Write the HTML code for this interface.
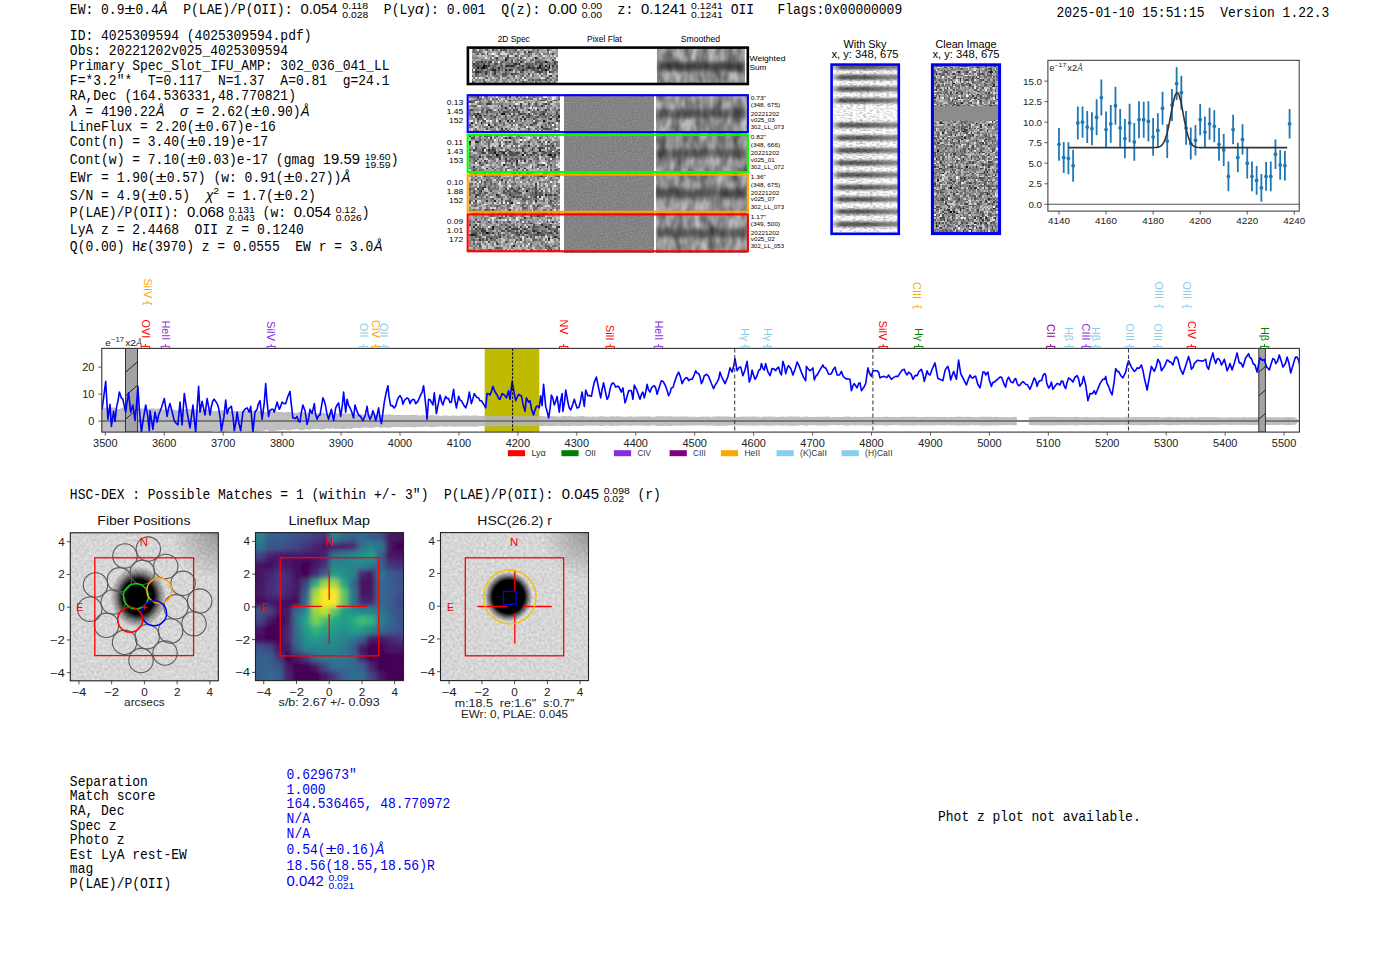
<!DOCTYPE html>
<html><head><meta charset="utf-8"><title>ELiXer report</title>
<style>html,body{margin:0;padding:0;background:#fff;overflow:hidden}svg{display:block} text{white-space:pre}</style></head>
<body><svg xml:space="preserve" width="1400" height="953" viewBox="0 0 1400 953">
<rect x="0" y="0" width="1400" height="953" fill="#fff"/>
<text transform="translate(69.85,13.90) scale(1,1.1)" font-family="Liberation Mono, monospace" font-size="13.01" fill="#000">EW: 0.9</text>
<text x="124.52" y="13.90" font-family="Liberation Sans, sans-serif" font-size="13.75" fill="#000" text-anchor="start" textLength="10.87" lengthAdjust="spacingAndGlyphs" >±</text>
<text transform="translate(135.39,13.90) scale(1,1.1)" font-family="Liberation Mono, monospace" font-size="13.01" fill="#000">0.4</text>
<text x="158.82" y="13.90" font-family="Liberation Sans, sans-serif" font-size="13.75" fill="#000" text-anchor="start" textLength="8.87" lengthAdjust="spacingAndGlyphs" font-style="italic" >Å</text>
<text transform="translate(167.69,13.90) scale(1,1.1)" font-family="Liberation Mono, monospace" font-size="13.01" fill="#000">  P(LAE)/P(OII): </text>
<text x="300.46" y="13.90" font-family="Liberation Sans, sans-serif" font-size="13.75" fill="#000" text-anchor="start" textLength="37.13" lengthAdjust="spacingAndGlyphs" >0.054</text>
<text x="342.29" y="9.20" font-family="Liberation Sans, sans-serif" font-size="9.62" fill="#000" text-anchor="start" textLength="25.99" lengthAdjust="spacingAndGlyphs" >0.118</text>
<text x="342.29" y="17.70" font-family="Liberation Sans, sans-serif" font-size="9.62" fill="#000" text-anchor="start" textLength="25.99" lengthAdjust="spacingAndGlyphs" >0.028</text>
<text transform="translate(368.28,13.90) scale(1,1.1)" font-family="Liberation Mono, monospace" font-size="13.01" fill="#000">  P(Ly</text>
<text x="415.14" y="13.90" font-family="Liberation Sans, sans-serif" font-size="13.75" fill="#000" text-anchor="start" textLength="8.55" lengthAdjust="spacingAndGlyphs" font-style="italic" >α</text>
<text transform="translate(423.24,13.90) scale(1,1.1)" font-family="Liberation Mono, monospace" font-size="13.01" fill="#000">): 0.001  Q(z): </text>
<text x="548.20" y="13.90" font-family="Liberation Sans, sans-serif" font-size="13.75" fill="#000" text-anchor="start" textLength="28.88" lengthAdjust="spacingAndGlyphs" >0.00</text>
<text x="581.78" y="9.20" font-family="Liberation Sans, sans-serif" font-size="9.62" fill="#000" text-anchor="start" textLength="20.22" lengthAdjust="spacingAndGlyphs" >0.00</text>
<text x="581.78" y="17.70" font-family="Liberation Sans, sans-serif" font-size="9.62" fill="#000" text-anchor="start" textLength="20.22" lengthAdjust="spacingAndGlyphs" >0.00</text>
<text transform="translate(602.00,13.90) scale(1,1.1)" font-family="Liberation Mono, monospace" font-size="13.01" fill="#000">  z: </text>
<text x="641.05" y="13.90" font-family="Liberation Sans, sans-serif" font-size="13.75" fill="#000" text-anchor="start" textLength="45.38" lengthAdjust="spacingAndGlyphs" >0.1241</text>
<text x="691.13" y="9.20" font-family="Liberation Sans, sans-serif" font-size="9.62" fill="#000" text-anchor="start" textLength="31.77" lengthAdjust="spacingAndGlyphs" >0.1241</text>
<text x="691.13" y="17.70" font-family="Liberation Sans, sans-serif" font-size="9.62" fill="#000" text-anchor="start" textLength="31.77" lengthAdjust="spacingAndGlyphs" >0.1241</text>
<text transform="translate(722.90,13.90) scale(1,1.1)" font-family="Liberation Mono, monospace" font-size="13.01" fill="#000"> OII   Flags:0x00000009</text>
<text transform="translate(1056.50,16.70) scale(1,1.1)" font-family="Liberation Mono, monospace" font-size="13.01" fill="#000">2025-01-10 15:51:15  Version 1.22.3</text>
<text transform="translate(69.85,40.40) scale(1,1.1)" font-family="Liberation Mono, monospace" font-size="13.01" fill="#000">ID: 4025309594 (4025309594.pdf)</text>
<text transform="translate(69.85,55.00) scale(1,1.1)" font-family="Liberation Mono, monospace" font-size="13.01" fill="#000">Obs: 20221202v025_4025309594</text>
<text transform="translate(69.85,70.00) scale(1,1.1)" font-family="Liberation Mono, monospace" font-size="13.01" fill="#000">Primary Spec_Slot_IFU_AMP: 302_036_041_LL</text>
<text transform="translate(69.85,85.00) scale(1,1.1)" font-family="Liberation Mono, monospace" font-size="13.01" fill="#000">F=*3.2"*  T=0.117  N=1.37  A=0.81  g=24.1</text>
<text transform="translate(69.85,99.50) scale(1,1.1)" font-family="Liberation Mono, monospace" font-size="13.01" fill="#000">RA,Dec (164.536331,48.770821)</text>
<text x="69.85" y="116.20" font-family="Liberation Sans, sans-serif" font-size="13.75" fill="#000" text-anchor="start" textLength="7.68" lengthAdjust="spacingAndGlyphs" font-style="italic" >λ</text>
<text transform="translate(77.53,116.20) scale(1,1.1)" font-family="Liberation Mono, monospace" font-size="13.01" fill="#000"> = 4190.22</text>
<text x="155.63" y="116.20" font-family="Liberation Sans, sans-serif" font-size="13.75" fill="#000" text-anchor="start" textLength="8.87" lengthAdjust="spacingAndGlyphs" font-style="italic" >Å</text>
<text transform="translate(164.50,116.20) scale(1,1.1)" font-family="Liberation Mono, monospace" font-size="13.01" fill="#000">  </text>
<text x="180.12" y="116.20" font-family="Liberation Sans, sans-serif" font-size="13.75" fill="#000" text-anchor="start" textLength="8.22" lengthAdjust="spacingAndGlyphs" font-style="italic" >σ</text>
<text transform="translate(188.34,116.20) scale(1,1.1)" font-family="Liberation Mono, monospace" font-size="13.01" fill="#000"> = 2.62(</text>
<text x="250.82" y="116.20" font-family="Liberation Sans, sans-serif" font-size="13.75" fill="#000" text-anchor="start" textLength="10.87" lengthAdjust="spacingAndGlyphs" >±</text>
<text transform="translate(261.69,116.20) scale(1,1.1)" font-family="Liberation Mono, monospace" font-size="13.01" fill="#000">0.90)</text>
<text x="300.74" y="116.20" font-family="Liberation Sans, sans-serif" font-size="13.75" fill="#000" text-anchor="start" textLength="8.87" lengthAdjust="spacingAndGlyphs" font-style="italic" >Å</text>
<text transform="translate(69.85,131.40) scale(1,1.1)" font-family="Liberation Mono, monospace" font-size="13.01" fill="#000">LineFlux = 2.20(</text>
<text x="194.81" y="131.40" font-family="Liberation Sans, sans-serif" font-size="13.75" fill="#000" text-anchor="start" textLength="10.87" lengthAdjust="spacingAndGlyphs" >±</text>
<text transform="translate(205.68,131.40) scale(1,1.1)" font-family="Liberation Mono, monospace" font-size="13.01" fill="#000">0.67)e-16</text>
<text transform="translate(69.85,146.40) scale(1,1.1)" font-family="Liberation Mono, monospace" font-size="13.01" fill="#000">Cont(n) = 3.40(</text>
<text x="187.00" y="146.40" font-family="Liberation Sans, sans-serif" font-size="13.75" fill="#000" text-anchor="start" textLength="10.87" lengthAdjust="spacingAndGlyphs" >±</text>
<text transform="translate(197.87,146.40) scale(1,1.1)" font-family="Liberation Mono, monospace" font-size="13.01" fill="#000">0.19)e-17</text>
<text transform="translate(69.85,164.30) scale(1,1.1)" font-family="Liberation Mono, monospace" font-size="13.01" fill="#000">Cont(w) = 7.10(</text>
<text x="187.00" y="164.30" font-family="Liberation Sans, sans-serif" font-size="13.75" fill="#000" text-anchor="start" textLength="10.87" lengthAdjust="spacingAndGlyphs" >±</text>
<text transform="translate(197.87,164.30) scale(1,1.1)" font-family="Liberation Mono, monospace" font-size="13.01" fill="#000">0.03)e-17 (gmag </text>
<text x="322.83" y="164.30" font-family="Liberation Sans, sans-serif" font-size="13.75" fill="#000" text-anchor="start" textLength="37.13" lengthAdjust="spacingAndGlyphs" >19.59</text>
<text x="364.66" y="159.60" font-family="Liberation Sans, sans-serif" font-size="9.62" fill="#000" text-anchor="start" textLength="25.99" lengthAdjust="spacingAndGlyphs" >19.60</text>
<text x="364.66" y="168.10" font-family="Liberation Sans, sans-serif" font-size="9.62" fill="#000" text-anchor="start" textLength="25.99" lengthAdjust="spacingAndGlyphs" >19.59</text>
<text transform="translate(390.65,164.30) scale(1,1.1)" font-family="Liberation Mono, monospace" font-size="13.01" fill="#000">)</text>
<text transform="translate(69.85,182.10) scale(1,1.1)" font-family="Liberation Mono, monospace" font-size="13.01" fill="#000">EWr = 1.90(</text>
<text x="155.76" y="182.10" font-family="Liberation Sans, sans-serif" font-size="13.75" fill="#000" text-anchor="start" textLength="10.87" lengthAdjust="spacingAndGlyphs" >±</text>
<text transform="translate(166.63,182.10) scale(1,1.1)" font-family="Liberation Mono, monospace" font-size="13.01" fill="#000">0.57) (w: 0.91(</text>
<text x="283.78" y="182.10" font-family="Liberation Sans, sans-serif" font-size="13.75" fill="#000" text-anchor="start" textLength="10.87" lengthAdjust="spacingAndGlyphs" >±</text>
<text transform="translate(294.64,182.10) scale(1,1.1)" font-family="Liberation Mono, monospace" font-size="13.01" fill="#000">0.27))</text>
<text x="341.50" y="182.10" font-family="Liberation Sans, sans-serif" font-size="13.75" fill="#000" text-anchor="start" textLength="8.87" lengthAdjust="spacingAndGlyphs" font-style="italic" >Å</text>
<text transform="translate(69.85,199.80) scale(1,1.1)" font-family="Liberation Mono, monospace" font-size="13.01" fill="#000">S/N = 4.9(</text>
<text x="147.95" y="199.80" font-family="Liberation Sans, sans-serif" font-size="13.75" fill="#000" text-anchor="start" textLength="10.87" lengthAdjust="spacingAndGlyphs" >±</text>
<text transform="translate(158.82,199.80) scale(1,1.1)" font-family="Liberation Mono, monospace" font-size="13.01" fill="#000">0.5)  </text>
<text x="205.68" y="199.80" font-family="Liberation Sans, sans-serif" font-size="13.75" fill="#000" text-anchor="start" textLength="7.68" lengthAdjust="spacingAndGlyphs" font-style="italic" >χ</text>
<text x="213.35" y="194.00" font-family="Liberation Sans, sans-serif" font-size="9.62" fill="#000" text-anchor="start" textLength="5.78" lengthAdjust="spacingAndGlyphs" >2</text>
<text transform="translate(219.13,199.80) scale(1,1.1)" font-family="Liberation Mono, monospace" font-size="13.01" fill="#000"> = 1.7(</text>
<text x="273.80" y="199.80" font-family="Liberation Sans, sans-serif" font-size="13.75" fill="#000" text-anchor="start" textLength="10.87" lengthAdjust="spacingAndGlyphs" >±</text>
<text transform="translate(284.67,199.80) scale(1,1.1)" font-family="Liberation Mono, monospace" font-size="13.01" fill="#000">0.2)</text>
<text transform="translate(69.85,217.40) scale(1,1.1)" font-family="Liberation Mono, monospace" font-size="13.01" fill="#000">P(LAE)/P(OII): </text>
<text x="187.00" y="217.40" font-family="Liberation Sans, sans-serif" font-size="13.75" fill="#000" text-anchor="start" textLength="37.13" lengthAdjust="spacingAndGlyphs" >0.068</text>
<text x="228.83" y="212.70" font-family="Liberation Sans, sans-serif" font-size="9.62" fill="#000" text-anchor="start" textLength="25.99" lengthAdjust="spacingAndGlyphs" >0.131</text>
<text x="228.83" y="221.20" font-family="Liberation Sans, sans-serif" font-size="9.62" fill="#000" text-anchor="start" textLength="25.99" lengthAdjust="spacingAndGlyphs" >0.043</text>
<text transform="translate(254.82,217.40) scale(1,1.1)" font-family="Liberation Mono, monospace" font-size="13.01" fill="#000"> (w: </text>
<text x="293.87" y="217.40" font-family="Liberation Sans, sans-serif" font-size="13.75" fill="#000" text-anchor="start" textLength="37.13" lengthAdjust="spacingAndGlyphs" >0.054</text>
<text x="335.71" y="212.70" font-family="Liberation Sans, sans-serif" font-size="9.62" fill="#000" text-anchor="start" textLength="20.22" lengthAdjust="spacingAndGlyphs" >0.12</text>
<text x="335.71" y="221.20" font-family="Liberation Sans, sans-serif" font-size="9.62" fill="#000" text-anchor="start" textLength="25.99" lengthAdjust="spacingAndGlyphs" >0.026</text>
<text transform="translate(361.70,217.40) scale(1,1.1)" font-family="Liberation Mono, monospace" font-size="13.01" fill="#000">)</text>
<text transform="translate(69.85,234.30) scale(1,1.1)" font-family="Liberation Mono, monospace" font-size="13.01" fill="#000">LyA z = 2.4468  OII z = 0.1240</text>
<text transform="translate(69.85,251.30) scale(1,1.1)" font-family="Liberation Mono, monospace" font-size="13.01" fill="#000">Q(0.00) H</text>
<text x="140.14" y="251.30" font-family="Liberation Sans, sans-serif" font-size="13.75" fill="#000" text-anchor="start" textLength="7.01" lengthAdjust="spacingAndGlyphs" font-style="italic" >ε</text>
<text transform="translate(147.15,251.30) scale(1,1.1)" font-family="Liberation Mono, monospace" font-size="13.01" fill="#000">(3970) z = 0.0555  EW r = 3.0</text>
<text x="373.64" y="251.30" font-family="Liberation Sans, sans-serif" font-size="13.75" fill="#000" text-anchor="start" textLength="8.87" lengthAdjust="spacingAndGlyphs" font-style="italic" >Å</text>
<text transform="translate(69.85,498.60) scale(1,1.1)" font-family="Liberation Mono, monospace" font-size="13.01" fill="#000">HSC-DEX : Possible Matches = 1 (within +/- 3")  P(LAE)/P(OII): </text>
<text x="561.88" y="498.60" font-family="Liberation Sans, sans-serif" font-size="13.75" fill="#000" text-anchor="start" textLength="37.13" lengthAdjust="spacingAndGlyphs" >0.045</text>
<text x="603.71" y="493.90" font-family="Liberation Sans, sans-serif" font-size="9.62" fill="#000" text-anchor="start" textLength="25.99" lengthAdjust="spacingAndGlyphs" >0.098</text>
<text x="603.71" y="502.40" font-family="Liberation Sans, sans-serif" font-size="9.62" fill="#000" text-anchor="start" textLength="20.22" lengthAdjust="spacingAndGlyphs" >0.02</text>
<text transform="translate(629.70,498.60) scale(1,1.1)" font-family="Liberation Mono, monospace" font-size="13.01" fill="#000"> (r)</text>
<text transform="translate(69.85,785.70) scale(1,1.1)" font-family="Liberation Mono, monospace" font-size="13.01" fill="#000">Separation</text>
<text transform="translate(69.85,800.00) scale(1,1.1)" font-family="Liberation Mono, monospace" font-size="13.01" fill="#000">Match score</text>
<text transform="translate(69.85,815.00) scale(1,1.1)" font-family="Liberation Mono, monospace" font-size="13.01" fill="#000">RA, Dec</text>
<text transform="translate(69.85,829.90) scale(1,1.1)" font-family="Liberation Mono, monospace" font-size="13.01" fill="#000">Spec z</text>
<text transform="translate(69.85,844.30) scale(1,1.1)" font-family="Liberation Mono, monospace" font-size="13.01" fill="#000">Photo z</text>
<text transform="translate(69.85,858.60) scale(1,1.1)" font-family="Liberation Mono, monospace" font-size="13.01" fill="#000">Est LyA rest-EW</text>
<text transform="translate(69.85,873.00) scale(1,1.1)" font-family="Liberation Mono, monospace" font-size="13.01" fill="#000">mag</text>
<text transform="translate(69.85,888.40) scale(1,1.1)" font-family="Liberation Mono, monospace" font-size="13.01" fill="#000">P(LAE)/P(OII)</text>
<text transform="translate(286.60,778.60) scale(1,1.1)" font-family="Liberation Mono, monospace" font-size="13.01" fill="#0000ee">0.629673"</text>
<text transform="translate(286.60,793.60) scale(1,1.1)" font-family="Liberation Mono, monospace" font-size="13.01" fill="#0000ee">1.000</text>
<text transform="translate(286.60,808.00) scale(1,1.1)" font-family="Liberation Mono, monospace" font-size="13.01" fill="#0000ee">164.536465, 48.770972</text>
<text transform="translate(286.60,822.90) scale(1,1.1)" font-family="Liberation Mono, monospace" font-size="13.01" fill="#0000ee">N/A</text>
<text transform="translate(286.60,837.70) scale(1,1.1)" font-family="Liberation Mono, monospace" font-size="13.01" fill="#0000ee">N/A</text>
<text transform="translate(286.60,854.20) scale(1,1.1)" font-family="Liberation Mono, monospace" font-size="13.01" fill="#0000ee">0.54(</text>
<text x="325.65" y="854.20" font-family="Liberation Sans, sans-serif" font-size="13.75" fill="#0000ee" text-anchor="start" textLength="10.87" lengthAdjust="spacingAndGlyphs" >±</text>
<text transform="translate(336.52,854.20) scale(1,1.1)" font-family="Liberation Mono, monospace" font-size="13.01" fill="#0000ee">0.16)</text>
<text x="375.57" y="854.20" font-family="Liberation Sans, sans-serif" font-size="13.75" fill="#0000ee" text-anchor="start" textLength="8.87" lengthAdjust="spacingAndGlyphs" font-style="italic" >Å</text>
<text transform="translate(286.60,869.90) scale(1,1.1)" font-family="Liberation Mono, monospace" font-size="13.01" fill="#0000ee">18.56(18.55,18.56)R</text>
<text x="286.60" y="885.60" font-family="Liberation Sans, sans-serif" font-size="13.75" fill="#0000ee" text-anchor="start" textLength="37.13" lengthAdjust="spacingAndGlyphs" >0.042</text>
<text x="328.43" y="880.90" font-family="Liberation Sans, sans-serif" font-size="9.62" fill="#0000ee" text-anchor="start" textLength="20.22" lengthAdjust="spacingAndGlyphs" >0.09</text>
<text x="328.43" y="889.40" font-family="Liberation Sans, sans-serif" font-size="9.62" fill="#0000ee" text-anchor="start" textLength="25.99" lengthAdjust="spacingAndGlyphs" >0.021</text>
<text transform="translate(938.00,821.40) scale(1,1.1)" font-family="Liberation Mono, monospace" font-size="13.01" fill="#000">Phot z plot not available.</text>
<defs>
<filter id="nz0" x="0" y="0" width="1" height="1" filterUnits="objectBoundingBox" color-interpolation-filters="sRGB"><feTurbulence type="fractalNoise" baseFrequency="0.42" numOctaves="1" seed="11" result="t"/><feColorMatrix in="t" type="matrix" values="1.8 0 0 0 -0.32  1.8 0 0 0 -0.32  1.8 0 0 0 -0.32  0 0 0 0 1"/></filter>
<filter id="nz1" x="0" y="0" width="1" height="1" filterUnits="objectBoundingBox" color-interpolation-filters="sRGB"><feTurbulence type="fractalNoise" baseFrequency="0.42" numOctaves="1" seed="12" result="t"/><feColorMatrix in="t" type="matrix" values="1.8 0 0 0 -0.32  1.8 0 0 0 -0.32  1.8 0 0 0 -0.32  0 0 0 0 1"/></filter>
<filter id="nz2" x="0" y="0" width="1" height="1" filterUnits="objectBoundingBox" color-interpolation-filters="sRGB"><feTurbulence type="fractalNoise" baseFrequency="0.42" numOctaves="1" seed="13" result="t"/><feColorMatrix in="t" type="matrix" values="1.8 0 0 0 -0.32  1.8 0 0 0 -0.32  1.8 0 0 0 -0.32  0 0 0 0 1"/></filter>
<filter id="nz3" x="0" y="0" width="1" height="1" filterUnits="objectBoundingBox" color-interpolation-filters="sRGB"><feTurbulence type="fractalNoise" baseFrequency="0.42" numOctaves="1" seed="14" result="t"/><feColorMatrix in="t" type="matrix" values="1.8 0 0 0 -0.32  1.8 0 0 0 -0.32  1.8 0 0 0 -0.32  0 0 0 0 1"/></filter>
<filter id="nz4" x="0" y="0" width="1" height="1" filterUnits="objectBoundingBox" color-interpolation-filters="sRGB"><feTurbulence type="fractalNoise" baseFrequency="0.42" numOctaves="1" seed="15" result="t"/><feColorMatrix in="t" type="matrix" values="1.8 0 0 0 -0.32  1.8 0 0 0 -0.32  1.8 0 0 0 -0.32  0 0 0 0 1"/></filter>
<filter id="nz5" x="0" y="0" width="1" height="1" filterUnits="objectBoundingBox" color-interpolation-filters="sRGB"><feTurbulence type="fractalNoise" baseFrequency="0.42" numOctaves="1" seed="16" result="t"/><feColorMatrix in="t" type="matrix" values="1.8 0 0 0 -0.32  1.8 0 0 0 -0.32  1.8 0 0 0 -0.32  0 0 0 0 1"/></filter>
<filter id="nz6" x="0" y="0" width="1" height="1" filterUnits="objectBoundingBox" color-interpolation-filters="sRGB"><feTurbulence type="fractalNoise" baseFrequency="0.42" numOctaves="1" seed="17" result="t"/><feColorMatrix in="t" type="matrix" values="1.8 0 0 0 -0.32  1.8 0 0 0 -0.32  1.8 0 0 0 -0.32  0 0 0 0 1"/></filter>
<filter id="nz7" x="0" y="0" width="1" height="1" filterUnits="objectBoundingBox" color-interpolation-filters="sRGB"><feTurbulence type="fractalNoise" baseFrequency="0.42" numOctaves="1" seed="18" result="t"/><feColorMatrix in="t" type="matrix" values="1.8 0 0 0 -0.32  1.8 0 0 0 -0.32  1.8 0 0 0 -0.32  0 0 0 0 1"/></filter>
<filter id="nz8" x="0" y="0" width="1" height="1" filterUnits="objectBoundingBox" color-interpolation-filters="sRGB"><feTurbulence type="fractalNoise" baseFrequency="0.42" numOctaves="1" seed="19" result="t"/><feColorMatrix in="t" type="matrix" values="1.8 0 0 0 -0.32  1.8 0 0 0 -0.32  1.8 0 0 0 -0.32  0 0 0 0 1"/></filter>
<filter id="nz9" x="0" y="0" width="1" height="1" filterUnits="objectBoundingBox" color-interpolation-filters="sRGB"><feTurbulence type="fractalNoise" baseFrequency="0.42" numOctaves="1" seed="20" result="t"/><feColorMatrix in="t" type="matrix" values="1.8 0 0 0 -0.32  1.8 0 0 0 -0.32  1.8 0 0 0 -0.32  0 0 0 0 1"/></filter>
<filter id="nz10" x="0" y="0" width="1" height="1" filterUnits="objectBoundingBox" color-interpolation-filters="sRGB"><feTurbulence type="fractalNoise" baseFrequency="0.42" numOctaves="1" seed="21" result="t"/><feColorMatrix in="t" type="matrix" values="1.8 0 0 0 -0.32  1.8 0 0 0 -0.32  1.8 0 0 0 -0.32  0 0 0 0 1"/></filter>
<filter id="nz11" x="0" y="0" width="1" height="1" filterUnits="objectBoundingBox" color-interpolation-filters="sRGB"><feTurbulence type="fractalNoise" baseFrequency="0.42" numOctaves="1" seed="22" result="t"/><feColorMatrix in="t" type="matrix" values="1.8 0 0 0 -0.32  1.8 0 0 0 -0.32  1.8 0 0 0 -0.32  0 0 0 0 1"/></filter>
<filter id="sm0" x="0" y="0" width="1" height="1" filterUnits="objectBoundingBox" color-interpolation-filters="sRGB"><feTurbulence type="fractalNoise" baseFrequency="0.12 0.06" numOctaves="2" seed="31" result="t"/><feColorMatrix in="t" type="matrix" values="0.62 0 0 0 0.25  0.62 0 0 0 0.25  0.62 0 0 0 0.25  0 0 0 0 1"/></filter>
<filter id="sm1" x="0" y="0" width="1" height="1" filterUnits="objectBoundingBox" color-interpolation-filters="sRGB"><feTurbulence type="fractalNoise" baseFrequency="0.12 0.06" numOctaves="2" seed="32" result="t"/><feColorMatrix in="t" type="matrix" values="0.62 0 0 0 0.25  0.62 0 0 0 0.25  0.62 0 0 0 0.25  0 0 0 0 1"/></filter>
<filter id="sm2" x="0" y="0" width="1" height="1" filterUnits="objectBoundingBox" color-interpolation-filters="sRGB"><feTurbulence type="fractalNoise" baseFrequency="0.12 0.06" numOctaves="2" seed="33" result="t"/><feColorMatrix in="t" type="matrix" values="0.62 0 0 0 0.25  0.62 0 0 0 0.25  0.62 0 0 0 0.25  0 0 0 0 1"/></filter>
<filter id="sm3" x="0" y="0" width="1" height="1" filterUnits="objectBoundingBox" color-interpolation-filters="sRGB"><feTurbulence type="fractalNoise" baseFrequency="0.12 0.06" numOctaves="2" seed="34" result="t"/><feColorMatrix in="t" type="matrix" values="0.62 0 0 0 0.25  0.62 0 0 0 0.25  0.62 0 0 0 0.25  0 0 0 0 1"/></filter>
<filter id="sm4" x="0" y="0" width="1" height="1" filterUnits="objectBoundingBox" color-interpolation-filters="sRGB"><feTurbulence type="fractalNoise" baseFrequency="0.12 0.06" numOctaves="2" seed="35" result="t"/><feColorMatrix in="t" type="matrix" values="0.62 0 0 0 0.25  0.62 0 0 0 0.25  0.62 0 0 0 0.25  0 0 0 0 1"/></filter>
<filter id="sm5" x="0" y="0" width="1" height="1" filterUnits="objectBoundingBox" color-interpolation-filters="sRGB"><feTurbulence type="fractalNoise" baseFrequency="0.12 0.06" numOctaves="2" seed="36" result="t"/><feColorMatrix in="t" type="matrix" values="0.62 0 0 0 0.25  0.62 0 0 0 0.25  0.62 0 0 0 0.25  0 0 0 0 1"/></filter>
<filter id="flat" x="0" y="0" width="1" height="1" filterUnits="objectBoundingBox" color-interpolation-filters="sRGB"><feTurbulence type="fractalNoise" baseFrequency="0.8" numOctaves="1" seed="5" result="t"/><feColorMatrix in="t" type="matrix" values="0.25 0 0 0 0.39  0.25 0 0 0 0.39  0.25 0 0 0 0.39  0 0 0 0 1"/></filter>
<filter id="skyn" x="0" y="0" width="1" height="1" filterUnits="objectBoundingBox" color-interpolation-filters="sRGB"><feTurbulence type="fractalNoise" baseFrequency="0.3 0.6" numOctaves="1" seed="77" result="t"/><feColorMatrix in="t" type="matrix" values="0.9 0 0 0 0.5  0.9 0 0 0 0.5  0.9 0 0 0 0.5  0 0 0 0 1"/></filter>
<filter id="cln" x="0" y="0" width="1" height="1" filterUnits="objectBoundingBox" color-interpolation-filters="sRGB"><feTurbulence type="fractalNoise" baseFrequency="0.6" numOctaves="1" seed="91" result="t"/><feColorMatrix in="t" type="matrix" values="2.0 0 0 0 -0.45  2.0 0 0 0 -0.45  2.0 0 0 0 -0.45  0 0 0 0 1"/></filter>
<filter id="vb" x="-0.2" y="-1" width="1.4" height="3"><feGaussianBlur stdDeviation="1.5 2"/></filter>
<filter id="b1" x="-0.5" y="-0.5" width="2" height="2"><feGaussianBlur stdDeviation="1"/></filter>
</defs>
<text x="513.70" y="42.00" font-family="Liberation Sans, sans-serif" font-size="8.16" fill="#000" text-anchor="middle" textLength="32.02" lengthAdjust="spacingAndGlyphs" >2D Spec</text>
<text x="604.50" y="42.00" font-family="Liberation Sans, sans-serif" font-size="8.16" fill="#000" text-anchor="middle" textLength="34.97" lengthAdjust="spacingAndGlyphs" >Pixel Flat</text>
<text x="700.50" y="42.00" font-family="Liberation Sans, sans-serif" font-size="8.16" fill="#000" text-anchor="middle" textLength="39.33" lengthAdjust="spacingAndGlyphs" >Smoothed</text>
<g>
<rect x="468" y="47.5" width="280" height="37" fill="#fff"/>
<g transform="translate(471.50,47.50) scale(1.8804,1.9474)" shape-rendering="crispEdges">
<path d="M6 10h1v1h-1z" fill="#000000"/>
<path d="M18 6h1v1h-1zM39 7h1v1h-1zM25 8h1v1h-1zM6 9h1v1h-1zM36 9h1v1h-1zM41 9h1v1h-1zM3 10h1v1h-1zM41 10h1v1h-1zM39 11h1v1h-1z" fill="#141414"/>
<path d="M42 0h1v1h-1zM34 5h1v1h-1zM23 8h1v1h-1zM7 9h1v1h-1zM19 9h1v1h-1zM21 9h1v1h-1zM39 9h1v1h-1zM5 10h1v1h-1zM14 10h1v1h-1zM30 10h1v1h-1zM35 10h1v1h-1zM36 10h1v1h-1zM11 11h1v1h-1zM12 11h1v1h-1zM18 11h1v1h-1zM20 11h1v1h-1zM27 11h1v1h-1zM3 12h1v1h-1zM41 12h1v1h-1z" fill="#272727"/>
<path d="M24 0h1v1h-1zM30 2h1v1h-1zM23 4h1v1h-1zM13 5h1v1h-1zM5 7h1v1h-1zM10 7h1v1h-1zM16 7h1v1h-1zM26 7h1v1h-1zM44 7h1v1h-1zM1 8h1v1h-1zM22 8h1v1h-1zM37 8h1v1h-1zM9 9h1v1h-1zM18 9h1v1h-1zM22 9h1v1h-1zM27 9h1v1h-1zM30 9h1v1h-1zM43 9h1v1h-1zM32 10h1v1h-1zM2 11h1v1h-1zM37 11h1v1h-1zM2 12h1v1h-1zM4 12h1v1h-1zM7 12h1v1h-1zM12 12h1v1h-1zM35 12h1v1h-1zM36 12h1v1h-1zM7 13h1v1h-1zM12 13h1v1h-1zM21 13h1v1h-1zM42 14h1v1h-1z" fill="#3b3b3b"/>
<path d="M3 0h1v1h-1zM20 0h1v1h-1zM21 0h1v1h-1zM8 1h1v1h-1zM11 1h1v1h-1zM15 1h1v1h-1zM17 1h1v1h-1zM23 1h1v1h-1zM40 1h1v1h-1zM28 2h1v1h-1zM31 2h1v1h-1zM8 3h1v1h-1zM43 3h1v1h-1zM19 4h1v1h-1zM18 5h1v1h-1zM19 5h1v1h-1zM26 5h1v1h-1zM43 6h1v1h-1zM7 7h1v1h-1zM9 7h1v1h-1zM21 7h1v1h-1zM35 7h1v1h-1zM3 8h1v1h-1zM6 8h1v1h-1zM9 8h1v1h-1zM12 8h1v1h-1zM13 8h1v1h-1zM15 8h1v1h-1zM29 8h1v1h-1zM34 8h1v1h-1zM44 8h1v1h-1zM2 9h1v1h-1zM3 9h1v1h-1zM4 9h1v1h-1zM16 9h1v1h-1zM20 9h1v1h-1zM37 9h1v1h-1zM45 9h1v1h-1zM7 10h1v1h-1zM8 10h1v1h-1zM11 10h1v1h-1zM24 10h1v1h-1zM25 10h1v1h-1zM29 10h1v1h-1zM31 10h1v1h-1zM33 10h1v1h-1zM37 10h1v1h-1zM38 10h1v1h-1zM40 10h1v1h-1zM0 11h1v1h-1zM5 11h1v1h-1zM10 11h1v1h-1zM14 11h1v1h-1zM16 11h1v1h-1zM21 11h1v1h-1zM32 11h1v1h-1zM35 11h1v1h-1zM38 11h1v1h-1zM40 11h1v1h-1zM26 12h1v1h-1zM37 12h1v1h-1zM42 12h1v1h-1zM2 13h1v1h-1zM17 13h1v1h-1zM18 13h1v1h-1zM23 13h1v1h-1zM30 13h1v1h-1zM16 14h1v1h-1zM41 14h1v1h-1zM45 14h1v1h-1zM40 15h1v1h-1zM32 16h1v1h-1zM36 16h1v1h-1zM39 16h1v1h-1zM0 17h1v1h-1zM36 18h1v1h-1zM41 18h1v1h-1z" fill="#4e4e4e"/>
<path d="M5 0h1v1h-1zM7 0h1v1h-1zM33 0h1v1h-1zM38 0h1v1h-1zM44 0h1v1h-1zM1 1h1v1h-1zM18 1h1v1h-1zM35 1h1v1h-1zM1 2h1v1h-1zM4 2h1v1h-1zM3 3h1v1h-1zM5 3h1v1h-1zM14 3h1v1h-1zM21 3h1v1h-1zM11 4h1v1h-1zM30 4h1v1h-1zM41 4h1v1h-1zM13 6h1v1h-1zM21 6h1v1h-1zM24 6h1v1h-1zM32 6h1v1h-1zM0 7h1v1h-1zM2 7h1v1h-1zM3 7h1v1h-1zM4 7h1v1h-1zM27 7h1v1h-1zM34 7h1v1h-1zM36 7h1v1h-1zM38 7h1v1h-1zM40 7h1v1h-1zM45 7h1v1h-1zM2 8h1v1h-1zM20 8h1v1h-1zM24 8h1v1h-1zM30 8h1v1h-1zM32 8h1v1h-1zM36 8h1v1h-1zM41 8h1v1h-1zM1 9h1v1h-1zM5 9h1v1h-1zM8 9h1v1h-1zM11 9h1v1h-1zM12 9h1v1h-1zM15 9h1v1h-1zM25 9h1v1h-1zM26 9h1v1h-1zM29 9h1v1h-1zM31 9h1v1h-1zM32 9h1v1h-1zM1 10h1v1h-1zM4 10h1v1h-1zM16 10h1v1h-1zM27 10h1v1h-1zM34 10h1v1h-1zM43 10h1v1h-1zM45 10h1v1h-1zM8 11h1v1h-1zM25 11h1v1h-1zM26 11h1v1h-1zM28 11h1v1h-1zM29 11h1v1h-1zM33 11h1v1h-1zM34 11h1v1h-1zM44 11h1v1h-1zM1 12h1v1h-1zM5 12h1v1h-1zM8 12h1v1h-1zM18 12h1v1h-1zM27 12h1v1h-1zM34 12h1v1h-1zM39 12h1v1h-1zM43 12h1v1h-1zM3 13h1v1h-1zM11 13h1v1h-1zM16 13h1v1h-1zM22 13h1v1h-1zM36 13h1v1h-1zM39 13h1v1h-1zM0 14h1v1h-1zM2 14h1v1h-1zM13 14h1v1h-1zM17 14h1v1h-1zM18 14h1v1h-1zM22 14h1v1h-1zM27 14h1v1h-1zM32 14h1v1h-1zM37 14h1v1h-1zM7 15h1v1h-1zM8 15h1v1h-1zM14 15h1v1h-1zM19 15h1v1h-1zM28 15h1v1h-1zM6 16h1v1h-1zM16 16h1v1h-1zM23 16h1v1h-1zM25 16h1v1h-1zM30 16h1v1h-1zM35 16h1v1h-1zM42 16h1v1h-1zM45 16h1v1h-1zM1 17h1v1h-1zM6 17h1v1h-1zM27 17h1v1h-1zM34 17h1v1h-1zM41 17h1v1h-1zM2 18h1v1h-1zM17 18h1v1h-1zM21 18h1v1h-1zM28 18h1v1h-1zM29 18h1v1h-1z" fill="#626262"/>
<path d="M14 0h1v1h-1zM25 0h1v1h-1zM43 0h1v1h-1zM45 0h1v1h-1zM4 1h1v1h-1zM7 1h1v1h-1zM13 1h1v1h-1zM22 1h1v1h-1zM32 1h1v1h-1zM33 1h1v1h-1zM2 2h1v1h-1zM3 2h1v1h-1zM18 2h1v1h-1zM20 2h1v1h-1zM22 2h1v1h-1zM24 2h1v1h-1zM32 2h1v1h-1zM35 2h1v1h-1zM40 2h1v1h-1zM2 3h1v1h-1zM6 3h1v1h-1zM24 3h1v1h-1zM28 3h1v1h-1zM30 3h1v1h-1zM31 3h1v1h-1zM36 3h1v1h-1zM38 3h1v1h-1zM40 3h1v1h-1zM15 4h1v1h-1zM27 4h1v1h-1zM36 4h1v1h-1zM2 5h1v1h-1zM10 5h1v1h-1zM12 5h1v1h-1zM16 5h1v1h-1zM35 5h1v1h-1zM38 5h1v1h-1zM44 5h1v1h-1zM5 6h1v1h-1zM10 6h1v1h-1zM11 6h1v1h-1zM25 6h1v1h-1zM27 6h1v1h-1zM28 6h1v1h-1zM31 6h1v1h-1zM34 6h1v1h-1zM35 6h1v1h-1zM36 6h1v1h-1zM6 7h1v1h-1zM12 7h1v1h-1zM15 7h1v1h-1zM17 7h1v1h-1zM19 7h1v1h-1zM23 7h1v1h-1zM24 7h1v1h-1zM31 7h1v1h-1zM37 7h1v1h-1zM4 8h1v1h-1zM5 8h1v1h-1zM8 8h1v1h-1zM18 8h1v1h-1zM19 8h1v1h-1zM28 8h1v1h-1zM31 8h1v1h-1zM40 8h1v1h-1zM42 8h1v1h-1zM43 8h1v1h-1zM0 9h1v1h-1zM23 9h1v1h-1zM33 9h1v1h-1zM35 9h1v1h-1zM40 9h1v1h-1zM2 10h1v1h-1zM10 10h1v1h-1zM12 10h1v1h-1zM13 10h1v1h-1zM15 10h1v1h-1zM17 10h1v1h-1zM18 10h1v1h-1zM20 10h1v1h-1zM21 10h1v1h-1zM22 10h1v1h-1zM26 10h1v1h-1zM28 10h1v1h-1zM3 11h1v1h-1zM4 11h1v1h-1zM9 11h1v1h-1zM13 11h1v1h-1zM19 11h1v1h-1zM23 11h1v1h-1zM24 11h1v1h-1zM31 11h1v1h-1zM43 11h1v1h-1zM45 11h1v1h-1zM0 12h1v1h-1zM6 12h1v1h-1zM9 12h1v1h-1zM11 12h1v1h-1zM13 12h1v1h-1zM14 12h1v1h-1zM19 12h1v1h-1zM23 12h1v1h-1zM33 12h1v1h-1zM5 13h1v1h-1zM8 13h1v1h-1zM19 13h1v1h-1zM24 13h1v1h-1zM27 13h1v1h-1zM32 13h1v1h-1zM3 14h1v1h-1zM6 14h1v1h-1zM12 14h1v1h-1zM26 14h1v1h-1zM29 14h1v1h-1zM1 15h1v1h-1zM22 15h1v1h-1zM26 15h1v1h-1zM39 15h1v1h-1zM0 16h1v1h-1zM13 16h1v1h-1zM18 16h1v1h-1zM34 16h1v1h-1zM38 16h1v1h-1zM7 17h1v1h-1zM17 17h1v1h-1zM28 17h1v1h-1zM40 17h1v1h-1zM44 17h1v1h-1zM1 18h1v1h-1zM5 18h1v1h-1zM9 18h1v1h-1zM15 18h1v1h-1zM32 18h1v1h-1zM45 18h1v1h-1z" fill="#767676"/>
<path d="M4 0h1v1h-1zM13 0h1v1h-1zM27 0h1v1h-1zM28 0h1v1h-1zM29 0h1v1h-1zM37 0h1v1h-1zM41 0h1v1h-1zM2 1h1v1h-1zM5 1h1v1h-1zM12 1h1v1h-1zM16 1h1v1h-1zM20 1h1v1h-1zM21 1h1v1h-1zM26 1h1v1h-1zM27 1h1v1h-1zM41 1h1v1h-1zM45 1h1v1h-1zM0 2h1v1h-1zM5 2h1v1h-1zM9 2h1v1h-1zM14 2h1v1h-1zM15 2h1v1h-1zM25 2h1v1h-1zM34 2h1v1h-1zM20 3h1v1h-1zM29 3h1v1h-1zM34 3h1v1h-1zM35 3h1v1h-1zM39 3h1v1h-1zM42 3h1v1h-1zM0 4h1v1h-1zM9 4h1v1h-1zM17 4h1v1h-1zM24 4h1v1h-1zM45 4h1v1h-1zM0 5h1v1h-1zM1 5h1v1h-1zM3 5h1v1h-1zM20 5h1v1h-1zM21 5h1v1h-1zM22 5h1v1h-1zM24 5h1v1h-1zM33 5h1v1h-1zM42 5h1v1h-1zM1 6h1v1h-1zM6 6h1v1h-1zM7 6h1v1h-1zM8 6h1v1h-1zM14 6h1v1h-1zM17 6h1v1h-1zM19 6h1v1h-1zM23 6h1v1h-1zM26 6h1v1h-1zM37 6h1v1h-1zM13 7h1v1h-1zM18 7h1v1h-1zM41 7h1v1h-1zM43 7h1v1h-1zM0 8h1v1h-1zM7 8h1v1h-1zM10 8h1v1h-1zM16 8h1v1h-1zM21 8h1v1h-1zM35 8h1v1h-1zM45 8h1v1h-1zM10 9h1v1h-1zM13 9h1v1h-1zM14 9h1v1h-1zM28 9h1v1h-1zM38 9h1v1h-1zM44 9h1v1h-1zM19 10h1v1h-1zM23 10h1v1h-1zM39 10h1v1h-1zM44 10h1v1h-1zM6 11h1v1h-1zM7 11h1v1h-1zM15 11h1v1h-1zM17 12h1v1h-1zM20 12h1v1h-1zM29 12h1v1h-1zM31 12h1v1h-1zM38 12h1v1h-1zM45 12h1v1h-1zM6 13h1v1h-1zM9 13h1v1h-1zM14 13h1v1h-1zM15 13h1v1h-1zM20 13h1v1h-1zM25 13h1v1h-1zM26 13h1v1h-1zM38 13h1v1h-1zM4 14h1v1h-1zM5 14h1v1h-1zM9 14h1v1h-1zM11 14h1v1h-1zM14 14h1v1h-1zM21 14h1v1h-1zM30 14h1v1h-1zM10 15h1v1h-1zM20 15h1v1h-1zM31 15h1v1h-1zM41 15h1v1h-1zM43 15h1v1h-1zM45 15h1v1h-1zM2 16h1v1h-1zM3 16h1v1h-1zM4 16h1v1h-1zM10 16h1v1h-1zM11 16h1v1h-1zM14 16h1v1h-1zM27 16h1v1h-1zM31 16h1v1h-1zM33 16h1v1h-1zM37 16h1v1h-1zM41 16h1v1h-1zM44 16h1v1h-1zM4 17h1v1h-1zM12 17h1v1h-1zM13 17h1v1h-1zM21 17h1v1h-1zM22 17h1v1h-1zM25 17h1v1h-1zM26 17h1v1h-1zM29 17h1v1h-1zM31 17h1v1h-1zM32 17h1v1h-1zM36 17h1v1h-1zM37 17h1v1h-1zM8 18h1v1h-1zM25 18h1v1h-1zM27 18h1v1h-1zM30 18h1v1h-1zM33 18h1v1h-1zM34 18h1v1h-1zM37 18h1v1h-1zM40 18h1v1h-1z" fill="#898989"/>
<path d="M2 0h1v1h-1zM16 0h1v1h-1zM18 0h1v1h-1zM26 0h1v1h-1zM31 0h1v1h-1zM32 0h1v1h-1zM0 1h1v1h-1zM9 1h1v1h-1zM19 1h1v1h-1zM30 1h1v1h-1zM34 1h1v1h-1zM36 1h1v1h-1zM37 1h1v1h-1zM42 1h1v1h-1zM8 2h1v1h-1zM10 2h1v1h-1zM13 2h1v1h-1zM21 2h1v1h-1zM23 2h1v1h-1zM37 2h1v1h-1zM38 2h1v1h-1zM43 2h1v1h-1zM44 2h1v1h-1zM45 2h1v1h-1zM13 3h1v1h-1zM19 3h1v1h-1zM25 3h1v1h-1zM44 3h1v1h-1zM45 3h1v1h-1zM1 4h1v1h-1zM2 4h1v1h-1zM10 4h1v1h-1zM14 4h1v1h-1zM16 4h1v1h-1zM26 4h1v1h-1zM28 4h1v1h-1zM29 4h1v1h-1zM31 4h1v1h-1zM37 4h1v1h-1zM43 4h1v1h-1zM4 5h1v1h-1zM5 5h1v1h-1zM6 5h1v1h-1zM14 5h1v1h-1zM29 5h1v1h-1zM32 5h1v1h-1zM37 5h1v1h-1zM40 5h1v1h-1zM3 6h1v1h-1zM4 6h1v1h-1zM9 6h1v1h-1zM12 6h1v1h-1zM15 6h1v1h-1zM16 6h1v1h-1zM20 6h1v1h-1zM38 6h1v1h-1zM39 6h1v1h-1zM44 6h1v1h-1zM20 7h1v1h-1zM29 7h1v1h-1zM30 7h1v1h-1zM33 7h1v1h-1zM42 7h1v1h-1zM11 8h1v1h-1zM14 8h1v1h-1zM26 8h1v1h-1zM33 8h1v1h-1zM38 8h1v1h-1zM39 8h1v1h-1zM17 9h1v1h-1zM24 9h1v1h-1zM34 9h1v1h-1zM42 9h1v1h-1zM9 10h1v1h-1zM42 10h1v1h-1zM17 11h1v1h-1zM30 11h1v1h-1zM36 11h1v1h-1zM41 11h1v1h-1zM15 12h1v1h-1zM16 12h1v1h-1zM21 12h1v1h-1zM30 12h1v1h-1zM44 12h1v1h-1zM1 13h1v1h-1zM4 13h1v1h-1zM13 13h1v1h-1zM28 13h1v1h-1zM34 13h1v1h-1zM43 13h1v1h-1zM44 13h1v1h-1zM1 14h1v1h-1zM7 14h1v1h-1zM19 14h1v1h-1zM24 14h1v1h-1zM25 14h1v1h-1zM33 14h1v1h-1zM34 14h1v1h-1zM35 14h1v1h-1zM38 14h1v1h-1zM39 14h1v1h-1zM3 15h1v1h-1zM12 15h1v1h-1zM13 15h1v1h-1zM25 15h1v1h-1zM29 15h1v1h-1zM30 15h1v1h-1zM32 15h1v1h-1zM34 15h1v1h-1zM35 15h1v1h-1zM36 15h1v1h-1zM44 15h1v1h-1zM5 16h1v1h-1zM8 16h1v1h-1zM17 16h1v1h-1zM20 16h1v1h-1zM21 16h1v1h-1zM24 16h1v1h-1zM40 16h1v1h-1zM2 17h1v1h-1zM9 17h1v1h-1zM10 17h1v1h-1zM16 17h1v1h-1zM18 17h1v1h-1zM19 17h1v1h-1zM23 17h1v1h-1zM30 17h1v1h-1zM35 17h1v1h-1zM38 17h1v1h-1zM39 17h1v1h-1zM43 17h1v1h-1zM0 18h1v1h-1zM4 18h1v1h-1zM10 18h1v1h-1zM13 18h1v1h-1zM14 18h1v1h-1zM20 18h1v1h-1zM22 18h1v1h-1zM31 18h1v1h-1zM39 18h1v1h-1zM42 18h1v1h-1z" fill="#9d9d9d"/>
<path d="M0 0h1v1h-1zM6 0h1v1h-1zM9 0h1v1h-1zM11 0h1v1h-1zM17 0h1v1h-1zM22 0h1v1h-1zM34 0h1v1h-1zM36 0h1v1h-1zM39 0h1v1h-1zM40 0h1v1h-1zM6 1h1v1h-1zM29 1h1v1h-1zM38 1h1v1h-1zM39 1h1v1h-1zM11 2h1v1h-1zM12 2h1v1h-1zM19 2h1v1h-1zM26 2h1v1h-1zM27 2h1v1h-1zM33 2h1v1h-1zM39 2h1v1h-1zM0 3h1v1h-1zM1 3h1v1h-1zM9 3h1v1h-1zM22 3h1v1h-1zM41 3h1v1h-1zM3 4h1v1h-1zM5 4h1v1h-1zM7 4h1v1h-1zM8 4h1v1h-1zM22 4h1v1h-1zM35 4h1v1h-1zM39 4h1v1h-1zM40 4h1v1h-1zM8 5h1v1h-1zM9 5h1v1h-1zM15 5h1v1h-1zM23 5h1v1h-1zM27 5h1v1h-1zM30 5h1v1h-1zM39 5h1v1h-1zM41 5h1v1h-1zM43 5h1v1h-1zM0 6h1v1h-1zM2 6h1v1h-1zM22 6h1v1h-1zM29 6h1v1h-1zM41 6h1v1h-1zM42 6h1v1h-1zM8 7h1v1h-1zM22 7h1v1h-1zM32 7h1v1h-1zM17 8h1v1h-1zM27 8h1v1h-1zM0 10h1v1h-1zM22 11h1v1h-1zM42 11h1v1h-1zM10 12h1v1h-1zM24 12h1v1h-1zM28 12h1v1h-1zM10 13h1v1h-1zM29 13h1v1h-1zM33 13h1v1h-1zM45 13h1v1h-1zM10 14h1v1h-1zM15 14h1v1h-1zM20 14h1v1h-1zM40 14h1v1h-1zM43 14h1v1h-1zM44 14h1v1h-1zM6 15h1v1h-1zM9 15h1v1h-1zM16 15h1v1h-1zM17 15h1v1h-1zM18 15h1v1h-1zM24 15h1v1h-1zM33 15h1v1h-1zM42 15h1v1h-1zM12 16h1v1h-1zM19 16h1v1h-1zM26 16h1v1h-1zM29 16h1v1h-1zM43 16h1v1h-1zM3 17h1v1h-1zM5 17h1v1h-1zM11 17h1v1h-1zM14 17h1v1h-1zM42 17h1v1h-1zM3 18h1v1h-1zM6 18h1v1h-1zM19 18h1v1h-1zM35 18h1v1h-1z" fill="#b1b1b1"/>
<path d="M1 0h1v1h-1zM8 0h1v1h-1zM12 0h1v1h-1zM19 0h1v1h-1zM30 0h1v1h-1zM10 1h1v1h-1zM14 1h1v1h-1zM24 1h1v1h-1zM28 1h1v1h-1zM31 1h1v1h-1zM43 1h1v1h-1zM44 1h1v1h-1zM6 2h1v1h-1zM17 2h1v1h-1zM29 2h1v1h-1zM36 2h1v1h-1zM42 2h1v1h-1zM4 3h1v1h-1zM7 3h1v1h-1zM10 3h1v1h-1zM23 3h1v1h-1zM26 3h1v1h-1zM32 3h1v1h-1zM33 3h1v1h-1zM4 4h1v1h-1zM6 4h1v1h-1zM12 4h1v1h-1zM18 4h1v1h-1zM32 4h1v1h-1zM33 4h1v1h-1zM34 4h1v1h-1zM42 4h1v1h-1zM36 5h1v1h-1zM30 6h1v1h-1zM40 6h1v1h-1zM1 7h1v1h-1zM25 7h1v1h-1zM28 7h1v1h-1zM22 12h1v1h-1zM25 12h1v1h-1zM32 12h1v1h-1zM0 13h1v1h-1zM31 13h1v1h-1zM37 13h1v1h-1zM8 14h1v1h-1zM28 14h1v1h-1zM5 15h1v1h-1zM15 15h1v1h-1zM21 15h1v1h-1zM23 15h1v1h-1zM38 15h1v1h-1zM1 16h1v1h-1zM9 16h1v1h-1zM15 16h1v1h-1zM22 16h1v1h-1zM8 17h1v1h-1zM15 17h1v1h-1zM33 17h1v1h-1zM11 18h1v1h-1zM23 18h1v1h-1zM44 18h1v1h-1z" fill="#c4c4c4"/>
<path d="M15 0h1v1h-1zM3 1h1v1h-1zM25 1h1v1h-1zM7 2h1v1h-1zM12 3h1v1h-1zM15 3h1v1h-1zM16 3h1v1h-1zM17 3h1v1h-1zM18 3h1v1h-1zM27 3h1v1h-1zM20 4h1v1h-1zM21 4h1v1h-1zM25 4h1v1h-1zM44 4h1v1h-1zM17 5h1v1h-1zM25 5h1v1h-1zM31 5h1v1h-1zM33 6h1v1h-1zM11 7h1v1h-1zM40 12h1v1h-1zM35 13h1v1h-1zM40 13h1v1h-1zM41 13h1v1h-1zM42 13h1v1h-1zM23 14h1v1h-1zM31 14h1v1h-1zM36 14h1v1h-1zM0 15h1v1h-1zM2 15h1v1h-1zM4 15h1v1h-1zM11 15h1v1h-1zM7 16h1v1h-1zM20 17h1v1h-1zM24 17h1v1h-1zM45 17h1v1h-1zM7 18h1v1h-1zM12 18h1v1h-1zM16 18h1v1h-1zM18 18h1v1h-1zM24 18h1v1h-1zM38 18h1v1h-1zM43 18h1v1h-1z" fill="#d8d8d8"/>
<path d="M35 0h1v1h-1zM16 2h1v1h-1zM41 2h1v1h-1zM37 3h1v1h-1zM13 4h1v1h-1zM38 4h1v1h-1zM7 5h1v1h-1zM11 5h1v1h-1zM28 5h1v1h-1zM45 5h1v1h-1zM14 7h1v1h-1zM1 11h1v1h-1zM27 15h1v1h-1zM37 15h1v1h-1zM28 16h1v1h-1zM26 18h1v1h-1z" fill="#ebebeb"/>
<path d="M10 0h1v1h-1zM23 0h1v1h-1zM11 3h1v1h-1zM45 6h1v1h-1z" fill="#ffffff"/>
</g>
<rect x="657.8" y="47.5" width="86.5" height="37" fill="#888" filter="url(#sm0)"/>
<rect x="658" y="62.00" width="86.00" height="9" fill="#000" opacity="0.55" filter="url(#vb)"/>
<rect x="467.9" y="47.6" width="279.9" height="36.4" fill="none" stroke="#000" stroke-width="2.6"/>
<text x="749.50" y="61.20" font-family="Liberation Sans, sans-serif" font-size="7.95" fill="#000" text-anchor="start" textLength="35.94" lengthAdjust="spacingAndGlyphs" >Weighted</text>
<text x="749.50" y="70.30" font-family="Liberation Sans, sans-serif" font-size="7.95" fill="#000" text-anchor="start" textLength="16.82" lengthAdjust="spacingAndGlyphs" >Sum</text>
<rect x="468" y="94.00" width="280" height="39.30" fill="#fff"/>
<g transform="translate(469.30,94.00) scale(1.8854,1.8714)" shape-rendering="crispEdges">
<path d="M4 20h1v1h-1z" fill="#000000"/>
<path d="M17 10h1v1h-1zM18 10h1v1h-1zM39 14h1v1h-1zM6 15h1v1h-1zM10 16h1v1h-1z" fill="#141414"/>
<path d="M21 3h1v1h-1zM24 6h1v1h-1zM19 7h1v1h-1zM4 10h1v1h-1zM3 11h1v1h-1zM43 11h1v1h-1zM47 11h1v1h-1zM47 12h1v1h-1zM29 13h1v1h-1zM43 13h1v1h-1zM20 14h1v1h-1zM1 15h1v1h-1zM38 17h1v1h-1z" fill="#272727"/>
<path d="M4 1h1v1h-1zM3 3h1v1h-1zM15 3h1v1h-1zM45 3h1v1h-1zM0 4h1v1h-1zM9 5h1v1h-1zM10 5h1v1h-1zM27 5h1v1h-1zM40 5h1v1h-1zM21 6h1v1h-1zM38 6h1v1h-1zM1 8h1v1h-1zM15 8h1v1h-1zM23 8h1v1h-1zM31 8h1v1h-1zM36 8h1v1h-1zM40 8h1v1h-1zM9 9h1v1h-1zM18 9h1v1h-1zM26 9h1v1h-1zM27 10h1v1h-1zM31 10h1v1h-1zM39 10h1v1h-1zM1 11h1v1h-1zM5 11h1v1h-1zM8 11h1v1h-1zM11 11h1v1h-1zM23 11h1v1h-1zM32 11h1v1h-1zM37 11h1v1h-1zM3 12h1v1h-1zM6 12h1v1h-1zM13 12h1v1h-1zM28 12h1v1h-1zM16 14h1v1h-1zM22 14h1v1h-1zM35 15h1v1h-1zM32 16h1v1h-1zM11 17h1v1h-1zM17 18h1v1h-1zM41 18h1v1h-1zM18 19h1v1h-1zM20 19h1v1h-1zM39 20h1v1h-1z" fill="#3b3b3b"/>
<path d="M19 1h1v1h-1zM21 1h1v1h-1zM25 1h1v1h-1zM39 3h1v1h-1zM43 4h1v1h-1zM11 5h1v1h-1zM31 5h1v1h-1zM35 5h1v1h-1zM42 5h1v1h-1zM17 6h1v1h-1zM27 6h1v1h-1zM41 7h1v1h-1zM10 8h1v1h-1zM11 8h1v1h-1zM25 8h1v1h-1zM47 8h1v1h-1zM6 9h1v1h-1zM20 9h1v1h-1zM39 9h1v1h-1zM46 9h1v1h-1zM2 10h1v1h-1zM21 10h1v1h-1zM29 10h1v1h-1zM38 10h1v1h-1zM41 10h1v1h-1zM46 10h1v1h-1zM6 11h1v1h-1zM30 11h1v1h-1zM31 11h1v1h-1zM39 11h1v1h-1zM5 12h1v1h-1zM22 12h1v1h-1zM31 12h1v1h-1zM36 12h1v1h-1zM4 13h1v1h-1zM27 13h1v1h-1zM34 13h1v1h-1zM46 13h1v1h-1zM8 14h1v1h-1zM24 14h1v1h-1zM46 14h1v1h-1zM47 14h1v1h-1zM34 15h1v1h-1zM42 15h1v1h-1zM44 15h1v1h-1zM0 16h1v1h-1zM13 16h1v1h-1zM27 16h1v1h-1zM33 16h1v1h-1zM15 17h1v1h-1zM9 18h1v1h-1zM19 18h1v1h-1zM31 18h1v1h-1zM39 18h1v1h-1zM40 18h1v1h-1zM17 19h1v1h-1zM35 20h1v1h-1z" fill="#4e4e4e"/>
<path d="M4 0h1v1h-1zM27 0h1v1h-1zM32 0h1v1h-1zM9 1h1v1h-1zM34 1h1v1h-1zM4 2h1v1h-1zM5 2h1v1h-1zM6 2h1v1h-1zM12 2h1v1h-1zM14 2h1v1h-1zM29 2h1v1h-1zM33 2h1v1h-1zM40 2h1v1h-1zM47 2h1v1h-1zM5 3h1v1h-1zM27 3h1v1h-1zM37 3h1v1h-1zM38 3h1v1h-1zM1 4h1v1h-1zM2 4h1v1h-1zM10 4h1v1h-1zM11 4h1v1h-1zM5 5h1v1h-1zM39 5h1v1h-1zM2 6h1v1h-1zM3 6h1v1h-1zM23 6h1v1h-1zM31 6h1v1h-1zM35 6h1v1h-1zM22 7h1v1h-1zM24 7h1v1h-1zM27 7h1v1h-1zM33 7h1v1h-1zM0 8h1v1h-1zM6 8h1v1h-1zM7 8h1v1h-1zM9 8h1v1h-1zM17 8h1v1h-1zM21 8h1v1h-1zM42 8h1v1h-1zM11 9h1v1h-1zM16 9h1v1h-1zM19 9h1v1h-1zM23 9h1v1h-1zM33 9h1v1h-1zM34 9h1v1h-1zM38 9h1v1h-1zM40 9h1v1h-1zM0 10h1v1h-1zM3 10h1v1h-1zM5 10h1v1h-1zM14 10h1v1h-1zM23 10h1v1h-1zM26 10h1v1h-1zM28 10h1v1h-1zM35 10h1v1h-1zM14 11h1v1h-1zM19 11h1v1h-1zM26 11h1v1h-1zM45 11h1v1h-1zM19 12h1v1h-1zM30 12h1v1h-1zM33 12h1v1h-1zM35 12h1v1h-1zM40 12h1v1h-1zM44 12h1v1h-1zM46 12h1v1h-1zM5 13h1v1h-1zM6 13h1v1h-1zM11 13h1v1h-1zM19 13h1v1h-1zM25 13h1v1h-1zM42 13h1v1h-1zM4 14h1v1h-1zM7 14h1v1h-1zM33 14h1v1h-1zM35 14h1v1h-1zM36 14h1v1h-1zM16 15h1v1h-1zM21 15h1v1h-1zM23 15h1v1h-1zM3 16h1v1h-1zM18 16h1v1h-1zM22 16h1v1h-1zM26 16h1v1h-1zM40 16h1v1h-1zM12 17h1v1h-1zM29 17h1v1h-1zM45 17h1v1h-1zM26 18h1v1h-1zM35 18h1v1h-1zM42 18h1v1h-1zM43 18h1v1h-1zM3 19h1v1h-1zM12 19h1v1h-1zM16 19h1v1h-1zM22 19h1v1h-1zM36 19h1v1h-1zM38 19h1v1h-1zM45 19h1v1h-1zM46 19h1v1h-1zM3 20h1v1h-1zM10 20h1v1h-1zM25 20h1v1h-1z" fill="#626262"/>
<path d="M0 0h1v1h-1zM16 0h1v1h-1zM18 0h1v1h-1zM20 0h1v1h-1zM22 0h1v1h-1zM26 0h1v1h-1zM29 0h1v1h-1zM30 0h1v1h-1zM36 0h1v1h-1zM1 1h1v1h-1zM2 1h1v1h-1zM3 1h1v1h-1zM6 1h1v1h-1zM8 1h1v1h-1zM15 1h1v1h-1zM27 1h1v1h-1zM31 1h1v1h-1zM9 2h1v1h-1zM19 2h1v1h-1zM26 2h1v1h-1zM28 2h1v1h-1zM31 2h1v1h-1zM32 2h1v1h-1zM36 2h1v1h-1zM39 2h1v1h-1zM1 3h1v1h-1zM2 3h1v1h-1zM10 3h1v1h-1zM20 3h1v1h-1zM23 3h1v1h-1zM25 3h1v1h-1zM46 3h1v1h-1zM5 4h1v1h-1zM24 4h1v1h-1zM29 4h1v1h-1zM35 4h1v1h-1zM41 4h1v1h-1zM4 5h1v1h-1zM7 5h1v1h-1zM16 5h1v1h-1zM17 5h1v1h-1zM1 6h1v1h-1zM15 6h1v1h-1zM36 6h1v1h-1zM39 6h1v1h-1zM43 6h1v1h-1zM47 6h1v1h-1zM7 7h1v1h-1zM9 7h1v1h-1zM17 7h1v1h-1zM18 7h1v1h-1zM25 7h1v1h-1zM28 7h1v1h-1zM45 7h1v1h-1zM3 8h1v1h-1zM20 8h1v1h-1zM24 8h1v1h-1zM34 8h1v1h-1zM45 8h1v1h-1zM0 9h1v1h-1zM7 9h1v1h-1zM12 9h1v1h-1zM13 9h1v1h-1zM22 9h1v1h-1zM25 9h1v1h-1zM28 9h1v1h-1zM35 9h1v1h-1zM37 9h1v1h-1zM9 10h1v1h-1zM34 10h1v1h-1zM37 10h1v1h-1zM42 10h1v1h-1zM4 11h1v1h-1zM12 11h1v1h-1zM15 11h1v1h-1zM22 11h1v1h-1zM25 11h1v1h-1zM33 11h1v1h-1zM38 11h1v1h-1zM40 11h1v1h-1zM4 12h1v1h-1zM8 12h1v1h-1zM11 12h1v1h-1zM12 12h1v1h-1zM16 12h1v1h-1zM25 12h1v1h-1zM38 12h1v1h-1zM39 12h1v1h-1zM42 12h1v1h-1zM7 13h1v1h-1zM13 13h1v1h-1zM15 13h1v1h-1zM17 13h1v1h-1zM21 13h1v1h-1zM24 13h1v1h-1zM35 13h1v1h-1zM13 14h1v1h-1zM25 14h1v1h-1zM27 14h1v1h-1zM29 14h1v1h-1zM40 14h1v1h-1zM7 15h1v1h-1zM10 15h1v1h-1zM13 15h1v1h-1zM18 15h1v1h-1zM28 15h1v1h-1zM39 15h1v1h-1zM43 15h1v1h-1zM14 16h1v1h-1zM24 16h1v1h-1zM30 16h1v1h-1zM34 16h1v1h-1zM42 16h1v1h-1zM43 16h1v1h-1zM45 16h1v1h-1zM0 17h1v1h-1zM1 17h1v1h-1zM5 17h1v1h-1zM8 17h1v1h-1zM9 17h1v1h-1zM36 17h1v1h-1zM40 17h1v1h-1zM41 17h1v1h-1zM43 17h1v1h-1zM3 18h1v1h-1zM2 19h1v1h-1zM4 19h1v1h-1zM13 19h1v1h-1zM31 19h1v1h-1zM42 19h1v1h-1zM7 20h1v1h-1zM29 20h1v1h-1zM31 20h1v1h-1zM45 20h1v1h-1z" fill="#767676"/>
<path d="M1 0h1v1h-1zM3 0h1v1h-1zM8 0h1v1h-1zM37 0h1v1h-1zM0 1h1v1h-1zM17 1h1v1h-1zM18 1h1v1h-1zM29 1h1v1h-1zM32 1h1v1h-1zM35 1h1v1h-1zM36 1h1v1h-1zM38 1h1v1h-1zM47 1h1v1h-1zM3 2h1v1h-1zM10 2h1v1h-1zM13 2h1v1h-1zM16 2h1v1h-1zM30 2h1v1h-1zM38 2h1v1h-1zM42 2h1v1h-1zM0 3h1v1h-1zM7 3h1v1h-1zM12 3h1v1h-1zM13 3h1v1h-1zM18 3h1v1h-1zM24 3h1v1h-1zM26 3h1v1h-1zM28 3h1v1h-1zM36 3h1v1h-1zM40 3h1v1h-1zM44 3h1v1h-1zM6 4h1v1h-1zM13 4h1v1h-1zM18 4h1v1h-1zM21 4h1v1h-1zM31 4h1v1h-1zM6 5h1v1h-1zM13 5h1v1h-1zM14 5h1v1h-1zM15 5h1v1h-1zM19 5h1v1h-1zM21 5h1v1h-1zM32 5h1v1h-1zM34 5h1v1h-1zM36 5h1v1h-1zM46 5h1v1h-1zM47 5h1v1h-1zM0 6h1v1h-1zM6 6h1v1h-1zM8 6h1v1h-1zM25 6h1v1h-1zM26 6h1v1h-1zM29 6h1v1h-1zM30 6h1v1h-1zM33 6h1v1h-1zM34 6h1v1h-1zM37 6h1v1h-1zM41 6h1v1h-1zM42 6h1v1h-1zM2 7h1v1h-1zM6 7h1v1h-1zM8 7h1v1h-1zM10 7h1v1h-1zM13 7h1v1h-1zM20 7h1v1h-1zM30 7h1v1h-1zM36 7h1v1h-1zM37 7h1v1h-1zM42 7h1v1h-1zM2 8h1v1h-1zM4 8h1v1h-1zM16 8h1v1h-1zM19 8h1v1h-1zM30 8h1v1h-1zM32 8h1v1h-1zM39 8h1v1h-1zM41 8h1v1h-1zM44 8h1v1h-1zM46 8h1v1h-1zM2 9h1v1h-1zM8 9h1v1h-1zM10 9h1v1h-1zM14 9h1v1h-1zM21 9h1v1h-1zM24 9h1v1h-1zM32 9h1v1h-1zM43 9h1v1h-1zM6 10h1v1h-1zM7 10h1v1h-1zM12 10h1v1h-1zM19 10h1v1h-1zM20 10h1v1h-1zM36 10h1v1h-1zM43 10h1v1h-1zM45 10h1v1h-1zM47 10h1v1h-1zM0 11h1v1h-1zM2 11h1v1h-1zM7 11h1v1h-1zM9 11h1v1h-1zM17 11h1v1h-1zM41 11h1v1h-1zM42 11h1v1h-1zM46 11h1v1h-1zM0 12h1v1h-1zM1 12h1v1h-1zM9 12h1v1h-1zM10 12h1v1h-1zM18 12h1v1h-1zM32 12h1v1h-1zM34 12h1v1h-1zM37 12h1v1h-1zM41 12h1v1h-1zM45 12h1v1h-1zM1 13h1v1h-1zM2 13h1v1h-1zM9 13h1v1h-1zM12 13h1v1h-1zM18 13h1v1h-1zM23 13h1v1h-1zM31 13h1v1h-1zM32 13h1v1h-1zM38 13h1v1h-1zM39 13h1v1h-1zM40 13h1v1h-1zM2 14h1v1h-1zM12 14h1v1h-1zM15 14h1v1h-1zM17 14h1v1h-1zM37 14h1v1h-1zM2 15h1v1h-1zM4 15h1v1h-1zM8 15h1v1h-1zM12 15h1v1h-1zM14 15h1v1h-1zM17 15h1v1h-1zM22 15h1v1h-1zM25 15h1v1h-1zM33 15h1v1h-1zM41 15h1v1h-1zM47 15h1v1h-1zM6 16h1v1h-1zM7 16h1v1h-1zM28 16h1v1h-1zM35 16h1v1h-1zM38 16h1v1h-1zM7 17h1v1h-1zM16 17h1v1h-1zM17 17h1v1h-1zM22 17h1v1h-1zM27 17h1v1h-1zM28 17h1v1h-1zM39 17h1v1h-1zM44 17h1v1h-1zM47 17h1v1h-1zM11 18h1v1h-1zM13 18h1v1h-1zM15 18h1v1h-1zM21 18h1v1h-1zM30 18h1v1h-1zM36 18h1v1h-1zM38 18h1v1h-1zM47 18h1v1h-1zM7 19h1v1h-1zM24 19h1v1h-1zM27 19h1v1h-1zM29 19h1v1h-1zM34 19h1v1h-1zM40 19h1v1h-1zM43 19h1v1h-1zM47 19h1v1h-1zM12 20h1v1h-1zM15 20h1v1h-1zM26 20h1v1h-1zM30 20h1v1h-1zM36 20h1v1h-1zM40 20h1v1h-1zM41 20h1v1h-1z" fill="#898989"/>
<path d="M5 0h1v1h-1zM6 0h1v1h-1zM13 0h1v1h-1zM21 0h1v1h-1zM23 0h1v1h-1zM35 0h1v1h-1zM39 0h1v1h-1zM41 0h1v1h-1zM42 0h1v1h-1zM43 0h1v1h-1zM44 0h1v1h-1zM45 0h1v1h-1zM5 1h1v1h-1zM11 1h1v1h-1zM13 1h1v1h-1zM16 1h1v1h-1zM33 1h1v1h-1zM37 1h1v1h-1zM42 1h1v1h-1zM2 2h1v1h-1zM7 2h1v1h-1zM8 2h1v1h-1zM21 2h1v1h-1zM23 2h1v1h-1zM43 2h1v1h-1zM46 2h1v1h-1zM4 3h1v1h-1zM9 3h1v1h-1zM11 3h1v1h-1zM14 3h1v1h-1zM22 3h1v1h-1zM30 3h1v1h-1zM34 3h1v1h-1zM41 3h1v1h-1zM47 3h1v1h-1zM7 4h1v1h-1zM8 4h1v1h-1zM9 4h1v1h-1zM15 4h1v1h-1zM16 4h1v1h-1zM17 4h1v1h-1zM22 4h1v1h-1zM33 4h1v1h-1zM36 4h1v1h-1zM42 4h1v1h-1zM46 4h1v1h-1zM1 5h1v1h-1zM12 5h1v1h-1zM18 5h1v1h-1zM20 5h1v1h-1zM22 5h1v1h-1zM23 5h1v1h-1zM38 5h1v1h-1zM41 5h1v1h-1zM45 5h1v1h-1zM9 6h1v1h-1zM18 6h1v1h-1zM19 6h1v1h-1zM20 6h1v1h-1zM28 6h1v1h-1zM46 6h1v1h-1zM3 7h1v1h-1zM4 7h1v1h-1zM14 7h1v1h-1zM15 7h1v1h-1zM16 7h1v1h-1zM39 7h1v1h-1zM44 7h1v1h-1zM47 7h1v1h-1zM5 8h1v1h-1zM12 8h1v1h-1zM18 8h1v1h-1zM28 8h1v1h-1zM37 8h1v1h-1zM1 9h1v1h-1zM4 9h1v1h-1zM15 9h1v1h-1zM17 9h1v1h-1zM29 9h1v1h-1zM36 9h1v1h-1zM42 9h1v1h-1zM45 9h1v1h-1zM47 9h1v1h-1zM1 10h1v1h-1zM8 10h1v1h-1zM10 10h1v1h-1zM11 10h1v1h-1zM13 10h1v1h-1zM16 10h1v1h-1zM24 10h1v1h-1zM30 10h1v1h-1zM32 10h1v1h-1zM44 10h1v1h-1zM10 11h1v1h-1zM16 11h1v1h-1zM21 11h1v1h-1zM24 11h1v1h-1zM27 11h1v1h-1zM28 11h1v1h-1zM29 11h1v1h-1zM14 12h1v1h-1zM15 12h1v1h-1zM20 12h1v1h-1zM21 12h1v1h-1zM23 12h1v1h-1zM24 12h1v1h-1zM26 12h1v1h-1zM29 12h1v1h-1zM0 13h1v1h-1zM10 13h1v1h-1zM20 13h1v1h-1zM26 13h1v1h-1zM28 13h1v1h-1zM30 13h1v1h-1zM33 13h1v1h-1zM36 13h1v1h-1zM45 13h1v1h-1zM47 13h1v1h-1zM19 14h1v1h-1zM21 14h1v1h-1zM26 14h1v1h-1zM30 14h1v1h-1zM31 14h1v1h-1zM32 14h1v1h-1zM38 14h1v1h-1zM42 14h1v1h-1zM43 14h1v1h-1zM45 14h1v1h-1zM0 15h1v1h-1zM9 15h1v1h-1zM20 15h1v1h-1zM24 15h1v1h-1zM26 15h1v1h-1zM27 15h1v1h-1zM29 15h1v1h-1zM30 15h1v1h-1zM31 15h1v1h-1zM32 15h1v1h-1zM36 15h1v1h-1zM40 15h1v1h-1zM45 15h1v1h-1zM1 16h1v1h-1zM5 16h1v1h-1zM11 16h1v1h-1zM15 16h1v1h-1zM17 16h1v1h-1zM19 16h1v1h-1zM31 16h1v1h-1zM39 16h1v1h-1zM47 16h1v1h-1zM13 17h1v1h-1zM21 17h1v1h-1zM23 17h1v1h-1zM31 17h1v1h-1zM35 17h1v1h-1zM46 17h1v1h-1zM2 18h1v1h-1zM5 18h1v1h-1zM10 18h1v1h-1zM12 18h1v1h-1zM16 18h1v1h-1zM20 18h1v1h-1zM32 18h1v1h-1zM37 18h1v1h-1zM44 18h1v1h-1zM11 19h1v1h-1zM14 19h1v1h-1zM26 19h1v1h-1zM28 19h1v1h-1zM30 19h1v1h-1zM32 19h1v1h-1zM44 19h1v1h-1zM0 20h1v1h-1zM14 20h1v1h-1zM19 20h1v1h-1zM20 20h1v1h-1zM32 20h1v1h-1zM43 20h1v1h-1zM44 20h1v1h-1zM47 20h1v1h-1z" fill="#9d9d9d"/>
<path d="M7 0h1v1h-1zM10 0h1v1h-1zM12 0h1v1h-1zM17 0h1v1h-1zM28 0h1v1h-1zM31 0h1v1h-1zM33 0h1v1h-1zM10 1h1v1h-1zM20 1h1v1h-1zM22 1h1v1h-1zM23 1h1v1h-1zM24 1h1v1h-1zM26 1h1v1h-1zM28 1h1v1h-1zM43 1h1v1h-1zM46 1h1v1h-1zM1 2h1v1h-1zM18 2h1v1h-1zM20 2h1v1h-1zM22 2h1v1h-1zM24 2h1v1h-1zM25 2h1v1h-1zM27 2h1v1h-1zM41 2h1v1h-1zM17 3h1v1h-1zM29 3h1v1h-1zM32 3h1v1h-1zM33 3h1v1h-1zM35 3h1v1h-1zM42 3h1v1h-1zM20 4h1v1h-1zM25 4h1v1h-1zM30 4h1v1h-1zM32 4h1v1h-1zM37 4h1v1h-1zM38 4h1v1h-1zM44 4h1v1h-1zM8 5h1v1h-1zM28 5h1v1h-1zM30 5h1v1h-1zM7 6h1v1h-1zM13 6h1v1h-1zM14 6h1v1h-1zM16 6h1v1h-1zM22 6h1v1h-1zM32 6h1v1h-1zM44 6h1v1h-1zM45 6h1v1h-1zM0 7h1v1h-1zM1 7h1v1h-1zM5 7h1v1h-1zM12 7h1v1h-1zM26 7h1v1h-1zM31 7h1v1h-1zM38 7h1v1h-1zM43 7h1v1h-1zM46 7h1v1h-1zM8 8h1v1h-1zM14 8h1v1h-1zM22 8h1v1h-1zM26 8h1v1h-1zM29 8h1v1h-1zM35 8h1v1h-1zM38 8h1v1h-1zM43 8h1v1h-1zM27 9h1v1h-1zM30 9h1v1h-1zM41 9h1v1h-1zM44 9h1v1h-1zM15 10h1v1h-1zM25 10h1v1h-1zM13 11h1v1h-1zM18 11h1v1h-1zM34 11h1v1h-1zM35 11h1v1h-1zM36 11h1v1h-1zM44 11h1v1h-1zM7 12h1v1h-1zM27 12h1v1h-1zM43 12h1v1h-1zM3 13h1v1h-1zM16 13h1v1h-1zM22 13h1v1h-1zM37 13h1v1h-1zM41 13h1v1h-1zM44 13h1v1h-1zM5 14h1v1h-1zM18 14h1v1h-1zM44 14h1v1h-1zM5 15h1v1h-1zM15 15h1v1h-1zM38 15h1v1h-1zM4 16h1v1h-1zM16 16h1v1h-1zM20 16h1v1h-1zM29 16h1v1h-1zM37 16h1v1h-1zM46 16h1v1h-1zM2 17h1v1h-1zM10 17h1v1h-1zM14 17h1v1h-1zM18 17h1v1h-1zM19 17h1v1h-1zM26 17h1v1h-1zM33 17h1v1h-1zM34 17h1v1h-1zM37 17h1v1h-1zM42 17h1v1h-1zM0 18h1v1h-1zM6 18h1v1h-1zM7 18h1v1h-1zM8 18h1v1h-1zM18 18h1v1h-1zM23 18h1v1h-1zM27 18h1v1h-1zM29 18h1v1h-1zM33 18h1v1h-1zM45 18h1v1h-1zM5 19h1v1h-1zM6 19h1v1h-1zM19 19h1v1h-1zM21 19h1v1h-1zM5 20h1v1h-1zM8 20h1v1h-1zM9 20h1v1h-1zM11 20h1v1h-1zM17 20h1v1h-1zM22 20h1v1h-1zM27 20h1v1h-1zM38 20h1v1h-1zM42 20h1v1h-1z" fill="#b1b1b1"/>
<path d="M15 0h1v1h-1zM19 0h1v1h-1zM25 0h1v1h-1zM34 0h1v1h-1zM40 0h1v1h-1zM46 0h1v1h-1zM47 0h1v1h-1zM12 1h1v1h-1zM41 1h1v1h-1zM0 2h1v1h-1zM34 2h1v1h-1zM35 2h1v1h-1zM45 2h1v1h-1zM8 3h1v1h-1zM43 3h1v1h-1zM4 4h1v1h-1zM14 4h1v1h-1zM19 4h1v1h-1zM26 4h1v1h-1zM34 4h1v1h-1zM39 4h1v1h-1zM47 4h1v1h-1zM2 5h1v1h-1zM3 5h1v1h-1zM26 5h1v1h-1zM37 5h1v1h-1zM43 5h1v1h-1zM44 5h1v1h-1zM10 6h1v1h-1zM11 6h1v1h-1zM12 6h1v1h-1zM40 6h1v1h-1zM11 7h1v1h-1zM23 7h1v1h-1zM29 7h1v1h-1zM34 7h1v1h-1zM40 7h1v1h-1zM27 8h1v1h-1zM3 9h1v1h-1zM40 10h1v1h-1zM17 12h1v1h-1zM14 13h1v1h-1zM3 14h1v1h-1zM6 14h1v1h-1zM10 14h1v1h-1zM28 14h1v1h-1zM41 14h1v1h-1zM11 15h1v1h-1zM19 15h1v1h-1zM37 15h1v1h-1zM2 16h1v1h-1zM12 16h1v1h-1zM21 16h1v1h-1zM36 16h1v1h-1zM41 16h1v1h-1zM4 17h1v1h-1zM6 17h1v1h-1zM20 17h1v1h-1zM24 17h1v1h-1zM25 17h1v1h-1zM32 17h1v1h-1zM4 18h1v1h-1zM24 18h1v1h-1zM25 18h1v1h-1zM28 18h1v1h-1zM34 18h1v1h-1zM0 19h1v1h-1zM1 19h1v1h-1zM9 19h1v1h-1zM10 19h1v1h-1zM23 19h1v1h-1zM33 19h1v1h-1zM39 19h1v1h-1zM41 19h1v1h-1zM1 20h1v1h-1zM2 20h1v1h-1zM13 20h1v1h-1zM16 20h1v1h-1zM18 20h1v1h-1zM23 20h1v1h-1zM24 20h1v1h-1zM34 20h1v1h-1zM46 20h1v1h-1z" fill="#c4c4c4"/>
<path d="M9 0h1v1h-1zM14 0h1v1h-1zM24 0h1v1h-1zM38 0h1v1h-1zM11 2h1v1h-1zM17 2h1v1h-1zM37 2h1v1h-1zM16 3h1v1h-1zM19 3h1v1h-1zM31 3h1v1h-1zM12 4h1v1h-1zM23 4h1v1h-1zM27 4h1v1h-1zM28 4h1v1h-1zM45 4h1v1h-1zM29 5h1v1h-1zM4 6h1v1h-1zM5 6h1v1h-1zM21 7h1v1h-1zM35 7h1v1h-1zM13 8h1v1h-1zM33 8h1v1h-1zM5 9h1v1h-1zM31 9h1v1h-1zM22 10h1v1h-1zM33 10h1v1h-1zM20 11h1v1h-1zM2 12h1v1h-1zM0 14h1v1h-1zM34 14h1v1h-1zM8 16h1v1h-1zM23 16h1v1h-1zM3 17h1v1h-1zM1 18h1v1h-1zM14 18h1v1h-1zM22 18h1v1h-1zM8 19h1v1h-1zM15 19h1v1h-1zM25 19h1v1h-1zM35 19h1v1h-1zM37 19h1v1h-1zM6 20h1v1h-1zM21 20h1v1h-1zM28 20h1v1h-1zM37 20h1v1h-1z" fill="#d8d8d8"/>
<path d="M2 0h1v1h-1zM7 1h1v1h-1zM14 1h1v1h-1zM30 1h1v1h-1zM39 1h1v1h-1zM40 1h1v1h-1zM44 1h1v1h-1zM45 1h1v1h-1zM15 2h1v1h-1zM6 3h1v1h-1zM3 4h1v1h-1zM40 4h1v1h-1zM0 5h1v1h-1zM24 5h1v1h-1zM25 5h1v1h-1zM32 7h1v1h-1zM8 13h1v1h-1zM1 14h1v1h-1zM9 14h1v1h-1zM11 14h1v1h-1zM14 14h1v1h-1zM23 14h1v1h-1zM3 15h1v1h-1zM46 15h1v1h-1zM9 16h1v1h-1zM25 16h1v1h-1zM33 20h1v1h-1z" fill="#ebebeb"/>
<path d="M11 0h1v1h-1zM44 2h1v1h-1zM33 5h1v1h-1zM44 16h1v1h-1zM30 17h1v1h-1zM46 18h1v1h-1z" fill="#ffffff"/>
</g>
<rect x="564" y="94.00" width="89.6" height="39.30" fill="#828282" filter="url(#flat)"/>
<rect x="656.4" y="94.00" width="89.8" height="39.30" fill="#888" filter="url(#sm1)"/>
<rect x="657" y="109.15" width="89.00" height="9" fill="#000" opacity="0.4" filter="url(#vb)"/>
<rect x="468" y="133.60" width="280" height="39.60" fill="#fff"/>
<g transform="translate(469.30,133.60) scale(1.8854,1.8857)" shape-rendering="crispEdges">
<path d="M14 11h1v1h-1zM28 11h1v1h-1z" fill="#000000"/>
<path d="M0 4h1v1h-1zM13 10h1v1h-1zM18 10h1v1h-1zM42 11h1v1h-1zM43 11h1v1h-1zM18 16h1v1h-1z" fill="#141414"/>
<path d="M21 2h1v1h-1zM3 4h1v1h-1zM4 4h1v1h-1zM31 6h1v1h-1zM7 8h1v1h-1zM10 8h1v1h-1zM37 8h1v1h-1zM16 9h1v1h-1zM21 9h1v1h-1zM45 11h1v1h-1zM5 12h1v1h-1zM25 14h1v1h-1zM29 14h1v1h-1zM41 17h1v1h-1zM9 18h1v1h-1zM26 18h1v1h-1zM29 18h1v1h-1z" fill="#272727"/>
<path d="M0 1h1v1h-1zM11 2h1v1h-1zM19 2h1v1h-1zM21 4h1v1h-1zM31 4h1v1h-1zM42 4h1v1h-1zM16 6h1v1h-1zM44 6h1v1h-1zM12 7h1v1h-1zM37 7h1v1h-1zM38 7h1v1h-1zM2 8h1v1h-1zM12 8h1v1h-1zM28 8h1v1h-1zM33 8h1v1h-1zM13 9h1v1h-1zM28 9h1v1h-1zM37 9h1v1h-1zM38 9h1v1h-1zM39 9h1v1h-1zM43 9h1v1h-1zM46 9h1v1h-1zM7 10h1v1h-1zM25 10h1v1h-1zM29 10h1v1h-1zM34 10h1v1h-1zM47 10h1v1h-1zM15 11h1v1h-1zM19 11h1v1h-1zM32 11h1v1h-1zM38 11h1v1h-1zM44 12h1v1h-1zM16 13h1v1h-1zM19 13h1v1h-1zM8 14h1v1h-1zM5 15h1v1h-1zM25 15h1v1h-1zM39 16h1v1h-1zM2 17h1v1h-1zM33 17h1v1h-1zM12 18h1v1h-1z" fill="#3b3b3b"/>
<path d="M32 0h1v1h-1zM45 0h1v1h-1zM8 1h1v1h-1zM14 1h1v1h-1zM1 2h1v1h-1zM2 2h1v1h-1zM27 2h1v1h-1zM37 2h1v1h-1zM5 3h1v1h-1zM19 4h1v1h-1zM27 4h1v1h-1zM37 4h1v1h-1zM0 5h1v1h-1zM29 6h1v1h-1zM42 6h1v1h-1zM3 7h1v1h-1zM8 7h1v1h-1zM28 7h1v1h-1zM41 7h1v1h-1zM13 8h1v1h-1zM20 8h1v1h-1zM47 8h1v1h-1zM10 9h1v1h-1zM11 9h1v1h-1zM17 9h1v1h-1zM19 9h1v1h-1zM8 10h1v1h-1zM11 10h1v1h-1zM15 10h1v1h-1zM17 10h1v1h-1zM21 10h1v1h-1zM22 10h1v1h-1zM26 10h1v1h-1zM33 10h1v1h-1zM35 10h1v1h-1zM39 10h1v1h-1zM40 10h1v1h-1zM21 11h1v1h-1zM22 11h1v1h-1zM23 11h1v1h-1zM24 11h1v1h-1zM30 11h1v1h-1zM10 12h1v1h-1zM11 12h1v1h-1zM14 12h1v1h-1zM15 12h1v1h-1zM16 12h1v1h-1zM45 12h1v1h-1zM22 13h1v1h-1zM24 13h1v1h-1zM27 13h1v1h-1zM36 13h1v1h-1zM3 14h1v1h-1zM19 14h1v1h-1zM21 14h1v1h-1zM32 14h1v1h-1zM9 15h1v1h-1zM22 15h1v1h-1zM6 16h1v1h-1zM25 16h1v1h-1zM36 16h1v1h-1zM38 16h1v1h-1zM43 16h1v1h-1zM20 18h1v1h-1zM2 19h1v1h-1zM9 20h1v1h-1zM16 20h1v1h-1zM19 20h1v1h-1zM22 20h1v1h-1zM25 20h1v1h-1z" fill="#4e4e4e"/>
<path d="M13 0h1v1h-1zM19 0h1v1h-1zM20 0h1v1h-1zM26 0h1v1h-1zM27 0h1v1h-1zM42 0h1v1h-1zM44 0h1v1h-1zM47 0h1v1h-1zM2 1h1v1h-1zM5 1h1v1h-1zM6 1h1v1h-1zM9 1h1v1h-1zM26 1h1v1h-1zM41 1h1v1h-1zM8 3h1v1h-1zM15 3h1v1h-1zM10 4h1v1h-1zM12 4h1v1h-1zM23 4h1v1h-1zM39 4h1v1h-1zM10 5h1v1h-1zM16 5h1v1h-1zM19 5h1v1h-1zM23 5h1v1h-1zM24 5h1v1h-1zM25 5h1v1h-1zM38 5h1v1h-1zM41 5h1v1h-1zM43 5h1v1h-1zM10 6h1v1h-1zM22 6h1v1h-1zM35 6h1v1h-1zM40 6h1v1h-1zM41 6h1v1h-1zM7 7h1v1h-1zM17 7h1v1h-1zM25 7h1v1h-1zM27 7h1v1h-1zM33 7h1v1h-1zM34 7h1v1h-1zM36 7h1v1h-1zM39 7h1v1h-1zM43 7h1v1h-1zM45 7h1v1h-1zM0 8h1v1h-1zM3 8h1v1h-1zM11 8h1v1h-1zM19 8h1v1h-1zM41 8h1v1h-1zM43 8h1v1h-1zM5 9h1v1h-1zM6 9h1v1h-1zM7 9h1v1h-1zM12 9h1v1h-1zM18 9h1v1h-1zM31 9h1v1h-1zM42 9h1v1h-1zM6 10h1v1h-1zM10 10h1v1h-1zM12 10h1v1h-1zM23 10h1v1h-1zM24 10h1v1h-1zM42 10h1v1h-1zM43 10h1v1h-1zM45 10h1v1h-1zM12 11h1v1h-1zM16 11h1v1h-1zM18 11h1v1h-1zM25 11h1v1h-1zM34 11h1v1h-1zM36 11h1v1h-1zM41 11h1v1h-1zM47 11h1v1h-1zM0 12h1v1h-1zM1 12h1v1h-1zM7 12h1v1h-1zM9 12h1v1h-1zM27 12h1v1h-1zM31 12h1v1h-1zM33 12h1v1h-1zM35 12h1v1h-1zM43 12h1v1h-1zM2 13h1v1h-1zM4 13h1v1h-1zM12 13h1v1h-1zM25 13h1v1h-1zM28 13h1v1h-1zM29 13h1v1h-1zM40 13h1v1h-1zM44 13h1v1h-1zM20 14h1v1h-1zM23 14h1v1h-1zM42 14h1v1h-1zM2 15h1v1h-1zM7 16h1v1h-1zM37 16h1v1h-1zM23 17h1v1h-1zM36 17h1v1h-1zM3 18h1v1h-1zM33 18h1v1h-1zM37 18h1v1h-1zM19 19h1v1h-1zM25 19h1v1h-1zM30 19h1v1h-1zM43 19h1v1h-1zM45 19h1v1h-1zM46 19h1v1h-1zM17 20h1v1h-1zM21 20h1v1h-1zM46 20h1v1h-1zM47 20h1v1h-1z" fill="#626262"/>
<path d="M4 0h1v1h-1zM5 0h1v1h-1zM6 0h1v1h-1zM7 0h1v1h-1zM10 0h1v1h-1zM11 0h1v1h-1zM30 0h1v1h-1zM34 0h1v1h-1zM40 0h1v1h-1zM41 0h1v1h-1zM10 1h1v1h-1zM11 1h1v1h-1zM21 1h1v1h-1zM38 1h1v1h-1zM5 2h1v1h-1zM9 2h1v1h-1zM13 2h1v1h-1zM18 2h1v1h-1zM20 2h1v1h-1zM22 2h1v1h-1zM23 2h1v1h-1zM25 2h1v1h-1zM34 2h1v1h-1zM35 2h1v1h-1zM41 2h1v1h-1zM10 3h1v1h-1zM11 3h1v1h-1zM23 3h1v1h-1zM32 3h1v1h-1zM36 3h1v1h-1zM40 3h1v1h-1zM9 4h1v1h-1zM16 4h1v1h-1zM20 4h1v1h-1zM36 4h1v1h-1zM45 4h1v1h-1zM46 4h1v1h-1zM4 5h1v1h-1zM44 5h1v1h-1zM46 5h1v1h-1zM3 6h1v1h-1zM6 6h1v1h-1zM18 6h1v1h-1zM24 6h1v1h-1zM38 6h1v1h-1zM43 6h1v1h-1zM46 6h1v1h-1zM1 7h1v1h-1zM6 7h1v1h-1zM10 7h1v1h-1zM13 7h1v1h-1zM22 7h1v1h-1zM44 7h1v1h-1zM5 8h1v1h-1zM9 8h1v1h-1zM15 8h1v1h-1zM24 8h1v1h-1zM32 8h1v1h-1zM44 8h1v1h-1zM2 9h1v1h-1zM4 9h1v1h-1zM22 9h1v1h-1zM25 9h1v1h-1zM29 9h1v1h-1zM36 9h1v1h-1zM41 9h1v1h-1zM0 10h1v1h-1zM5 10h1v1h-1zM16 10h1v1h-1zM20 10h1v1h-1zM30 10h1v1h-1zM38 10h1v1h-1zM44 10h1v1h-1zM46 10h1v1h-1zM0 11h1v1h-1zM2 11h1v1h-1zM5 11h1v1h-1zM9 11h1v1h-1zM10 11h1v1h-1zM31 11h1v1h-1zM39 11h1v1h-1zM44 11h1v1h-1zM2 12h1v1h-1zM13 12h1v1h-1zM18 12h1v1h-1zM19 12h1v1h-1zM20 12h1v1h-1zM22 12h1v1h-1zM26 12h1v1h-1zM29 12h1v1h-1zM36 12h1v1h-1zM10 13h1v1h-1zM21 13h1v1h-1zM23 13h1v1h-1zM34 13h1v1h-1zM35 13h1v1h-1zM42 13h1v1h-1zM45 13h1v1h-1zM0 14h1v1h-1zM2 14h1v1h-1zM6 14h1v1h-1zM9 14h1v1h-1zM13 14h1v1h-1zM27 14h1v1h-1zM31 14h1v1h-1zM36 14h1v1h-1zM43 14h1v1h-1zM14 15h1v1h-1zM19 15h1v1h-1zM31 15h1v1h-1zM35 15h1v1h-1zM41 15h1v1h-1zM42 15h1v1h-1zM5 16h1v1h-1zM19 16h1v1h-1zM20 16h1v1h-1zM22 16h1v1h-1zM26 16h1v1h-1zM30 16h1v1h-1zM11 17h1v1h-1zM17 17h1v1h-1zM22 17h1v1h-1zM35 17h1v1h-1zM43 17h1v1h-1zM45 17h1v1h-1zM0 18h1v1h-1zM2 18h1v1h-1zM15 18h1v1h-1zM16 18h1v1h-1zM19 18h1v1h-1zM21 18h1v1h-1zM41 18h1v1h-1zM47 18h1v1h-1zM3 19h1v1h-1zM5 19h1v1h-1zM6 19h1v1h-1zM7 19h1v1h-1zM13 19h1v1h-1zM17 19h1v1h-1zM23 19h1v1h-1zM28 19h1v1h-1zM3 20h1v1h-1zM20 20h1v1h-1zM27 20h1v1h-1zM37 20h1v1h-1zM41 20h1v1h-1z" fill="#767676"/>
<path d="M14 0h1v1h-1zM18 0h1v1h-1zM33 0h1v1h-1zM37 0h1v1h-1zM43 0h1v1h-1zM13 1h1v1h-1zM17 1h1v1h-1zM25 1h1v1h-1zM34 1h1v1h-1zM40 1h1v1h-1zM44 1h1v1h-1zM4 2h1v1h-1zM29 2h1v1h-1zM38 2h1v1h-1zM46 2h1v1h-1zM1 3h1v1h-1zM3 3h1v1h-1zM12 3h1v1h-1zM17 3h1v1h-1zM22 3h1v1h-1zM35 3h1v1h-1zM42 3h1v1h-1zM43 3h1v1h-1zM5 4h1v1h-1zM15 4h1v1h-1zM18 4h1v1h-1zM24 4h1v1h-1zM29 4h1v1h-1zM30 4h1v1h-1zM41 4h1v1h-1zM44 4h1v1h-1zM47 4h1v1h-1zM8 5h1v1h-1zM20 5h1v1h-1zM29 5h1v1h-1zM31 5h1v1h-1zM34 5h1v1h-1zM37 5h1v1h-1zM47 5h1v1h-1zM0 6h1v1h-1zM4 6h1v1h-1zM15 6h1v1h-1zM25 6h1v1h-1zM27 6h1v1h-1zM28 6h1v1h-1zM30 6h1v1h-1zM37 6h1v1h-1zM39 6h1v1h-1zM47 6h1v1h-1zM4 7h1v1h-1zM15 7h1v1h-1zM16 7h1v1h-1zM19 7h1v1h-1zM23 7h1v1h-1zM24 7h1v1h-1zM26 7h1v1h-1zM29 7h1v1h-1zM30 7h1v1h-1zM4 8h1v1h-1zM21 8h1v1h-1zM34 8h1v1h-1zM42 8h1v1h-1zM45 8h1v1h-1zM46 8h1v1h-1zM3 9h1v1h-1zM9 9h1v1h-1zM14 9h1v1h-1zM23 9h1v1h-1zM26 9h1v1h-1zM32 9h1v1h-1zM34 9h1v1h-1zM45 9h1v1h-1zM4 10h1v1h-1zM14 10h1v1h-1zM27 10h1v1h-1zM36 10h1v1h-1zM41 10h1v1h-1zM3 11h1v1h-1zM17 11h1v1h-1zM26 11h1v1h-1zM27 11h1v1h-1zM33 11h1v1h-1zM46 11h1v1h-1zM3 12h1v1h-1zM4 12h1v1h-1zM12 12h1v1h-1zM21 12h1v1h-1zM23 12h1v1h-1zM25 12h1v1h-1zM30 12h1v1h-1zM39 12h1v1h-1zM42 12h1v1h-1zM47 12h1v1h-1zM0 13h1v1h-1zM1 13h1v1h-1zM3 13h1v1h-1zM7 13h1v1h-1zM11 13h1v1h-1zM13 13h1v1h-1zM18 13h1v1h-1zM26 13h1v1h-1zM41 13h1v1h-1zM47 13h1v1h-1zM12 14h1v1h-1zM16 14h1v1h-1zM22 14h1v1h-1zM35 14h1v1h-1zM44 14h1v1h-1zM45 14h1v1h-1zM7 15h1v1h-1zM8 15h1v1h-1zM11 15h1v1h-1zM16 15h1v1h-1zM32 15h1v1h-1zM36 15h1v1h-1zM45 15h1v1h-1zM0 16h1v1h-1zM11 16h1v1h-1zM15 16h1v1h-1zM16 16h1v1h-1zM21 16h1v1h-1zM28 16h1v1h-1zM29 16h1v1h-1zM42 16h1v1h-1zM45 16h1v1h-1zM1 17h1v1h-1zM4 17h1v1h-1zM5 17h1v1h-1zM12 17h1v1h-1zM13 17h1v1h-1zM21 17h1v1h-1zM25 17h1v1h-1zM26 17h1v1h-1zM27 17h1v1h-1zM28 17h1v1h-1zM38 17h1v1h-1zM1 18h1v1h-1zM5 18h1v1h-1zM6 18h1v1h-1zM14 18h1v1h-1zM17 18h1v1h-1zM22 18h1v1h-1zM24 18h1v1h-1zM35 18h1v1h-1zM43 18h1v1h-1zM46 18h1v1h-1zM1 19h1v1h-1zM16 19h1v1h-1zM40 19h1v1h-1zM47 19h1v1h-1zM4 20h1v1h-1zM15 20h1v1h-1zM23 20h1v1h-1zM28 20h1v1h-1zM30 20h1v1h-1zM44 20h1v1h-1zM45 20h1v1h-1z" fill="#898989"/>
<path d="M9 0h1v1h-1zM22 0h1v1h-1zM28 0h1v1h-1zM38 0h1v1h-1zM22 1h1v1h-1zM28 1h1v1h-1zM32 1h1v1h-1zM35 1h1v1h-1zM37 1h1v1h-1zM42 1h1v1h-1zM46 1h1v1h-1zM7 2h1v1h-1zM8 2h1v1h-1zM15 2h1v1h-1zM16 2h1v1h-1zM26 2h1v1h-1zM28 2h1v1h-1zM42 2h1v1h-1zM45 2h1v1h-1zM2 3h1v1h-1zM4 3h1v1h-1zM6 3h1v1h-1zM7 3h1v1h-1zM9 3h1v1h-1zM24 3h1v1h-1zM25 3h1v1h-1zM28 3h1v1h-1zM33 3h1v1h-1zM37 3h1v1h-1zM46 3h1v1h-1zM47 3h1v1h-1zM7 4h1v1h-1zM11 4h1v1h-1zM32 4h1v1h-1zM33 4h1v1h-1zM34 4h1v1h-1zM3 5h1v1h-1zM5 5h1v1h-1zM9 5h1v1h-1zM26 5h1v1h-1zM30 5h1v1h-1zM33 5h1v1h-1zM36 5h1v1h-1zM39 5h1v1h-1zM5 6h1v1h-1zM12 6h1v1h-1zM19 6h1v1h-1zM32 6h1v1h-1zM34 6h1v1h-1zM45 6h1v1h-1zM0 7h1v1h-1zM5 7h1v1h-1zM11 7h1v1h-1zM14 7h1v1h-1zM21 7h1v1h-1zM32 7h1v1h-1zM1 8h1v1h-1zM6 8h1v1h-1zM25 8h1v1h-1zM29 8h1v1h-1zM31 8h1v1h-1zM36 8h1v1h-1zM39 8h1v1h-1zM0 9h1v1h-1zM15 9h1v1h-1zM20 9h1v1h-1zM33 9h1v1h-1zM35 9h1v1h-1zM40 9h1v1h-1zM47 9h1v1h-1zM1 10h1v1h-1zM31 10h1v1h-1zM1 11h1v1h-1zM4 11h1v1h-1zM7 11h1v1h-1zM8 11h1v1h-1zM13 11h1v1h-1zM20 11h1v1h-1zM35 11h1v1h-1zM37 11h1v1h-1zM40 11h1v1h-1zM6 12h1v1h-1zM24 12h1v1h-1zM28 12h1v1h-1zM32 12h1v1h-1zM34 12h1v1h-1zM38 12h1v1h-1zM40 12h1v1h-1zM30 13h1v1h-1zM31 13h1v1h-1zM38 13h1v1h-1zM46 13h1v1h-1zM1 14h1v1h-1zM5 14h1v1h-1zM11 14h1v1h-1zM15 14h1v1h-1zM17 14h1v1h-1zM24 14h1v1h-1zM34 14h1v1h-1zM37 14h1v1h-1zM40 14h1v1h-1zM41 14h1v1h-1zM0 15h1v1h-1zM1 15h1v1h-1zM4 15h1v1h-1zM6 15h1v1h-1zM10 15h1v1h-1zM12 15h1v1h-1zM15 15h1v1h-1zM21 15h1v1h-1zM24 15h1v1h-1zM30 15h1v1h-1zM33 15h1v1h-1zM44 15h1v1h-1zM46 15h1v1h-1zM13 16h1v1h-1zM24 16h1v1h-1zM27 16h1v1h-1zM31 16h1v1h-1zM33 16h1v1h-1zM41 16h1v1h-1zM44 16h1v1h-1zM0 17h1v1h-1zM6 17h1v1h-1zM10 17h1v1h-1zM16 17h1v1h-1zM18 17h1v1h-1zM20 17h1v1h-1zM29 17h1v1h-1zM39 17h1v1h-1zM40 17h1v1h-1zM44 17h1v1h-1zM46 17h1v1h-1zM4 18h1v1h-1zM23 18h1v1h-1zM25 18h1v1h-1zM28 18h1v1h-1zM32 18h1v1h-1zM34 18h1v1h-1zM38 18h1v1h-1zM39 18h1v1h-1zM44 18h1v1h-1zM4 19h1v1h-1zM9 19h1v1h-1zM10 19h1v1h-1zM11 19h1v1h-1zM14 19h1v1h-1zM31 19h1v1h-1zM33 19h1v1h-1zM37 19h1v1h-1zM39 19h1v1h-1zM41 19h1v1h-1zM0 20h1v1h-1zM1 20h1v1h-1zM24 20h1v1h-1zM33 20h1v1h-1zM36 20h1v1h-1zM42 20h1v1h-1z" fill="#9d9d9d"/>
<path d="M0 0h1v1h-1zM2 0h1v1h-1zM15 0h1v1h-1zM21 0h1v1h-1zM24 0h1v1h-1zM29 0h1v1h-1zM35 0h1v1h-1zM36 0h1v1h-1zM46 0h1v1h-1zM1 1h1v1h-1zM3 1h1v1h-1zM16 1h1v1h-1zM20 1h1v1h-1zM24 1h1v1h-1zM27 1h1v1h-1zM30 1h1v1h-1zM33 1h1v1h-1zM36 1h1v1h-1zM39 1h1v1h-1zM43 1h1v1h-1zM0 2h1v1h-1zM3 2h1v1h-1zM6 2h1v1h-1zM14 2h1v1h-1zM24 2h1v1h-1zM32 2h1v1h-1zM33 2h1v1h-1zM39 2h1v1h-1zM43 2h1v1h-1zM19 3h1v1h-1zM30 3h1v1h-1zM31 3h1v1h-1zM34 3h1v1h-1zM45 3h1v1h-1zM8 4h1v1h-1zM14 4h1v1h-1zM22 4h1v1h-1zM25 4h1v1h-1zM28 4h1v1h-1zM35 4h1v1h-1zM38 4h1v1h-1zM43 4h1v1h-1zM7 5h1v1h-1zM11 5h1v1h-1zM13 5h1v1h-1zM15 5h1v1h-1zM21 5h1v1h-1zM22 5h1v1h-1zM28 5h1v1h-1zM2 6h1v1h-1zM7 6h1v1h-1zM9 6h1v1h-1zM14 6h1v1h-1zM33 6h1v1h-1zM18 7h1v1h-1zM20 7h1v1h-1zM31 7h1v1h-1zM35 7h1v1h-1zM14 8h1v1h-1zM16 8h1v1h-1zM17 8h1v1h-1zM22 8h1v1h-1zM23 8h1v1h-1zM27 8h1v1h-1zM30 8h1v1h-1zM35 8h1v1h-1zM38 8h1v1h-1zM40 8h1v1h-1zM27 9h1v1h-1zM30 9h1v1h-1zM28 10h1v1h-1zM32 10h1v1h-1zM37 10h1v1h-1zM6 11h1v1h-1zM11 11h1v1h-1zM41 12h1v1h-1zM5 13h1v1h-1zM15 13h1v1h-1zM17 13h1v1h-1zM20 13h1v1h-1zM32 13h1v1h-1zM33 13h1v1h-1zM39 13h1v1h-1zM4 14h1v1h-1zM18 14h1v1h-1zM28 14h1v1h-1zM33 14h1v1h-1zM39 14h1v1h-1zM46 14h1v1h-1zM47 14h1v1h-1zM13 15h1v1h-1zM20 15h1v1h-1zM23 15h1v1h-1zM26 15h1v1h-1zM27 15h1v1h-1zM29 15h1v1h-1zM34 15h1v1h-1zM43 15h1v1h-1zM2 16h1v1h-1zM3 16h1v1h-1zM8 16h1v1h-1zM14 16h1v1h-1zM34 16h1v1h-1zM35 16h1v1h-1zM3 17h1v1h-1zM8 17h1v1h-1zM9 17h1v1h-1zM14 17h1v1h-1zM30 17h1v1h-1zM34 17h1v1h-1zM37 17h1v1h-1zM10 18h1v1h-1zM11 18h1v1h-1zM18 18h1v1h-1zM45 18h1v1h-1zM8 19h1v1h-1zM12 19h1v1h-1zM15 19h1v1h-1zM22 19h1v1h-1zM24 19h1v1h-1zM26 19h1v1h-1zM27 19h1v1h-1zM34 19h1v1h-1zM35 19h1v1h-1zM36 19h1v1h-1zM44 19h1v1h-1zM14 20h1v1h-1zM18 20h1v1h-1zM26 20h1v1h-1zM34 20h1v1h-1zM39 20h1v1h-1z" fill="#b1b1b1"/>
<path d="M1 0h1v1h-1zM8 0h1v1h-1zM12 0h1v1h-1zM16 0h1v1h-1zM17 0h1v1h-1zM23 0h1v1h-1zM25 0h1v1h-1zM31 0h1v1h-1zM39 0h1v1h-1zM4 1h1v1h-1zM7 1h1v1h-1zM12 1h1v1h-1zM19 1h1v1h-1zM29 1h1v1h-1zM31 1h1v1h-1zM47 1h1v1h-1zM12 2h1v1h-1zM30 2h1v1h-1zM40 2h1v1h-1zM44 2h1v1h-1zM47 2h1v1h-1zM0 3h1v1h-1zM14 3h1v1h-1zM16 3h1v1h-1zM20 3h1v1h-1zM21 3h1v1h-1zM26 3h1v1h-1zM38 3h1v1h-1zM39 3h1v1h-1zM41 3h1v1h-1zM1 4h1v1h-1zM6 4h1v1h-1zM13 4h1v1h-1zM26 4h1v1h-1zM1 5h1v1h-1zM2 5h1v1h-1zM6 5h1v1h-1zM14 5h1v1h-1zM18 5h1v1h-1zM27 5h1v1h-1zM32 5h1v1h-1zM35 5h1v1h-1zM42 5h1v1h-1zM45 5h1v1h-1zM1 6h1v1h-1zM8 6h1v1h-1zM20 6h1v1h-1zM9 7h1v1h-1zM42 7h1v1h-1zM47 7h1v1h-1zM26 8h1v1h-1zM8 9h1v1h-1zM24 9h1v1h-1zM2 10h1v1h-1zM3 10h1v1h-1zM9 10h1v1h-1zM19 10h1v1h-1zM8 12h1v1h-1zM17 12h1v1h-1zM46 12h1v1h-1zM6 13h1v1h-1zM8 13h1v1h-1zM14 13h1v1h-1zM37 13h1v1h-1zM7 14h1v1h-1zM10 14h1v1h-1zM14 14h1v1h-1zM30 14h1v1h-1zM38 14h1v1h-1zM37 15h1v1h-1zM40 15h1v1h-1zM1 16h1v1h-1zM10 16h1v1h-1zM23 16h1v1h-1zM47 16h1v1h-1zM15 17h1v1h-1zM31 17h1v1h-1zM42 17h1v1h-1zM7 18h1v1h-1zM13 18h1v1h-1zM27 18h1v1h-1zM30 18h1v1h-1zM31 18h1v1h-1zM40 18h1v1h-1zM42 18h1v1h-1zM18 19h1v1h-1zM29 19h1v1h-1zM32 19h1v1h-1zM38 19h1v1h-1zM42 19h1v1h-1zM5 20h1v1h-1zM7 20h1v1h-1zM13 20h1v1h-1zM29 20h1v1h-1zM35 20h1v1h-1zM40 20h1v1h-1zM43 20h1v1h-1z" fill="#c4c4c4"/>
<path d="M3 0h1v1h-1zM15 1h1v1h-1zM18 1h1v1h-1zM23 1h1v1h-1zM45 1h1v1h-1zM10 2h1v1h-1zM17 2h1v1h-1zM18 3h1v1h-1zM44 3h1v1h-1zM2 4h1v1h-1zM17 4h1v1h-1zM12 5h1v1h-1zM17 5h1v1h-1zM40 5h1v1h-1zM11 6h1v1h-1zM13 6h1v1h-1zM21 6h1v1h-1zM23 6h1v1h-1zM36 6h1v1h-1zM2 7h1v1h-1zM40 7h1v1h-1zM46 7h1v1h-1zM18 8h1v1h-1zM1 9h1v1h-1zM29 11h1v1h-1zM37 12h1v1h-1zM9 13h1v1h-1zM26 14h1v1h-1zM17 15h1v1h-1zM28 15h1v1h-1zM38 15h1v1h-1zM47 15h1v1h-1zM4 16h1v1h-1zM9 16h1v1h-1zM12 16h1v1h-1zM17 16h1v1h-1zM32 16h1v1h-1zM40 16h1v1h-1zM19 17h1v1h-1zM24 17h1v1h-1zM32 17h1v1h-1zM8 18h1v1h-1zM0 19h1v1h-1zM21 19h1v1h-1zM6 20h1v1h-1zM11 20h1v1h-1zM12 20h1v1h-1zM31 20h1v1h-1z" fill="#d8d8d8"/>
<path d="M31 2h1v1h-1zM36 2h1v1h-1zM13 3h1v1h-1zM29 3h1v1h-1zM17 6h1v1h-1zM26 6h1v1h-1zM8 8h1v1h-1zM43 13h1v1h-1zM3 15h1v1h-1zM18 15h1v1h-1zM46 16h1v1h-1zM7 17h1v1h-1zM47 17h1v1h-1zM36 18h1v1h-1zM20 19h1v1h-1zM2 20h1v1h-1zM10 20h1v1h-1z" fill="#ebebeb"/>
<path d="M27 3h1v1h-1zM40 4h1v1h-1zM44 9h1v1h-1zM39 15h1v1h-1zM8 20h1v1h-1zM32 20h1v1h-1zM38 20h1v1h-1z" fill="#ffffff"/>
</g>
<rect x="564" y="133.60" width="89.6" height="39.60" fill="#828282" filter="url(#flat)"/>
<rect x="656.4" y="133.60" width="89.8" height="39.60" fill="#888" filter="url(#sm2)"/>
<rect x="657" y="148.90" width="89.00" height="9" fill="#000" opacity="0.4" filter="url(#vb)"/>
<rect x="468" y="173.40" width="280" height="39.60" fill="#fff"/>
<g transform="translate(469.30,173.40) scale(1.8854,1.8857)" shape-rendering="crispEdges">
<path d="M30 9h1v1h-1zM40 11h1v1h-1zM22 15h1v1h-1z" fill="#141414"/>
<path d="M38 1h1v1h-1zM17 3h1v1h-1zM8 7h1v1h-1zM14 11h1v1h-1zM37 12h1v1h-1zM13 14h1v1h-1zM35 14h1v1h-1zM21 19h1v1h-1z" fill="#272727"/>
<path d="M30 0h1v1h-1zM28 2h1v1h-1zM35 5h1v1h-1zM7 7h1v1h-1zM4 8h1v1h-1zM7 8h1v1h-1zM19 8h1v1h-1zM6 9h1v1h-1zM24 9h1v1h-1zM35 10h1v1h-1zM4 11h1v1h-1zM21 11h1v1h-1zM38 11h1v1h-1zM43 11h1v1h-1zM45 11h1v1h-1zM3 12h1v1h-1zM15 12h1v1h-1zM23 12h1v1h-1zM35 12h1v1h-1zM3 14h1v1h-1zM9 14h1v1h-1zM12 19h1v1h-1z" fill="#3b3b3b"/>
<path d="M3 0h1v1h-1zM8 0h1v1h-1zM23 0h1v1h-1zM24 0h1v1h-1zM26 0h1v1h-1zM40 0h1v1h-1zM8 1h1v1h-1zM16 1h1v1h-1zM37 1h1v1h-1zM46 1h1v1h-1zM15 2h1v1h-1zM3 3h1v1h-1zM6 3h1v1h-1zM9 3h1v1h-1zM6 4h1v1h-1zM8 4h1v1h-1zM19 4h1v1h-1zM35 6h1v1h-1zM3 7h1v1h-1zM5 7h1v1h-1zM10 7h1v1h-1zM15 7h1v1h-1zM18 7h1v1h-1zM22 7h1v1h-1zM26 7h1v1h-1zM29 7h1v1h-1zM35 7h1v1h-1zM0 8h1v1h-1zM22 8h1v1h-1zM26 8h1v1h-1zM33 8h1v1h-1zM35 8h1v1h-1zM5 9h1v1h-1zM11 9h1v1h-1zM18 9h1v1h-1zM20 9h1v1h-1zM23 9h1v1h-1zM25 9h1v1h-1zM35 9h1v1h-1zM38 9h1v1h-1zM2 10h1v1h-1zM5 10h1v1h-1zM8 10h1v1h-1zM18 10h1v1h-1zM26 10h1v1h-1zM27 10h1v1h-1zM33 10h1v1h-1zM37 10h1v1h-1zM3 11h1v1h-1zM15 11h1v1h-1zM35 11h1v1h-1zM42 11h1v1h-1zM25 12h1v1h-1zM27 12h1v1h-1zM12 13h1v1h-1zM17 13h1v1h-1zM28 13h1v1h-1zM45 13h1v1h-1zM21 14h1v1h-1zM43 14h1v1h-1zM0 15h1v1h-1zM21 15h1v1h-1zM5 16h1v1h-1zM18 16h1v1h-1zM28 16h1v1h-1zM36 17h1v1h-1zM29 18h1v1h-1zM35 18h1v1h-1zM9 19h1v1h-1zM43 19h1v1h-1zM13 20h1v1h-1zM28 20h1v1h-1zM41 20h1v1h-1z" fill="#4e4e4e"/>
<path d="M31 0h1v1h-1zM39 0h1v1h-1zM3 1h1v1h-1zM12 1h1v1h-1zM14 1h1v1h-1zM24 1h1v1h-1zM28 1h1v1h-1zM47 1h1v1h-1zM23 2h1v1h-1zM36 2h1v1h-1zM43 2h1v1h-1zM1 3h1v1h-1zM31 3h1v1h-1zM11 4h1v1h-1zM15 4h1v1h-1zM37 4h1v1h-1zM1 5h1v1h-1zM8 5h1v1h-1zM11 5h1v1h-1zM13 5h1v1h-1zM22 5h1v1h-1zM24 5h1v1h-1zM8 6h1v1h-1zM28 6h1v1h-1zM39 6h1v1h-1zM13 7h1v1h-1zM34 7h1v1h-1zM38 7h1v1h-1zM6 8h1v1h-1zM10 8h1v1h-1zM21 8h1v1h-1zM23 8h1v1h-1zM31 8h1v1h-1zM37 8h1v1h-1zM43 8h1v1h-1zM2 9h1v1h-1zM21 9h1v1h-1zM46 9h1v1h-1zM6 10h1v1h-1zM9 10h1v1h-1zM19 10h1v1h-1zM21 10h1v1h-1zM24 10h1v1h-1zM25 10h1v1h-1zM38 10h1v1h-1zM47 10h1v1h-1zM0 11h1v1h-1zM5 11h1v1h-1zM7 11h1v1h-1zM22 11h1v1h-1zM24 11h1v1h-1zM32 11h1v1h-1zM34 11h1v1h-1zM36 11h1v1h-1zM37 11h1v1h-1zM46 11h1v1h-1zM6 12h1v1h-1zM9 12h1v1h-1zM16 12h1v1h-1zM22 12h1v1h-1zM26 12h1v1h-1zM29 12h1v1h-1zM34 12h1v1h-1zM21 13h1v1h-1zM29 13h1v1h-1zM30 13h1v1h-1zM31 13h1v1h-1zM35 13h1v1h-1zM39 13h1v1h-1zM0 14h1v1h-1zM19 14h1v1h-1zM20 14h1v1h-1zM29 14h1v1h-1zM39 14h1v1h-1zM2 15h1v1h-1zM17 15h1v1h-1zM19 15h1v1h-1zM42 15h1v1h-1zM43 15h1v1h-1zM45 15h1v1h-1zM3 16h1v1h-1zM29 16h1v1h-1zM37 16h1v1h-1zM43 16h1v1h-1zM44 16h1v1h-1zM3 17h1v1h-1zM14 17h1v1h-1zM20 17h1v1h-1zM28 17h1v1h-1zM34 17h1v1h-1zM44 17h1v1h-1zM28 18h1v1h-1zM2 19h1v1h-1zM8 19h1v1h-1zM10 19h1v1h-1zM34 19h1v1h-1zM39 19h1v1h-1zM2 20h1v1h-1zM17 20h1v1h-1zM21 20h1v1h-1zM34 20h1v1h-1zM42 20h1v1h-1z" fill="#626262"/>
<path d="M27 0h1v1h-1zM32 0h1v1h-1zM33 0h1v1h-1zM9 1h1v1h-1zM11 1h1v1h-1zM23 1h1v1h-1zM25 1h1v1h-1zM29 1h1v1h-1zM30 1h1v1h-1zM32 1h1v1h-1zM35 1h1v1h-1zM36 1h1v1h-1zM39 1h1v1h-1zM40 1h1v1h-1zM10 2h1v1h-1zM13 2h1v1h-1zM18 2h1v1h-1zM20 2h1v1h-1zM27 2h1v1h-1zM29 2h1v1h-1zM39 2h1v1h-1zM10 3h1v1h-1zM11 3h1v1h-1zM14 3h1v1h-1zM15 3h1v1h-1zM23 3h1v1h-1zM43 3h1v1h-1zM44 3h1v1h-1zM46 3h1v1h-1zM4 4h1v1h-1zM32 4h1v1h-1zM39 4h1v1h-1zM41 4h1v1h-1zM42 4h1v1h-1zM0 5h1v1h-1zM3 5h1v1h-1zM5 5h1v1h-1zM19 5h1v1h-1zM23 5h1v1h-1zM43 5h1v1h-1zM46 5h1v1h-1zM0 6h1v1h-1zM5 6h1v1h-1zM10 6h1v1h-1zM11 6h1v1h-1zM13 6h1v1h-1zM19 6h1v1h-1zM30 6h1v1h-1zM33 6h1v1h-1zM42 6h1v1h-1zM47 6h1v1h-1zM2 7h1v1h-1zM31 7h1v1h-1zM42 7h1v1h-1zM43 7h1v1h-1zM46 7h1v1h-1zM1 8h1v1h-1zM2 8h1v1h-1zM5 8h1v1h-1zM11 8h1v1h-1zM12 8h1v1h-1zM13 8h1v1h-1zM14 8h1v1h-1zM25 8h1v1h-1zM27 8h1v1h-1zM30 8h1v1h-1zM34 8h1v1h-1zM47 8h1v1h-1zM0 9h1v1h-1zM3 9h1v1h-1zM31 9h1v1h-1zM33 9h1v1h-1zM36 9h1v1h-1zM40 9h1v1h-1zM41 9h1v1h-1zM43 9h1v1h-1zM47 9h1v1h-1zM0 10h1v1h-1zM1 10h1v1h-1zM12 10h1v1h-1zM20 10h1v1h-1zM22 10h1v1h-1zM23 10h1v1h-1zM32 10h1v1h-1zM34 10h1v1h-1zM36 10h1v1h-1zM40 10h1v1h-1zM41 10h1v1h-1zM11 11h1v1h-1zM16 11h1v1h-1zM19 11h1v1h-1zM23 11h1v1h-1zM26 11h1v1h-1zM29 11h1v1h-1zM33 11h1v1h-1zM44 11h1v1h-1zM14 12h1v1h-1zM20 12h1v1h-1zM32 12h1v1h-1zM40 12h1v1h-1zM42 12h1v1h-1zM46 12h1v1h-1zM47 12h1v1h-1zM6 13h1v1h-1zM11 13h1v1h-1zM25 13h1v1h-1zM32 13h1v1h-1zM34 13h1v1h-1zM36 13h1v1h-1zM42 13h1v1h-1zM46 13h1v1h-1zM11 14h1v1h-1zM17 14h1v1h-1zM28 14h1v1h-1zM32 14h1v1h-1zM44 14h1v1h-1zM46 14h1v1h-1zM3 15h1v1h-1zM7 15h1v1h-1zM12 15h1v1h-1zM15 15h1v1h-1zM32 15h1v1h-1zM35 15h1v1h-1zM11 16h1v1h-1zM17 16h1v1h-1zM21 16h1v1h-1zM26 16h1v1h-1zM31 16h1v1h-1zM36 16h1v1h-1zM2 17h1v1h-1zM9 17h1v1h-1zM11 17h1v1h-1zM13 17h1v1h-1zM15 17h1v1h-1zM16 17h1v1h-1zM21 17h1v1h-1zM27 17h1v1h-1zM30 17h1v1h-1zM37 17h1v1h-1zM38 17h1v1h-1zM45 17h1v1h-1zM5 18h1v1h-1zM6 18h1v1h-1zM9 18h1v1h-1zM14 18h1v1h-1zM17 18h1v1h-1zM20 18h1v1h-1zM30 18h1v1h-1zM34 18h1v1h-1zM41 18h1v1h-1zM44 18h1v1h-1zM46 18h1v1h-1zM47 18h1v1h-1zM5 19h1v1h-1zM20 19h1v1h-1zM28 19h1v1h-1zM40 19h1v1h-1zM46 19h1v1h-1zM11 20h1v1h-1zM16 20h1v1h-1zM20 20h1v1h-1zM26 20h1v1h-1zM31 20h1v1h-1zM35 20h1v1h-1zM36 20h1v1h-1zM37 20h1v1h-1z" fill="#767676"/>
<path d="M1 0h1v1h-1zM2 0h1v1h-1zM6 0h1v1h-1zM7 0h1v1h-1zM11 0h1v1h-1zM15 0h1v1h-1zM22 0h1v1h-1zM41 0h1v1h-1zM42 0h1v1h-1zM1 1h1v1h-1zM7 1h1v1h-1zM10 1h1v1h-1zM13 1h1v1h-1zM34 1h1v1h-1zM45 1h1v1h-1zM1 2h1v1h-1zM2 2h1v1h-1zM4 2h1v1h-1zM5 2h1v1h-1zM8 2h1v1h-1zM9 2h1v1h-1zM14 2h1v1h-1zM16 2h1v1h-1zM19 2h1v1h-1zM21 2h1v1h-1zM32 2h1v1h-1zM34 2h1v1h-1zM47 2h1v1h-1zM16 3h1v1h-1zM19 3h1v1h-1zM20 3h1v1h-1zM22 3h1v1h-1zM25 3h1v1h-1zM27 3h1v1h-1zM33 3h1v1h-1zM34 3h1v1h-1zM36 3h1v1h-1zM40 3h1v1h-1zM42 3h1v1h-1zM9 4h1v1h-1zM10 4h1v1h-1zM17 4h1v1h-1zM21 4h1v1h-1zM23 4h1v1h-1zM28 4h1v1h-1zM29 4h1v1h-1zM33 4h1v1h-1zM40 4h1v1h-1zM6 5h1v1h-1zM9 5h1v1h-1zM12 5h1v1h-1zM14 5h1v1h-1zM17 5h1v1h-1zM18 5h1v1h-1zM32 5h1v1h-1zM37 5h1v1h-1zM47 5h1v1h-1zM6 6h1v1h-1zM7 6h1v1h-1zM14 6h1v1h-1zM15 6h1v1h-1zM22 6h1v1h-1zM23 6h1v1h-1zM25 6h1v1h-1zM26 6h1v1h-1zM32 6h1v1h-1zM37 6h1v1h-1zM43 6h1v1h-1zM0 7h1v1h-1zM1 7h1v1h-1zM6 7h1v1h-1zM12 7h1v1h-1zM19 7h1v1h-1zM24 7h1v1h-1zM25 7h1v1h-1zM28 7h1v1h-1zM45 7h1v1h-1zM15 8h1v1h-1zM17 8h1v1h-1zM29 8h1v1h-1zM32 8h1v1h-1zM40 8h1v1h-1zM19 9h1v1h-1zM26 9h1v1h-1zM28 9h1v1h-1zM34 9h1v1h-1zM4 10h1v1h-1zM13 10h1v1h-1zM14 10h1v1h-1zM17 10h1v1h-1zM30 10h1v1h-1zM31 10h1v1h-1zM42 10h1v1h-1zM43 10h1v1h-1zM45 10h1v1h-1zM8 11h1v1h-1zM10 11h1v1h-1zM12 11h1v1h-1zM20 11h1v1h-1zM25 11h1v1h-1zM27 11h1v1h-1zM30 11h1v1h-1zM31 11h1v1h-1zM41 11h1v1h-1zM1 12h1v1h-1zM5 12h1v1h-1zM7 12h1v1h-1zM10 12h1v1h-1zM17 12h1v1h-1zM18 12h1v1h-1zM21 12h1v1h-1zM24 12h1v1h-1zM28 12h1v1h-1zM30 12h1v1h-1zM33 12h1v1h-1zM43 12h1v1h-1zM45 12h1v1h-1zM0 13h1v1h-1zM1 13h1v1h-1zM2 13h1v1h-1zM4 13h1v1h-1zM5 13h1v1h-1zM7 13h1v1h-1zM8 13h1v1h-1zM9 13h1v1h-1zM22 13h1v1h-1zM43 13h1v1h-1zM47 13h1v1h-1zM1 14h1v1h-1zM6 14h1v1h-1zM8 14h1v1h-1zM12 14h1v1h-1zM15 14h1v1h-1zM22 14h1v1h-1zM27 14h1v1h-1zM31 14h1v1h-1zM33 14h1v1h-1zM37 14h1v1h-1zM38 14h1v1h-1zM42 14h1v1h-1zM24 15h1v1h-1zM28 15h1v1h-1zM29 15h1v1h-1zM31 15h1v1h-1zM47 15h1v1h-1zM1 16h1v1h-1zM12 16h1v1h-1zM16 16h1v1h-1zM20 16h1v1h-1zM24 16h1v1h-1zM25 16h1v1h-1zM34 16h1v1h-1zM39 16h1v1h-1zM42 16h1v1h-1zM46 16h1v1h-1zM1 17h1v1h-1zM12 17h1v1h-1zM33 17h1v1h-1zM43 17h1v1h-1zM46 17h1v1h-1zM47 17h1v1h-1zM0 18h1v1h-1zM10 18h1v1h-1zM18 18h1v1h-1zM23 18h1v1h-1zM0 19h1v1h-1zM1 19h1v1h-1zM3 19h1v1h-1zM4 19h1v1h-1zM11 19h1v1h-1zM13 19h1v1h-1zM14 19h1v1h-1zM16 19h1v1h-1zM26 19h1v1h-1zM29 19h1v1h-1zM30 19h1v1h-1zM32 19h1v1h-1zM35 19h1v1h-1zM36 19h1v1h-1zM3 20h1v1h-1zM5 20h1v1h-1zM6 20h1v1h-1zM8 20h1v1h-1zM15 20h1v1h-1zM19 20h1v1h-1zM22 20h1v1h-1zM23 20h1v1h-1zM25 20h1v1h-1zM33 20h1v1h-1zM39 20h1v1h-1zM47 20h1v1h-1z" fill="#898989"/>
<path d="M4 0h1v1h-1zM5 0h1v1h-1zM10 0h1v1h-1zM13 0h1v1h-1zM14 0h1v1h-1zM16 0h1v1h-1zM28 0h1v1h-1zM34 0h1v1h-1zM46 0h1v1h-1zM0 1h1v1h-1zM21 1h1v1h-1zM26 1h1v1h-1zM42 1h1v1h-1zM44 1h1v1h-1zM7 2h1v1h-1zM11 2h1v1h-1zM22 2h1v1h-1zM30 2h1v1h-1zM31 2h1v1h-1zM33 2h1v1h-1zM37 2h1v1h-1zM41 2h1v1h-1zM42 2h1v1h-1zM44 2h1v1h-1zM45 2h1v1h-1zM2 3h1v1h-1zM4 3h1v1h-1zM26 3h1v1h-1zM28 3h1v1h-1zM29 3h1v1h-1zM30 3h1v1h-1zM45 3h1v1h-1zM7 4h1v1h-1zM13 4h1v1h-1zM14 4h1v1h-1zM24 4h1v1h-1zM26 4h1v1h-1zM31 4h1v1h-1zM35 4h1v1h-1zM38 4h1v1h-1zM44 4h1v1h-1zM46 4h1v1h-1zM10 5h1v1h-1zM25 5h1v1h-1zM26 5h1v1h-1zM27 5h1v1h-1zM30 5h1v1h-1zM39 5h1v1h-1zM41 5h1v1h-1zM42 5h1v1h-1zM44 5h1v1h-1zM1 6h1v1h-1zM3 6h1v1h-1zM9 6h1v1h-1zM12 6h1v1h-1zM18 6h1v1h-1zM31 6h1v1h-1zM46 6h1v1h-1zM9 7h1v1h-1zM11 7h1v1h-1zM14 7h1v1h-1zM21 7h1v1h-1zM27 7h1v1h-1zM30 7h1v1h-1zM37 7h1v1h-1zM40 7h1v1h-1zM41 7h1v1h-1zM47 7h1v1h-1zM18 8h1v1h-1zM24 8h1v1h-1zM36 8h1v1h-1zM39 8h1v1h-1zM45 8h1v1h-1zM1 9h1v1h-1zM4 9h1v1h-1zM7 9h1v1h-1zM8 9h1v1h-1zM10 9h1v1h-1zM12 9h1v1h-1zM13 9h1v1h-1zM14 9h1v1h-1zM15 9h1v1h-1zM16 9h1v1h-1zM17 9h1v1h-1zM22 9h1v1h-1zM27 9h1v1h-1zM29 9h1v1h-1zM32 9h1v1h-1zM44 9h1v1h-1zM45 9h1v1h-1zM3 10h1v1h-1zM7 10h1v1h-1zM11 10h1v1h-1zM39 10h1v1h-1zM46 10h1v1h-1zM1 11h1v1h-1zM2 11h1v1h-1zM13 11h1v1h-1zM28 11h1v1h-1zM0 12h1v1h-1zM2 12h1v1h-1zM13 12h1v1h-1zM41 12h1v1h-1zM44 12h1v1h-1zM3 13h1v1h-1zM10 13h1v1h-1zM14 13h1v1h-1zM20 13h1v1h-1zM23 13h1v1h-1zM26 13h1v1h-1zM33 13h1v1h-1zM44 13h1v1h-1zM7 14h1v1h-1zM10 14h1v1h-1zM16 14h1v1h-1zM26 14h1v1h-1zM36 14h1v1h-1zM45 14h1v1h-1zM5 15h1v1h-1zM6 15h1v1h-1zM9 15h1v1h-1zM14 15h1v1h-1zM27 15h1v1h-1zM38 15h1v1h-1zM39 15h1v1h-1zM46 15h1v1h-1zM2 16h1v1h-1zM4 16h1v1h-1zM10 16h1v1h-1zM22 16h1v1h-1zM27 16h1v1h-1zM30 16h1v1h-1zM32 16h1v1h-1zM38 16h1v1h-1zM40 16h1v1h-1zM4 17h1v1h-1zM8 17h1v1h-1zM10 17h1v1h-1zM17 17h1v1h-1zM19 17h1v1h-1zM25 17h1v1h-1zM31 17h1v1h-1zM35 17h1v1h-1zM16 18h1v1h-1zM19 18h1v1h-1zM24 18h1v1h-1zM31 18h1v1h-1zM36 18h1v1h-1zM37 18h1v1h-1zM40 18h1v1h-1zM42 18h1v1h-1zM45 18h1v1h-1zM6 19h1v1h-1zM15 19h1v1h-1zM18 19h1v1h-1zM23 19h1v1h-1zM24 19h1v1h-1zM31 19h1v1h-1zM42 19h1v1h-1zM44 19h1v1h-1zM4 20h1v1h-1zM7 20h1v1h-1zM9 20h1v1h-1zM24 20h1v1h-1zM27 20h1v1h-1zM32 20h1v1h-1zM38 20h1v1h-1zM43 20h1v1h-1zM46 20h1v1h-1z" fill="#9d9d9d"/>
<path d="M12 0h1v1h-1zM17 0h1v1h-1zM18 0h1v1h-1zM20 0h1v1h-1zM35 0h1v1h-1zM36 0h1v1h-1zM44 0h1v1h-1zM45 0h1v1h-1zM47 0h1v1h-1zM2 1h1v1h-1zM5 1h1v1h-1zM17 1h1v1h-1zM19 1h1v1h-1zM31 1h1v1h-1zM43 1h1v1h-1zM3 2h1v1h-1zM12 2h1v1h-1zM17 2h1v1h-1zM35 2h1v1h-1zM38 2h1v1h-1zM5 3h1v1h-1zM7 3h1v1h-1zM8 3h1v1h-1zM12 3h1v1h-1zM18 3h1v1h-1zM35 3h1v1h-1zM37 3h1v1h-1zM0 4h1v1h-1zM1 4h1v1h-1zM12 4h1v1h-1zM18 4h1v1h-1zM25 4h1v1h-1zM34 4h1v1h-1zM45 4h1v1h-1zM2 5h1v1h-1zM7 5h1v1h-1zM20 5h1v1h-1zM21 5h1v1h-1zM28 5h1v1h-1zM29 5h1v1h-1zM31 5h1v1h-1zM33 5h1v1h-1zM38 5h1v1h-1zM45 5h1v1h-1zM2 6h1v1h-1zM20 6h1v1h-1zM29 6h1v1h-1zM34 6h1v1h-1zM36 6h1v1h-1zM40 6h1v1h-1zM44 6h1v1h-1zM16 7h1v1h-1zM17 7h1v1h-1zM23 7h1v1h-1zM32 7h1v1h-1zM33 7h1v1h-1zM39 7h1v1h-1zM16 8h1v1h-1zM41 8h1v1h-1zM46 8h1v1h-1zM37 9h1v1h-1zM10 10h1v1h-1zM16 10h1v1h-1zM29 10h1v1h-1zM44 10h1v1h-1zM6 11h1v1h-1zM39 11h1v1h-1zM47 11h1v1h-1zM8 12h1v1h-1zM39 12h1v1h-1zM13 13h1v1h-1zM15 13h1v1h-1zM16 13h1v1h-1zM18 13h1v1h-1zM19 13h1v1h-1zM24 13h1v1h-1zM27 13h1v1h-1zM14 14h1v1h-1zM23 14h1v1h-1zM25 14h1v1h-1zM30 14h1v1h-1zM34 14h1v1h-1zM40 14h1v1h-1zM41 14h1v1h-1zM47 14h1v1h-1zM8 15h1v1h-1zM10 15h1v1h-1zM23 15h1v1h-1zM33 15h1v1h-1zM36 15h1v1h-1zM37 15h1v1h-1zM40 15h1v1h-1zM44 15h1v1h-1zM6 16h1v1h-1zM9 16h1v1h-1zM13 16h1v1h-1zM15 16h1v1h-1zM19 16h1v1h-1zM33 16h1v1h-1zM41 16h1v1h-1zM0 17h1v1h-1zM5 17h1v1h-1zM6 17h1v1h-1zM7 17h1v1h-1zM18 17h1v1h-1zM23 17h1v1h-1zM24 17h1v1h-1zM26 17h1v1h-1zM29 17h1v1h-1zM39 17h1v1h-1zM2 18h1v1h-1zM15 18h1v1h-1zM21 18h1v1h-1zM25 18h1v1h-1zM26 18h1v1h-1zM33 18h1v1h-1zM39 18h1v1h-1zM43 18h1v1h-1zM7 19h1v1h-1zM17 19h1v1h-1zM22 19h1v1h-1zM27 19h1v1h-1zM37 19h1v1h-1zM38 19h1v1h-1zM47 19h1v1h-1zM12 20h1v1h-1zM14 20h1v1h-1zM18 20h1v1h-1zM29 20h1v1h-1zM40 20h1v1h-1zM45 20h1v1h-1z" fill="#b1b1b1"/>
<path d="M0 0h1v1h-1zM19 0h1v1h-1zM21 0h1v1h-1zM25 0h1v1h-1zM29 0h1v1h-1zM43 0h1v1h-1zM4 1h1v1h-1zM15 1h1v1h-1zM18 1h1v1h-1zM22 1h1v1h-1zM27 1h1v1h-1zM33 1h1v1h-1zM24 2h1v1h-1zM25 2h1v1h-1zM26 2h1v1h-1zM46 2h1v1h-1zM0 3h1v1h-1zM24 3h1v1h-1zM32 3h1v1h-1zM38 3h1v1h-1zM39 3h1v1h-1zM41 3h1v1h-1zM47 3h1v1h-1zM2 4h1v1h-1zM3 4h1v1h-1zM22 4h1v1h-1zM30 4h1v1h-1zM36 4h1v1h-1zM34 5h1v1h-1zM4 6h1v1h-1zM16 6h1v1h-1zM17 6h1v1h-1zM24 6h1v1h-1zM27 6h1v1h-1zM38 6h1v1h-1zM4 7h1v1h-1zM20 7h1v1h-1zM36 7h1v1h-1zM44 7h1v1h-1zM9 8h1v1h-1zM20 8h1v1h-1zM38 8h1v1h-1zM42 8h1v1h-1zM44 8h1v1h-1zM9 9h1v1h-1zM28 10h1v1h-1zM9 11h1v1h-1zM17 11h1v1h-1zM18 11h1v1h-1zM4 12h1v1h-1zM12 12h1v1h-1zM19 12h1v1h-1zM37 13h1v1h-1zM40 13h1v1h-1zM41 13h1v1h-1zM2 14h1v1h-1zM18 14h1v1h-1zM24 14h1v1h-1zM4 15h1v1h-1zM11 15h1v1h-1zM41 15h1v1h-1zM0 16h1v1h-1zM7 16h1v1h-1zM14 16h1v1h-1zM41 17h1v1h-1zM1 18h1v1h-1zM3 18h1v1h-1zM7 18h1v1h-1zM8 18h1v1h-1zM12 18h1v1h-1zM27 18h1v1h-1zM32 18h1v1h-1zM38 18h1v1h-1zM19 19h1v1h-1zM41 19h1v1h-1zM10 20h1v1h-1z" fill="#c4c4c4"/>
<path d="M9 0h1v1h-1zM38 0h1v1h-1zM20 1h1v1h-1zM0 2h1v1h-1zM13 3h1v1h-1zM21 3h1v1h-1zM16 4h1v1h-1zM20 4h1v1h-1zM4 5h1v1h-1zM15 5h1v1h-1zM16 5h1v1h-1zM36 5h1v1h-1zM40 5h1v1h-1zM8 8h1v1h-1zM28 8h1v1h-1zM39 9h1v1h-1zM42 9h1v1h-1zM15 10h1v1h-1zM11 12h1v1h-1zM31 12h1v1h-1zM36 12h1v1h-1zM38 12h1v1h-1zM38 13h1v1h-1zM4 14h1v1h-1zM5 14h1v1h-1zM13 15h1v1h-1zM16 15h1v1h-1zM25 15h1v1h-1zM30 15h1v1h-1zM35 16h1v1h-1zM45 16h1v1h-1zM22 17h1v1h-1zM32 17h1v1h-1zM40 17h1v1h-1zM42 17h1v1h-1zM4 18h1v1h-1zM11 18h1v1h-1zM13 18h1v1h-1zM22 18h1v1h-1zM25 19h1v1h-1zM1 20h1v1h-1zM44 20h1v1h-1z" fill="#d8d8d8"/>
<path d="M41 1h1v1h-1zM6 2h1v1h-1zM27 4h1v1h-1zM47 4h1v1h-1zM41 6h1v1h-1zM3 8h1v1h-1zM1 15h1v1h-1zM20 15h1v1h-1zM34 15h1v1h-1zM8 16h1v1h-1zM23 16h1v1h-1zM47 16h1v1h-1zM33 19h1v1h-1zM45 19h1v1h-1zM0 20h1v1h-1zM30 20h1v1h-1z" fill="#ebebeb"/>
<path d="M37 0h1v1h-1zM6 1h1v1h-1zM40 2h1v1h-1zM5 4h1v1h-1zM43 4h1v1h-1zM21 6h1v1h-1zM45 6h1v1h-1zM18 15h1v1h-1zM26 15h1v1h-1z" fill="#ffffff"/>
</g>
<rect x="564" y="173.40" width="89.6" height="39.60" fill="#828282" filter="url(#flat)"/>
<rect x="656.4" y="173.40" width="89.8" height="39.60" fill="#888" filter="url(#sm3)"/>
<rect x="657" y="188.70" width="89.00" height="9" fill="#000" opacity="0.4" filter="url(#vb)"/>
<rect x="468" y="213.20" width="280" height="39.30" fill="#fff"/>
<g transform="translate(469.30,213.20) scale(1.8854,1.8714)" shape-rendering="crispEdges">
<path d="M9 10h1v1h-1zM42 13h1v1h-1z" fill="#000000"/>
<path d="M12 7h1v1h-1zM1 11h1v1h-1zM11 13h1v1h-1z" fill="#141414"/>
<path d="M38 6h1v1h-1zM2 7h1v1h-1zM40 7h1v1h-1zM47 7h1v1h-1zM12 8h1v1h-1zM34 9h1v1h-1zM36 10h1v1h-1zM2 11h1v1h-1zM45 12h1v1h-1zM5 14h1v1h-1zM24 15h1v1h-1zM23 17h1v1h-1z" fill="#272727"/>
<path d="M36 1h1v1h-1zM16 2h1v1h-1zM29 2h1v1h-1zM14 4h1v1h-1zM44 4h1v1h-1zM32 5h1v1h-1zM3 6h1v1h-1zM21 7h1v1h-1zM27 7h1v1h-1zM31 7h1v1h-1zM3 8h1v1h-1zM7 8h1v1h-1zM19 8h1v1h-1zM23 8h1v1h-1zM25 8h1v1h-1zM29 8h1v1h-1zM42 8h1v1h-1zM6 9h1v1h-1zM7 9h1v1h-1zM8 9h1v1h-1zM27 9h1v1h-1zM45 9h1v1h-1zM10 10h1v1h-1zM12 10h1v1h-1zM15 10h1v1h-1zM25 10h1v1h-1zM27 10h1v1h-1zM29 10h1v1h-1zM30 10h1v1h-1zM37 10h1v1h-1zM43 10h1v1h-1zM46 10h1v1h-1zM3 11h1v1h-1zM26 11h1v1h-1zM16 12h1v1h-1zM47 13h1v1h-1zM42 14h1v1h-1zM41 19h1v1h-1zM45 20h1v1h-1z" fill="#3b3b3b"/>
<path d="M29 0h1v1h-1zM39 0h1v1h-1zM43 0h1v1h-1zM19 1h1v1h-1zM22 1h1v1h-1zM32 1h1v1h-1zM3 3h1v1h-1zM5 4h1v1h-1zM10 4h1v1h-1zM21 4h1v1h-1zM41 4h1v1h-1zM33 5h1v1h-1zM0 6h1v1h-1zM19 6h1v1h-1zM34 6h1v1h-1zM43 6h1v1h-1zM34 7h1v1h-1zM46 7h1v1h-1zM5 8h1v1h-1zM22 8h1v1h-1zM24 8h1v1h-1zM33 8h1v1h-1zM46 8h1v1h-1zM17 9h1v1h-1zM18 9h1v1h-1zM20 9h1v1h-1zM21 9h1v1h-1zM33 9h1v1h-1zM35 9h1v1h-1zM2 10h1v1h-1zM3 10h1v1h-1zM7 10h1v1h-1zM42 10h1v1h-1zM0 11h1v1h-1zM18 11h1v1h-1zM28 11h1v1h-1zM35 11h1v1h-1zM36 11h1v1h-1zM38 11h1v1h-1zM39 11h1v1h-1zM41 11h1v1h-1zM3 12h1v1h-1zM5 12h1v1h-1zM30 12h1v1h-1zM32 12h1v1h-1zM46 12h1v1h-1zM6 13h1v1h-1zM9 13h1v1h-1zM14 13h1v1h-1zM27 13h1v1h-1zM2 14h1v1h-1zM7 14h1v1h-1zM9 14h1v1h-1zM25 14h1v1h-1zM27 14h1v1h-1zM10 15h1v1h-1zM19 15h1v1h-1zM14 16h1v1h-1zM5 17h1v1h-1zM14 18h1v1h-1zM42 18h1v1h-1zM11 19h1v1h-1zM43 19h1v1h-1zM5 20h1v1h-1zM16 20h1v1h-1z" fill="#4e4e4e"/>
<path d="M15 0h1v1h-1zM18 0h1v1h-1zM40 0h1v1h-1zM11 1h1v1h-1zM12 1h1v1h-1zM17 1h1v1h-1zM21 1h1v1h-1zM28 1h1v1h-1zM37 1h1v1h-1zM38 1h1v1h-1zM39 1h1v1h-1zM23 2h1v1h-1zM43 2h1v1h-1zM27 3h1v1h-1zM2 4h1v1h-1zM4 4h1v1h-1zM20 4h1v1h-1zM25 4h1v1h-1zM31 4h1v1h-1zM11 5h1v1h-1zM28 5h1v1h-1zM17 6h1v1h-1zM23 6h1v1h-1zM42 6h1v1h-1zM4 7h1v1h-1zM20 7h1v1h-1zM35 7h1v1h-1zM36 7h1v1h-1zM41 7h1v1h-1zM42 7h1v1h-1zM6 8h1v1h-1zM10 8h1v1h-1zM11 8h1v1h-1zM16 8h1v1h-1zM20 8h1v1h-1zM26 8h1v1h-1zM28 8h1v1h-1zM30 8h1v1h-1zM34 8h1v1h-1zM43 8h1v1h-1zM44 8h1v1h-1zM2 9h1v1h-1zM4 9h1v1h-1zM22 9h1v1h-1zM25 9h1v1h-1zM30 9h1v1h-1zM31 9h1v1h-1zM36 9h1v1h-1zM38 9h1v1h-1zM39 9h1v1h-1zM46 9h1v1h-1zM1 10h1v1h-1zM5 10h1v1h-1zM8 10h1v1h-1zM22 10h1v1h-1zM23 10h1v1h-1zM24 10h1v1h-1zM31 10h1v1h-1zM38 10h1v1h-1zM40 10h1v1h-1zM41 10h1v1h-1zM7 11h1v1h-1zM8 11h1v1h-1zM15 11h1v1h-1zM16 11h1v1h-1zM24 11h1v1h-1zM25 11h1v1h-1zM32 11h1v1h-1zM34 11h1v1h-1zM44 11h1v1h-1zM9 12h1v1h-1zM10 12h1v1h-1zM11 12h1v1h-1zM13 12h1v1h-1zM14 12h1v1h-1zM20 12h1v1h-1zM23 12h1v1h-1zM34 12h1v1h-1zM42 12h1v1h-1zM1 13h1v1h-1zM7 13h1v1h-1zM12 13h1v1h-1zM21 13h1v1h-1zM34 13h1v1h-1zM11 14h1v1h-1zM13 14h1v1h-1zM34 14h1v1h-1zM35 14h1v1h-1zM37 14h1v1h-1zM14 15h1v1h-1zM29 15h1v1h-1zM2 16h1v1h-1zM4 16h1v1h-1zM5 16h1v1h-1zM15 16h1v1h-1zM32 16h1v1h-1zM38 16h1v1h-1zM27 17h1v1h-1zM32 17h1v1h-1zM36 17h1v1h-1zM40 17h1v1h-1zM42 17h1v1h-1zM45 17h1v1h-1zM15 18h1v1h-1zM16 18h1v1h-1zM22 18h1v1h-1zM40 18h1v1h-1zM6 19h1v1h-1zM10 19h1v1h-1zM28 19h1v1h-1zM32 19h1v1h-1zM33 19h1v1h-1zM47 19h1v1h-1zM1 20h1v1h-1zM11 20h1v1h-1zM18 20h1v1h-1zM34 20h1v1h-1zM37 20h1v1h-1z" fill="#626262"/>
<path d="M3 0h1v1h-1zM4 0h1v1h-1zM12 0h1v1h-1zM16 0h1v1h-1zM19 0h1v1h-1zM20 0h1v1h-1zM22 0h1v1h-1zM38 0h1v1h-1zM7 1h1v1h-1zM15 1h1v1h-1zM33 1h1v1h-1zM34 1h1v1h-1zM35 1h1v1h-1zM6 2h1v1h-1zM8 2h1v1h-1zM14 2h1v1h-1zM17 2h1v1h-1zM18 2h1v1h-1zM32 2h1v1h-1zM41 2h1v1h-1zM42 2h1v1h-1zM0 3h1v1h-1zM8 3h1v1h-1zM20 3h1v1h-1zM0 4h1v1h-1zM18 4h1v1h-1zM27 4h1v1h-1zM29 4h1v1h-1zM46 4h1v1h-1zM0 5h1v1h-1zM18 5h1v1h-1zM21 5h1v1h-1zM29 5h1v1h-1zM31 5h1v1h-1zM38 5h1v1h-1zM39 5h1v1h-1zM5 6h1v1h-1zM22 6h1v1h-1zM28 6h1v1h-1zM39 6h1v1h-1zM40 6h1v1h-1zM5 7h1v1h-1zM13 7h1v1h-1zM14 7h1v1h-1zM16 7h1v1h-1zM23 7h1v1h-1zM24 7h1v1h-1zM25 7h1v1h-1zM33 7h1v1h-1zM37 7h1v1h-1zM39 7h1v1h-1zM43 7h1v1h-1zM1 8h1v1h-1zM4 8h1v1h-1zM8 8h1v1h-1zM35 8h1v1h-1zM36 8h1v1h-1zM45 8h1v1h-1zM1 9h1v1h-1zM3 9h1v1h-1zM11 9h1v1h-1zM14 9h1v1h-1zM23 9h1v1h-1zM28 9h1v1h-1zM40 9h1v1h-1zM43 9h1v1h-1zM11 10h1v1h-1zM16 10h1v1h-1zM19 10h1v1h-1zM26 10h1v1h-1zM32 10h1v1h-1zM34 10h1v1h-1zM39 10h1v1h-1zM44 10h1v1h-1zM4 11h1v1h-1zM10 11h1v1h-1zM13 11h1v1h-1zM20 11h1v1h-1zM31 11h1v1h-1zM33 11h1v1h-1zM37 11h1v1h-1zM1 12h1v1h-1zM4 12h1v1h-1zM12 12h1v1h-1zM21 12h1v1h-1zM26 12h1v1h-1zM38 12h1v1h-1zM44 12h1v1h-1zM5 13h1v1h-1zM23 13h1v1h-1zM26 13h1v1h-1zM29 13h1v1h-1zM38 13h1v1h-1zM40 13h1v1h-1zM44 13h1v1h-1zM1 14h1v1h-1zM12 14h1v1h-1zM20 14h1v1h-1zM33 14h1v1h-1zM40 14h1v1h-1zM45 14h1v1h-1zM47 14h1v1h-1zM0 15h1v1h-1zM2 15h1v1h-1zM20 15h1v1h-1zM31 15h1v1h-1zM38 15h1v1h-1zM8 16h1v1h-1zM12 16h1v1h-1zM40 16h1v1h-1zM47 16h1v1h-1zM3 17h1v1h-1zM22 17h1v1h-1zM41 17h1v1h-1zM44 17h1v1h-1zM2 18h1v1h-1zM5 18h1v1h-1zM13 18h1v1h-1zM17 18h1v1h-1zM31 18h1v1h-1zM35 18h1v1h-1zM37 18h1v1h-1zM43 18h1v1h-1zM47 18h1v1h-1zM0 19h1v1h-1zM2 19h1v1h-1zM15 19h1v1h-1zM16 19h1v1h-1zM17 19h1v1h-1zM42 19h1v1h-1zM45 19h1v1h-1zM12 20h1v1h-1zM28 20h1v1h-1zM31 20h1v1h-1z" fill="#767676"/>
<path d="M1 0h1v1h-1zM2 0h1v1h-1zM7 0h1v1h-1zM23 0h1v1h-1zM33 0h1v1h-1zM37 0h1v1h-1zM41 0h1v1h-1zM2 1h1v1h-1zM3 1h1v1h-1zM10 1h1v1h-1zM13 1h1v1h-1zM14 1h1v1h-1zM23 1h1v1h-1zM24 1h1v1h-1zM25 1h1v1h-1zM27 1h1v1h-1zM44 1h1v1h-1zM3 2h1v1h-1zM9 2h1v1h-1zM15 2h1v1h-1zM24 2h1v1h-1zM30 2h1v1h-1zM33 2h1v1h-1zM37 2h1v1h-1zM6 3h1v1h-1zM11 3h1v1h-1zM13 3h1v1h-1zM28 3h1v1h-1zM29 3h1v1h-1zM33 3h1v1h-1zM36 3h1v1h-1zM41 3h1v1h-1zM45 3h1v1h-1zM1 4h1v1h-1zM7 4h1v1h-1zM9 4h1v1h-1zM11 4h1v1h-1zM13 4h1v1h-1zM16 4h1v1h-1zM32 4h1v1h-1zM33 4h1v1h-1zM39 4h1v1h-1zM43 4h1v1h-1zM6 5h1v1h-1zM9 5h1v1h-1zM15 5h1v1h-1zM16 5h1v1h-1zM19 5h1v1h-1zM23 5h1v1h-1zM30 5h1v1h-1zM34 5h1v1h-1zM40 5h1v1h-1zM47 5h1v1h-1zM2 6h1v1h-1zM9 6h1v1h-1zM10 6h1v1h-1zM13 6h1v1h-1zM16 6h1v1h-1zM18 6h1v1h-1zM20 6h1v1h-1zM25 6h1v1h-1zM30 6h1v1h-1zM35 6h1v1h-1zM37 6h1v1h-1zM46 6h1v1h-1zM7 7h1v1h-1zM15 7h1v1h-1zM18 7h1v1h-1zM29 7h1v1h-1zM32 7h1v1h-1zM38 7h1v1h-1zM14 8h1v1h-1zM15 8h1v1h-1zM17 8h1v1h-1zM37 8h1v1h-1zM38 8h1v1h-1zM39 8h1v1h-1zM40 8h1v1h-1zM0 9h1v1h-1zM5 9h1v1h-1zM10 9h1v1h-1zM32 9h1v1h-1zM44 9h1v1h-1zM4 10h1v1h-1zM13 10h1v1h-1zM20 10h1v1h-1zM35 10h1v1h-1zM47 10h1v1h-1zM9 11h1v1h-1zM17 11h1v1h-1zM21 11h1v1h-1zM42 11h1v1h-1zM43 11h1v1h-1zM45 11h1v1h-1zM46 11h1v1h-1zM47 11h1v1h-1zM0 12h1v1h-1zM2 12h1v1h-1zM6 12h1v1h-1zM15 12h1v1h-1zM18 12h1v1h-1zM25 12h1v1h-1zM29 12h1v1h-1zM33 12h1v1h-1zM47 12h1v1h-1zM2 13h1v1h-1zM13 13h1v1h-1zM18 13h1v1h-1zM20 13h1v1h-1zM22 13h1v1h-1zM24 13h1v1h-1zM33 13h1v1h-1zM37 13h1v1h-1zM46 13h1v1h-1zM0 14h1v1h-1zM3 14h1v1h-1zM4 14h1v1h-1zM8 14h1v1h-1zM16 14h1v1h-1zM24 14h1v1h-1zM26 14h1v1h-1zM29 14h1v1h-1zM36 14h1v1h-1zM7 15h1v1h-1zM33 15h1v1h-1zM34 15h1v1h-1zM39 15h1v1h-1zM41 15h1v1h-1zM46 15h1v1h-1zM0 16h1v1h-1zM16 16h1v1h-1zM18 16h1v1h-1zM23 16h1v1h-1zM29 16h1v1h-1zM30 16h1v1h-1zM33 16h1v1h-1zM41 16h1v1h-1zM45 16h1v1h-1zM0 17h1v1h-1zM1 17h1v1h-1zM6 17h1v1h-1zM9 17h1v1h-1zM12 17h1v1h-1zM20 17h1v1h-1zM24 17h1v1h-1zM29 17h1v1h-1zM39 17h1v1h-1zM46 17h1v1h-1zM6 18h1v1h-1zM9 18h1v1h-1zM38 18h1v1h-1zM44 18h1v1h-1zM1 19h1v1h-1zM5 19h1v1h-1zM7 19h1v1h-1zM8 19h1v1h-1zM9 19h1v1h-1zM13 19h1v1h-1zM14 19h1v1h-1zM19 19h1v1h-1zM21 19h1v1h-1zM23 19h1v1h-1zM25 19h1v1h-1zM29 19h1v1h-1zM36 19h1v1h-1zM37 19h1v1h-1zM8 20h1v1h-1zM14 20h1v1h-1zM17 20h1v1h-1zM19 20h1v1h-1zM35 20h1v1h-1zM36 20h1v1h-1zM39 20h1v1h-1z" fill="#898989"/>
<path d="M6 0h1v1h-1zM30 0h1v1h-1zM35 0h1v1h-1zM36 0h1v1h-1zM47 0h1v1h-1zM0 1h1v1h-1zM4 1h1v1h-1zM5 1h1v1h-1zM6 1h1v1h-1zM29 1h1v1h-1zM41 1h1v1h-1zM42 1h1v1h-1zM47 1h1v1h-1zM0 2h1v1h-1zM2 2h1v1h-1zM4 2h1v1h-1zM5 2h1v1h-1zM7 2h1v1h-1zM10 2h1v1h-1zM19 2h1v1h-1zM20 2h1v1h-1zM22 2h1v1h-1zM28 2h1v1h-1zM31 2h1v1h-1zM35 2h1v1h-1zM36 2h1v1h-1zM38 2h1v1h-1zM40 2h1v1h-1zM45 2h1v1h-1zM1 3h1v1h-1zM5 3h1v1h-1zM9 3h1v1h-1zM14 3h1v1h-1zM22 3h1v1h-1zM24 3h1v1h-1zM30 3h1v1h-1zM31 3h1v1h-1zM34 3h1v1h-1zM35 3h1v1h-1zM38 3h1v1h-1zM39 3h1v1h-1zM43 3h1v1h-1zM47 3h1v1h-1zM17 4h1v1h-1zM19 4h1v1h-1zM23 4h1v1h-1zM26 4h1v1h-1zM34 4h1v1h-1zM35 4h1v1h-1zM37 4h1v1h-1zM40 4h1v1h-1zM45 4h1v1h-1zM1 5h1v1h-1zM2 5h1v1h-1zM5 5h1v1h-1zM8 5h1v1h-1zM10 5h1v1h-1zM14 5h1v1h-1zM24 5h1v1h-1zM25 5h1v1h-1zM27 5h1v1h-1zM41 5h1v1h-1zM42 5h1v1h-1zM44 5h1v1h-1zM1 6h1v1h-1zM6 6h1v1h-1zM12 6h1v1h-1zM21 6h1v1h-1zM27 6h1v1h-1zM32 6h1v1h-1zM36 6h1v1h-1zM41 6h1v1h-1zM44 6h1v1h-1zM45 6h1v1h-1zM0 7h1v1h-1zM1 7h1v1h-1zM8 7h1v1h-1zM9 7h1v1h-1zM11 7h1v1h-1zM17 7h1v1h-1zM19 7h1v1h-1zM22 7h1v1h-1zM28 7h1v1h-1zM13 8h1v1h-1zM21 8h1v1h-1zM31 8h1v1h-1zM32 8h1v1h-1zM9 9h1v1h-1zM12 9h1v1h-1zM16 9h1v1h-1zM19 9h1v1h-1zM29 9h1v1h-1zM37 9h1v1h-1zM41 9h1v1h-1zM47 9h1v1h-1zM6 10h1v1h-1zM14 10h1v1h-1zM21 10h1v1h-1zM28 10h1v1h-1zM45 10h1v1h-1zM5 11h1v1h-1zM11 11h1v1h-1zM14 11h1v1h-1zM19 11h1v1h-1zM23 11h1v1h-1zM27 11h1v1h-1zM29 11h1v1h-1zM30 11h1v1h-1zM17 12h1v1h-1zM19 12h1v1h-1zM22 12h1v1h-1zM24 12h1v1h-1zM31 12h1v1h-1zM36 12h1v1h-1zM39 12h1v1h-1zM0 13h1v1h-1zM8 13h1v1h-1zM10 13h1v1h-1zM16 13h1v1h-1zM19 13h1v1h-1zM35 13h1v1h-1zM6 14h1v1h-1zM10 14h1v1h-1zM15 14h1v1h-1zM19 14h1v1h-1zM22 14h1v1h-1zM30 14h1v1h-1zM31 14h1v1h-1zM38 14h1v1h-1zM4 15h1v1h-1zM5 15h1v1h-1zM11 15h1v1h-1zM12 15h1v1h-1zM13 15h1v1h-1zM16 15h1v1h-1zM21 15h1v1h-1zM22 15h1v1h-1zM26 15h1v1h-1zM28 15h1v1h-1zM30 15h1v1h-1zM32 15h1v1h-1zM35 15h1v1h-1zM36 15h1v1h-1zM37 15h1v1h-1zM45 15h1v1h-1zM1 16h1v1h-1zM3 16h1v1h-1zM11 16h1v1h-1zM19 16h1v1h-1zM24 16h1v1h-1zM25 16h1v1h-1zM26 16h1v1h-1zM27 16h1v1h-1zM34 16h1v1h-1zM35 16h1v1h-1zM36 16h1v1h-1zM39 16h1v1h-1zM43 16h1v1h-1zM46 16h1v1h-1zM2 17h1v1h-1zM15 17h1v1h-1zM16 17h1v1h-1zM18 17h1v1h-1zM25 17h1v1h-1zM31 17h1v1h-1zM34 17h1v1h-1zM35 17h1v1h-1zM37 17h1v1h-1zM47 17h1v1h-1zM3 18h1v1h-1zM4 18h1v1h-1zM20 18h1v1h-1zM28 18h1v1h-1zM32 18h1v1h-1zM36 18h1v1h-1zM41 18h1v1h-1zM3 19h1v1h-1zM4 19h1v1h-1zM12 19h1v1h-1zM26 19h1v1h-1zM38 19h1v1h-1zM44 19h1v1h-1zM46 19h1v1h-1zM9 20h1v1h-1zM10 20h1v1h-1zM15 20h1v1h-1zM21 20h1v1h-1zM22 20h1v1h-1zM24 20h1v1h-1zM29 20h1v1h-1zM32 20h1v1h-1zM33 20h1v1h-1zM41 20h1v1h-1zM44 20h1v1h-1zM46 20h1v1h-1zM47 20h1v1h-1z" fill="#9d9d9d"/>
<path d="M14 0h1v1h-1zM17 0h1v1h-1zM21 0h1v1h-1zM24 0h1v1h-1zM27 0h1v1h-1zM28 0h1v1h-1zM32 0h1v1h-1zM34 0h1v1h-1zM44 0h1v1h-1zM1 1h1v1h-1zM9 1h1v1h-1zM16 1h1v1h-1zM20 1h1v1h-1zM26 1h1v1h-1zM31 1h1v1h-1zM43 1h1v1h-1zM45 1h1v1h-1zM46 1h1v1h-1zM1 2h1v1h-1zM26 2h1v1h-1zM27 2h1v1h-1zM39 2h1v1h-1zM2 3h1v1h-1zM4 3h1v1h-1zM7 3h1v1h-1zM16 3h1v1h-1zM23 3h1v1h-1zM26 3h1v1h-1zM32 3h1v1h-1zM40 3h1v1h-1zM3 4h1v1h-1zM8 4h1v1h-1zM15 4h1v1h-1zM22 4h1v1h-1zM30 4h1v1h-1zM42 4h1v1h-1zM3 5h1v1h-1zM7 5h1v1h-1zM12 5h1v1h-1zM13 5h1v1h-1zM17 5h1v1h-1zM20 5h1v1h-1zM22 5h1v1h-1zM26 5h1v1h-1zM35 5h1v1h-1zM46 5h1v1h-1zM8 6h1v1h-1zM11 6h1v1h-1zM14 6h1v1h-1zM26 6h1v1h-1zM31 6h1v1h-1zM33 6h1v1h-1zM47 6h1v1h-1zM6 7h1v1h-1zM2 8h1v1h-1zM18 8h1v1h-1zM27 8h1v1h-1zM41 8h1v1h-1zM13 9h1v1h-1zM15 9h1v1h-1zM24 9h1v1h-1zM26 9h1v1h-1zM42 9h1v1h-1zM0 10h1v1h-1zM18 10h1v1h-1zM33 10h1v1h-1zM12 11h1v1h-1zM40 11h1v1h-1zM7 12h1v1h-1zM27 12h1v1h-1zM37 12h1v1h-1zM3 13h1v1h-1zM4 13h1v1h-1zM15 13h1v1h-1zM25 13h1v1h-1zM32 13h1v1h-1zM36 13h1v1h-1zM43 13h1v1h-1zM45 13h1v1h-1zM14 14h1v1h-1zM17 14h1v1h-1zM1 15h1v1h-1zM6 15h1v1h-1zM8 15h1v1h-1zM18 15h1v1h-1zM23 15h1v1h-1zM47 15h1v1h-1zM7 16h1v1h-1zM9 16h1v1h-1zM17 16h1v1h-1zM20 16h1v1h-1zM21 16h1v1h-1zM28 16h1v1h-1zM37 16h1v1h-1zM42 16h1v1h-1zM44 16h1v1h-1zM4 17h1v1h-1zM11 17h1v1h-1zM13 17h1v1h-1zM14 17h1v1h-1zM19 17h1v1h-1zM38 17h1v1h-1zM43 17h1v1h-1zM1 18h1v1h-1zM19 18h1v1h-1zM23 18h1v1h-1zM24 18h1v1h-1zM25 18h1v1h-1zM27 18h1v1h-1zM29 18h1v1h-1zM30 18h1v1h-1zM33 18h1v1h-1zM39 18h1v1h-1zM45 18h1v1h-1zM18 19h1v1h-1zM24 19h1v1h-1zM27 19h1v1h-1zM34 19h1v1h-1zM35 19h1v1h-1zM39 19h1v1h-1zM0 20h1v1h-1zM3 20h1v1h-1zM20 20h1v1h-1zM26 20h1v1h-1zM27 20h1v1h-1zM38 20h1v1h-1zM42 20h1v1h-1z" fill="#b1b1b1"/>
<path d="M8 0h1v1h-1zM10 0h1v1h-1zM11 0h1v1h-1zM13 0h1v1h-1zM25 0h1v1h-1zM26 0h1v1h-1zM31 0h1v1h-1zM45 0h1v1h-1zM46 0h1v1h-1zM8 1h1v1h-1zM18 1h1v1h-1zM30 1h1v1h-1zM11 2h1v1h-1zM13 2h1v1h-1zM21 2h1v1h-1zM34 2h1v1h-1zM44 2h1v1h-1zM46 2h1v1h-1zM47 2h1v1h-1zM15 3h1v1h-1zM17 3h1v1h-1zM37 3h1v1h-1zM44 3h1v1h-1zM46 3h1v1h-1zM6 4h1v1h-1zM12 4h1v1h-1zM36 4h1v1h-1zM38 4h1v1h-1zM36 5h1v1h-1zM45 5h1v1h-1zM4 6h1v1h-1zM7 6h1v1h-1zM15 6h1v1h-1zM3 7h1v1h-1zM26 7h1v1h-1zM44 7h1v1h-1zM45 7h1v1h-1zM0 8h1v1h-1zM9 8h1v1h-1zM47 8h1v1h-1zM17 10h1v1h-1zM6 11h1v1h-1zM22 11h1v1h-1zM8 12h1v1h-1zM41 12h1v1h-1zM43 12h1v1h-1zM30 13h1v1h-1zM31 13h1v1h-1zM21 14h1v1h-1zM23 14h1v1h-1zM28 14h1v1h-1zM32 14h1v1h-1zM39 14h1v1h-1zM41 14h1v1h-1zM44 14h1v1h-1zM46 14h1v1h-1zM3 15h1v1h-1zM15 15h1v1h-1zM17 15h1v1h-1zM40 15h1v1h-1zM43 15h1v1h-1zM44 15h1v1h-1zM10 16h1v1h-1zM8 17h1v1h-1zM10 17h1v1h-1zM17 17h1v1h-1zM21 17h1v1h-1zM26 17h1v1h-1zM33 17h1v1h-1zM0 18h1v1h-1zM7 18h1v1h-1zM8 18h1v1h-1zM10 18h1v1h-1zM11 18h1v1h-1zM12 18h1v1h-1zM18 18h1v1h-1zM21 18h1v1h-1zM26 18h1v1h-1zM46 18h1v1h-1zM20 19h1v1h-1zM30 19h1v1h-1zM31 19h1v1h-1zM4 20h1v1h-1zM6 20h1v1h-1zM7 20h1v1h-1zM13 20h1v1h-1zM23 20h1v1h-1zM40 20h1v1h-1z" fill="#c4c4c4"/>
<path d="M5 0h1v1h-1zM40 1h1v1h-1zM10 3h1v1h-1zM12 3h1v1h-1zM18 3h1v1h-1zM42 3h1v1h-1zM24 4h1v1h-1zM47 4h1v1h-1zM43 5h1v1h-1zM24 6h1v1h-1zM29 6h1v1h-1zM30 7h1v1h-1zM28 12h1v1h-1zM35 12h1v1h-1zM40 12h1v1h-1zM17 13h1v1h-1zM39 13h1v1h-1zM18 14h1v1h-1zM43 14h1v1h-1zM9 15h1v1h-1zM25 15h1v1h-1zM27 15h1v1h-1zM42 15h1v1h-1zM6 16h1v1h-1zM13 16h1v1h-1zM7 17h1v1h-1zM28 17h1v1h-1zM30 17h1v1h-1zM34 18h1v1h-1zM22 19h1v1h-1zM40 19h1v1h-1zM2 20h1v1h-1zM25 20h1v1h-1zM30 20h1v1h-1z" fill="#d8d8d8"/>
<path d="M0 0h1v1h-1zM9 0h1v1h-1zM12 2h1v1h-1zM25 2h1v1h-1zM19 3h1v1h-1zM21 3h1v1h-1zM25 3h1v1h-1zM28 4h1v1h-1zM4 5h1v1h-1zM10 7h1v1h-1zM28 13h1v1h-1zM41 13h1v1h-1zM22 16h1v1h-1zM31 16h1v1h-1z" fill="#ebebeb"/>
<path d="M42 0h1v1h-1zM37 5h1v1h-1zM43 20h1v1h-1z" fill="#ffffff"/>
</g>
<rect x="564" y="213.20" width="89.6" height="39.30" fill="#828282" filter="url(#flat)"/>
<rect x="656.4" y="213.20" width="89.8" height="39.30" fill="#888" filter="url(#sm4)"/>
<rect x="657" y="228.35" width="89.00" height="9" fill="#000" opacity="0.4" filter="url(#vb)"/>
<rect x="467.7" y="95.20" width="280.2" height="36.90" fill="none" stroke="#0000ff" stroke-width="2.1"/>
<text x="463.20" y="105.20" font-family="Liberation Sans, sans-serif" font-size="7.84" fill="#000" text-anchor="end" textLength="16.48" lengthAdjust="spacingAndGlyphs" >0.13</text>
<text x="463.20" y="114.20" font-family="Liberation Sans, sans-serif" font-size="7.84" fill="#000" text-anchor="end" textLength="16.48" lengthAdjust="spacingAndGlyphs" >1.45</text>
<text x="463.20" y="123.20" font-family="Liberation Sans, sans-serif" font-size="7.84" fill="#000" text-anchor="end" textLength="14.12" lengthAdjust="spacingAndGlyphs" >152</text>
<text x="750.80" y="99.60" font-family="Liberation Sans, sans-serif" font-size="5.94" fill="#000" text-anchor="start" textLength="15.04" lengthAdjust="spacingAndGlyphs" >0.73"</text>
<text x="750.80" y="107.20" font-family="Liberation Sans, sans-serif" font-size="5.94" fill="#000" text-anchor="start" textLength="29.31" lengthAdjust="spacingAndGlyphs" >(348, 675)</text>
<text x="750.80" y="115.70" font-family="Liberation Sans, sans-serif" font-size="5.94" fill="#000" text-anchor="start" textLength="28.50" lengthAdjust="spacingAndGlyphs" >20221202</text>
<text x="750.80" y="122.00" font-family="Liberation Sans, sans-serif" font-size="5.94" fill="#000" text-anchor="start" textLength="23.93" lengthAdjust="spacingAndGlyphs" >v025_03</text>
<text x="750.80" y="129.20" font-family="Liberation Sans, sans-serif" font-size="5.94" fill="#000" text-anchor="start" textLength="33.22" lengthAdjust="spacingAndGlyphs" >302_LL_073</text>
<rect x="467.7" y="134.80" width="280.2" height="37.20" fill="none" stroke="#00ff00" stroke-width="2.1"/>
<text x="463.20" y="144.80" font-family="Liberation Sans, sans-serif" font-size="7.84" fill="#000" text-anchor="end" textLength="16.48" lengthAdjust="spacingAndGlyphs" >0.11</text>
<text x="463.20" y="153.80" font-family="Liberation Sans, sans-serif" font-size="7.84" fill="#000" text-anchor="end" textLength="16.48" lengthAdjust="spacingAndGlyphs" >1.43</text>
<text x="463.20" y="162.80" font-family="Liberation Sans, sans-serif" font-size="7.84" fill="#000" text-anchor="end" textLength="14.12" lengthAdjust="spacingAndGlyphs" >153</text>
<text x="750.80" y="139.20" font-family="Liberation Sans, sans-serif" font-size="5.94" fill="#000" text-anchor="start" textLength="15.04" lengthAdjust="spacingAndGlyphs" >0.82"</text>
<text x="750.80" y="146.80" font-family="Liberation Sans, sans-serif" font-size="5.94" fill="#000" text-anchor="start" textLength="29.31" lengthAdjust="spacingAndGlyphs" >(348, 666)</text>
<text x="750.80" y="155.30" font-family="Liberation Sans, sans-serif" font-size="5.94" fill="#000" text-anchor="start" textLength="28.50" lengthAdjust="spacingAndGlyphs" >20221202</text>
<text x="750.80" y="161.60" font-family="Liberation Sans, sans-serif" font-size="5.94" fill="#000" text-anchor="start" textLength="23.93" lengthAdjust="spacingAndGlyphs" >v025_01</text>
<text x="750.80" y="168.80" font-family="Liberation Sans, sans-serif" font-size="5.94" fill="#000" text-anchor="start" textLength="33.22" lengthAdjust="spacingAndGlyphs" >302_LL_072</text>
<rect x="467.7" y="174.60" width="280.2" height="37.20" fill="none" stroke="#ffa500" stroke-width="2.1"/>
<text x="463.20" y="184.60" font-family="Liberation Sans, sans-serif" font-size="7.84" fill="#000" text-anchor="end" textLength="16.48" lengthAdjust="spacingAndGlyphs" >0.10</text>
<text x="463.20" y="193.60" font-family="Liberation Sans, sans-serif" font-size="7.84" fill="#000" text-anchor="end" textLength="16.48" lengthAdjust="spacingAndGlyphs" >1.88</text>
<text x="463.20" y="202.60" font-family="Liberation Sans, sans-serif" font-size="7.84" fill="#000" text-anchor="end" textLength="14.12" lengthAdjust="spacingAndGlyphs" >152</text>
<text x="750.80" y="179.00" font-family="Liberation Sans, sans-serif" font-size="5.94" fill="#000" text-anchor="start" textLength="15.04" lengthAdjust="spacingAndGlyphs" >1.36"</text>
<text x="750.80" y="186.60" font-family="Liberation Sans, sans-serif" font-size="5.94" fill="#000" text-anchor="start" textLength="29.31" lengthAdjust="spacingAndGlyphs" >(348, 675)</text>
<text x="750.80" y="195.10" font-family="Liberation Sans, sans-serif" font-size="5.94" fill="#000" text-anchor="start" textLength="28.50" lengthAdjust="spacingAndGlyphs" >20221202</text>
<text x="750.80" y="201.40" font-family="Liberation Sans, sans-serif" font-size="5.94" fill="#000" text-anchor="start" textLength="23.93" lengthAdjust="spacingAndGlyphs" >v025_07</text>
<text x="750.80" y="208.60" font-family="Liberation Sans, sans-serif" font-size="5.94" fill="#000" text-anchor="start" textLength="33.22" lengthAdjust="spacingAndGlyphs" >302_LL_073</text>
<rect x="467.7" y="214.40" width="280.2" height="36.90" fill="none" stroke="#ff0000" stroke-width="2.1"/>
<text x="463.20" y="224.40" font-family="Liberation Sans, sans-serif" font-size="7.84" fill="#000" text-anchor="end" textLength="16.48" lengthAdjust="spacingAndGlyphs" >0.09</text>
<text x="463.20" y="233.40" font-family="Liberation Sans, sans-serif" font-size="7.84" fill="#000" text-anchor="end" textLength="16.48" lengthAdjust="spacingAndGlyphs" >1.01</text>
<text x="463.20" y="242.40" font-family="Liberation Sans, sans-serif" font-size="7.84" fill="#000" text-anchor="end" textLength="14.12" lengthAdjust="spacingAndGlyphs" >172</text>
<text x="750.80" y="218.80" font-family="Liberation Sans, sans-serif" font-size="5.94" fill="#000" text-anchor="start" textLength="15.04" lengthAdjust="spacingAndGlyphs" >1.17"</text>
<text x="750.80" y="226.40" font-family="Liberation Sans, sans-serif" font-size="5.94" fill="#000" text-anchor="start" textLength="29.31" lengthAdjust="spacingAndGlyphs" >(349, 500)</text>
<text x="750.80" y="234.90" font-family="Liberation Sans, sans-serif" font-size="5.94" fill="#000" text-anchor="start" textLength="28.50" lengthAdjust="spacingAndGlyphs" >20221202</text>
<text x="750.80" y="241.20" font-family="Liberation Sans, sans-serif" font-size="5.94" fill="#000" text-anchor="start" textLength="23.93" lengthAdjust="spacingAndGlyphs" >v025_02</text>
<text x="750.80" y="248.40" font-family="Liberation Sans, sans-serif" font-size="5.94" fill="#000" text-anchor="start" textLength="33.22" lengthAdjust="spacingAndGlyphs" >302_LL_053</text>
</g>
<text x="865.00" y="48.00" font-family="Liberation Sans, sans-serif" font-size="10.28" fill="#000" text-anchor="middle" textLength="42.84" lengthAdjust="spacingAndGlyphs" >With Sky</text>
<text x="865.00" y="58.30" font-family="Liberation Sans, sans-serif" font-size="10.28" fill="#000" text-anchor="middle" textLength="67.19" lengthAdjust="spacingAndGlyphs" >x, y: 348, 675</text>
<text x="966.00" y="48.00" font-family="Liberation Sans, sans-serif" font-size="10.28" fill="#000" text-anchor="middle" textLength="60.99" lengthAdjust="spacingAndGlyphs" >Clean Image</text>
<text x="966.00" y="58.30" font-family="Liberation Sans, sans-serif" font-size="10.28" fill="#000" text-anchor="middle" textLength="67.19" lengthAdjust="spacingAndGlyphs" >x, y: 348, 675</text>
<rect x="832" y="65" width="67" height="169" fill="#fff"/>
<clipPath id="skyclip"><rect x="833" y="65.8" width="65" height="167"/></clipPath>
<linearGradient id="skyfade" x1="0" x2="1" y1="0" y2="0"><stop offset="0" stop-color="#fff" stop-opacity="0.7"/><stop offset="0.12" stop-color="#fff" stop-opacity="0.0"/><stop offset="0.5" stop-color="#fff" stop-opacity="0.0"/><stop offset="1" stop-color="#fff" stop-opacity="0.3"/></linearGradient>
<g clip-path="url(#skyclip)">
<g filter="url(#b1)">
<rect x="830" y="64.30" width="72" height="5.4" fill="#5c5c5c"/>
<rect x="830" y="74.60" width="72" height="5.4" fill="#5c5c5c"/>
<rect x="830" y="86.30" width="72" height="5.4" fill="#5c5c5c"/>
<rect x="830" y="97.90" width="72" height="5.4" fill="#5c5c5c"/>
<rect x="830" y="122.50" width="72" height="5.4" fill="#5c5c5c"/>
<rect x="830" y="135.20" width="72" height="5.4" fill="#5c5c5c"/>
<rect x="830" y="147.80" width="72" height="5.4" fill="#5c5c5c"/>
<rect x="830" y="160.20" width="72" height="5.4" fill="#5c5c5c"/>
<rect x="830" y="172.20" width="72" height="5.4" fill="#5c5c5c"/>
<rect x="830" y="184.60" width="72" height="5.4" fill="#5c5c5c"/>
<rect x="830" y="196.60" width="72" height="5.4" fill="#5c5c5c"/>
<rect x="830" y="209.00" width="72" height="5.4" fill="#5c5c5c"/>
<rect x="830" y="221.50" width="72" height="5.4" fill="#5c5c5c"/>
</g>
<rect x="833" y="65.5" width="65" height="167.5" fill="#fff" filter="url(#skyn)" style="mix-blend-mode:multiply"/>
<rect x="833" y="65.5" width="65" height="167.5" fill="url(#skyfade)"/>
</g>
<rect x="831.6" y="64.6" width="67.2" height="169.2" fill="none" stroke="#0000ee" stroke-width="2.6"/>
<g transform="translate(932.50,65.00) scale(1.5952,1.6048)" shape-rendering="crispEdges">
<path d="M0 1h1v1h-1zM13 11h1v1h-1zM40 31h1v1h-1zM24 32h1v1h-1zM27 36h1v1h-1zM11 76h1v1h-1zM11 91h1v1h-1z" fill="#000000"/>
<path d="M41 0h1v1h-1zM28 1h1v1h-1zM36 4h1v1h-1zM2 5h1v1h-1zM0 27h1v1h-1zM18 28h1v1h-1zM18 29h1v1h-1zM3 53h1v1h-1zM14 61h1v1h-1zM21 63h1v1h-1zM4 64h1v1h-1zM6 67h1v1h-1zM9 87h1v1h-1zM17 90h1v1h-1zM13 91h1v1h-1zM15 92h1v1h-1zM39 95h1v1h-1zM2 100h1v1h-1z" fill="#141414"/>
<path d="M16 4h1v1h-1zM17 8h1v1h-1zM38 12h1v1h-1zM37 13h1v1h-1zM9 14h1v1h-1zM4 19h1v1h-1zM41 21h1v1h-1zM18 23h1v1h-1zM36 25h1v1h-1zM26 26h1v1h-1zM7 28h1v1h-1zM19 28h1v1h-1zM0 29h1v1h-1zM18 30h1v1h-1zM5 36h1v1h-1zM35 37h1v1h-1zM19 41h1v1h-1zM6 42h1v1h-1zM14 43h1v1h-1zM20 45h1v1h-1zM12 46h1v1h-1zM18 46h1v1h-1zM33 46h1v1h-1zM29 54h1v1h-1zM5 56h1v1h-1zM20 56h1v1h-1zM2 58h1v1h-1zM19 58h1v1h-1zM5 64h1v1h-1zM34 66h1v1h-1zM9 67h1v1h-1zM39 68h1v1h-1zM3 71h1v1h-1zM26 76h1v1h-1zM15 79h1v1h-1zM34 80h1v1h-1zM35 83h1v1h-1zM19 89h1v1h-1zM38 89h1v1h-1zM10 90h1v1h-1zM26 95h1v1h-1zM30 95h1v1h-1zM33 95h1v1h-1zM4 98h1v1h-1zM26 98h1v1h-1zM22 100h1v1h-1zM13 102h1v1h-1zM23 102h1v1h-1zM19 103h1v1h-1zM24 103h1v1h-1zM32 104h1v1h-1z" fill="#272727"/>
<path d="M33 0h1v1h-1zM7 3h1v1h-1zM21 4h1v1h-1zM37 4h1v1h-1zM4 5h1v1h-1zM13 5h1v1h-1zM29 6h1v1h-1zM35 6h1v1h-1zM14 7h1v1h-1zM1 8h1v1h-1zM13 8h1v1h-1zM25 8h1v1h-1zM28 8h1v1h-1zM4 9h1v1h-1zM17 9h1v1h-1zM21 9h1v1h-1zM12 10h1v1h-1zM22 11h1v1h-1zM32 11h1v1h-1zM37 11h1v1h-1zM12 12h1v1h-1zM23 12h1v1h-1zM2 13h1v1h-1zM38 13h1v1h-1zM2 15h1v1h-1zM28 16h1v1h-1zM15 17h1v1h-1zM18 17h1v1h-1zM35 17h1v1h-1zM7 18h1v1h-1zM9 18h1v1h-1zM28 18h1v1h-1zM25 19h1v1h-1zM39 19h1v1h-1zM1 20h1v1h-1zM27 20h1v1h-1zM39 20h1v1h-1zM10 21h1v1h-1zM40 21h1v1h-1zM12 22h1v1h-1zM24 23h1v1h-1zM13 24h1v1h-1zM5 25h1v1h-1zM12 25h1v1h-1zM16 25h1v1h-1zM22 25h1v1h-1zM28 26h1v1h-1zM34 26h1v1h-1zM39 28h1v1h-1zM24 31h1v1h-1zM34 33h1v1h-1zM17 34h1v1h-1zM38 34h1v1h-1zM5 35h1v1h-1zM37 35h1v1h-1zM30 38h1v1h-1zM19 39h1v1h-1zM7 40h1v1h-1zM20 40h1v1h-1zM30 40h1v1h-1zM20 41h1v1h-1zM34 41h1v1h-1zM24 42h1v1h-1zM25 43h1v1h-1zM18 44h1v1h-1zM38 44h1v1h-1zM2 46h1v1h-1zM9 46h1v1h-1zM16 47h1v1h-1zM3 48h1v1h-1zM31 48h1v1h-1zM25 50h1v1h-1zM15 51h1v1h-1zM22 52h1v1h-1zM37 53h1v1h-1zM31 54h1v1h-1zM13 55h1v1h-1zM34 56h1v1h-1zM24 57h1v1h-1zM15 59h1v1h-1zM5 60h1v1h-1zM35 60h1v1h-1zM25 61h1v1h-1zM31 62h1v1h-1zM1 63h1v1h-1zM11 63h1v1h-1zM12 63h1v1h-1zM27 63h1v1h-1zM35 63h1v1h-1zM18 64h1v1h-1zM30 64h1v1h-1zM32 66h1v1h-1zM25 67h1v1h-1zM31 67h1v1h-1zM32 67h1v1h-1zM24 69h1v1h-1zM17 70h1v1h-1zM20 70h1v1h-1zM11 71h1v1h-1zM13 72h1v1h-1zM14 72h1v1h-1zM23 73h1v1h-1zM32 74h1v1h-1zM4 75h1v1h-1zM24 76h1v1h-1zM7 77h1v1h-1zM28 77h1v1h-1zM13 80h1v1h-1zM6 83h1v1h-1zM16 83h1v1h-1zM6 84h1v1h-1zM33 84h1v1h-1zM39 84h1v1h-1zM38 85h1v1h-1zM8 86h1v1h-1zM21 86h1v1h-1zM37 86h1v1h-1zM28 90h1v1h-1zM7 92h1v1h-1zM22 92h1v1h-1zM23 92h1v1h-1zM41 95h1v1h-1zM7 96h1v1h-1zM31 96h1v1h-1zM34 96h1v1h-1zM41 97h1v1h-1zM2 98h1v1h-1zM30 98h1v1h-1zM33 98h1v1h-1zM34 100h1v1h-1zM5 101h1v1h-1zM27 101h1v1h-1zM30 101h1v1h-1zM37 102h1v1h-1zM23 104h1v1h-1z" fill="#3b3b3b"/>
<path d="M18 0h1v1h-1zM20 0h1v1h-1zM38 0h1v1h-1zM8 1h1v1h-1zM11 1h1v1h-1zM18 2h1v1h-1zM36 2h1v1h-1zM33 3h1v1h-1zM36 3h1v1h-1zM8 4h1v1h-1zM29 4h1v1h-1zM35 4h1v1h-1zM39 4h1v1h-1zM29 5h1v1h-1zM31 5h1v1h-1zM34 5h1v1h-1zM14 6h1v1h-1zM25 7h1v1h-1zM27 7h1v1h-1zM19 8h1v1h-1zM22 9h1v1h-1zM24 9h1v1h-1zM31 9h1v1h-1zM1 11h1v1h-1zM18 11h1v1h-1zM21 11h1v1h-1zM33 12h1v1h-1zM3 13h1v1h-1zM4 13h1v1h-1zM19 13h1v1h-1zM25 13h1v1h-1zM41 13h1v1h-1zM2 14h1v1h-1zM31 14h1v1h-1zM5 15h1v1h-1zM13 15h1v1h-1zM27 15h1v1h-1zM16 16h1v1h-1zM17 16h1v1h-1zM29 16h1v1h-1zM11 17h1v1h-1zM22 17h1v1h-1zM33 17h1v1h-1zM24 18h1v1h-1zM36 18h1v1h-1zM0 19h1v1h-1zM30 19h1v1h-1zM7 20h1v1h-1zM16 20h1v1h-1zM22 20h1v1h-1zM26 20h1v1h-1zM34 20h1v1h-1zM15 21h1v1h-1zM23 21h1v1h-1zM28 21h1v1h-1zM27 22h1v1h-1zM30 22h1v1h-1zM38 23h1v1h-1zM8 25h1v1h-1zM15 25h1v1h-1zM1 26h1v1h-1zM20 26h1v1h-1zM21 26h1v1h-1zM37 26h1v1h-1zM36 27h1v1h-1zM37 27h1v1h-1zM40 27h1v1h-1zM12 28h1v1h-1zM21 28h1v1h-1zM22 28h1v1h-1zM1 29h1v1h-1zM5 29h1v1h-1zM22 29h1v1h-1zM25 29h1v1h-1zM10 30h1v1h-1zM13 30h1v1h-1zM19 30h1v1h-1zM38 31h1v1h-1zM7 32h1v1h-1zM18 32h1v1h-1zM21 32h1v1h-1zM22 32h1v1h-1zM35 32h1v1h-1zM39 32h1v1h-1zM17 33h1v1h-1zM23 33h1v1h-1zM30 33h1v1h-1zM30 34h1v1h-1zM14 35h1v1h-1zM1 36h1v1h-1zM6 36h1v1h-1zM20 36h1v1h-1zM39 36h1v1h-1zM41 36h1v1h-1zM10 37h1v1h-1zM23 37h1v1h-1zM30 37h1v1h-1zM37 37h1v1h-1zM13 38h1v1h-1zM18 39h1v1h-1zM23 39h1v1h-1zM12 40h1v1h-1zM13 40h1v1h-1zM21 40h1v1h-1zM34 40h1v1h-1zM16 41h1v1h-1zM21 42h1v1h-1zM11 43h1v1h-1zM7 44h1v1h-1zM27 44h1v1h-1zM33 44h1v1h-1zM1 45h1v1h-1zM6 45h1v1h-1zM15 46h1v1h-1zM27 46h1v1h-1zM5 47h1v1h-1zM27 47h1v1h-1zM32 47h1v1h-1zM37 47h1v1h-1zM22 48h1v1h-1zM29 48h1v1h-1zM13 49h1v1h-1zM17 49h1v1h-1zM22 49h1v1h-1zM34 49h1v1h-1zM41 49h1v1h-1zM9 50h1v1h-1zM11 50h1v1h-1zM35 50h1v1h-1zM24 51h1v1h-1zM25 51h1v1h-1zM0 52h1v1h-1zM19 52h1v1h-1zM17 53h1v1h-1zM24 53h1v1h-1zM30 53h1v1h-1zM0 54h1v1h-1zM1 54h1v1h-1zM5 54h1v1h-1zM14 54h1v1h-1zM20 54h1v1h-1zM9 55h1v1h-1zM1 56h1v1h-1zM18 56h1v1h-1zM27 56h1v1h-1zM35 56h1v1h-1zM40 56h1v1h-1zM4 57h1v1h-1zM17 57h1v1h-1zM28 57h1v1h-1zM6 58h1v1h-1zM29 58h1v1h-1zM32 58h1v1h-1zM28 59h1v1h-1zM15 60h1v1h-1zM23 60h1v1h-1zM25 60h1v1h-1zM36 60h1v1h-1zM2 61h1v1h-1zM5 61h1v1h-1zM21 61h1v1h-1zM37 61h1v1h-1zM6 62h1v1h-1zM35 62h1v1h-1zM7 63h1v1h-1zM14 63h1v1h-1zM9 64h1v1h-1zM16 64h1v1h-1zM23 64h1v1h-1zM6 65h1v1h-1zM7 65h1v1h-1zM12 65h1v1h-1zM33 65h1v1h-1zM7 66h1v1h-1zM13 66h1v1h-1zM38 66h1v1h-1zM40 66h1v1h-1zM0 67h1v1h-1zM1 67h1v1h-1zM17 67h1v1h-1zM21 67h1v1h-1zM22 67h1v1h-1zM33 68h1v1h-1zM22 70h1v1h-1zM27 70h1v1h-1zM29 70h1v1h-1zM30 70h1v1h-1zM35 70h1v1h-1zM12 72h1v1h-1zM17 72h1v1h-1zM19 72h1v1h-1zM26 72h1v1h-1zM33 72h1v1h-1zM1 73h1v1h-1zM9 73h1v1h-1zM17 73h1v1h-1zM24 73h1v1h-1zM29 73h1v1h-1zM32 73h1v1h-1zM37 73h1v1h-1zM1 74h1v1h-1zM12 74h1v1h-1zM17 75h1v1h-1zM23 75h1v1h-1zM35 75h1v1h-1zM37 75h1v1h-1zM40 75h1v1h-1zM27 76h1v1h-1zM32 76h1v1h-1zM6 77h1v1h-1zM16 77h1v1h-1zM38 77h1v1h-1zM39 77h1v1h-1zM37 78h1v1h-1zM5 79h1v1h-1zM6 79h1v1h-1zM11 79h1v1h-1zM33 79h1v1h-1zM30 80h1v1h-1zM35 80h1v1h-1zM2 81h1v1h-1zM10 81h1v1h-1zM29 81h1v1h-1zM36 81h1v1h-1zM7 82h1v1h-1zM29 82h1v1h-1zM0 83h1v1h-1zM5 83h1v1h-1zM9 83h1v1h-1zM24 83h1v1h-1zM26 83h1v1h-1zM4 84h1v1h-1zM16 84h1v1h-1zM15 85h1v1h-1zM30 85h1v1h-1zM33 85h1v1h-1zM20 86h1v1h-1zM28 86h1v1h-1zM35 86h1v1h-1zM23 87h1v1h-1zM25 87h1v1h-1zM40 87h1v1h-1zM2 88h1v1h-1zM3 88h1v1h-1zM10 88h1v1h-1zM16 88h1v1h-1zM40 88h1v1h-1zM1 89h1v1h-1zM5 89h1v1h-1zM17 89h1v1h-1zM18 89h1v1h-1zM7 90h1v1h-1zM9 90h1v1h-1zM36 90h1v1h-1zM6 91h1v1h-1zM30 91h1v1h-1zM8 92h1v1h-1zM12 92h1v1h-1zM31 92h1v1h-1zM0 93h1v1h-1zM4 93h1v1h-1zM6 93h1v1h-1zM12 93h1v1h-1zM31 93h1v1h-1zM6 94h1v1h-1zM10 94h1v1h-1zM17 94h1v1h-1zM28 94h1v1h-1zM31 94h1v1h-1zM5 95h1v1h-1zM6 95h1v1h-1zM7 95h1v1h-1zM12 95h1v1h-1zM9 96h1v1h-1zM19 96h1v1h-1zM22 96h1v1h-1zM11 97h1v1h-1zM38 97h1v1h-1zM6 98h1v1h-1zM18 98h1v1h-1zM21 98h1v1h-1zM27 98h1v1h-1zM36 98h1v1h-1zM2 99h1v1h-1zM9 99h1v1h-1zM17 99h1v1h-1zM7 100h1v1h-1zM16 100h1v1h-1zM25 100h1v1h-1zM14 101h1v1h-1zM29 101h1v1h-1zM37 101h1v1h-1zM8 102h1v1h-1zM20 102h1v1h-1zM9 103h1v1h-1zM15 103h1v1h-1zM32 103h1v1h-1zM34 103h1v1h-1zM38 103h1v1h-1zM2 104h1v1h-1zM14 104h1v1h-1z" fill="#4e4e4e"/>
<path d="M27 0h1v1h-1zM39 0h1v1h-1zM7 1h1v1h-1zM25 1h1v1h-1zM29 1h1v1h-1zM9 2h1v1h-1zM12 2h1v1h-1zM35 2h1v1h-1zM0 3h1v1h-1zM1 3h1v1h-1zM5 3h1v1h-1zM10 3h1v1h-1zM22 3h1v1h-1zM27 3h1v1h-1zM29 3h1v1h-1zM41 3h1v1h-1zM1 4h1v1h-1zM7 4h1v1h-1zM9 4h1v1h-1zM26 4h1v1h-1zM0 5h1v1h-1zM6 5h1v1h-1zM9 5h1v1h-1zM12 5h1v1h-1zM28 5h1v1h-1zM30 5h1v1h-1zM36 5h1v1h-1zM5 6h1v1h-1zM6 6h1v1h-1zM7 6h1v1h-1zM18 6h1v1h-1zM32 6h1v1h-1zM36 6h1v1h-1zM0 7h1v1h-1zM13 7h1v1h-1zM22 7h1v1h-1zM23 7h1v1h-1zM29 7h1v1h-1zM33 7h1v1h-1zM38 7h1v1h-1zM40 7h1v1h-1zM10 8h1v1h-1zM8 9h1v1h-1zM11 9h1v1h-1zM20 9h1v1h-1zM25 9h1v1h-1zM29 9h1v1h-1zM30 9h1v1h-1zM35 9h1v1h-1zM38 9h1v1h-1zM2 10h1v1h-1zM5 10h1v1h-1zM6 10h1v1h-1zM17 10h1v1h-1zM25 10h1v1h-1zM33 10h1v1h-1zM34 10h1v1h-1zM38 10h1v1h-1zM19 11h1v1h-1zM0 12h1v1h-1zM3 12h1v1h-1zM4 12h1v1h-1zM6 12h1v1h-1zM14 12h1v1h-1zM18 12h1v1h-1zM19 12h1v1h-1zM27 12h1v1h-1zM15 13h1v1h-1zM16 13h1v1h-1zM23 13h1v1h-1zM40 13h1v1h-1zM11 14h1v1h-1zM25 14h1v1h-1zM27 14h1v1h-1zM36 14h1v1h-1zM1 15h1v1h-1zM7 15h1v1h-1zM15 15h1v1h-1zM26 15h1v1h-1zM30 15h1v1h-1zM34 15h1v1h-1zM36 15h1v1h-1zM39 15h1v1h-1zM8 16h1v1h-1zM11 16h1v1h-1zM39 16h1v1h-1zM3 17h1v1h-1zM8 17h1v1h-1zM11 18h1v1h-1zM12 18h1v1h-1zM18 18h1v1h-1zM34 18h1v1h-1zM2 19h1v1h-1zM27 19h1v1h-1zM35 19h1v1h-1zM37 19h1v1h-1zM4 20h1v1h-1zM18 20h1v1h-1zM24 20h1v1h-1zM30 20h1v1h-1zM33 20h1v1h-1zM14 21h1v1h-1zM29 21h1v1h-1zM33 21h1v1h-1zM1 22h1v1h-1zM19 22h1v1h-1zM22 22h1v1h-1zM11 23h1v1h-1zM15 23h1v1h-1zM17 23h1v1h-1zM22 23h1v1h-1zM23 23h1v1h-1zM30 23h1v1h-1zM36 23h1v1h-1zM3 24h1v1h-1zM7 24h1v1h-1zM15 24h1v1h-1zM21 24h1v1h-1zM26 24h1v1h-1zM30 24h1v1h-1zM33 25h1v1h-1zM37 25h1v1h-1zM39 25h1v1h-1zM40 25h1v1h-1zM11 26h1v1h-1zM14 26h1v1h-1zM24 26h1v1h-1zM30 26h1v1h-1zM3 27h1v1h-1zM16 27h1v1h-1zM31 28h1v1h-1zM2 29h1v1h-1zM3 29h1v1h-1zM8 29h1v1h-1zM39 29h1v1h-1zM9 30h1v1h-1zM12 30h1v1h-1zM15 30h1v1h-1zM39 30h1v1h-1zM25 31h1v1h-1zM26 31h1v1h-1zM2 32h1v1h-1zM4 32h1v1h-1zM17 32h1v1h-1zM25 32h1v1h-1zM29 32h1v1h-1zM34 32h1v1h-1zM0 33h1v1h-1zM10 33h1v1h-1zM27 33h1v1h-1zM3 34h1v1h-1zM4 34h1v1h-1zM6 34h1v1h-1zM36 34h1v1h-1zM18 35h1v1h-1zM20 35h1v1h-1zM0 36h1v1h-1zM4 36h1v1h-1zM11 36h1v1h-1zM18 36h1v1h-1zM16 38h1v1h-1zM18 38h1v1h-1zM20 38h1v1h-1zM21 38h1v1h-1zM39 38h1v1h-1zM26 39h1v1h-1zM28 39h1v1h-1zM29 39h1v1h-1zM32 39h1v1h-1zM39 39h1v1h-1zM40 39h1v1h-1zM1 40h1v1h-1zM5 40h1v1h-1zM18 40h1v1h-1zM24 40h1v1h-1zM39 40h1v1h-1zM6 41h1v1h-1zM9 41h1v1h-1zM18 41h1v1h-1zM3 42h1v1h-1zM11 42h1v1h-1zM15 42h1v1h-1zM28 42h1v1h-1zM0 43h1v1h-1zM3 43h1v1h-1zM22 43h1v1h-1zM23 43h1v1h-1zM32 43h1v1h-1zM33 43h1v1h-1zM20 44h1v1h-1zM22 44h1v1h-1zM23 44h1v1h-1zM9 45h1v1h-1zM16 45h1v1h-1zM22 45h1v1h-1zM35 45h1v1h-1zM39 45h1v1h-1zM35 46h1v1h-1zM4 47h1v1h-1zM8 47h1v1h-1zM12 47h1v1h-1zM39 47h1v1h-1zM1 48h1v1h-1zM4 48h1v1h-1zM11 48h1v1h-1zM13 48h1v1h-1zM16 48h1v1h-1zM33 48h1v1h-1zM37 48h1v1h-1zM1 49h1v1h-1zM2 49h1v1h-1zM6 49h1v1h-1zM30 49h1v1h-1zM31 49h1v1h-1zM33 49h1v1h-1zM4 50h1v1h-1zM7 50h1v1h-1zM22 50h1v1h-1zM28 50h1v1h-1zM8 51h1v1h-1zM8 52h1v1h-1zM20 52h1v1h-1zM25 52h1v1h-1zM31 52h1v1h-1zM37 52h1v1h-1zM38 52h1v1h-1zM20 53h1v1h-1zM38 53h1v1h-1zM8 54h1v1h-1zM10 54h1v1h-1zM12 54h1v1h-1zM18 54h1v1h-1zM22 54h1v1h-1zM26 54h1v1h-1zM32 54h1v1h-1zM40 54h1v1h-1zM1 55h1v1h-1zM11 55h1v1h-1zM14 55h1v1h-1zM19 55h1v1h-1zM35 55h1v1h-1zM41 55h1v1h-1zM15 56h1v1h-1zM17 56h1v1h-1zM25 56h1v1h-1zM6 57h1v1h-1zM7 57h1v1h-1zM13 57h1v1h-1zM31 57h1v1h-1zM32 57h1v1h-1zM4 58h1v1h-1zM12 58h1v1h-1zM24 58h1v1h-1zM35 58h1v1h-1zM39 58h1v1h-1zM40 58h1v1h-1zM6 59h1v1h-1zM16 59h1v1h-1zM18 59h1v1h-1zM20 59h1v1h-1zM7 60h1v1h-1zM41 60h1v1h-1zM23 61h1v1h-1zM30 61h1v1h-1zM31 61h1v1h-1zM41 61h1v1h-1zM12 62h1v1h-1zM33 62h1v1h-1zM36 62h1v1h-1zM37 62h1v1h-1zM40 62h1v1h-1zM3 63h1v1h-1zM9 63h1v1h-1zM16 63h1v1h-1zM12 64h1v1h-1zM31 64h1v1h-1zM33 64h1v1h-1zM14 65h1v1h-1zM17 65h1v1h-1zM20 65h1v1h-1zM35 65h1v1h-1zM37 65h1v1h-1zM40 65h1v1h-1zM0 66h1v1h-1zM11 66h1v1h-1zM12 67h1v1h-1zM14 67h1v1h-1zM16 67h1v1h-1zM27 67h1v1h-1zM29 67h1v1h-1zM30 67h1v1h-1zM41 67h1v1h-1zM3 69h1v1h-1zM19 69h1v1h-1zM37 69h1v1h-1zM38 69h1v1h-1zM0 70h1v1h-1zM5 70h1v1h-1zM10 70h1v1h-1zM18 70h1v1h-1zM25 70h1v1h-1zM31 70h1v1h-1zM32 70h1v1h-1zM17 71h1v1h-1zM19 71h1v1h-1zM20 71h1v1h-1zM30 71h1v1h-1zM31 71h1v1h-1zM34 71h1v1h-1zM3 72h1v1h-1zM6 72h1v1h-1zM35 72h1v1h-1zM36 72h1v1h-1zM38 72h1v1h-1zM5 73h1v1h-1zM10 73h1v1h-1zM11 73h1v1h-1zM16 73h1v1h-1zM21 73h1v1h-1zM26 73h1v1h-1zM14 74h1v1h-1zM17 74h1v1h-1zM19 74h1v1h-1zM26 74h1v1h-1zM33 74h1v1h-1zM1 75h1v1h-1zM11 75h1v1h-1zM25 75h1v1h-1zM30 75h1v1h-1zM34 75h1v1h-1zM7 76h1v1h-1zM10 76h1v1h-1zM13 76h1v1h-1zM15 76h1v1h-1zM22 76h1v1h-1zM23 76h1v1h-1zM35 76h1v1h-1zM4 77h1v1h-1zM12 77h1v1h-1zM14 77h1v1h-1zM17 77h1v1h-1zM20 77h1v1h-1zM24 77h1v1h-1zM35 77h1v1h-1zM37 77h1v1h-1zM2 78h1v1h-1zM3 78h1v1h-1zM5 78h1v1h-1zM20 78h1v1h-1zM29 78h1v1h-1zM3 79h1v1h-1zM9 79h1v1h-1zM18 79h1v1h-1zM31 79h1v1h-1zM32 79h1v1h-1zM34 79h1v1h-1zM17 80h1v1h-1zM20 80h1v1h-1zM23 80h1v1h-1zM38 80h1v1h-1zM7 81h1v1h-1zM9 81h1v1h-1zM14 81h1v1h-1zM19 81h1v1h-1zM20 81h1v1h-1zM25 81h1v1h-1zM26 81h1v1h-1zM30 81h1v1h-1zM1 82h1v1h-1zM15 82h1v1h-1zM21 82h1v1h-1zM26 82h1v1h-1zM32 82h1v1h-1zM34 82h1v1h-1zM39 82h1v1h-1zM2 83h1v1h-1zM8 83h1v1h-1zM14 83h1v1h-1zM36 83h1v1h-1zM38 83h1v1h-1zM3 84h1v1h-1zM5 84h1v1h-1zM19 84h1v1h-1zM21 84h1v1h-1zM35 84h1v1h-1zM8 85h1v1h-1zM11 85h1v1h-1zM24 85h1v1h-1zM40 85h1v1h-1zM41 85h1v1h-1zM29 86h1v1h-1zM41 86h1v1h-1zM0 87h1v1h-1zM10 87h1v1h-1zM26 87h1v1h-1zM29 87h1v1h-1zM34 87h1v1h-1zM0 88h1v1h-1zM4 88h1v1h-1zM19 88h1v1h-1zM21 88h1v1h-1zM27 88h1v1h-1zM39 88h1v1h-1zM7 89h1v1h-1zM13 89h1v1h-1zM39 89h1v1h-1zM2 90h1v1h-1zM3 90h1v1h-1zM12 90h1v1h-1zM13 90h1v1h-1zM21 90h1v1h-1zM22 90h1v1h-1zM32 90h1v1h-1zM10 91h1v1h-1zM28 91h1v1h-1zM37 91h1v1h-1zM1 92h1v1h-1zM5 92h1v1h-1zM19 92h1v1h-1zM35 92h1v1h-1zM36 92h1v1h-1zM2 93h1v1h-1zM13 93h1v1h-1zM19 93h1v1h-1zM24 93h1v1h-1zM35 93h1v1h-1zM36 93h1v1h-1zM39 93h1v1h-1zM1 94h1v1h-1zM13 94h1v1h-1zM20 94h1v1h-1zM26 94h1v1h-1zM36 94h1v1h-1zM9 95h1v1h-1zM21 95h1v1h-1zM1 96h1v1h-1zM5 96h1v1h-1zM10 96h1v1h-1zM13 96h1v1h-1zM29 96h1v1h-1zM35 96h1v1h-1zM41 96h1v1h-1zM9 97h1v1h-1zM12 97h1v1h-1zM25 97h1v1h-1zM31 97h1v1h-1zM34 97h1v1h-1zM8 98h1v1h-1zM11 98h1v1h-1zM38 98h1v1h-1zM15 99h1v1h-1zM28 99h1v1h-1zM30 99h1v1h-1zM32 99h1v1h-1zM33 99h1v1h-1zM34 99h1v1h-1zM3 100h1v1h-1zM9 100h1v1h-1zM10 100h1v1h-1zM19 100h1v1h-1zM21 100h1v1h-1zM37 100h1v1h-1zM39 100h1v1h-1zM0 101h1v1h-1zM34 101h1v1h-1zM24 102h1v1h-1zM41 102h1v1h-1zM6 103h1v1h-1zM8 103h1v1h-1zM11 103h1v1h-1zM21 103h1v1h-1zM30 103h1v1h-1zM6 104h1v1h-1zM13 104h1v1h-1zM15 104h1v1h-1z" fill="#626262"/>
<path d="M3 0h1v1h-1zM5 0h1v1h-1zM14 0h1v1h-1zM29 0h1v1h-1zM2 1h1v1h-1zM12 1h1v1h-1zM16 1h1v1h-1zM24 1h1v1h-1zM31 1h1v1h-1zM36 1h1v1h-1zM39 1h1v1h-1zM3 2h1v1h-1zM14 2h1v1h-1zM17 2h1v1h-1zM33 2h1v1h-1zM40 2h1v1h-1zM13 3h1v1h-1zM19 3h1v1h-1zM32 3h1v1h-1zM38 3h1v1h-1zM39 3h1v1h-1zM2 4h1v1h-1zM6 4h1v1h-1zM15 4h1v1h-1zM17 4h1v1h-1zM19 4h1v1h-1zM20 4h1v1h-1zM22 4h1v1h-1zM25 4h1v1h-1zM40 4h1v1h-1zM41 4h1v1h-1zM5 5h1v1h-1zM7 5h1v1h-1zM10 5h1v1h-1zM16 5h1v1h-1zM17 5h1v1h-1zM20 5h1v1h-1zM21 5h1v1h-1zM23 5h1v1h-1zM32 5h1v1h-1zM40 5h1v1h-1zM15 6h1v1h-1zM16 6h1v1h-1zM28 6h1v1h-1zM34 6h1v1h-1zM39 6h1v1h-1zM40 6h1v1h-1zM1 7h1v1h-1zM5 7h1v1h-1zM8 7h1v1h-1zM21 7h1v1h-1zM32 7h1v1h-1zM36 7h1v1h-1zM12 8h1v1h-1zM15 8h1v1h-1zM16 8h1v1h-1zM22 8h1v1h-1zM24 8h1v1h-1zM32 8h1v1h-1zM35 8h1v1h-1zM37 8h1v1h-1zM1 9h1v1h-1zM5 9h1v1h-1zM10 9h1v1h-1zM34 9h1v1h-1zM40 9h1v1h-1zM0 10h1v1h-1zM20 10h1v1h-1zM28 10h1v1h-1zM29 10h1v1h-1zM30 10h1v1h-1zM2 11h1v1h-1zM12 11h1v1h-1zM25 11h1v1h-1zM26 11h1v1h-1zM29 11h1v1h-1zM38 11h1v1h-1zM8 12h1v1h-1zM9 12h1v1h-1zM10 12h1v1h-1zM16 12h1v1h-1zM20 12h1v1h-1zM21 12h1v1h-1zM32 12h1v1h-1zM36 12h1v1h-1zM6 13h1v1h-1zM7 13h1v1h-1zM8 13h1v1h-1zM11 13h1v1h-1zM12 13h1v1h-1zM28 13h1v1h-1zM30 13h1v1h-1zM32 13h1v1h-1zM39 13h1v1h-1zM3 14h1v1h-1zM4 14h1v1h-1zM7 14h1v1h-1zM12 14h1v1h-1zM16 14h1v1h-1zM28 14h1v1h-1zM4 15h1v1h-1zM8 15h1v1h-1zM9 15h1v1h-1zM7 16h1v1h-1zM9 16h1v1h-1zM18 16h1v1h-1zM19 16h1v1h-1zM22 16h1v1h-1zM31 16h1v1h-1zM0 17h1v1h-1zM4 17h1v1h-1zM5 17h1v1h-1zM9 17h1v1h-1zM37 17h1v1h-1zM2 18h1v1h-1zM3 18h1v1h-1zM22 18h1v1h-1zM29 18h1v1h-1zM31 18h1v1h-1zM35 18h1v1h-1zM37 18h1v1h-1zM40 18h1v1h-1zM10 19h1v1h-1zM11 19h1v1h-1zM15 19h1v1h-1zM20 19h1v1h-1zM23 19h1v1h-1zM28 19h1v1h-1zM34 19h1v1h-1zM36 19h1v1h-1zM0 20h1v1h-1zM9 20h1v1h-1zM10 20h1v1h-1zM15 20h1v1h-1zM19 20h1v1h-1zM20 20h1v1h-1zM31 20h1v1h-1zM32 20h1v1h-1zM35 20h1v1h-1zM41 20h1v1h-1zM8 21h1v1h-1zM12 21h1v1h-1zM13 21h1v1h-1zM26 21h1v1h-1zM0 22h1v1h-1zM10 22h1v1h-1zM14 22h1v1h-1zM17 22h1v1h-1zM20 22h1v1h-1zM29 22h1v1h-1zM34 22h1v1h-1zM36 22h1v1h-1zM0 23h1v1h-1zM2 23h1v1h-1zM5 23h1v1h-1zM10 23h1v1h-1zM12 23h1v1h-1zM13 23h1v1h-1zM0 24h1v1h-1zM8 24h1v1h-1zM11 24h1v1h-1zM16 24h1v1h-1zM17 24h1v1h-1zM25 24h1v1h-1zM35 24h1v1h-1zM39 24h1v1h-1zM1 25h1v1h-1zM19 25h1v1h-1zM20 25h1v1h-1zM26 25h1v1h-1zM35 25h1v1h-1zM38 25h1v1h-1zM7 26h1v1h-1zM15 26h1v1h-1zM17 26h1v1h-1zM22 26h1v1h-1zM33 26h1v1h-1zM38 26h1v1h-1zM2 27h1v1h-1zM27 27h1v1h-1zM28 27h1v1h-1zM30 27h1v1h-1zM31 27h1v1h-1zM33 27h1v1h-1zM38 27h1v1h-1zM0 28h1v1h-1zM6 28h1v1h-1zM13 28h1v1h-1zM23 28h1v1h-1zM24 28h1v1h-1zM25 28h1v1h-1zM34 28h1v1h-1zM38 28h1v1h-1zM41 28h1v1h-1zM10 29h1v1h-1zM14 29h1v1h-1zM31 29h1v1h-1zM1 30h1v1h-1zM14 30h1v1h-1zM20 30h1v1h-1zM28 30h1v1h-1zM30 30h1v1h-1zM37 30h1v1h-1zM38 30h1v1h-1zM0 31h1v1h-1zM16 31h1v1h-1zM23 31h1v1h-1zM28 31h1v1h-1zM20 32h1v1h-1zM38 32h1v1h-1zM41 32h1v1h-1zM1 33h1v1h-1zM7 33h1v1h-1zM8 33h1v1h-1zM18 33h1v1h-1zM20 33h1v1h-1zM21 33h1v1h-1zM22 33h1v1h-1zM26 33h1v1h-1zM29 33h1v1h-1zM31 33h1v1h-1zM35 33h1v1h-1zM38 33h1v1h-1zM10 34h1v1h-1zM12 34h1v1h-1zM15 34h1v1h-1zM20 34h1v1h-1zM21 34h1v1h-1zM26 34h1v1h-1zM34 34h1v1h-1zM4 35h1v1h-1zM13 35h1v1h-1zM17 35h1v1h-1zM19 35h1v1h-1zM21 35h1v1h-1zM23 35h1v1h-1zM25 35h1v1h-1zM29 35h1v1h-1zM32 35h1v1h-1zM40 35h1v1h-1zM16 36h1v1h-1zM17 36h1v1h-1zM22 36h1v1h-1zM25 36h1v1h-1zM28 36h1v1h-1zM36 36h1v1h-1zM7 37h1v1h-1zM9 37h1v1h-1zM12 37h1v1h-1zM15 37h1v1h-1zM18 37h1v1h-1zM19 37h1v1h-1zM22 37h1v1h-1zM27 37h1v1h-1zM33 37h1v1h-1zM36 37h1v1h-1zM40 37h1v1h-1zM1 38h1v1h-1zM4 38h1v1h-1zM6 38h1v1h-1zM12 38h1v1h-1zM19 38h1v1h-1zM23 38h1v1h-1zM29 38h1v1h-1zM34 38h1v1h-1zM36 38h1v1h-1zM0 39h1v1h-1zM4 39h1v1h-1zM8 39h1v1h-1zM14 39h1v1h-1zM15 39h1v1h-1zM16 39h1v1h-1zM20 39h1v1h-1zM0 40h1v1h-1zM9 40h1v1h-1zM16 40h1v1h-1zM2 41h1v1h-1zM7 41h1v1h-1zM10 41h1v1h-1zM11 41h1v1h-1zM13 41h1v1h-1zM15 41h1v1h-1zM21 41h1v1h-1zM22 41h1v1h-1zM28 41h1v1h-1zM29 41h1v1h-1zM32 41h1v1h-1zM37 41h1v1h-1zM0 42h1v1h-1zM10 42h1v1h-1zM13 42h1v1h-1zM17 42h1v1h-1zM20 42h1v1h-1zM29 42h1v1h-1zM40 42h1v1h-1zM4 43h1v1h-1zM8 43h1v1h-1zM10 43h1v1h-1zM24 43h1v1h-1zM29 43h1v1h-1zM35 43h1v1h-1zM41 43h1v1h-1zM3 44h1v1h-1zM5 44h1v1h-1zM16 44h1v1h-1zM17 44h1v1h-1zM24 44h1v1h-1zM25 44h1v1h-1zM28 44h1v1h-1zM32 44h1v1h-1zM35 44h1v1h-1zM41 44h1v1h-1zM3 45h1v1h-1zM4 45h1v1h-1zM10 45h1v1h-1zM13 45h1v1h-1zM14 45h1v1h-1zM15 45h1v1h-1zM17 45h1v1h-1zM18 45h1v1h-1zM23 45h1v1h-1zM30 45h1v1h-1zM31 45h1v1h-1zM36 45h1v1h-1zM37 45h1v1h-1zM38 45h1v1h-1zM0 46h1v1h-1zM7 46h1v1h-1zM36 46h1v1h-1zM39 46h1v1h-1zM41 46h1v1h-1zM2 47h1v1h-1zM25 47h1v1h-1zM28 47h1v1h-1zM33 47h1v1h-1zM35 47h1v1h-1zM38 47h1v1h-1zM9 48h1v1h-1zM12 48h1v1h-1zM15 48h1v1h-1zM21 48h1v1h-1zM30 48h1v1h-1zM40 48h1v1h-1zM41 48h1v1h-1zM0 49h1v1h-1zM5 49h1v1h-1zM21 49h1v1h-1zM24 49h1v1h-1zM27 49h1v1h-1zM28 49h1v1h-1zM32 49h1v1h-1zM36 49h1v1h-1zM38 49h1v1h-1zM39 49h1v1h-1zM40 49h1v1h-1zM2 50h1v1h-1zM3 50h1v1h-1zM5 50h1v1h-1zM12 50h1v1h-1zM13 50h1v1h-1zM15 50h1v1h-1zM19 50h1v1h-1zM21 50h1v1h-1zM27 50h1v1h-1zM30 50h1v1h-1zM36 50h1v1h-1zM2 51h1v1h-1zM5 51h1v1h-1zM11 51h1v1h-1zM12 51h1v1h-1zM20 51h1v1h-1zM21 51h1v1h-1zM30 51h1v1h-1zM38 51h1v1h-1zM41 51h1v1h-1zM3 52h1v1h-1zM23 52h1v1h-1zM24 52h1v1h-1zM26 52h1v1h-1zM30 52h1v1h-1zM32 52h1v1h-1zM6 53h1v1h-1zM7 53h1v1h-1zM13 53h1v1h-1zM15 53h1v1h-1zM18 53h1v1h-1zM19 53h1v1h-1zM2 54h1v1h-1zM3 54h1v1h-1zM13 54h1v1h-1zM23 54h1v1h-1zM28 54h1v1h-1zM30 54h1v1h-1zM36 54h1v1h-1zM37 54h1v1h-1zM3 55h1v1h-1zM4 55h1v1h-1zM6 55h1v1h-1zM18 55h1v1h-1zM29 55h1v1h-1zM33 55h1v1h-1zM39 55h1v1h-1zM3 56h1v1h-1zM6 56h1v1h-1zM8 56h1v1h-1zM11 56h1v1h-1zM13 56h1v1h-1zM14 56h1v1h-1zM29 56h1v1h-1zM31 56h1v1h-1zM37 56h1v1h-1zM39 56h1v1h-1zM41 56h1v1h-1zM0 57h1v1h-1zM3 57h1v1h-1zM12 57h1v1h-1zM16 57h1v1h-1zM21 57h1v1h-1zM26 57h1v1h-1zM33 57h1v1h-1zM3 58h1v1h-1zM14 58h1v1h-1zM18 58h1v1h-1zM22 58h1v1h-1zM26 58h1v1h-1zM31 58h1v1h-1zM41 58h1v1h-1zM3 59h1v1h-1zM4 59h1v1h-1zM8 59h1v1h-1zM13 59h1v1h-1zM19 59h1v1h-1zM27 59h1v1h-1zM32 59h1v1h-1zM39 59h1v1h-1zM0 60h1v1h-1zM17 60h1v1h-1zM18 60h1v1h-1zM19 60h1v1h-1zM22 60h1v1h-1zM26 60h1v1h-1zM27 60h1v1h-1zM37 60h1v1h-1zM11 61h1v1h-1zM12 61h1v1h-1zM19 61h1v1h-1zM24 61h1v1h-1zM28 61h1v1h-1zM36 61h1v1h-1zM1 62h1v1h-1zM7 62h1v1h-1zM16 62h1v1h-1zM21 62h1v1h-1zM32 62h1v1h-1zM0 63h1v1h-1zM2 63h1v1h-1zM10 63h1v1h-1zM20 63h1v1h-1zM23 63h1v1h-1zM25 63h1v1h-1zM34 63h1v1h-1zM40 63h1v1h-1zM7 64h1v1h-1zM8 64h1v1h-1zM15 64h1v1h-1zM20 64h1v1h-1zM25 64h1v1h-1zM27 64h1v1h-1zM28 64h1v1h-1zM39 64h1v1h-1zM41 64h1v1h-1zM2 65h1v1h-1zM3 65h1v1h-1zM4 65h1v1h-1zM13 65h1v1h-1zM21 65h1v1h-1zM25 65h1v1h-1zM26 65h1v1h-1zM27 65h1v1h-1zM2 66h1v1h-1zM4 66h1v1h-1zM16 66h1v1h-1zM23 66h1v1h-1zM26 66h1v1h-1zM33 66h1v1h-1zM2 67h1v1h-1zM4 67h1v1h-1zM5 67h1v1h-1zM13 67h1v1h-1zM20 67h1v1h-1zM39 67h1v1h-1zM0 68h1v1h-1zM15 68h1v1h-1zM16 68h1v1h-1zM20 68h1v1h-1zM25 68h1v1h-1zM29 68h1v1h-1zM35 68h1v1h-1zM37 68h1v1h-1zM1 69h1v1h-1zM13 69h1v1h-1zM17 69h1v1h-1zM22 69h1v1h-1zM27 69h1v1h-1zM29 69h1v1h-1zM32 69h1v1h-1zM34 69h1v1h-1zM1 70h1v1h-1zM3 70h1v1h-1zM14 70h1v1h-1zM19 70h1v1h-1zM23 70h1v1h-1zM26 70h1v1h-1zM39 70h1v1h-1zM40 70h1v1h-1zM41 70h1v1h-1zM0 71h1v1h-1zM7 71h1v1h-1zM14 71h1v1h-1zM18 71h1v1h-1zM26 71h1v1h-1zM36 71h1v1h-1zM39 71h1v1h-1zM18 72h1v1h-1zM22 72h1v1h-1zM27 72h1v1h-1zM31 72h1v1h-1zM4 73h1v1h-1zM7 73h1v1h-1zM13 73h1v1h-1zM22 73h1v1h-1zM33 73h1v1h-1zM0 74h1v1h-1zM3 74h1v1h-1zM4 74h1v1h-1zM16 74h1v1h-1zM37 74h1v1h-1zM41 74h1v1h-1zM2 75h1v1h-1zM3 75h1v1h-1zM6 75h1v1h-1zM7 75h1v1h-1zM8 75h1v1h-1zM15 75h1v1h-1zM18 75h1v1h-1zM19 75h1v1h-1zM21 75h1v1h-1zM29 75h1v1h-1zM31 75h1v1h-1zM32 75h1v1h-1zM33 75h1v1h-1zM36 75h1v1h-1zM38 75h1v1h-1zM6 76h1v1h-1zM14 76h1v1h-1zM17 76h1v1h-1zM20 76h1v1h-1zM29 76h1v1h-1zM36 76h1v1h-1zM40 76h1v1h-1zM41 76h1v1h-1zM1 77h1v1h-1zM23 77h1v1h-1zM25 77h1v1h-1zM26 77h1v1h-1zM32 77h1v1h-1zM33 77h1v1h-1zM36 77h1v1h-1zM41 77h1v1h-1zM15 78h1v1h-1zM23 78h1v1h-1zM25 78h1v1h-1zM35 78h1v1h-1zM0 79h1v1h-1zM7 79h1v1h-1zM13 79h1v1h-1zM17 79h1v1h-1zM21 79h1v1h-1zM22 79h1v1h-1zM24 79h1v1h-1zM26 79h1v1h-1zM29 79h1v1h-1zM30 79h1v1h-1zM35 79h1v1h-1zM37 79h1v1h-1zM3 80h1v1h-1zM5 80h1v1h-1zM8 80h1v1h-1zM31 80h1v1h-1zM33 80h1v1h-1zM6 81h1v1h-1zM13 81h1v1h-1zM15 81h1v1h-1zM16 81h1v1h-1zM23 81h1v1h-1zM24 81h1v1h-1zM34 81h1v1h-1zM41 81h1v1h-1zM4 82h1v1h-1zM8 82h1v1h-1zM9 82h1v1h-1zM12 82h1v1h-1zM14 82h1v1h-1zM37 82h1v1h-1zM3 83h1v1h-1zM13 83h1v1h-1zM15 83h1v1h-1zM18 83h1v1h-1zM27 83h1v1h-1zM28 83h1v1h-1zM40 83h1v1h-1zM41 83h1v1h-1zM0 84h1v1h-1zM9 84h1v1h-1zM15 84h1v1h-1zM17 84h1v1h-1zM20 84h1v1h-1zM37 84h1v1h-1zM6 85h1v1h-1zM18 85h1v1h-1zM22 85h1v1h-1zM27 85h1v1h-1zM29 85h1v1h-1zM34 85h1v1h-1zM5 86h1v1h-1zM17 86h1v1h-1zM30 86h1v1h-1zM36 86h1v1h-1zM15 87h1v1h-1zM28 87h1v1h-1zM32 87h1v1h-1zM37 87h1v1h-1zM14 88h1v1h-1zM15 88h1v1h-1zM17 88h1v1h-1zM22 88h1v1h-1zM25 88h1v1h-1zM29 88h1v1h-1zM2 89h1v1h-1zM9 89h1v1h-1zM14 89h1v1h-1zM16 89h1v1h-1zM20 89h1v1h-1zM27 89h1v1h-1zM32 89h1v1h-1zM8 90h1v1h-1zM19 90h1v1h-1zM25 90h1v1h-1zM37 90h1v1h-1zM38 90h1v1h-1zM39 90h1v1h-1zM15 91h1v1h-1zM23 91h1v1h-1zM27 91h1v1h-1zM31 91h1v1h-1zM10 92h1v1h-1zM16 92h1v1h-1zM18 92h1v1h-1zM26 92h1v1h-1zM28 92h1v1h-1zM30 92h1v1h-1zM33 92h1v1h-1zM21 93h1v1h-1zM37 93h1v1h-1zM40 93h1v1h-1zM2 94h1v1h-1zM12 94h1v1h-1zM21 94h1v1h-1zM25 94h1v1h-1zM29 94h1v1h-1zM33 94h1v1h-1zM2 95h1v1h-1zM13 95h1v1h-1zM22 95h1v1h-1zM29 95h1v1h-1zM34 95h1v1h-1zM38 95h1v1h-1zM6 96h1v1h-1zM12 96h1v1h-1zM15 96h1v1h-1zM18 96h1v1h-1zM23 96h1v1h-1zM24 96h1v1h-1zM25 96h1v1h-1zM27 96h1v1h-1zM33 96h1v1h-1zM39 96h1v1h-1zM0 97h1v1h-1zM10 97h1v1h-1zM18 97h1v1h-1zM19 97h1v1h-1zM20 97h1v1h-1zM22 97h1v1h-1zM29 97h1v1h-1zM3 98h1v1h-1zM13 98h1v1h-1zM15 98h1v1h-1zM19 98h1v1h-1zM20 98h1v1h-1zM28 98h1v1h-1zM32 98h1v1h-1zM37 98h1v1h-1zM4 99h1v1h-1zM10 99h1v1h-1zM18 99h1v1h-1zM38 99h1v1h-1zM41 99h1v1h-1zM0 100h1v1h-1zM11 100h1v1h-1zM12 100h1v1h-1zM27 100h1v1h-1zM33 100h1v1h-1zM36 100h1v1h-1zM2 101h1v1h-1zM4 101h1v1h-1zM9 101h1v1h-1zM13 101h1v1h-1zM22 101h1v1h-1zM25 101h1v1h-1zM39 101h1v1h-1zM0 102h1v1h-1zM1 102h1v1h-1zM2 102h1v1h-1zM3 102h1v1h-1zM6 102h1v1h-1zM7 102h1v1h-1zM10 102h1v1h-1zM28 102h1v1h-1zM30 102h1v1h-1zM36 102h1v1h-1zM1 103h1v1h-1zM4 103h1v1h-1zM5 103h1v1h-1zM12 103h1v1h-1zM28 103h1v1h-1zM36 103h1v1h-1zM40 103h1v1h-1zM11 104h1v1h-1zM18 104h1v1h-1zM21 104h1v1h-1zM22 104h1v1h-1zM26 104h1v1h-1zM35 104h1v1h-1zM36 104h1v1h-1zM40 104h1v1h-1zM41 104h1v1h-1z" fill="#767676"/>
<path d="M2 0h1v1h-1zM7 0h1v1h-1zM8 0h1v1h-1zM9 0h1v1h-1zM10 0h1v1h-1zM16 0h1v1h-1zM21 0h1v1h-1zM36 0h1v1h-1zM15 1h1v1h-1zM19 1h1v1h-1zM23 1h1v1h-1zM27 1h1v1h-1zM30 1h1v1h-1zM33 1h1v1h-1zM37 1h1v1h-1zM40 1h1v1h-1zM6 2h1v1h-1zM7 2h1v1h-1zM11 2h1v1h-1zM15 2h1v1h-1zM16 2h1v1h-1zM20 2h1v1h-1zM21 2h1v1h-1zM23 2h1v1h-1zM29 2h1v1h-1zM34 2h1v1h-1zM38 2h1v1h-1zM4 3h1v1h-1zM9 3h1v1h-1zM11 3h1v1h-1zM12 3h1v1h-1zM17 3h1v1h-1zM20 3h1v1h-1zM28 3h1v1h-1zM31 3h1v1h-1zM11 4h1v1h-1zM31 4h1v1h-1zM32 4h1v1h-1zM34 4h1v1h-1zM1 5h1v1h-1zM25 5h1v1h-1zM41 5h1v1h-1zM8 6h1v1h-1zM10 6h1v1h-1zM17 6h1v1h-1zM31 6h1v1h-1zM37 6h1v1h-1zM41 6h1v1h-1zM19 7h1v1h-1zM20 7h1v1h-1zM26 7h1v1h-1zM30 7h1v1h-1zM35 7h1v1h-1zM2 8h1v1h-1zM7 8h1v1h-1zM23 8h1v1h-1zM26 8h1v1h-1zM27 8h1v1h-1zM29 8h1v1h-1zM40 8h1v1h-1zM41 8h1v1h-1zM0 9h1v1h-1zM3 9h1v1h-1zM7 9h1v1h-1zM12 9h1v1h-1zM27 9h1v1h-1zM8 10h1v1h-1zM10 10h1v1h-1zM22 10h1v1h-1zM26 10h1v1h-1zM35 10h1v1h-1zM36 10h1v1h-1zM37 10h1v1h-1zM6 11h1v1h-1zM10 11h1v1h-1zM27 11h1v1h-1zM28 11h1v1h-1zM36 11h1v1h-1zM1 12h1v1h-1zM15 12h1v1h-1zM22 12h1v1h-1zM24 12h1v1h-1zM28 12h1v1h-1zM30 12h1v1h-1zM35 12h1v1h-1zM5 13h1v1h-1zM10 13h1v1h-1zM18 13h1v1h-1zM22 13h1v1h-1zM24 13h1v1h-1zM29 13h1v1h-1zM31 13h1v1h-1zM33 13h1v1h-1zM34 13h1v1h-1zM35 13h1v1h-1zM14 14h1v1h-1zM20 14h1v1h-1zM22 14h1v1h-1zM23 14h1v1h-1zM30 14h1v1h-1zM16 15h1v1h-1zM17 15h1v1h-1zM20 15h1v1h-1zM37 15h1v1h-1zM4 16h1v1h-1zM6 16h1v1h-1zM24 16h1v1h-1zM32 16h1v1h-1zM35 16h1v1h-1zM36 16h1v1h-1zM1 17h1v1h-1zM2 17h1v1h-1zM6 17h1v1h-1zM7 17h1v1h-1zM13 17h1v1h-1zM17 17h1v1h-1zM20 17h1v1h-1zM23 17h1v1h-1zM30 17h1v1h-1zM0 18h1v1h-1zM10 18h1v1h-1zM14 18h1v1h-1zM15 18h1v1h-1zM16 18h1v1h-1zM17 18h1v1h-1zM33 18h1v1h-1zM41 18h1v1h-1zM1 19h1v1h-1zM7 19h1v1h-1zM8 19h1v1h-1zM13 19h1v1h-1zM18 19h1v1h-1zM29 19h1v1h-1zM32 19h1v1h-1zM38 19h1v1h-1zM8 20h1v1h-1zM13 20h1v1h-1zM21 20h1v1h-1zM23 20h1v1h-1zM25 20h1v1h-1zM4 21h1v1h-1zM21 21h1v1h-1zM30 21h1v1h-1zM34 21h1v1h-1zM35 21h1v1h-1zM9 22h1v1h-1zM21 22h1v1h-1zM26 22h1v1h-1zM32 22h1v1h-1zM33 22h1v1h-1zM37 22h1v1h-1zM38 22h1v1h-1zM39 22h1v1h-1zM1 23h1v1h-1zM3 23h1v1h-1zM16 23h1v1h-1zM19 23h1v1h-1zM29 23h1v1h-1zM32 23h1v1h-1zM33 23h1v1h-1zM37 23h1v1h-1zM5 24h1v1h-1zM10 24h1v1h-1zM14 24h1v1h-1zM22 24h1v1h-1zM27 24h1v1h-1zM29 24h1v1h-1zM31 24h1v1h-1zM36 24h1v1h-1zM2 25h1v1h-1zM6 25h1v1h-1zM9 25h1v1h-1zM10 25h1v1h-1zM13 25h1v1h-1zM17 25h1v1h-1zM18 25h1v1h-1zM27 25h1v1h-1zM28 25h1v1h-1zM32 25h1v1h-1zM0 26h1v1h-1zM19 26h1v1h-1zM29 26h1v1h-1zM31 26h1v1h-1zM32 26h1v1h-1zM39 26h1v1h-1zM41 26h1v1h-1zM1 27h1v1h-1zM8 27h1v1h-1zM9 27h1v1h-1zM19 27h1v1h-1zM20 27h1v1h-1zM21 27h1v1h-1zM22 27h1v1h-1zM34 27h1v1h-1zM35 27h1v1h-1zM16 28h1v1h-1zM27 28h1v1h-1zM35 28h1v1h-1zM36 28h1v1h-1zM40 28h1v1h-1zM9 29h1v1h-1zM24 29h1v1h-1zM26 29h1v1h-1zM33 29h1v1h-1zM6 30h1v1h-1zM11 30h1v1h-1zM17 30h1v1h-1zM22 30h1v1h-1zM25 30h1v1h-1zM34 30h1v1h-1zM40 30h1v1h-1zM14 31h1v1h-1zM22 31h1v1h-1zM29 31h1v1h-1zM35 31h1v1h-1zM39 31h1v1h-1zM5 32h1v1h-1zM9 32h1v1h-1zM15 32h1v1h-1zM16 32h1v1h-1zM19 32h1v1h-1zM27 32h1v1h-1zM31 32h1v1h-1zM40 32h1v1h-1zM9 33h1v1h-1zM33 33h1v1h-1zM36 33h1v1h-1zM39 33h1v1h-1zM0 34h1v1h-1zM2 34h1v1h-1zM7 34h1v1h-1zM8 34h1v1h-1zM9 34h1v1h-1zM13 34h1v1h-1zM22 34h1v1h-1zM24 34h1v1h-1zM27 34h1v1h-1zM28 34h1v1h-1zM33 34h1v1h-1zM35 34h1v1h-1zM0 35h1v1h-1zM10 35h1v1h-1zM24 35h1v1h-1zM31 35h1v1h-1zM9 36h1v1h-1zM21 36h1v1h-1zM32 36h1v1h-1zM34 36h1v1h-1zM38 36h1v1h-1zM16 37h1v1h-1zM21 37h1v1h-1zM26 37h1v1h-1zM28 37h1v1h-1zM29 37h1v1h-1zM32 37h1v1h-1zM38 37h1v1h-1zM0 38h1v1h-1zM2 38h1v1h-1zM3 38h1v1h-1zM5 38h1v1h-1zM11 38h1v1h-1zM14 38h1v1h-1zM25 38h1v1h-1zM35 38h1v1h-1zM40 38h1v1h-1zM1 39h1v1h-1zM5 39h1v1h-1zM6 39h1v1h-1zM9 39h1v1h-1zM11 39h1v1h-1zM12 39h1v1h-1zM13 39h1v1h-1zM25 39h1v1h-1zM35 39h1v1h-1zM6 40h1v1h-1zM19 40h1v1h-1zM23 40h1v1h-1zM31 40h1v1h-1zM38 40h1v1h-1zM40 40h1v1h-1zM14 41h1v1h-1zM25 41h1v1h-1zM41 41h1v1h-1zM2 42h1v1h-1zM4 42h1v1h-1zM9 42h1v1h-1zM14 42h1v1h-1zM19 42h1v1h-1zM26 42h1v1h-1zM27 42h1v1h-1zM31 42h1v1h-1zM33 42h1v1h-1zM35 42h1v1h-1zM37 42h1v1h-1zM38 42h1v1h-1zM41 42h1v1h-1zM1 43h1v1h-1zM9 43h1v1h-1zM17 43h1v1h-1zM21 43h1v1h-1zM31 43h1v1h-1zM37 43h1v1h-1zM8 44h1v1h-1zM15 44h1v1h-1zM21 44h1v1h-1zM30 44h1v1h-1zM31 44h1v1h-1zM34 44h1v1h-1zM37 44h1v1h-1zM2 45h1v1h-1zM11 45h1v1h-1zM21 45h1v1h-1zM27 45h1v1h-1zM28 45h1v1h-1zM29 45h1v1h-1zM33 45h1v1h-1zM34 45h1v1h-1zM1 46h1v1h-1zM11 46h1v1h-1zM13 46h1v1h-1zM19 46h1v1h-1zM23 46h1v1h-1zM26 46h1v1h-1zM32 46h1v1h-1zM7 47h1v1h-1zM10 47h1v1h-1zM11 47h1v1h-1zM14 47h1v1h-1zM19 47h1v1h-1zM23 47h1v1h-1zM24 47h1v1h-1zM26 47h1v1h-1zM36 47h1v1h-1zM0 48h1v1h-1zM7 48h1v1h-1zM8 48h1v1h-1zM14 48h1v1h-1zM18 48h1v1h-1zM19 48h1v1h-1zM20 48h1v1h-1zM23 48h1v1h-1zM27 48h1v1h-1zM28 48h1v1h-1zM34 48h1v1h-1zM38 48h1v1h-1zM3 49h1v1h-1zM16 49h1v1h-1zM6 50h1v1h-1zM8 50h1v1h-1zM10 50h1v1h-1zM17 50h1v1h-1zM20 50h1v1h-1zM37 50h1v1h-1zM38 50h1v1h-1zM39 50h1v1h-1zM40 50h1v1h-1zM0 51h1v1h-1zM6 51h1v1h-1zM10 51h1v1h-1zM13 51h1v1h-1zM19 51h1v1h-1zM27 51h1v1h-1zM29 51h1v1h-1zM31 51h1v1h-1zM32 51h1v1h-1zM36 51h1v1h-1zM37 51h1v1h-1zM39 51h1v1h-1zM2 52h1v1h-1zM4 52h1v1h-1zM5 52h1v1h-1zM7 52h1v1h-1zM9 52h1v1h-1zM10 52h1v1h-1zM12 52h1v1h-1zM13 52h1v1h-1zM17 52h1v1h-1zM18 52h1v1h-1zM27 52h1v1h-1zM29 52h1v1h-1zM34 52h1v1h-1zM36 52h1v1h-1zM39 52h1v1h-1zM4 53h1v1h-1zM9 53h1v1h-1zM10 53h1v1h-1zM23 53h1v1h-1zM27 53h1v1h-1zM28 53h1v1h-1zM35 53h1v1h-1zM6 54h1v1h-1zM9 54h1v1h-1zM15 54h1v1h-1zM16 54h1v1h-1zM17 54h1v1h-1zM25 54h1v1h-1zM39 54h1v1h-1zM8 55h1v1h-1zM15 55h1v1h-1zM16 55h1v1h-1zM17 55h1v1h-1zM24 55h1v1h-1zM26 55h1v1h-1zM40 55h1v1h-1zM2 56h1v1h-1zM9 56h1v1h-1zM19 56h1v1h-1zM30 56h1v1h-1zM32 56h1v1h-1zM1 57h1v1h-1zM9 57h1v1h-1zM20 57h1v1h-1zM25 57h1v1h-1zM27 57h1v1h-1zM36 57h1v1h-1zM38 57h1v1h-1zM41 57h1v1h-1zM0 58h1v1h-1zM7 58h1v1h-1zM9 58h1v1h-1zM17 58h1v1h-1zM28 58h1v1h-1zM36 58h1v1h-1zM38 58h1v1h-1zM1 59h1v1h-1zM2 59h1v1h-1zM5 59h1v1h-1zM9 59h1v1h-1zM11 59h1v1h-1zM12 59h1v1h-1zM37 59h1v1h-1zM38 59h1v1h-1zM40 59h1v1h-1zM1 60h1v1h-1zM2 60h1v1h-1zM4 60h1v1h-1zM9 60h1v1h-1zM12 60h1v1h-1zM30 60h1v1h-1zM0 61h1v1h-1zM3 61h1v1h-1zM8 61h1v1h-1zM10 61h1v1h-1zM20 61h1v1h-1zM22 61h1v1h-1zM32 61h1v1h-1zM33 61h1v1h-1zM34 61h1v1h-1zM35 61h1v1h-1zM38 61h1v1h-1zM39 61h1v1h-1zM40 61h1v1h-1zM5 62h1v1h-1zM8 62h1v1h-1zM11 62h1v1h-1zM17 62h1v1h-1zM19 62h1v1h-1zM22 62h1v1h-1zM27 62h1v1h-1zM29 62h1v1h-1zM30 62h1v1h-1zM34 62h1v1h-1zM38 62h1v1h-1zM6 63h1v1h-1zM13 63h1v1h-1zM17 63h1v1h-1zM26 63h1v1h-1zM28 63h1v1h-1zM33 63h1v1h-1zM10 64h1v1h-1zM11 64h1v1h-1zM17 64h1v1h-1zM21 64h1v1h-1zM24 64h1v1h-1zM26 64h1v1h-1zM0 65h1v1h-1zM1 65h1v1h-1zM8 65h1v1h-1zM9 65h1v1h-1zM11 65h1v1h-1zM19 65h1v1h-1zM22 65h1v1h-1zM24 65h1v1h-1zM28 65h1v1h-1zM30 65h1v1h-1zM38 65h1v1h-1zM1 66h1v1h-1zM3 66h1v1h-1zM5 66h1v1h-1zM17 66h1v1h-1zM41 66h1v1h-1zM19 67h1v1h-1zM33 67h1v1h-1zM34 67h1v1h-1zM35 67h1v1h-1zM36 67h1v1h-1zM38 67h1v1h-1zM1 68h1v1h-1zM4 68h1v1h-1zM8 68h1v1h-1zM9 68h1v1h-1zM11 68h1v1h-1zM14 68h1v1h-1zM17 68h1v1h-1zM24 68h1v1h-1zM26 68h1v1h-1zM30 68h1v1h-1zM32 68h1v1h-1zM34 68h1v1h-1zM0 69h1v1h-1zM2 69h1v1h-1zM5 69h1v1h-1zM11 69h1v1h-1zM14 69h1v1h-1zM18 69h1v1h-1zM21 69h1v1h-1zM25 69h1v1h-1zM26 69h1v1h-1zM41 69h1v1h-1zM11 70h1v1h-1zM13 70h1v1h-1zM24 70h1v1h-1zM28 70h1v1h-1zM33 70h1v1h-1zM36 70h1v1h-1zM37 70h1v1h-1zM10 71h1v1h-1zM12 71h1v1h-1zM13 71h1v1h-1zM21 71h1v1h-1zM28 71h1v1h-1zM32 71h1v1h-1zM33 71h1v1h-1zM40 71h1v1h-1zM41 71h1v1h-1zM8 72h1v1h-1zM10 72h1v1h-1zM24 72h1v1h-1zM32 72h1v1h-1zM25 73h1v1h-1zM27 73h1v1h-1zM28 73h1v1h-1zM30 73h1v1h-1zM31 73h1v1h-1zM36 73h1v1h-1zM41 73h1v1h-1zM20 74h1v1h-1zM21 74h1v1h-1zM24 74h1v1h-1zM28 74h1v1h-1zM30 74h1v1h-1zM35 74h1v1h-1zM36 74h1v1h-1zM39 74h1v1h-1zM0 75h1v1h-1zM12 75h1v1h-1zM14 75h1v1h-1zM16 75h1v1h-1zM20 75h1v1h-1zM22 75h1v1h-1zM39 75h1v1h-1zM0 76h1v1h-1zM2 76h1v1h-1zM4 76h1v1h-1zM16 76h1v1h-1zM25 76h1v1h-1zM30 76h1v1h-1zM5 77h1v1h-1zM18 77h1v1h-1zM19 77h1v1h-1zM22 77h1v1h-1zM31 77h1v1h-1zM1 78h1v1h-1zM6 78h1v1h-1zM7 78h1v1h-1zM8 78h1v1h-1zM11 78h1v1h-1zM13 78h1v1h-1zM14 78h1v1h-1zM18 78h1v1h-1zM19 78h1v1h-1zM26 78h1v1h-1zM28 78h1v1h-1zM38 78h1v1h-1zM2 79h1v1h-1zM12 79h1v1h-1zM20 79h1v1h-1zM25 79h1v1h-1zM28 79h1v1h-1zM36 79h1v1h-1zM38 79h1v1h-1zM0 80h1v1h-1zM6 80h1v1h-1zM14 80h1v1h-1zM18 80h1v1h-1zM21 80h1v1h-1zM25 80h1v1h-1zM27 80h1v1h-1zM41 80h1v1h-1zM0 81h1v1h-1zM4 81h1v1h-1zM28 81h1v1h-1zM2 82h1v1h-1zM3 82h1v1h-1zM5 82h1v1h-1zM6 82h1v1h-1zM16 82h1v1h-1zM18 82h1v1h-1zM19 82h1v1h-1zM24 82h1v1h-1zM25 82h1v1h-1zM27 82h1v1h-1zM30 82h1v1h-1zM35 82h1v1h-1zM12 83h1v1h-1zM17 83h1v1h-1zM21 83h1v1h-1zM22 83h1v1h-1zM30 83h1v1h-1zM31 83h1v1h-1zM33 83h1v1h-1zM34 83h1v1h-1zM37 83h1v1h-1zM1 84h1v1h-1zM7 84h1v1h-1zM8 84h1v1h-1zM10 84h1v1h-1zM12 84h1v1h-1zM18 84h1v1h-1zM26 84h1v1h-1zM29 84h1v1h-1zM31 84h1v1h-1zM0 85h1v1h-1zM1 85h1v1h-1zM3 85h1v1h-1zM4 85h1v1h-1zM5 85h1v1h-1zM10 85h1v1h-1zM12 85h1v1h-1zM16 85h1v1h-1zM17 85h1v1h-1zM20 85h1v1h-1zM25 85h1v1h-1zM32 85h1v1h-1zM36 85h1v1h-1zM39 85h1v1h-1zM1 86h1v1h-1zM2 86h1v1h-1zM4 86h1v1h-1zM6 86h1v1h-1zM15 86h1v1h-1zM18 86h1v1h-1zM22 86h1v1h-1zM25 86h1v1h-1zM34 86h1v1h-1zM38 86h1v1h-1zM4 87h1v1h-1zM6 87h1v1h-1zM12 87h1v1h-1zM14 87h1v1h-1zM33 87h1v1h-1zM38 87h1v1h-1zM5 88h1v1h-1zM13 88h1v1h-1zM18 88h1v1h-1zM20 88h1v1h-1zM28 88h1v1h-1zM37 88h1v1h-1zM3 89h1v1h-1zM15 89h1v1h-1zM26 89h1v1h-1zM28 89h1v1h-1zM29 89h1v1h-1zM34 89h1v1h-1zM36 89h1v1h-1zM37 89h1v1h-1zM24 90h1v1h-1zM27 90h1v1h-1zM34 90h1v1h-1zM40 90h1v1h-1zM0 91h1v1h-1zM1 91h1v1h-1zM2 91h1v1h-1zM14 91h1v1h-1zM17 91h1v1h-1zM19 91h1v1h-1zM21 91h1v1h-1zM22 91h1v1h-1zM24 91h1v1h-1zM35 91h1v1h-1zM11 92h1v1h-1zM14 92h1v1h-1zM27 92h1v1h-1zM29 92h1v1h-1zM39 92h1v1h-1zM3 93h1v1h-1zM8 93h1v1h-1zM9 93h1v1h-1zM10 93h1v1h-1zM11 93h1v1h-1zM17 93h1v1h-1zM20 93h1v1h-1zM29 93h1v1h-1zM30 93h1v1h-1zM32 93h1v1h-1zM38 93h1v1h-1zM3 94h1v1h-1zM8 94h1v1h-1zM18 94h1v1h-1zM23 94h1v1h-1zM27 94h1v1h-1zM40 94h1v1h-1zM4 95h1v1h-1zM16 95h1v1h-1zM24 95h1v1h-1zM25 95h1v1h-1zM28 95h1v1h-1zM35 95h1v1h-1zM3 96h1v1h-1zM16 96h1v1h-1zM17 96h1v1h-1zM21 96h1v1h-1zM30 96h1v1h-1zM7 97h1v1h-1zM14 97h1v1h-1zM15 97h1v1h-1zM23 97h1v1h-1zM30 97h1v1h-1zM35 97h1v1h-1zM37 97h1v1h-1zM1 98h1v1h-1zM5 98h1v1h-1zM12 98h1v1h-1zM14 98h1v1h-1zM31 98h1v1h-1zM39 98h1v1h-1zM8 99h1v1h-1zM12 99h1v1h-1zM14 99h1v1h-1zM19 99h1v1h-1zM25 99h1v1h-1zM36 99h1v1h-1zM39 99h1v1h-1zM6 100h1v1h-1zM18 100h1v1h-1zM23 100h1v1h-1zM24 100h1v1h-1zM26 100h1v1h-1zM29 100h1v1h-1zM38 100h1v1h-1zM40 100h1v1h-1zM8 101h1v1h-1zM15 101h1v1h-1zM18 101h1v1h-1zM20 101h1v1h-1zM21 101h1v1h-1zM33 101h1v1h-1zM40 101h1v1h-1zM41 101h1v1h-1zM4 102h1v1h-1zM11 102h1v1h-1zM22 102h1v1h-1zM25 102h1v1h-1zM32 102h1v1h-1zM33 102h1v1h-1zM38 102h1v1h-1zM39 102h1v1h-1zM3 103h1v1h-1zM7 103h1v1h-1zM10 103h1v1h-1zM16 103h1v1h-1zM17 103h1v1h-1zM20 103h1v1h-1zM27 103h1v1h-1zM31 103h1v1h-1zM37 103h1v1h-1zM41 103h1v1h-1zM10 104h1v1h-1zM16 104h1v1h-1zM19 104h1v1h-1zM20 104h1v1h-1zM25 104h1v1h-1zM28 104h1v1h-1zM29 104h1v1h-1zM33 104h1v1h-1zM34 104h1v1h-1zM37 104h1v1h-1z" fill="#898989"/>
<path d="M1 0h1v1h-1zM4 0h1v1h-1zM17 0h1v1h-1zM22 0h1v1h-1zM23 0h1v1h-1zM28 0h1v1h-1zM30 0h1v1h-1zM32 0h1v1h-1zM26 1h1v1h-1zM35 1h1v1h-1zM41 1h1v1h-1zM1 2h1v1h-1zM4 2h1v1h-1zM5 2h1v1h-1zM8 2h1v1h-1zM13 2h1v1h-1zM19 2h1v1h-1zM24 2h1v1h-1zM28 2h1v1h-1zM30 2h1v1h-1zM32 2h1v1h-1zM37 2h1v1h-1zM41 2h1v1h-1zM3 3h1v1h-1zM6 3h1v1h-1zM8 3h1v1h-1zM16 3h1v1h-1zM21 3h1v1h-1zM23 3h1v1h-1zM25 3h1v1h-1zM30 3h1v1h-1zM34 3h1v1h-1zM40 3h1v1h-1zM0 4h1v1h-1zM10 4h1v1h-1zM18 4h1v1h-1zM28 4h1v1h-1zM33 4h1v1h-1zM3 5h1v1h-1zM14 5h1v1h-1zM15 5h1v1h-1zM24 5h1v1h-1zM35 5h1v1h-1zM38 5h1v1h-1zM2 6h1v1h-1zM12 6h1v1h-1zM19 6h1v1h-1zM22 6h1v1h-1zM24 6h1v1h-1zM26 6h1v1h-1zM33 6h1v1h-1zM38 6h1v1h-1zM3 7h1v1h-1zM7 7h1v1h-1zM11 7h1v1h-1zM12 7h1v1h-1zM17 7h1v1h-1zM31 7h1v1h-1zM34 7h1v1h-1zM41 7h1v1h-1zM5 8h1v1h-1zM8 8h1v1h-1zM9 8h1v1h-1zM14 8h1v1h-1zM20 8h1v1h-1zM33 8h1v1h-1zM36 8h1v1h-1zM38 8h1v1h-1zM2 9h1v1h-1zM6 9h1v1h-1zM13 9h1v1h-1zM16 9h1v1h-1zM19 9h1v1h-1zM23 9h1v1h-1zM32 9h1v1h-1zM33 9h1v1h-1zM37 9h1v1h-1zM39 9h1v1h-1zM1 10h1v1h-1zM3 10h1v1h-1zM4 10h1v1h-1zM19 10h1v1h-1zM24 10h1v1h-1zM27 10h1v1h-1zM32 10h1v1h-1zM40 10h1v1h-1zM0 11h1v1h-1zM15 11h1v1h-1zM23 11h1v1h-1zM30 11h1v1h-1zM31 11h1v1h-1zM33 11h1v1h-1zM40 11h1v1h-1zM41 11h1v1h-1zM5 12h1v1h-1zM13 12h1v1h-1zM25 12h1v1h-1zM31 12h1v1h-1zM34 12h1v1h-1zM37 12h1v1h-1zM41 12h1v1h-1zM0 13h1v1h-1zM1 13h1v1h-1zM14 13h1v1h-1zM20 13h1v1h-1zM0 14h1v1h-1zM13 14h1v1h-1zM18 14h1v1h-1zM21 14h1v1h-1zM37 14h1v1h-1zM39 14h1v1h-1zM40 14h1v1h-1zM10 15h1v1h-1zM12 15h1v1h-1zM18 15h1v1h-1zM19 15h1v1h-1zM21 15h1v1h-1zM22 15h1v1h-1zM25 15h1v1h-1zM32 15h1v1h-1zM35 15h1v1h-1zM40 15h1v1h-1zM3 16h1v1h-1zM13 16h1v1h-1zM20 16h1v1h-1zM27 16h1v1h-1zM30 16h1v1h-1zM33 16h1v1h-1zM37 16h1v1h-1zM40 16h1v1h-1zM41 16h1v1h-1zM10 17h1v1h-1zM14 17h1v1h-1zM16 17h1v1h-1zM21 17h1v1h-1zM24 17h1v1h-1zM25 17h1v1h-1zM26 17h1v1h-1zM28 17h1v1h-1zM31 17h1v1h-1zM32 17h1v1h-1zM39 17h1v1h-1zM5 18h1v1h-1zM25 18h1v1h-1zM26 18h1v1h-1zM27 18h1v1h-1zM30 18h1v1h-1zM39 18h1v1h-1zM6 19h1v1h-1zM12 19h1v1h-1zM14 19h1v1h-1zM24 19h1v1h-1zM41 19h1v1h-1zM2 20h1v1h-1zM29 20h1v1h-1zM36 20h1v1h-1zM37 20h1v1h-1zM3 21h1v1h-1zM5 21h1v1h-1zM7 21h1v1h-1zM37 21h1v1h-1zM2 22h1v1h-1zM3 22h1v1h-1zM7 22h1v1h-1zM8 22h1v1h-1zM11 22h1v1h-1zM13 22h1v1h-1zM15 22h1v1h-1zM25 22h1v1h-1zM31 22h1v1h-1zM40 22h1v1h-1zM41 22h1v1h-1zM4 23h1v1h-1zM26 23h1v1h-1zM34 23h1v1h-1zM9 24h1v1h-1zM12 24h1v1h-1zM19 24h1v1h-1zM23 24h1v1h-1zM34 24h1v1h-1zM38 24h1v1h-1zM41 24h1v1h-1zM3 25h1v1h-1zM14 25h1v1h-1zM21 25h1v1h-1zM23 25h1v1h-1zM24 25h1v1h-1zM31 25h1v1h-1zM34 25h1v1h-1zM2 26h1v1h-1zM3 26h1v1h-1zM5 26h1v1h-1zM8 26h1v1h-1zM9 26h1v1h-1zM12 26h1v1h-1zM18 26h1v1h-1zM27 26h1v1h-1zM35 26h1v1h-1zM40 26h1v1h-1zM4 27h1v1h-1zM11 27h1v1h-1zM13 27h1v1h-1zM14 27h1v1h-1zM18 27h1v1h-1zM23 27h1v1h-1zM24 27h1v1h-1zM25 27h1v1h-1zM29 27h1v1h-1zM32 27h1v1h-1zM41 27h1v1h-1zM4 28h1v1h-1zM5 28h1v1h-1zM11 28h1v1h-1zM14 28h1v1h-1zM26 28h1v1h-1zM28 28h1v1h-1zM29 28h1v1h-1zM4 29h1v1h-1zM7 29h1v1h-1zM12 29h1v1h-1zM13 29h1v1h-1zM19 29h1v1h-1zM35 29h1v1h-1zM37 29h1v1h-1zM41 29h1v1h-1zM0 30h1v1h-1zM21 30h1v1h-1zM23 30h1v1h-1zM24 30h1v1h-1zM31 30h1v1h-1zM33 30h1v1h-1zM1 31h1v1h-1zM5 31h1v1h-1zM7 31h1v1h-1zM8 31h1v1h-1zM10 31h1v1h-1zM13 31h1v1h-1zM18 31h1v1h-1zM27 31h1v1h-1zM32 31h1v1h-1zM36 31h1v1h-1zM0 32h1v1h-1zM1 32h1v1h-1zM11 32h1v1h-1zM12 32h1v1h-1zM23 32h1v1h-1zM30 32h1v1h-1zM32 32h1v1h-1zM36 32h1v1h-1zM2 33h1v1h-1zM11 33h1v1h-1zM13 33h1v1h-1zM14 33h1v1h-1zM16 33h1v1h-1zM32 33h1v1h-1zM1 34h1v1h-1zM18 34h1v1h-1zM23 34h1v1h-1zM25 34h1v1h-1zM32 34h1v1h-1zM39 34h1v1h-1zM1 35h1v1h-1zM6 35h1v1h-1zM7 35h1v1h-1zM8 35h1v1h-1zM9 35h1v1h-1zM11 35h1v1h-1zM12 35h1v1h-1zM16 35h1v1h-1zM22 35h1v1h-1zM26 35h1v1h-1zM27 35h1v1h-1zM28 35h1v1h-1zM33 35h1v1h-1zM39 35h1v1h-1zM2 36h1v1h-1zM7 36h1v1h-1zM12 36h1v1h-1zM23 36h1v1h-1zM30 36h1v1h-1zM35 36h1v1h-1zM37 36h1v1h-1zM40 36h1v1h-1zM0 37h1v1h-1zM1 37h1v1h-1zM2 37h1v1h-1zM7 38h1v1h-1zM8 38h1v1h-1zM9 38h1v1h-1zM10 38h1v1h-1zM15 38h1v1h-1zM17 38h1v1h-1zM26 38h1v1h-1zM38 38h1v1h-1zM41 38h1v1h-1zM17 39h1v1h-1zM22 39h1v1h-1zM24 39h1v1h-1zM31 39h1v1h-1zM36 39h1v1h-1zM3 40h1v1h-1zM4 40h1v1h-1zM8 40h1v1h-1zM10 40h1v1h-1zM11 40h1v1h-1zM17 40h1v1h-1zM22 40h1v1h-1zM25 40h1v1h-1zM26 40h1v1h-1zM27 40h1v1h-1zM29 40h1v1h-1zM32 40h1v1h-1zM35 40h1v1h-1zM36 40h1v1h-1zM37 40h1v1h-1zM1 41h1v1h-1zM3 41h1v1h-1zM4 41h1v1h-1zM24 41h1v1h-1zM38 41h1v1h-1zM39 41h1v1h-1zM7 42h1v1h-1zM12 42h1v1h-1zM30 42h1v1h-1zM32 42h1v1h-1zM34 42h1v1h-1zM36 42h1v1h-1zM2 43h1v1h-1zM6 43h1v1h-1zM7 43h1v1h-1zM18 43h1v1h-1zM19 43h1v1h-1zM28 43h1v1h-1zM38 43h1v1h-1zM6 44h1v1h-1zM9 44h1v1h-1zM12 44h1v1h-1zM29 44h1v1h-1zM40 44h1v1h-1zM12 45h1v1h-1zM19 45h1v1h-1zM26 45h1v1h-1zM32 45h1v1h-1zM4 46h1v1h-1zM5 46h1v1h-1zM8 46h1v1h-1zM16 46h1v1h-1zM21 46h1v1h-1zM25 46h1v1h-1zM29 46h1v1h-1zM30 46h1v1h-1zM34 46h1v1h-1zM40 46h1v1h-1zM1 47h1v1h-1zM3 47h1v1h-1zM6 47h1v1h-1zM9 47h1v1h-1zM20 47h1v1h-1zM30 47h1v1h-1zM34 47h1v1h-1zM40 47h1v1h-1zM41 47h1v1h-1zM25 48h1v1h-1zM35 48h1v1h-1zM7 49h1v1h-1zM14 49h1v1h-1zM23 49h1v1h-1zM26 49h1v1h-1zM29 50h1v1h-1zM33 50h1v1h-1zM4 51h1v1h-1zM14 51h1v1h-1zM18 51h1v1h-1zM22 51h1v1h-1zM26 51h1v1h-1zM28 51h1v1h-1zM1 52h1v1h-1zM6 52h1v1h-1zM14 52h1v1h-1zM15 52h1v1h-1zM16 52h1v1h-1zM21 52h1v1h-1zM33 52h1v1h-1zM41 52h1v1h-1zM0 53h1v1h-1zM1 53h1v1h-1zM5 53h1v1h-1zM11 53h1v1h-1zM12 53h1v1h-1zM16 53h1v1h-1zM25 53h1v1h-1zM29 53h1v1h-1zM31 53h1v1h-1zM33 53h1v1h-1zM34 53h1v1h-1zM40 53h1v1h-1zM41 53h1v1h-1zM7 54h1v1h-1zM11 54h1v1h-1zM21 54h1v1h-1zM33 54h1v1h-1zM34 54h1v1h-1zM0 55h1v1h-1zM5 55h1v1h-1zM20 55h1v1h-1zM22 55h1v1h-1zM27 55h1v1h-1zM28 55h1v1h-1zM30 55h1v1h-1zM38 55h1v1h-1zM16 56h1v1h-1zM21 56h1v1h-1zM36 56h1v1h-1zM2 57h1v1h-1zM11 57h1v1h-1zM30 57h1v1h-1zM8 58h1v1h-1zM11 58h1v1h-1zM15 58h1v1h-1zM20 58h1v1h-1zM21 58h1v1h-1zM23 58h1v1h-1zM30 58h1v1h-1zM33 58h1v1h-1zM0 59h1v1h-1zM10 59h1v1h-1zM17 59h1v1h-1zM22 59h1v1h-1zM26 59h1v1h-1zM33 59h1v1h-1zM41 59h1v1h-1zM6 60h1v1h-1zM10 60h1v1h-1zM13 60h1v1h-1zM16 60h1v1h-1zM21 60h1v1h-1zM24 60h1v1h-1zM29 60h1v1h-1zM31 60h1v1h-1zM33 60h1v1h-1zM38 60h1v1h-1zM4 61h1v1h-1zM6 61h1v1h-1zM13 61h1v1h-1zM15 61h1v1h-1zM16 61h1v1h-1zM18 61h1v1h-1zM26 61h1v1h-1zM3 62h1v1h-1zM9 62h1v1h-1zM13 62h1v1h-1zM14 62h1v1h-1zM41 62h1v1h-1zM15 63h1v1h-1zM31 63h1v1h-1zM39 63h1v1h-1zM6 64h1v1h-1zM13 64h1v1h-1zM22 64h1v1h-1zM29 64h1v1h-1zM35 64h1v1h-1zM5 65h1v1h-1zM10 65h1v1h-1zM16 65h1v1h-1zM23 65h1v1h-1zM29 65h1v1h-1zM6 66h1v1h-1zM9 66h1v1h-1zM15 66h1v1h-1zM19 66h1v1h-1zM20 66h1v1h-1zM21 66h1v1h-1zM24 66h1v1h-1zM25 66h1v1h-1zM29 66h1v1h-1zM31 66h1v1h-1zM35 66h1v1h-1zM10 67h1v1h-1zM11 67h1v1h-1zM24 67h1v1h-1zM37 67h1v1h-1zM40 67h1v1h-1zM2 68h1v1h-1zM3 68h1v1h-1zM10 68h1v1h-1zM12 68h1v1h-1zM19 68h1v1h-1zM23 68h1v1h-1zM36 68h1v1h-1zM40 68h1v1h-1zM4 69h1v1h-1zM6 69h1v1h-1zM10 69h1v1h-1zM20 69h1v1h-1zM23 69h1v1h-1zM33 69h1v1h-1zM2 70h1v1h-1zM4 70h1v1h-1zM12 70h1v1h-1zM21 70h1v1h-1zM34 70h1v1h-1zM38 70h1v1h-1zM1 71h1v1h-1zM8 71h1v1h-1zM16 71h1v1h-1zM23 71h1v1h-1zM25 71h1v1h-1zM29 71h1v1h-1zM9 72h1v1h-1zM16 72h1v1h-1zM21 72h1v1h-1zM25 72h1v1h-1zM34 72h1v1h-1zM37 72h1v1h-1zM39 72h1v1h-1zM41 72h1v1h-1zM6 73h1v1h-1zM12 73h1v1h-1zM15 73h1v1h-1zM35 73h1v1h-1zM38 73h1v1h-1zM40 73h1v1h-1zM8 74h1v1h-1zM10 74h1v1h-1zM11 74h1v1h-1zM13 74h1v1h-1zM15 74h1v1h-1zM22 74h1v1h-1zM27 74h1v1h-1zM40 74h1v1h-1zM9 75h1v1h-1zM27 75h1v1h-1zM28 75h1v1h-1zM38 76h1v1h-1zM0 77h1v1h-1zM8 77h1v1h-1zM10 77h1v1h-1zM13 77h1v1h-1zM21 77h1v1h-1zM34 77h1v1h-1zM40 77h1v1h-1zM4 78h1v1h-1zM9 78h1v1h-1zM17 78h1v1h-1zM21 78h1v1h-1zM22 78h1v1h-1zM30 78h1v1h-1zM31 78h1v1h-1zM33 78h1v1h-1zM39 78h1v1h-1zM41 78h1v1h-1zM4 79h1v1h-1zM8 79h1v1h-1zM16 79h1v1h-1zM40 79h1v1h-1zM11 80h1v1h-1zM12 80h1v1h-1zM16 80h1v1h-1zM22 80h1v1h-1zM28 80h1v1h-1zM36 80h1v1h-1zM37 80h1v1h-1zM1 81h1v1h-1zM5 81h1v1h-1zM8 81h1v1h-1zM12 81h1v1h-1zM32 81h1v1h-1zM33 81h1v1h-1zM11 82h1v1h-1zM13 82h1v1h-1zM20 82h1v1h-1zM23 82h1v1h-1zM28 82h1v1h-1zM40 82h1v1h-1zM1 83h1v1h-1zM7 83h1v1h-1zM25 83h1v1h-1zM29 83h1v1h-1zM39 83h1v1h-1zM2 84h1v1h-1zM11 84h1v1h-1zM13 84h1v1h-1zM24 84h1v1h-1zM30 84h1v1h-1zM36 84h1v1h-1zM38 84h1v1h-1zM40 84h1v1h-1zM2 85h1v1h-1zM14 85h1v1h-1zM19 85h1v1h-1zM26 85h1v1h-1zM28 85h1v1h-1zM3 86h1v1h-1zM7 86h1v1h-1zM14 86h1v1h-1zM27 86h1v1h-1zM31 86h1v1h-1zM32 86h1v1h-1zM40 86h1v1h-1zM2 87h1v1h-1zM5 87h1v1h-1zM7 87h1v1h-1zM11 87h1v1h-1zM16 87h1v1h-1zM20 87h1v1h-1zM22 87h1v1h-1zM24 87h1v1h-1zM27 87h1v1h-1zM30 87h1v1h-1zM31 87h1v1h-1zM39 87h1v1h-1zM7 88h1v1h-1zM12 88h1v1h-1zM26 88h1v1h-1zM31 88h1v1h-1zM35 88h1v1h-1zM41 88h1v1h-1zM4 89h1v1h-1zM6 89h1v1h-1zM11 89h1v1h-1zM12 89h1v1h-1zM22 89h1v1h-1zM24 89h1v1h-1zM25 89h1v1h-1zM30 89h1v1h-1zM41 89h1v1h-1zM6 90h1v1h-1zM16 90h1v1h-1zM20 90h1v1h-1zM3 91h1v1h-1zM5 91h1v1h-1zM7 91h1v1h-1zM8 91h1v1h-1zM9 91h1v1h-1zM18 91h1v1h-1zM20 91h1v1h-1zM25 91h1v1h-1zM26 91h1v1h-1zM38 91h1v1h-1zM39 91h1v1h-1zM4 92h1v1h-1zM9 92h1v1h-1zM13 92h1v1h-1zM25 92h1v1h-1zM7 93h1v1h-1zM14 93h1v1h-1zM16 93h1v1h-1zM26 93h1v1h-1zM27 93h1v1h-1zM28 93h1v1h-1zM0 94h1v1h-1zM7 94h1v1h-1zM14 94h1v1h-1zM15 94h1v1h-1zM19 94h1v1h-1zM22 94h1v1h-1zM24 94h1v1h-1zM32 94h1v1h-1zM35 94h1v1h-1zM10 95h1v1h-1zM14 95h1v1h-1zM17 95h1v1h-1zM31 95h1v1h-1zM4 96h1v1h-1zM11 96h1v1h-1zM20 96h1v1h-1zM28 96h1v1h-1zM40 96h1v1h-1zM1 97h1v1h-1zM2 97h1v1h-1zM3 97h1v1h-1zM4 97h1v1h-1zM17 97h1v1h-1zM21 97h1v1h-1zM24 97h1v1h-1zM39 97h1v1h-1zM10 98h1v1h-1zM22 98h1v1h-1zM23 98h1v1h-1zM40 98h1v1h-1zM41 98h1v1h-1zM0 99h1v1h-1zM3 99h1v1h-1zM5 99h1v1h-1zM6 99h1v1h-1zM7 99h1v1h-1zM20 99h1v1h-1zM21 99h1v1h-1zM35 99h1v1h-1zM40 99h1v1h-1zM1 100h1v1h-1zM13 100h1v1h-1zM14 100h1v1h-1zM17 100h1v1h-1zM20 100h1v1h-1zM30 100h1v1h-1zM32 100h1v1h-1zM35 100h1v1h-1zM6 101h1v1h-1zM7 101h1v1h-1zM10 101h1v1h-1zM11 101h1v1h-1zM17 101h1v1h-1zM28 101h1v1h-1zM36 101h1v1h-1zM15 102h1v1h-1zM17 102h1v1h-1zM34 102h1v1h-1zM0 103h1v1h-1zM2 103h1v1h-1zM13 103h1v1h-1zM25 103h1v1h-1zM29 103h1v1h-1zM33 103h1v1h-1zM0 104h1v1h-1zM1 104h1v1h-1zM4 104h1v1h-1zM5 104h1v1h-1zM7 104h1v1h-1zM9 104h1v1h-1zM12 104h1v1h-1zM17 104h1v1h-1zM27 104h1v1h-1zM38 104h1v1h-1z" fill="#9d9d9d"/>
<path d="M0 0h1v1h-1zM12 0h1v1h-1zM19 0h1v1h-1zM24 0h1v1h-1zM25 0h1v1h-1zM26 0h1v1h-1zM34 0h1v1h-1zM35 0h1v1h-1zM40 0h1v1h-1zM1 1h1v1h-1zM5 1h1v1h-1zM6 1h1v1h-1zM10 1h1v1h-1zM13 1h1v1h-1zM20 1h1v1h-1zM21 1h1v1h-1zM32 1h1v1h-1zM38 1h1v1h-1zM10 2h1v1h-1zM14 3h1v1h-1zM15 3h1v1h-1zM24 3h1v1h-1zM35 3h1v1h-1zM37 3h1v1h-1zM3 4h1v1h-1zM4 4h1v1h-1zM24 4h1v1h-1zM27 4h1v1h-1zM38 4h1v1h-1zM8 5h1v1h-1zM11 5h1v1h-1zM22 5h1v1h-1zM33 5h1v1h-1zM1 6h1v1h-1zM3 6h1v1h-1zM9 6h1v1h-1zM11 6h1v1h-1zM25 6h1v1h-1zM30 6h1v1h-1zM16 7h1v1h-1zM18 7h1v1h-1zM24 7h1v1h-1zM39 7h1v1h-1zM3 8h1v1h-1zM4 8h1v1h-1zM6 8h1v1h-1zM18 8h1v1h-1zM21 8h1v1h-1zM31 8h1v1h-1zM34 8h1v1h-1zM39 8h1v1h-1zM9 9h1v1h-1zM14 9h1v1h-1zM18 9h1v1h-1zM28 9h1v1h-1zM36 9h1v1h-1zM41 9h1v1h-1zM7 10h1v1h-1zM13 10h1v1h-1zM39 10h1v1h-1zM3 11h1v1h-1zM4 11h1v1h-1zM8 11h1v1h-1zM14 11h1v1h-1zM16 11h1v1h-1zM17 11h1v1h-1zM34 11h1v1h-1zM35 11h1v1h-1zM39 11h1v1h-1zM11 12h1v1h-1zM17 12h1v1h-1zM39 12h1v1h-1zM40 12h1v1h-1zM9 13h1v1h-1zM5 14h1v1h-1zM15 14h1v1h-1zM24 14h1v1h-1zM35 14h1v1h-1zM3 15h1v1h-1zM23 15h1v1h-1zM24 15h1v1h-1zM28 15h1v1h-1zM29 15h1v1h-1zM31 15h1v1h-1zM38 15h1v1h-1zM5 16h1v1h-1zM12 16h1v1h-1zM15 16h1v1h-1zM21 16h1v1h-1zM23 16h1v1h-1zM25 16h1v1h-1zM26 16h1v1h-1zM38 16h1v1h-1zM29 17h1v1h-1zM34 17h1v1h-1zM41 17h1v1h-1zM13 18h1v1h-1zM19 18h1v1h-1zM20 18h1v1h-1zM32 18h1v1h-1zM38 18h1v1h-1zM3 19h1v1h-1zM5 19h1v1h-1zM19 19h1v1h-1zM26 19h1v1h-1zM31 19h1v1h-1zM33 19h1v1h-1zM40 19h1v1h-1zM28 20h1v1h-1zM1 21h1v1h-1zM6 21h1v1h-1zM9 21h1v1h-1zM17 21h1v1h-1zM20 21h1v1h-1zM31 21h1v1h-1zM32 21h1v1h-1zM39 21h1v1h-1zM6 22h1v1h-1zM16 22h1v1h-1zM35 22h1v1h-1zM6 23h1v1h-1zM9 23h1v1h-1zM20 23h1v1h-1zM21 23h1v1h-1zM27 23h1v1h-1zM41 23h1v1h-1zM2 24h1v1h-1zM6 24h1v1h-1zM18 24h1v1h-1zM20 24h1v1h-1zM33 24h1v1h-1zM40 24h1v1h-1zM0 25h1v1h-1zM4 25h1v1h-1zM11 25h1v1h-1zM30 25h1v1h-1zM6 26h1v1h-1zM13 26h1v1h-1zM16 26h1v1h-1zM23 26h1v1h-1zM5 27h1v1h-1zM7 27h1v1h-1zM12 27h1v1h-1zM2 28h1v1h-1zM10 28h1v1h-1zM33 28h1v1h-1zM37 28h1v1h-1zM6 29h1v1h-1zM11 29h1v1h-1zM16 29h1v1h-1zM17 29h1v1h-1zM20 29h1v1h-1zM28 29h1v1h-1zM29 29h1v1h-1zM32 29h1v1h-1zM34 29h1v1h-1zM36 29h1v1h-1zM3 30h1v1h-1zM4 30h1v1h-1zM32 30h1v1h-1zM41 30h1v1h-1zM6 31h1v1h-1zM9 31h1v1h-1zM12 31h1v1h-1zM19 31h1v1h-1zM20 31h1v1h-1zM34 31h1v1h-1zM41 31h1v1h-1zM8 32h1v1h-1zM13 32h1v1h-1zM14 32h1v1h-1zM37 32h1v1h-1zM3 33h1v1h-1zM12 33h1v1h-1zM19 33h1v1h-1zM24 33h1v1h-1zM28 33h1v1h-1zM40 33h1v1h-1zM14 34h1v1h-1zM37 34h1v1h-1zM41 34h1v1h-1zM2 35h1v1h-1zM15 35h1v1h-1zM30 35h1v1h-1zM3 36h1v1h-1zM8 36h1v1h-1zM10 36h1v1h-1zM13 36h1v1h-1zM15 36h1v1h-1zM24 36h1v1h-1zM26 36h1v1h-1zM31 36h1v1h-1zM6 37h1v1h-1zM8 37h1v1h-1zM11 37h1v1h-1zM14 37h1v1h-1zM20 37h1v1h-1zM34 37h1v1h-1zM22 38h1v1h-1zM27 38h1v1h-1zM31 38h1v1h-1zM32 38h1v1h-1zM10 39h1v1h-1zM21 39h1v1h-1zM41 39h1v1h-1zM14 40h1v1h-1zM33 40h1v1h-1zM41 40h1v1h-1zM5 41h1v1h-1zM12 41h1v1h-1zM23 41h1v1h-1zM33 41h1v1h-1zM36 41h1v1h-1zM40 41h1v1h-1zM1 42h1v1h-1zM18 42h1v1h-1zM22 42h1v1h-1zM39 42h1v1h-1zM12 43h1v1h-1zM13 43h1v1h-1zM34 43h1v1h-1zM40 43h1v1h-1zM4 44h1v1h-1zM11 44h1v1h-1zM14 44h1v1h-1zM26 44h1v1h-1zM39 44h1v1h-1zM8 45h1v1h-1zM25 45h1v1h-1zM41 45h1v1h-1zM3 46h1v1h-1zM6 46h1v1h-1zM20 46h1v1h-1zM22 46h1v1h-1zM28 46h1v1h-1zM31 46h1v1h-1zM37 46h1v1h-1zM38 46h1v1h-1zM0 47h1v1h-1zM15 47h1v1h-1zM18 47h1v1h-1zM2 48h1v1h-1zM17 48h1v1h-1zM24 48h1v1h-1zM36 48h1v1h-1zM8 49h1v1h-1zM9 49h1v1h-1zM15 49h1v1h-1zM25 49h1v1h-1zM29 49h1v1h-1zM37 49h1v1h-1zM0 50h1v1h-1zM14 50h1v1h-1zM24 50h1v1h-1zM31 50h1v1h-1zM32 50h1v1h-1zM41 50h1v1h-1zM3 51h1v1h-1zM7 51h1v1h-1zM17 51h1v1h-1zM33 51h1v1h-1zM34 51h1v1h-1zM35 51h1v1h-1zM40 51h1v1h-1zM11 52h1v1h-1zM2 53h1v1h-1zM8 53h1v1h-1zM21 53h1v1h-1zM32 53h1v1h-1zM4 54h1v1h-1zM19 54h1v1h-1zM27 54h1v1h-1zM35 54h1v1h-1zM2 55h1v1h-1zM12 55h1v1h-1zM21 55h1v1h-1zM36 55h1v1h-1zM37 55h1v1h-1zM0 56h1v1h-1zM4 56h1v1h-1zM10 56h1v1h-1zM22 56h1v1h-1zM26 56h1v1h-1zM38 56h1v1h-1zM22 57h1v1h-1zM23 57h1v1h-1zM35 57h1v1h-1zM37 57h1v1h-1zM5 58h1v1h-1zM10 58h1v1h-1zM13 58h1v1h-1zM25 58h1v1h-1zM27 58h1v1h-1zM34 58h1v1h-1zM7 59h1v1h-1zM21 59h1v1h-1zM23 59h1v1h-1zM24 59h1v1h-1zM29 59h1v1h-1zM35 59h1v1h-1zM8 60h1v1h-1zM11 60h1v1h-1zM20 60h1v1h-1zM7 61h1v1h-1zM9 61h1v1h-1zM17 61h1v1h-1zM29 61h1v1h-1zM2 62h1v1h-1zM15 62h1v1h-1zM20 62h1v1h-1zM23 62h1v1h-1zM24 62h1v1h-1zM25 62h1v1h-1zM28 62h1v1h-1zM39 62h1v1h-1zM4 63h1v1h-1zM5 63h1v1h-1zM18 63h1v1h-1zM19 63h1v1h-1zM22 63h1v1h-1zM24 63h1v1h-1zM29 63h1v1h-1zM36 63h1v1h-1zM38 63h1v1h-1zM41 63h1v1h-1zM1 64h1v1h-1zM37 64h1v1h-1zM38 64h1v1h-1zM40 64h1v1h-1zM31 65h1v1h-1zM32 65h1v1h-1zM34 65h1v1h-1zM36 65h1v1h-1zM41 65h1v1h-1zM18 66h1v1h-1zM28 66h1v1h-1zM30 66h1v1h-1zM36 66h1v1h-1zM37 66h1v1h-1zM39 66h1v1h-1zM3 67h1v1h-1zM23 67h1v1h-1zM28 67h1v1h-1zM5 68h1v1h-1zM13 68h1v1h-1zM18 68h1v1h-1zM21 68h1v1h-1zM22 68h1v1h-1zM31 68h1v1h-1zM41 68h1v1h-1zM8 69h1v1h-1zM9 69h1v1h-1zM16 69h1v1h-1zM36 69h1v1h-1zM39 69h1v1h-1zM7 70h1v1h-1zM8 70h1v1h-1zM16 70h1v1h-1zM5 71h1v1h-1zM9 71h1v1h-1zM15 71h1v1h-1zM24 71h1v1h-1zM0 72h1v1h-1zM1 72h1v1h-1zM2 72h1v1h-1zM4 72h1v1h-1zM11 72h1v1h-1zM40 72h1v1h-1zM3 73h1v1h-1zM20 73h1v1h-1zM9 74h1v1h-1zM18 74h1v1h-1zM23 74h1v1h-1zM25 74h1v1h-1zM34 74h1v1h-1zM38 74h1v1h-1zM10 75h1v1h-1zM13 75h1v1h-1zM24 75h1v1h-1zM26 75h1v1h-1zM3 76h1v1h-1zM5 76h1v1h-1zM8 76h1v1h-1zM12 76h1v1h-1zM34 76h1v1h-1zM39 76h1v1h-1zM11 77h1v1h-1zM29 77h1v1h-1zM30 77h1v1h-1zM10 78h1v1h-1zM12 78h1v1h-1zM16 78h1v1h-1zM24 78h1v1h-1zM34 78h1v1h-1zM36 78h1v1h-1zM40 78h1v1h-1zM1 79h1v1h-1zM23 79h1v1h-1zM41 79h1v1h-1zM2 80h1v1h-1zM9 80h1v1h-1zM10 80h1v1h-1zM24 80h1v1h-1zM29 80h1v1h-1zM32 80h1v1h-1zM40 80h1v1h-1zM3 81h1v1h-1zM11 81h1v1h-1zM18 81h1v1h-1zM21 81h1v1h-1zM35 81h1v1h-1zM37 81h1v1h-1zM38 81h1v1h-1zM0 82h1v1h-1zM17 82h1v1h-1zM22 82h1v1h-1zM31 82h1v1h-1zM33 82h1v1h-1zM38 82h1v1h-1zM4 83h1v1h-1zM11 83h1v1h-1zM19 83h1v1h-1zM23 83h1v1h-1zM14 84h1v1h-1zM25 84h1v1h-1zM41 84h1v1h-1zM9 85h1v1h-1zM31 85h1v1h-1zM37 85h1v1h-1zM0 86h1v1h-1zM9 86h1v1h-1zM16 86h1v1h-1zM19 86h1v1h-1zM24 86h1v1h-1zM33 86h1v1h-1zM39 86h1v1h-1zM1 87h1v1h-1zM19 87h1v1h-1zM21 87h1v1h-1zM35 87h1v1h-1zM36 87h1v1h-1zM6 88h1v1h-1zM8 88h1v1h-1zM23 88h1v1h-1zM33 88h1v1h-1zM36 88h1v1h-1zM8 89h1v1h-1zM10 89h1v1h-1zM21 89h1v1h-1zM23 89h1v1h-1zM33 89h1v1h-1zM0 90h1v1h-1zM5 90h1v1h-1zM14 90h1v1h-1zM18 90h1v1h-1zM26 90h1v1h-1zM29 90h1v1h-1zM30 90h1v1h-1zM31 90h1v1h-1zM33 90h1v1h-1zM35 90h1v1h-1zM12 91h1v1h-1zM29 91h1v1h-1zM33 91h1v1h-1zM36 91h1v1h-1zM41 91h1v1h-1zM0 92h1v1h-1zM3 92h1v1h-1zM17 92h1v1h-1zM21 92h1v1h-1zM32 92h1v1h-1zM38 92h1v1h-1zM40 92h1v1h-1zM18 93h1v1h-1zM22 93h1v1h-1zM25 93h1v1h-1zM34 93h1v1h-1zM41 93h1v1h-1zM30 94h1v1h-1zM37 94h1v1h-1zM41 94h1v1h-1zM8 95h1v1h-1zM11 95h1v1h-1zM19 95h1v1h-1zM23 95h1v1h-1zM36 95h1v1h-1zM40 95h1v1h-1zM2 96h1v1h-1zM8 96h1v1h-1zM14 96h1v1h-1zM32 96h1v1h-1zM5 97h1v1h-1zM8 97h1v1h-1zM13 97h1v1h-1zM16 97h1v1h-1zM28 97h1v1h-1zM32 97h1v1h-1zM9 98h1v1h-1zM17 98h1v1h-1zM25 98h1v1h-1zM29 98h1v1h-1zM1 99h1v1h-1zM11 99h1v1h-1zM13 99h1v1h-1zM24 99h1v1h-1zM37 99h1v1h-1zM5 100h1v1h-1zM8 100h1v1h-1zM1 101h1v1h-1zM3 101h1v1h-1zM12 101h1v1h-1zM19 101h1v1h-1zM24 101h1v1h-1zM32 101h1v1h-1zM35 101h1v1h-1zM38 101h1v1h-1zM5 102h1v1h-1zM19 102h1v1h-1zM21 102h1v1h-1zM26 102h1v1h-1zM27 102h1v1h-1zM29 102h1v1h-1zM31 102h1v1h-1zM35 102h1v1h-1zM40 102h1v1h-1zM18 103h1v1h-1zM22 103h1v1h-1zM26 103h1v1h-1zM39 103h1v1h-1zM8 104h1v1h-1z" fill="#b1b1b1"/>
<path d="M6 0h1v1h-1zM11 0h1v1h-1zM15 0h1v1h-1zM31 0h1v1h-1zM4 1h1v1h-1zM9 1h1v1h-1zM14 1h1v1h-1zM17 1h1v1h-1zM18 1h1v1h-1zM34 1h1v1h-1zM2 2h1v1h-1zM25 2h1v1h-1zM27 2h1v1h-1zM31 2h1v1h-1zM18 3h1v1h-1zM5 4h1v1h-1zM13 4h1v1h-1zM30 4h1v1h-1zM18 5h1v1h-1zM26 5h1v1h-1zM37 5h1v1h-1zM39 5h1v1h-1zM0 6h1v1h-1zM4 6h1v1h-1zM13 6h1v1h-1zM4 7h1v1h-1zM9 7h1v1h-1zM10 7h1v1h-1zM28 7h1v1h-1zM37 7h1v1h-1zM30 8h1v1h-1zM9 10h1v1h-1zM11 10h1v1h-1zM15 10h1v1h-1zM16 10h1v1h-1zM23 10h1v1h-1zM31 10h1v1h-1zM9 11h1v1h-1zM11 11h1v1h-1zM20 11h1v1h-1zM2 12h1v1h-1zM7 12h1v1h-1zM26 12h1v1h-1zM17 13h1v1h-1zM27 13h1v1h-1zM36 13h1v1h-1zM1 14h1v1h-1zM6 14h1v1h-1zM8 14h1v1h-1zM17 14h1v1h-1zM19 14h1v1h-1zM29 14h1v1h-1zM33 14h1v1h-1zM34 14h1v1h-1zM0 15h1v1h-1zM6 15h1v1h-1zM11 15h1v1h-1zM14 15h1v1h-1zM41 15h1v1h-1zM10 16h1v1h-1zM14 16h1v1h-1zM34 16h1v1h-1zM12 17h1v1h-1zM19 17h1v1h-1zM36 17h1v1h-1zM40 17h1v1h-1zM6 18h1v1h-1zM8 18h1v1h-1zM21 18h1v1h-1zM9 19h1v1h-1zM17 19h1v1h-1zM22 19h1v1h-1zM3 20h1v1h-1zM5 20h1v1h-1zM12 20h1v1h-1zM17 20h1v1h-1zM40 20h1v1h-1zM0 21h1v1h-1zM18 21h1v1h-1zM19 21h1v1h-1zM4 22h1v1h-1zM5 22h1v1h-1zM23 22h1v1h-1zM24 22h1v1h-1zM7 23h1v1h-1zM8 23h1v1h-1zM25 23h1v1h-1zM31 23h1v1h-1zM35 23h1v1h-1zM4 24h1v1h-1zM24 24h1v1h-1zM37 24h1v1h-1zM26 27h1v1h-1zM1 28h1v1h-1zM8 28h1v1h-1zM20 28h1v1h-1zM30 28h1v1h-1zM32 28h1v1h-1zM2 30h1v1h-1zM5 30h1v1h-1zM27 30h1v1h-1zM29 30h1v1h-1zM35 30h1v1h-1zM3 31h1v1h-1zM11 31h1v1h-1zM17 31h1v1h-1zM21 31h1v1h-1zM33 31h1v1h-1zM37 31h1v1h-1zM10 32h1v1h-1zM28 32h1v1h-1zM33 32h1v1h-1zM37 33h1v1h-1zM11 34h1v1h-1zM16 34h1v1h-1zM19 34h1v1h-1zM29 34h1v1h-1zM31 34h1v1h-1zM3 35h1v1h-1zM34 35h1v1h-1zM35 35h1v1h-1zM38 35h1v1h-1zM41 35h1v1h-1zM14 36h1v1h-1zM29 36h1v1h-1zM33 36h1v1h-1zM3 37h1v1h-1zM4 37h1v1h-1zM5 37h1v1h-1zM13 37h1v1h-1zM17 37h1v1h-1zM39 37h1v1h-1zM41 37h1v1h-1zM24 38h1v1h-1zM33 38h1v1h-1zM3 39h1v1h-1zM7 39h1v1h-1zM30 39h1v1h-1zM33 39h1v1h-1zM38 39h1v1h-1zM15 40h1v1h-1zM28 40h1v1h-1zM0 41h1v1h-1zM8 41h1v1h-1zM26 41h1v1h-1zM27 41h1v1h-1zM31 41h1v1h-1zM35 41h1v1h-1zM16 42h1v1h-1zM23 42h1v1h-1zM25 42h1v1h-1zM5 43h1v1h-1zM15 43h1v1h-1zM16 43h1v1h-1zM26 43h1v1h-1zM27 43h1v1h-1zM30 43h1v1h-1zM36 43h1v1h-1zM39 43h1v1h-1zM1 44h1v1h-1zM13 44h1v1h-1zM19 44h1v1h-1zM36 44h1v1h-1zM0 45h1v1h-1zM7 45h1v1h-1zM24 45h1v1h-1zM40 45h1v1h-1zM17 46h1v1h-1zM24 46h1v1h-1zM13 47h1v1h-1zM17 47h1v1h-1zM22 47h1v1h-1zM29 47h1v1h-1zM5 48h1v1h-1zM6 48h1v1h-1zM10 48h1v1h-1zM39 48h1v1h-1zM11 49h1v1h-1zM12 49h1v1h-1zM35 49h1v1h-1zM1 50h1v1h-1zM16 50h1v1h-1zM23 50h1v1h-1zM34 50h1v1h-1zM9 51h1v1h-1zM16 51h1v1h-1zM28 52h1v1h-1zM35 52h1v1h-1zM14 53h1v1h-1zM22 53h1v1h-1zM36 53h1v1h-1zM39 53h1v1h-1zM24 54h1v1h-1zM41 54h1v1h-1zM10 55h1v1h-1zM23 55h1v1h-1zM25 55h1v1h-1zM32 55h1v1h-1zM34 55h1v1h-1zM7 56h1v1h-1zM23 56h1v1h-1zM24 56h1v1h-1zM28 56h1v1h-1zM33 56h1v1h-1zM5 57h1v1h-1zM8 57h1v1h-1zM10 57h1v1h-1zM14 57h1v1h-1zM15 57h1v1h-1zM18 57h1v1h-1zM19 57h1v1h-1zM34 57h1v1h-1zM40 57h1v1h-1zM30 59h1v1h-1zM28 60h1v1h-1zM34 60h1v1h-1zM40 60h1v1h-1zM27 61h1v1h-1zM4 62h1v1h-1zM18 62h1v1h-1zM8 63h1v1h-1zM30 63h1v1h-1zM2 64h1v1h-1zM3 64h1v1h-1zM14 64h1v1h-1zM19 64h1v1h-1zM34 64h1v1h-1zM36 64h1v1h-1zM15 65h1v1h-1zM18 65h1v1h-1zM8 66h1v1h-1zM10 66h1v1h-1zM12 66h1v1h-1zM22 66h1v1h-1zM27 66h1v1h-1zM18 67h1v1h-1zM27 68h1v1h-1zM28 68h1v1h-1zM38 68h1v1h-1zM12 69h1v1h-1zM28 69h1v1h-1zM31 69h1v1h-1zM40 69h1v1h-1zM9 70h1v1h-1zM2 71h1v1h-1zM4 71h1v1h-1zM22 71h1v1h-1zM35 71h1v1h-1zM37 71h1v1h-1zM38 71h1v1h-1zM28 72h1v1h-1zM30 72h1v1h-1zM2 73h1v1h-1zM8 73h1v1h-1zM14 73h1v1h-1zM19 73h1v1h-1zM39 73h1v1h-1zM2 74h1v1h-1zM6 74h1v1h-1zM5 75h1v1h-1zM41 75h1v1h-1zM1 76h1v1h-1zM18 76h1v1h-1zM19 76h1v1h-1zM21 76h1v1h-1zM28 76h1v1h-1zM33 76h1v1h-1zM2 77h1v1h-1zM9 77h1v1h-1zM15 77h1v1h-1zM0 78h1v1h-1zM27 78h1v1h-1zM32 78h1v1h-1zM10 79h1v1h-1zM14 79h1v1h-1zM19 79h1v1h-1zM27 79h1v1h-1zM39 79h1v1h-1zM4 80h1v1h-1zM7 80h1v1h-1zM19 80h1v1h-1zM26 80h1v1h-1zM17 81h1v1h-1zM22 81h1v1h-1zM31 81h1v1h-1zM39 81h1v1h-1zM36 82h1v1h-1zM20 83h1v1h-1zM32 83h1v1h-1zM28 84h1v1h-1zM32 84h1v1h-1zM34 84h1v1h-1zM13 85h1v1h-1zM21 85h1v1h-1zM10 86h1v1h-1zM11 86h1v1h-1zM13 86h1v1h-1zM8 87h1v1h-1zM18 87h1v1h-1zM41 87h1v1h-1zM1 88h1v1h-1zM9 88h1v1h-1zM11 88h1v1h-1zM24 88h1v1h-1zM30 88h1v1h-1zM32 88h1v1h-1zM0 89h1v1h-1zM31 89h1v1h-1zM40 89h1v1h-1zM1 90h1v1h-1zM4 90h1v1h-1zM11 90h1v1h-1zM15 90h1v1h-1zM23 90h1v1h-1zM6 92h1v1h-1zM20 92h1v1h-1zM24 92h1v1h-1zM15 93h1v1h-1zM4 94h1v1h-1zM11 94h1v1h-1zM16 94h1v1h-1zM38 94h1v1h-1zM39 94h1v1h-1zM0 95h1v1h-1zM1 95h1v1h-1zM3 95h1v1h-1zM0 96h1v1h-1zM26 96h1v1h-1zM36 96h1v1h-1zM26 97h1v1h-1zM33 97h1v1h-1zM40 97h1v1h-1zM0 98h1v1h-1zM7 98h1v1h-1zM16 98h1v1h-1zM34 98h1v1h-1zM16 99h1v1h-1zM23 99h1v1h-1zM27 99h1v1h-1zM29 99h1v1h-1zM31 99h1v1h-1zM28 100h1v1h-1zM31 100h1v1h-1zM41 100h1v1h-1zM23 101h1v1h-1zM31 101h1v1h-1zM9 102h1v1h-1zM18 102h1v1h-1zM31 104h1v1h-1zM39 104h1v1h-1z" fill="#c4c4c4"/>
<path d="M13 0h1v1h-1zM37 0h1v1h-1zM22 1h1v1h-1zM22 2h1v1h-1zM26 2h1v1h-1zM39 2h1v1h-1zM12 4h1v1h-1zM14 4h1v1h-1zM23 4h1v1h-1zM19 5h1v1h-1zM27 5h1v1h-1zM20 6h1v1h-1zM23 6h1v1h-1zM2 7h1v1h-1zM15 7h1v1h-1zM0 8h1v1h-1zM11 8h1v1h-1zM26 9h1v1h-1zM18 10h1v1h-1zM21 10h1v1h-1zM41 10h1v1h-1zM5 11h1v1h-1zM29 12h1v1h-1zM13 13h1v1h-1zM21 13h1v1h-1zM26 13h1v1h-1zM10 14h1v1h-1zM32 14h1v1h-1zM38 14h1v1h-1zM0 16h1v1h-1zM2 16h1v1h-1zM27 17h1v1h-1zM38 17h1v1h-1zM1 18h1v1h-1zM16 19h1v1h-1zM11 20h1v1h-1zM14 20h1v1h-1zM2 21h1v1h-1zM22 21h1v1h-1zM24 21h1v1h-1zM36 21h1v1h-1zM38 21h1v1h-1zM18 22h1v1h-1zM14 23h1v1h-1zM39 23h1v1h-1zM40 23h1v1h-1zM28 24h1v1h-1zM32 24h1v1h-1zM29 25h1v1h-1zM41 25h1v1h-1zM4 26h1v1h-1zM10 27h1v1h-1zM15 27h1v1h-1zM17 27h1v1h-1zM39 27h1v1h-1zM3 28h1v1h-1zM9 28h1v1h-1zM15 28h1v1h-1zM17 28h1v1h-1zM21 29h1v1h-1zM23 29h1v1h-1zM27 29h1v1h-1zM30 29h1v1h-1zM38 29h1v1h-1zM8 30h1v1h-1zM16 30h1v1h-1zM36 30h1v1h-1zM4 31h1v1h-1zM15 31h1v1h-1zM30 31h1v1h-1zM31 31h1v1h-1zM6 32h1v1h-1zM4 33h1v1h-1zM6 33h1v1h-1zM15 33h1v1h-1zM25 33h1v1h-1zM41 33h1v1h-1zM25 37h1v1h-1zM31 37h1v1h-1zM28 38h1v1h-1zM2 39h1v1h-1zM34 39h1v1h-1zM30 41h1v1h-1zM5 42h1v1h-1zM8 42h1v1h-1zM0 44h1v1h-1zM2 44h1v1h-1zM5 45h1v1h-1zM14 46h1v1h-1zM21 47h1v1h-1zM26 48h1v1h-1zM10 49h1v1h-1zM19 49h1v1h-1zM20 49h1v1h-1zM18 50h1v1h-1zM26 50h1v1h-1zM1 51h1v1h-1zM23 51h1v1h-1zM26 53h1v1h-1zM38 54h1v1h-1zM7 55h1v1h-1zM31 55h1v1h-1zM12 56h1v1h-1zM29 57h1v1h-1zM1 58h1v1h-1zM37 58h1v1h-1zM14 59h1v1h-1zM25 59h1v1h-1zM36 59h1v1h-1zM3 60h1v1h-1zM14 60h1v1h-1zM39 60h1v1h-1zM10 62h1v1h-1zM26 62h1v1h-1zM37 63h1v1h-1zM0 64h1v1h-1zM39 65h1v1h-1zM14 66h1v1h-1zM7 67h1v1h-1zM8 67h1v1h-1zM15 67h1v1h-1zM26 67h1v1h-1zM7 68h1v1h-1zM7 69h1v1h-1zM30 69h1v1h-1zM35 69h1v1h-1zM6 70h1v1h-1zM6 71h1v1h-1zM5 72h1v1h-1zM7 72h1v1h-1zM15 72h1v1h-1zM20 72h1v1h-1zM23 72h1v1h-1zM29 72h1v1h-1zM34 73h1v1h-1zM5 74h1v1h-1zM7 74h1v1h-1zM29 74h1v1h-1zM9 76h1v1h-1zM31 76h1v1h-1zM37 76h1v1h-1zM3 77h1v1h-1zM27 77h1v1h-1zM1 80h1v1h-1zM15 80h1v1h-1zM27 81h1v1h-1zM40 81h1v1h-1zM10 82h1v1h-1zM41 82h1v1h-1zM22 84h1v1h-1zM23 84h1v1h-1zM27 84h1v1h-1zM7 85h1v1h-1zM23 85h1v1h-1zM35 85h1v1h-1zM12 86h1v1h-1zM23 86h1v1h-1zM26 86h1v1h-1zM3 87h1v1h-1zM13 87h1v1h-1zM34 88h1v1h-1zM35 89h1v1h-1zM16 91h1v1h-1zM32 91h1v1h-1zM40 91h1v1h-1zM2 92h1v1h-1zM34 92h1v1h-1zM5 93h1v1h-1zM23 93h1v1h-1zM33 93h1v1h-1zM9 94h1v1h-1zM15 95h1v1h-1zM27 95h1v1h-1zM37 96h1v1h-1zM38 96h1v1h-1zM27 97h1v1h-1zM36 97h1v1h-1zM24 98h1v1h-1zM35 98h1v1h-1zM22 99h1v1h-1zM4 100h1v1h-1zM15 100h1v1h-1zM26 101h1v1h-1zM14 102h1v1h-1zM16 102h1v1h-1zM14 103h1v1h-1zM3 104h1v1h-1zM24 104h1v1h-1zM30 104h1v1h-1z" fill="#d8d8d8"/>
<path d="M3 1h1v1h-1zM2 3h1v1h-1zM26 3h1v1h-1zM21 6h1v1h-1zM27 6h1v1h-1zM15 9h1v1h-1zM14 10h1v1h-1zM26 14h1v1h-1zM33 15h1v1h-1zM4 18h1v1h-1zM23 18h1v1h-1zM6 20h1v1h-1zM38 20h1v1h-1zM11 21h1v1h-1zM25 21h1v1h-1zM27 21h1v1h-1zM28 22h1v1h-1zM28 23h1v1h-1zM1 24h1v1h-1zM7 25h1v1h-1zM25 25h1v1h-1zM25 26h1v1h-1zM36 26h1v1h-1zM6 27h1v1h-1zM40 29h1v1h-1zM2 31h1v1h-1zM26 32h1v1h-1zM24 37h1v1h-1zM37 38h1v1h-1zM27 39h1v1h-1zM37 39h1v1h-1zM2 40h1v1h-1zM17 41h1v1h-1zM20 43h1v1h-1zM10 44h1v1h-1zM10 46h1v1h-1zM31 47h1v1h-1zM32 48h1v1h-1zM4 49h1v1h-1zM18 49h1v1h-1zM40 52h1v1h-1zM39 57h1v1h-1zM16 58h1v1h-1zM31 59h1v1h-1zM34 59h1v1h-1zM32 60h1v1h-1zM1 61h1v1h-1zM0 62h1v1h-1zM32 63h1v1h-1zM32 64h1v1h-1zM6 68h1v1h-1zM15 69h1v1h-1zM0 73h1v1h-1zM18 73h1v1h-1zM31 74h1v1h-1zM10 83h1v1h-1zM17 87h1v1h-1zM41 90h1v1h-1zM4 91h1v1h-1zM34 91h1v1h-1zM37 92h1v1h-1zM41 92h1v1h-1zM5 94h1v1h-1zM34 94h1v1h-1zM20 95h1v1h-1zM32 95h1v1h-1zM37 95h1v1h-1zM6 97h1v1h-1zM12 102h1v1h-1zM23 103h1v1h-1zM35 103h1v1h-1z" fill="#ebebeb"/>
<path d="M0 2h1v1h-1zM6 7h1v1h-1zM7 11h1v1h-1zM24 11h1v1h-1zM41 14h1v1h-1zM1 16h1v1h-1zM21 19h1v1h-1zM16 21h1v1h-1zM10 26h1v1h-1zM15 29h1v1h-1zM7 30h1v1h-1zM26 30h1v1h-1zM3 32h1v1h-1zM5 33h1v1h-1zM5 34h1v1h-1zM40 34h1v1h-1zM36 35h1v1h-1zM19 36h1v1h-1zM15 70h1v1h-1zM27 71h1v1h-1zM39 80h1v1h-1zM38 88h1v1h-1zM1 93h1v1h-1zM18 95h1v1h-1zM26 99h1v1h-1zM16 101h1v1h-1z" fill="#ffffff"/>
</g>
<rect x="933" y="106" width="66" height="14.5" fill="#8c8c8c"/>
<rect x="932.4" y="64.8" width="67.2" height="168.8" fill="none" stroke="#0000ee" stroke-width="3"/>
<rect x="1047.9" y="60.3" width="251.30" height="150.80" fill="#fff"/>
<line x1="1047.9" y1="204.30" x2="1299.2" y2="204.30" stroke="#555" stroke-width="1.1"/>
<path d="M1059.00,160.77V127.92M1063.71,173.09V141.88M1068.41,174.32V142.29M1073.12,181.71V149.68M1077.82,139.42V106.57M1082.53,137.77V106.57M1087.24,143.11V111.08M1091.94,145.17V112.31M1096.65,135.31V99.17M1101.35,115.60V79.46M1106.06,147.63V111.49M1110.77,142.70V104.92M1115.47,124.63V86.85M1120.18,146.81V109.03M1124.88,158.31V118.88M1129.59,142.29V103.69M1134.30,160.77V122.99M1139.00,138.19V101.23M1143.71,137.77V101.64M1148.41,141.47V101.23M1153.12,155.84V118.06M1157.83,147.63V113.14M1162.53,124.63V91.78M1167.24,157.90V124.22M1171.94,120.94V88.91M1176.65,99.99V67.14M1181.36,109.44V75.77M1186.06,144.76V111.08M1190.77,159.54V127.51M1195.47,155.43V125.04M1200.18,135.31V104.10M1204.89,147.63V116.42M1209.59,139.83V107.80M1214.30,142.29V110.26M1219.00,160.77V127.92M1223.71,166.11V134.08M1228.42,191.16V161.59M1233.12,144.35V114.78M1237.83,172.27V142.70M1242.53,154.61V124.22M1247.24,178.43V148.04M1251.95,191.16V161.59M1256.65,194.86V166.11M1261.36,201.84V173.91M1266.06,190.75V162.00M1270.77,191.16V161.59M1275.48,168.98V139.42M1280.18,179.66V150.09M1284.89,180.48V150.92M1289.59,138.60V109.03" stroke="#1f77b4" stroke-width="1.8" fill="none"/>
<circle cx="1059.00" cy="144.35" r="1.9" fill="#1f77b4"/>
<circle cx="1063.71" cy="157.49" r="1.9" fill="#1f77b4"/>
<circle cx="1068.41" cy="158.31" r="1.9" fill="#1f77b4"/>
<circle cx="1073.12" cy="165.70" r="1.9" fill="#1f77b4"/>
<circle cx="1077.82" cy="122.99" r="1.9" fill="#1f77b4"/>
<circle cx="1082.53" cy="122.17" r="1.9" fill="#1f77b4"/>
<circle cx="1087.24" cy="127.10" r="1.9" fill="#1f77b4"/>
<circle cx="1091.94" cy="128.74" r="1.9" fill="#1f77b4"/>
<circle cx="1096.65" cy="117.24" r="1.9" fill="#1f77b4"/>
<circle cx="1101.35" cy="97.53" r="1.9" fill="#1f77b4"/>
<circle cx="1106.06" cy="129.56" r="1.9" fill="#1f77b4"/>
<circle cx="1110.77" cy="123.81" r="1.9" fill="#1f77b4"/>
<circle cx="1115.47" cy="105.74" r="1.9" fill="#1f77b4"/>
<circle cx="1120.18" cy="127.92" r="1.9" fill="#1f77b4"/>
<circle cx="1124.88" cy="138.60" r="1.9" fill="#1f77b4"/>
<circle cx="1129.59" cy="122.99" r="1.9" fill="#1f77b4"/>
<circle cx="1134.30" cy="141.88" r="1.9" fill="#1f77b4"/>
<circle cx="1139.00" cy="119.71" r="1.9" fill="#1f77b4"/>
<circle cx="1143.71" cy="119.71" r="1.9" fill="#1f77b4"/>
<circle cx="1148.41" cy="121.35" r="1.9" fill="#1f77b4"/>
<circle cx="1153.12" cy="136.95" r="1.9" fill="#1f77b4"/>
<circle cx="1157.83" cy="130.38" r="1.9" fill="#1f77b4"/>
<circle cx="1162.53" cy="108.21" r="1.9" fill="#1f77b4"/>
<circle cx="1167.24" cy="141.06" r="1.9" fill="#1f77b4"/>
<circle cx="1171.94" cy="104.92" r="1.9" fill="#1f77b4"/>
<circle cx="1176.65" cy="83.57" r="1.9" fill="#1f77b4"/>
<circle cx="1181.36" cy="92.60" r="1.9" fill="#1f77b4"/>
<circle cx="1186.06" cy="127.92" r="1.9" fill="#1f77b4"/>
<circle cx="1190.77" cy="143.52" r="1.9" fill="#1f77b4"/>
<circle cx="1195.47" cy="140.24" r="1.9" fill="#1f77b4"/>
<circle cx="1200.18" cy="119.71" r="1.9" fill="#1f77b4"/>
<circle cx="1204.89" cy="132.03" r="1.9" fill="#1f77b4"/>
<circle cx="1209.59" cy="123.81" r="1.9" fill="#1f77b4"/>
<circle cx="1214.30" cy="126.28" r="1.9" fill="#1f77b4"/>
<circle cx="1219.00" cy="144.35" r="1.9" fill="#1f77b4"/>
<circle cx="1223.71" cy="150.09" r="1.9" fill="#1f77b4"/>
<circle cx="1228.42" cy="176.38" r="1.9" fill="#1f77b4"/>
<circle cx="1233.12" cy="129.56" r="1.9" fill="#1f77b4"/>
<circle cx="1237.83" cy="157.49" r="1.9" fill="#1f77b4"/>
<circle cx="1242.53" cy="139.42" r="1.9" fill="#1f77b4"/>
<circle cx="1247.24" cy="163.24" r="1.9" fill="#1f77b4"/>
<circle cx="1251.95" cy="176.38" r="1.9" fill="#1f77b4"/>
<circle cx="1256.65" cy="180.48" r="1.9" fill="#1f77b4"/>
<circle cx="1261.36" cy="187.87" r="1.9" fill="#1f77b4"/>
<circle cx="1266.06" cy="176.38" r="1.9" fill="#1f77b4"/>
<circle cx="1270.77" cy="176.38" r="1.9" fill="#1f77b4"/>
<circle cx="1275.48" cy="154.20" r="1.9" fill="#1f77b4"/>
<circle cx="1280.18" cy="164.88" r="1.9" fill="#1f77b4"/>
<circle cx="1284.89" cy="165.70" r="1.9" fill="#1f77b4"/>
<circle cx="1289.59" cy="123.81" r="1.9" fill="#1f77b4"/>
<polyline points="1068.41,147.63 1069.59,147.63 1070.77,147.63 1071.94,147.63 1073.12,147.63 1074.29,147.63 1075.47,147.63 1076.65,147.63 1077.82,147.63 1079.00,147.63 1080.18,147.63 1081.35,147.63 1082.53,147.63 1083.71,147.63 1084.88,147.63 1086.06,147.63 1087.24,147.63 1088.41,147.63 1089.59,147.63 1090.77,147.63 1091.94,147.63 1093.12,147.63 1094.30,147.63 1095.47,147.63 1096.65,147.63 1097.82,147.63 1099.00,147.63 1100.18,147.63 1101.35,147.63 1102.53,147.63 1103.71,147.63 1104.88,147.63 1106.06,147.63 1107.24,147.63 1108.41,147.63 1109.59,147.63 1110.77,147.63 1111.94,147.63 1113.12,147.63 1114.30,147.63 1115.47,147.63 1116.65,147.63 1117.83,147.63 1119.00,147.63 1120.18,147.63 1121.35,147.63 1122.53,147.63 1123.71,147.63 1124.88,147.63 1126.06,147.63 1127.24,147.63 1128.41,147.63 1129.59,147.63 1130.77,147.63 1131.94,147.63 1133.12,147.63 1134.30,147.63 1135.47,147.63 1136.65,147.63 1137.83,147.63 1139.00,147.63 1140.18,147.63 1141.36,147.63 1142.53,147.63 1143.71,147.63 1144.88,147.63 1146.06,147.63 1147.24,147.63 1148.41,147.63 1149.59,147.63 1150.77,147.62 1151.94,147.62 1153.12,147.60 1154.30,147.57 1155.47,147.51 1156.65,147.41 1157.83,147.22 1159.00,146.90 1160.18,146.37 1161.36,145.54 1162.53,144.28 1163.71,142.47 1164.88,139.95 1166.06,136.62 1167.24,132.41 1168.41,127.33 1169.59,121.53 1170.77,115.27 1171.94,108.95 1173.12,103.05 1174.30,98.08 1175.47,94.53 1176.65,92.76 1177.83,92.96 1179.00,95.11 1180.18,98.98 1181.36,104.17 1182.53,110.20 1183.71,116.54 1184.89,122.74 1186.06,128.41 1187.24,133.32 1188.41,137.36 1189.59,140.52 1190.77,142.88 1191.94,144.58 1193.12,145.73 1194.30,146.50 1195.47,146.98 1196.65,147.27 1197.83,147.43 1199.00,147.53 1200.18,147.58 1201.36,147.61 1202.53,147.62 1203.71,147.63 1204.89,147.63 1206.06,147.63 1207.24,147.63 1208.42,147.63 1209.59,147.63 1210.77,147.63 1211.94,147.63 1213.12,147.63 1214.30,147.63 1215.47,147.63 1216.65,147.63 1217.83,147.63 1219.00,147.63 1220.18,147.63 1221.36,147.63 1222.53,147.63 1223.71,147.63 1224.89,147.63 1226.06,147.63 1227.24,147.63 1228.42,147.63 1229.59,147.63 1230.77,147.63 1231.95,147.63 1233.12,147.63 1234.30,147.63 1235.47,147.63 1236.65,147.63 1237.83,147.63 1239.00,147.63 1240.18,147.63 1241.36,147.63 1242.53,147.63 1243.71,147.63 1244.89,147.63 1246.06,147.63 1247.24,147.63 1248.42,147.63 1249.59,147.63 1250.77,147.63 1251.95,147.63 1253.12,147.63 1254.30,147.63 1255.48,147.63 1256.65,147.63 1257.83,147.63 1259.01,147.63 1260.18,147.63 1261.36,147.63 1262.53,147.63 1263.71,147.63 1264.89,147.63 1266.06,147.63 1267.24,147.63 1268.42,147.63 1269.59,147.63 1270.77,147.63 1271.95,147.63 1273.12,147.63 1274.30,147.63 1275.48,147.63 1276.65,147.63 1277.83,147.63 1279.01,147.63 1280.18,147.63 1281.36,147.63 1282.54,147.63 1283.71,147.63 1284.89,147.63 1286.06,147.63 1287.24,147.63" fill="none" stroke="#333" stroke-width="1.6"/>
<rect x="1047.9" y="60.3" width="251.30" height="150.80" fill="none" stroke="#333" stroke-width="1"/>
<line x1="1044.4" y1="204.30" x2="1047.9" y2="204.30" stroke="#333" stroke-width="0.8"/>
<text x="1042.10" y="207.90" font-family="Liberation Sans, sans-serif" font-size="9.12" fill="#222" text-anchor="end" textLength="13.68" lengthAdjust="spacingAndGlyphs" >0.0</text>
<line x1="1044.4" y1="183.77" x2="1047.9" y2="183.77" stroke="#333" stroke-width="0.8"/>
<text x="1042.10" y="187.37" font-family="Liberation Sans, sans-serif" font-size="9.12" fill="#222" text-anchor="end" textLength="13.68" lengthAdjust="spacingAndGlyphs" >2.5</text>
<line x1="1044.4" y1="163.24" x2="1047.9" y2="163.24" stroke="#333" stroke-width="0.8"/>
<text x="1042.10" y="166.84" font-family="Liberation Sans, sans-serif" font-size="9.12" fill="#222" text-anchor="end" textLength="13.68" lengthAdjust="spacingAndGlyphs" >5.0</text>
<line x1="1044.4" y1="142.70" x2="1047.9" y2="142.70" stroke="#333" stroke-width="0.8"/>
<text x="1042.10" y="146.30" font-family="Liberation Sans, sans-serif" font-size="9.12" fill="#222" text-anchor="end" textLength="13.68" lengthAdjust="spacingAndGlyphs" >7.5</text>
<line x1="1044.4" y1="122.17" x2="1047.9" y2="122.17" stroke="#333" stroke-width="0.8"/>
<text x="1042.10" y="125.77" font-family="Liberation Sans, sans-serif" font-size="9.12" fill="#222" text-anchor="end" textLength="19.15" lengthAdjust="spacingAndGlyphs" >10.0</text>
<line x1="1044.4" y1="101.64" x2="1047.9" y2="101.64" stroke="#333" stroke-width="0.8"/>
<text x="1042.10" y="105.24" font-family="Liberation Sans, sans-serif" font-size="9.12" fill="#222" text-anchor="end" textLength="19.15" lengthAdjust="spacingAndGlyphs" >12.5</text>
<line x1="1044.4" y1="81.11" x2="1047.9" y2="81.11" stroke="#333" stroke-width="0.8"/>
<text x="1042.10" y="84.71" font-family="Liberation Sans, sans-serif" font-size="9.12" fill="#222" text-anchor="end" textLength="19.15" lengthAdjust="spacingAndGlyphs" >15.0</text>
<line x1="1059.00" y1="211.1" x2="1059.00" y2="214.6" stroke="#333" stroke-width="0.8"/>
<text x="1059.00" y="223.80" font-family="Liberation Sans, sans-serif" font-size="9.12" fill="#222" text-anchor="middle" textLength="21.89" lengthAdjust="spacingAndGlyphs" >4140</text>
<line x1="1106.06" y1="211.1" x2="1106.06" y2="214.6" stroke="#333" stroke-width="0.8"/>
<text x="1106.06" y="223.80" font-family="Liberation Sans, sans-serif" font-size="9.12" fill="#222" text-anchor="middle" textLength="21.89" lengthAdjust="spacingAndGlyphs" >4160</text>
<line x1="1153.12" y1="211.1" x2="1153.12" y2="214.6" stroke="#333" stroke-width="0.8"/>
<text x="1153.12" y="223.80" font-family="Liberation Sans, sans-serif" font-size="9.12" fill="#222" text-anchor="middle" textLength="21.89" lengthAdjust="spacingAndGlyphs" >4180</text>
<line x1="1200.18" y1="211.1" x2="1200.18" y2="214.6" stroke="#333" stroke-width="0.8"/>
<text x="1200.18" y="223.80" font-family="Liberation Sans, sans-serif" font-size="9.12" fill="#222" text-anchor="middle" textLength="21.89" lengthAdjust="spacingAndGlyphs" >4200</text>
<line x1="1247.24" y1="211.1" x2="1247.24" y2="214.6" stroke="#333" stroke-width="0.8"/>
<text x="1247.24" y="223.80" font-family="Liberation Sans, sans-serif" font-size="9.12" fill="#222" text-anchor="middle" textLength="21.89" lengthAdjust="spacingAndGlyphs" >4220</text>
<line x1="1294.30" y1="211.1" x2="1294.30" y2="214.6" stroke="#333" stroke-width="0.8"/>
<text x="1294.30" y="223.80" font-family="Liberation Sans, sans-serif" font-size="9.12" fill="#222" text-anchor="middle" textLength="21.89" lengthAdjust="spacingAndGlyphs" >4240</text>
<text x="1049.40" y="70.70" font-family="Liberation Sans, sans-serif" font-size="8.48" fill="#222" text-anchor="start" textLength="4.92" lengthAdjust="spacingAndGlyphs" >e</text>
<text x="1054.52" y="66.70" font-family="Liberation Sans, sans-serif" font-size="5.94" fill="#222" text-anchor="start" textLength="11.82" lengthAdjust="spacingAndGlyphs" >−17</text>
<text x="1067.34" y="70.70" font-family="Liberation Sans, sans-serif" font-size="8.48" fill="#222" text-anchor="start" textLength="9.82" lengthAdjust="spacingAndGlyphs" >x2</text>
<text x="1077.16" y="70.70" font-family="Liberation Sans, sans-serif" font-size="8.48" fill="#222" text-anchor="start" textLength="5.47" lengthAdjust="spacingAndGlyphs" font-style="italic" >Å</text>
<rect x="101.8" y="348.4" width="1197.60" height="83.70" fill="#fff"/>
<clipPath id="spclip"><rect x="101.8" y="348.4" width="1197.60" height="83.70"/></clipPath>
<g clip-path="url(#spclip)">
<rect x="484.7" y="348.4" width="54.6" height="83.70" fill="#bfbb00"/>
<path d="M101.8,408.2 L104.8,407.6 L107.8,408.0 L110.8,407.6 L113.8,407.6 L116.8,408.9 L119.8,409.1 L122.8,407.4 L125.8,408.7 L128.8,408.8 L131.8,407.4 L134.8,408.5 L137.8,407.8 L140.8,408.6 L143.8,408.4 L146.8,409.4 L149.8,408.6 L152.8,408.2 L155.8,408.9 L158.8,408.6 L161.8,408.8 L164.8,410.0 L167.8,408.8 L170.8,409.2 L173.8,409.8 L176.8,410.4 L179.8,408.9 L182.8,409.7 L185.8,409.3 L188.8,409.1 L191.8,409.5 L194.8,409.2 L197.8,410.2 L200.8,409.6 L203.8,410.3 L206.8,409.5 L209.8,409.7 L212.8,411.1 L215.8,411.1 L218.8,411.0 L221.8,409.9 L224.8,410.8 L227.8,410.6 L230.8,411.2 L233.8,410.9 L236.8,411.2 L239.8,411.3 L242.8,411.0 L245.8,411.1 L248.8,410.7 L251.8,411.1 L254.8,410.8 L257.8,411.0 L260.8,410.9 L263.8,411.4 L266.8,412.3 L269.8,411.3 L272.8,411.3 L275.8,411.4 L278.8,412.0 L281.8,411.9 L284.8,412.6 L287.8,411.8 L290.8,412.3 L293.8,412.8 L296.8,413.1 L299.8,412.1 L302.8,412.0 L305.8,413.3 L308.8,412.5 L311.8,413.0 L314.8,413.5 L317.8,413.3 L320.8,412.8 L323.8,412.8 L326.8,413.9 L329.8,413.2 L332.8,414.0 L335.8,413.3 L338.8,413.8 L341.8,413.2 L344.8,413.2 L347.8,413.8 L350.8,413.3 L353.8,414.2 L356.8,414.5 L359.8,414.0 L362.8,414.7 L365.8,414.6 L368.8,414.5 L371.8,414.3 L374.8,414.9 L377.8,415.1 L380.8,414.3 L383.8,414.9 L386.8,414.4 L389.8,414.5 L392.8,415.1 L395.8,415.1 L398.8,415.1 L401.8,415.0 L404.8,415.1 L407.8,415.2 L410.8,415.1 L413.8,414.8 L416.8,415.3 L419.8,415.4 L422.8,415.1 L425.8,415.6 L428.8,415.5 L431.8,414.9 L434.8,415.4 L437.8,415.4 L440.8,415.9 L443.8,415.5 L446.8,415.4 L449.8,415.9 L452.8,415.4 L455.8,415.4 L458.8,415.9 L461.8,415.5 L464.8,415.6 L467.8,415.5 L470.8,415.8 L473.8,415.5 L476.8,415.5 L479.8,416.1 L482.8,416.1 L485.8,415.6 L488.8,415.4 L491.8,416.0 L494.8,415.8 L497.8,415.7 L500.8,416.0 L503.8,416.0 L506.8,416.0 L509.8,416.0 L512.8,415.8 L515.8,416.1 L518.8,416.1 L521.8,415.8 L524.8,416.4 L527.8,416.0 L530.8,415.9 L533.8,416.2 L536.8,416.3 L539.8,415.9 L542.8,416.3 L545.8,416.4 L548.8,416.2 L551.8,416.0 L554.8,416.5 L557.8,416.4 L560.8,416.4 L563.8,416.0 L566.8,416.3 L569.8,416.0 L572.8,416.6 L575.8,416.5 L578.8,416.3 L581.8,416.1 L584.8,416.4 L587.8,416.6 L590.8,416.7 L593.8,416.4 L596.8,416.7 L599.8,416.3 L602.8,416.3 L605.8,416.7 L608.8,416.7 L611.8,416.3 L614.8,416.4 L617.8,416.3 L620.8,416.6 L623.8,416.8 L626.8,416.7 L629.8,416.3 L632.8,416.7 L635.8,416.7 L638.8,416.6 L641.8,416.6 L644.8,416.6 L647.8,416.3 L650.8,416.8 L653.8,416.9 L656.8,416.3 L659.8,416.3 L662.8,416.2 L665.8,416.6 L668.8,416.3 L671.8,416.3 L674.8,416.8 L677.8,416.4 L680.8,416.4 L683.8,416.5 L686.8,416.6 L689.8,416.8 L692.8,416.7 L695.8,416.8 L698.8,416.9 L701.8,416.6 L704.8,416.8 L707.8,416.4 L710.8,417.0 L713.8,416.4 L716.8,416.5 L719.8,416.3 L722.8,416.4 L725.8,416.4 L728.8,416.6 L731.8,417.0 L734.8,416.5 L737.8,416.9 L740.8,416.8 L743.8,416.6 L746.8,416.7 L749.8,416.7 L752.8,416.4 L755.8,416.6 L758.8,416.8 L761.8,416.9 L764.8,416.4 L767.8,416.7 L770.8,416.5 L773.8,416.8 L776.8,416.9 L779.8,416.7 L782.8,416.5 L785.8,417.0 L788.8,416.5 L791.8,416.4 L794.8,416.5 L797.8,416.5 L800.8,417.1 L803.8,416.7 L806.8,416.5 L809.8,417.1 L812.8,416.9 L815.8,416.9 L818.8,416.7 L821.8,416.8 L824.8,416.8 L827.8,416.6 L830.8,417.1 L833.8,417.1 L836.8,417.0 L839.8,417.0 L842.8,417.1 L845.8,416.5 L848.8,416.6 L851.8,417.1 L854.8,416.8 L857.8,416.9 L860.8,416.9 L863.8,416.9 L866.8,416.7 L869.8,416.8 L872.8,416.9 L875.8,417.0 L878.8,416.9 L881.8,417.1 L884.8,416.8 L887.8,416.7 L890.8,416.9 L893.8,417.1 L896.8,417.1 L899.8,416.9 L902.8,416.8 L905.8,416.7 L908.8,416.9 L911.8,416.7 L914.8,416.8 L917.8,416.9 L920.8,417.0 L923.8,416.9 L926.8,416.8 L929.8,416.9 L932.8,416.8 L935.8,416.9 L938.8,417.1 L941.8,416.9 L944.8,416.8 L947.8,417.2 L950.8,417.0 L953.8,417.0 L956.8,416.7 L959.8,416.6 L962.8,417.0 L965.8,416.7 L968.8,416.7 L971.8,417.1 L974.8,417.0 L977.8,417.2 L980.8,416.7 L983.8,416.8 L986.8,416.7 L989.8,416.8 L992.8,416.9 L995.8,416.8 L998.8,416.9 L1001.8,417.2 L1004.8,416.9 L1007.8,417.3 L1010.8,417.2 L1013.8,416.8 L1016.8,417.3 L1016.8,424.9 L1013.8,425.4 L1010.8,425.0 L1007.8,424.9 L1004.8,425.3 L1001.8,425.0 L998.8,425.3 L995.8,425.4 L992.8,425.3 L989.8,425.4 L986.8,425.5 L983.8,425.4 L980.8,425.5 L977.8,425.0 L974.8,425.2 L971.8,425.1 L968.8,425.5 L965.8,425.5 L962.8,425.2 L959.8,425.6 L956.8,425.5 L953.8,425.2 L950.8,425.2 L947.8,425.0 L944.8,425.4 L941.8,425.3 L938.8,425.1 L935.8,425.3 L932.8,425.4 L929.8,425.3 L926.8,425.4 L923.8,425.3 L920.8,425.2 L917.8,425.3 L914.8,425.4 L911.8,425.5 L908.8,425.3 L905.8,425.5 L902.8,425.4 L899.8,425.3 L896.8,425.1 L893.8,425.1 L890.8,425.3 L887.8,425.5 L884.8,425.4 L881.8,425.1 L878.8,425.3 L875.8,425.2 L872.8,425.3 L869.8,425.4 L866.8,425.5 L863.8,425.3 L860.8,425.3 L857.8,425.3 L854.8,425.4 L851.8,425.1 L848.8,425.6 L845.8,425.7 L842.8,425.1 L839.8,425.2 L836.8,425.2 L833.8,425.1 L830.8,425.1 L827.8,425.6 L824.8,425.4 L821.8,425.4 L818.8,425.5 L815.8,425.3 L812.8,425.3 L809.8,425.1 L806.8,425.7 L803.8,425.5 L800.8,425.1 L797.8,425.7 L794.8,425.7 L791.8,425.8 L788.8,425.7 L785.8,425.2 L782.8,425.7 L779.8,425.5 L776.8,425.3 L773.8,425.4 L770.8,425.7 L767.8,425.5 L764.8,425.8 L761.8,425.3 L758.8,425.4 L755.8,425.6 L752.8,425.8 L749.8,425.5 L746.8,425.5 L743.8,425.6 L740.8,425.4 L737.8,425.3 L734.8,425.7 L731.8,425.2 L728.8,425.6 L725.8,425.8 L722.8,425.8 L719.8,425.9 L716.8,425.7 L713.8,425.8 L710.8,425.2 L707.8,425.8 L704.8,425.4 L701.8,425.6 L698.8,425.3 L695.8,425.4 L692.8,425.5 L689.8,425.4 L686.8,425.6 L683.8,425.7 L680.8,425.8 L677.8,425.8 L674.8,425.4 L671.8,425.9 L668.8,425.9 L665.8,425.6 L662.8,426.0 L659.8,425.9 L656.8,425.9 L653.8,425.3 L650.8,425.4 L647.8,425.9 L644.8,425.6 L641.8,425.6 L638.8,425.6 L635.8,425.5 L632.8,425.5 L629.8,425.9 L626.8,425.5 L623.8,425.4 L620.8,425.6 L617.8,425.9 L614.8,425.8 L611.8,425.9 L608.8,425.5 L605.8,425.5 L602.8,425.9 L599.8,425.9 L596.8,425.5 L593.8,425.8 L590.8,425.5 L587.8,425.6 L584.8,425.8 L581.8,426.1 L578.8,425.9 L575.8,425.7 L572.8,425.6 L569.8,426.2 L566.8,425.9 L563.8,426.2 L560.8,425.8 L557.8,425.8 L554.8,425.7 L551.8,426.2 L548.8,426.0 L545.8,425.8 L542.8,425.9 L539.8,426.3 L536.8,425.9 L533.8,426.0 L530.8,426.3 L527.8,426.2 L524.8,425.8 L521.8,426.4 L518.8,426.1 L515.8,426.1 L512.8,426.4 L509.8,426.2 L506.8,426.2 L503.8,426.2 L500.8,426.2 L497.8,426.5 L494.8,426.4 L491.8,426.2 L488.8,426.8 L485.8,426.6 L482.8,426.1 L479.8,426.1 L476.8,426.7 L473.8,426.7 L470.8,426.4 L467.8,426.7 L464.8,426.6 L461.8,426.7 L458.8,426.3 L455.8,426.8 L452.8,426.8 L449.8,426.3 L446.8,426.8 L443.8,426.7 L440.8,426.3 L437.8,426.8 L434.8,426.8 L431.8,427.3 L428.8,426.7 L425.8,426.6 L422.8,427.1 L419.8,426.8 L416.8,426.9 L413.8,427.4 L410.8,427.1 L407.8,427.0 L404.8,427.1 L401.8,427.2 L398.8,427.1 L395.8,427.1 L392.8,427.1 L389.8,427.7 L386.8,427.8 L383.8,427.3 L380.8,427.9 L377.8,427.1 L374.8,427.3 L371.8,427.9 L368.8,427.7 L365.8,427.6 L362.8,427.5 L359.8,428.2 L356.8,427.7 L353.8,428.0 L350.8,428.9 L347.8,428.4 L344.8,429.0 L341.8,429.0 L338.8,428.4 L335.8,428.9 L332.8,428.2 L329.8,429.0 L326.8,428.3 L323.8,429.4 L320.8,429.4 L317.8,428.9 L314.8,428.7 L311.8,429.2 L308.8,429.7 L305.8,428.9 L302.8,430.2 L299.8,430.1 L296.8,429.1 L293.8,429.4 L290.8,429.9 L287.8,430.4 L284.8,429.6 L281.8,430.3 L278.8,430.2 L275.8,430.8 L272.8,430.9 L269.8,430.9 L266.8,429.9 L263.8,430.8 L260.8,431.3 L257.8,431.2 L254.8,431.4 L251.8,431.1 L248.8,431.5 L245.8,431.1 L242.8,431.2 L239.8,430.9 L236.8,431.0 L233.8,431.3 L230.8,431.0 L227.8,431.6 L224.8,431.4 L221.8,432.3 L218.8,431.2 L215.8,431.1 L212.8,431.1 L209.8,432.5 L206.8,432.7 L203.8,431.9 L200.8,432.6 L197.8,432.0 L194.8,433.0 L191.8,432.7 L188.8,433.1 L185.8,432.9 L182.8,432.5 L179.8,433.3 L176.8,431.8 L173.8,432.4 L170.8,433.0 L167.8,433.4 L164.8,432.2 L161.8,433.4 L158.8,433.6 L155.8,433.3 L152.8,434.0 L149.8,433.6 L146.8,432.8 L143.8,433.8 L140.8,433.6 L137.8,434.4 L134.8,433.7 L131.8,434.8 L128.8,433.4 L125.8,433.5 L122.8,434.8 L119.8,433.1 L116.8,433.3 L113.8,434.6 L110.8,434.6 L107.8,434.2 L104.8,434.6 L101.8,434.0Z" fill="#b4b4b4" opacity="0.85"/>
<path d="M1028.8,417.2 L1031.8,417.3 L1034.8,416.8 L1037.8,417.3 L1040.8,416.8 L1043.8,416.9 L1046.8,416.8 L1049.8,416.7 L1052.8,417.0 L1055.8,416.8 L1058.8,417.3 L1061.8,416.9 L1064.8,417.0 L1067.8,416.9 L1070.8,417.3 L1073.8,416.9 L1076.8,416.8 L1079.8,417.3 L1082.8,417.2 L1085.8,417.0 L1088.8,416.9 L1091.8,417.2 L1094.8,417.3 L1097.8,417.2 L1100.8,417.0 L1103.8,416.9 L1106.8,417.2 L1109.8,417.2 L1112.8,417.2 L1115.8,417.2 L1118.8,417.2 L1121.8,417.4 L1124.8,417.1 L1127.8,416.8 L1130.8,417.2 L1133.8,417.0 L1136.8,417.3 L1139.8,417.0 L1142.8,417.0 L1145.8,417.0 L1148.8,417.1 L1151.8,417.2 L1154.8,417.1 L1157.8,416.9 L1160.8,417.4 L1163.8,417.4 L1166.8,417.0 L1169.8,416.9 L1172.8,417.2 L1175.8,417.2 L1178.8,417.0 L1181.8,417.4 L1184.8,417.3 L1187.8,417.4 L1190.8,417.1 L1193.8,417.3 L1196.8,417.4 L1199.8,417.1 L1202.8,416.9 L1205.8,417.3 L1208.8,417.1 L1211.8,417.3 L1214.8,417.0 L1217.8,417.2 L1220.8,417.4 L1223.8,417.4 L1226.8,417.5 L1229.8,417.3 L1232.8,417.3 L1235.8,417.4 L1238.8,417.3 L1241.8,417.4 L1244.8,417.1 L1247.8,417.5 L1250.8,417.0 L1253.8,417.3 L1256.8,417.2 L1259.8,417.3 L1262.8,417.1 L1265.8,417.1 L1268.8,417.2 L1271.8,417.3 L1274.8,417.2 L1277.8,417.1 L1280.8,417.4 L1283.8,417.2 L1286.8,417.0 L1289.8,417.3 L1289.8,424.9 L1286.8,425.2 L1283.8,425.0 L1280.8,424.8 L1277.8,425.1 L1274.8,425.0 L1271.8,424.9 L1268.8,425.0 L1265.8,425.1 L1262.8,425.1 L1259.8,424.9 L1256.8,425.0 L1253.8,424.9 L1250.8,425.2 L1247.8,424.7 L1244.8,425.1 L1241.8,424.8 L1238.8,424.9 L1235.8,424.8 L1232.8,424.9 L1229.8,424.9 L1226.8,424.7 L1223.8,424.8 L1220.8,424.8 L1217.8,425.0 L1214.8,425.2 L1211.8,424.9 L1208.8,425.1 L1205.8,424.9 L1202.8,425.3 L1199.8,425.1 L1196.8,424.8 L1193.8,424.9 L1190.8,425.1 L1187.8,424.8 L1184.8,424.9 L1181.8,424.8 L1178.8,425.2 L1175.8,425.0 L1172.8,425.0 L1169.8,425.3 L1166.8,425.2 L1163.8,424.8 L1160.8,424.8 L1157.8,425.3 L1154.8,425.1 L1151.8,425.0 L1148.8,425.1 L1145.8,425.2 L1142.8,425.2 L1139.8,425.2 L1136.8,424.9 L1133.8,425.2 L1130.8,425.0 L1127.8,425.4 L1124.8,425.1 L1121.8,424.8 L1118.8,425.0 L1115.8,425.0 L1112.8,425.0 L1109.8,425.0 L1106.8,425.0 L1103.8,425.3 L1100.8,425.2 L1097.8,425.0 L1094.8,424.9 L1091.8,425.0 L1088.8,425.3 L1085.8,425.2 L1082.8,425.0 L1079.8,424.9 L1076.8,425.4 L1073.8,425.3 L1070.8,424.9 L1067.8,425.3 L1064.8,425.2 L1061.8,425.3 L1058.8,424.9 L1055.8,425.4 L1052.8,425.2 L1049.8,425.5 L1046.8,425.4 L1043.8,425.3 L1040.8,425.4 L1037.8,424.9 L1034.8,425.4 L1031.8,424.9 L1028.8,425.0Z" fill="#b4b4b4" opacity="0.85"/>
<ellipse cx="1292" cy="421.1" rx="6" ry="4" fill="#b4b4b4" opacity="0.85"/>
<line x1="101.8" y1="421.10" x2="1299.4" y2="421.10" stroke="#7a7a7a" stroke-width="2"/>
<rect x="125.5" y="348.4" width="12.00" height="83.70" fill="#a3a3a3" stroke="#333" stroke-width="1"/>
<line x1="125.50" y1="348.80" x2="137.50" y2="338.24" stroke="#222" stroke-width="1"/>
<line x1="125.50" y1="372.30" x2="137.50" y2="361.74" stroke="#222" stroke-width="1"/>
<line x1="125.50" y1="395.80" x2="137.50" y2="385.24" stroke="#222" stroke-width="1"/>
<line x1="125.50" y1="419.30" x2="137.50" y2="408.74" stroke="#222" stroke-width="1"/>
<line x1="125.50" y1="442.80" x2="137.50" y2="432.24" stroke="#222" stroke-width="1"/>
<rect x="1258.8" y="348.4" width="6.60" height="83.70" fill="#a3a3a3" stroke="#333" stroke-width="1"/>
<line x1="1258.80" y1="348.80" x2="1265.40" y2="342.99" stroke="#222" stroke-width="1"/>
<line x1="1258.80" y1="372.30" x2="1265.40" y2="366.49" stroke="#222" stroke-width="1"/>
<line x1="1258.80" y1="395.80" x2="1265.40" y2="389.99" stroke="#222" stroke-width="1"/>
<line x1="1258.80" y1="419.30" x2="1265.40" y2="413.49" stroke="#222" stroke-width="1"/>
<line x1="1258.80" y1="442.80" x2="1265.40" y2="436.99" stroke="#222" stroke-width="1"/>
<polyline points="102.1,409.3 103.9,395.6 105.7,381.4 107.9,419.3 110.0,404.3 111.4,426.4 113.6,411.4 115.0,421.4 116.4,407.9 118.2,399.8 119.3,392.1 121.4,397.9 122.9,399.3 124.3,406.1 125.7,412.1 126.9,402.6 128.6,392.9 130.7,412.1 132.9,405.0 135.0,420.7 136.5,404.9 137.9,386.4 139.3,408.4 141.4,432.1 143.2,419.9 145.7,405.0 147.7,415.8 149.3,430.7 150.0,410.7 151.8,422.0 152.9,429.3 155.0,412.1 157.1,422.1 158.6,415.0 161.6,407.3 164.3,398.6 165.4,405.4 167.1,416.4 168.6,408.1 170.0,403.6 171.9,411.0 174.3,420.7 175.7,422.7 177.9,425.0 180.0,402.1 182.1,425.0 184.3,393.6 187.1,412.2 190.0,427.9 191.4,417.0 192.9,405.0 194.3,419.3 195.7,432.1 197.1,408.3 198.6,386.4 200.0,412.1 202.1,401.4 204.0,410.4 205.0,415.0 207.1,398.6 208.8,407.7 210.0,415.0 211.3,406.7 212.9,400.7 214.1,399.2 215.7,401.4 217.4,404.2 218.6,407.9 220.3,418.8 221.4,430.7 223.9,416.9 225.7,400.0 227.1,413.6 228.9,408.7 231.4,406.4 233.2,418.4 234.3,430.7 236.1,421.0 237.1,412.1 238.6,422.0 240.7,430.7 242.9,412.1 245.2,409.0 247.1,407.9 249.3,412.1 250.7,406.4 252.9,432.1 255.0,412.1 257.1,409.3 258.2,404.3 260.0,400.7 262.1,419.3 264.3,402.6 265.7,383.6 266.8,398.9 268.6,416.4 269.7,410.9 271.4,409.3 273.1,409.3 274.3,412.1 275.8,406.9 277.1,402.1 279.3,409.3 280.5,406.7 282.1,402.1 283.6,403.5 285.7,403.6 287.6,397.2 290.0,391.4 291.2,403.6 292.9,417.9 295.4,418.5 297.1,416.4 298.4,421.0 300.0,422.1 301.2,413.1 302.9,405.0 305.0,410.7 307.1,424.3 308.9,417.4 310.0,409.3 312.1,413.6 314.3,403.6 315.4,413.6 317.1,419.3 318.3,416.1 320.0,415.0 321.6,405.7 322.9,397.9 324.1,400.3 325.7,406.4 326.8,413.2 328.6,419.3 329.8,414.7 331.4,409.3 333.6,420.7 335.7,407.9 337.0,405.2 338.6,402.9 340.7,416.4 342.5,404.2 343.6,392.1 345.7,412.1 347.1,399.3 348.6,405.2 350.0,407.9 351.5,411.3 353.6,417.9 355.0,405.0 357.1,411.4 358.6,415.0 360.5,416.5 362.9,420.7 365.2,415.5 367.1,406.4 368.3,414.8 370.0,419.3 371.7,415.5 372.9,410.7 374.2,414.0 375.7,420.7 376.8,416.3 378.6,407.9 379.8,416.6 381.4,423.6 382.7,414.3 384.3,402.1 386.1,393.0 387.9,385.7 389.0,396.7 390.7,405.7 392.2,405.6 394.3,407.9 395.8,405.8 397.1,400.7 398.7,397.2 400.0,395.7 401.8,398.7 402.9,404.3 404.6,400.1 407.1,397.9 408.5,398.8 410.0,403.6 411.2,400.9 412.9,399.3 414.3,399.8 415.7,403.6 417.7,401.7 420.0,396.4 422.2,391.8 423.6,385.7 425.5,402.9 427.1,419.3 428.6,399.3 430.4,400.1 432.9,405.0 434.3,392.9 436.4,413.6 437.8,406.1 440.0,395.0 441.6,402.0 442.9,405.0 443.9,401.3 445.7,396.4 447.1,398.5 448.6,398.6 449.9,402.6 451.4,402.1 453.6,389.3 454.7,398.8 456.4,407.9 458.6,396.4 460.2,400.3 461.4,400.7 463.8,405.2 465.7,407.9 467.7,401.8 469.3,392.1 471.4,403.6 472.7,399.4 474.3,393.6 476.7,397.3 478.6,397.9 479.9,400.6 481.4,400.7 483.9,404.6 485.7,407.9 487.1,393.6 488.7,393.8 490.0,395.0 491.5,391.2 492.9,386.4 494.7,391.3 497.1,395.0 499.0,398.8 500.0,399.3 502.1,393.6 504.3,395.0 506.4,397.9 508.6,390.7 510.0,399.3 512.1,381.4 514.3,393.6 515.7,400.7 517.3,397.0 518.6,394.3 520.2,395.4 521.4,395.7 523.2,405.1 525.0,411.4 526.4,397.9 528.6,402.1 530.0,400.7 531.5,409.0 533.6,415.0 534.6,411.2 536.4,406.4 537.8,406.0 539.3,407.9 540.7,395.7 542.1,405.7 543.6,384.3 545.7,406.4 547.3,412.1 548.6,417.9 550.1,408.3 551.4,395.0 552.7,397.8 554.3,405.0 555.6,401.5 557.1,396.4 559.3,412.1 560.5,401.4 562.1,393.6 562.9,411.4 564.6,401.4 565.7,390.0 567.9,402.1 569.2,407.8 570.7,410.0 572.4,405.4 574.3,399.3 575.5,403.3 577.1,407.9 578.8,407.5 580.0,403.6 582.1,392.1 584.3,406.4 585.7,390.0 587.9,395.7 589.9,395.6 591.4,396.4 592.9,388.5 594.3,382.1 596.4,377.1 598.6,387.9 600.7,397.9 601.9,390.3 603.6,382.9 605.6,392.6 607.1,399.3 608.7,396.3 610.0,389.3 611.3,384.6 612.9,382.9 614.2,384.0 615.7,387.1 616.9,386.4 618.6,386.4 620.1,389.3 621.4,392.1 622.9,387.9 625.0,402.9 626.6,398.3 628.6,390.7 630.4,390.5 631.4,390.7 632.9,399.3 634.3,385.0 636.8,390.1 640.0,399.3 641.7,393.7 642.9,392.1 644.3,397.9 645.9,391.4 647.1,384.3 648.4,389.5 650.0,392.1 651.8,387.3 654.3,385.7 655.7,387.9 657.1,394.3 659.5,386.3 661.4,380.7 663.3,381.6 665.7,386.4 667.2,390.8 668.6,395.7 670.1,392.5 671.4,387.9 673.1,387.4 674.3,382.9 676.6,376.2 678.6,372.1 680.3,376.4 682.1,383.6 683.5,380.6 685.7,377.9 687.3,377.9 688.6,380.7 690.2,379.3 692.1,379.3 694.1,375.1 695.7,370.7 697.2,373.3 698.6,373.6 700.0,376.4 701.4,383.6 702.8,380.9 704.3,375.7 706.8,374.3 708.6,376.4 711.4,383.5 713.6,388.6 715.1,385.2 717.1,382.1 718.7,378.9 720.0,372.1 721.3,376.0 722.9,379.3 725.0,383.6 727.8,377.0 730.0,367.9 732.1,372.1 733.9,365.2 735.0,358.6 737.1,370.7 739.0,367.6 740.7,367.1 742.9,375.7 745.0,370.0 747.1,361.4 749.3,382.1 750.9,377.5 752.1,370.0 753.7,375.6 755.0,379.3 756.6,376.8 758.6,370.7 760.4,369.2 761.4,363.6 762.9,368.1 764.3,370.0 765.7,363.6 767.7,371.4 770.0,375.7 772.1,368.6 774.2,369.0 775.7,370.7 776.8,368.7 778.6,367.1 780.0,372.3 781.4,375.0 782.9,361.4 784.3,365.4 785.7,373.6 787.4,367.7 788.6,365.7 791.0,368.9 792.9,375.0 794.9,369.8 797.1,362.1 799.0,365.6 801.4,372.1 803.6,377.4 805.7,380.7 806.4,366.4 808.5,369.4 810.0,370.7 811.8,369.3 812.9,367.9 814.3,380.0 816.1,375.7 817.1,375.0 819.8,370.1 822.9,365.0 824.1,367.4 825.7,367.9 827.3,371.2 828.6,374.3 830.3,374.2 831.4,373.6 833.1,369.8 835.0,367.1 837.1,375.0 839.6,375.0 841.4,371.4 843.3,376.5 845.7,378.6 848.2,379.0 850.0,379.3 851.4,390.7 852.9,385.8 854.3,383.6 855.7,385.7 857.1,387.9 858.7,383.3 860.0,382.9 861.4,390.7 863.9,387.2 865.7,383.6 867.9,367.9 869.6,373.5 871.4,376.4 872.9,370.7 875.1,370.7 877.1,370.7 878.7,372.4 880.0,377.9 882.2,376.8 884.3,376.4 886.8,377.6 888.6,375.0 889.8,377.0 891.4,379.3 893.3,377.6 895.7,376.4 898.1,376.4 900.0,372.9 902.1,370.3 904.3,369.3 905.5,372.7 907.1,375.0 908.6,372.1 911.1,374.1 912.9,379.3 915.2,375.4 917.1,375.7 919.0,371.3 921.4,369.3 923.0,374.6 924.3,381.4 925.6,376.6 927.1,370.7 928.3,373.9 930.0,375.0 932.2,369.0 935.0,362.9 936.2,369.4 937.9,378.6 940.4,379.4 942.9,380.7 945.0,370.7 946.3,368.2 947.9,366.4 949.3,371.7 950.7,380.0 951.9,376.3 953.6,371.4 955.1,375.5 956.4,379.3 958.6,360.0 960.7,373.6 963.9,379.8 966.4,385.0 968.5,378.8 970.0,375.0 971.6,377.8 972.9,377.9 974.6,376.3 975.7,376.4 977.7,384.0 980.0,387.9 981.2,382.2 982.9,372.1 984.6,372.0 985.7,375.0 987.9,372.1 989.4,380.3 991.4,386.4 992.7,382.5 994.3,382.1 997.4,379.3 1000.0,377.1 1001.7,377.3 1002.9,380.7 1004.2,384.7 1005.7,387.1 1006.8,380.8 1008.6,377.1 1010.9,381.8 1012.9,382.9 1014.7,379.0 1015.7,378.6 1017.1,383.3 1018.6,385.7 1020.0,385.1 1021.4,382.9 1023.3,381.7 1025.7,384.3 1027.5,384.8 1030.0,389.3 1032.2,383.6 1034.3,377.9 1035.8,380.6 1037.1,386.4 1038.3,382.3 1040.0,380.7 1041.7,380.4 1042.9,375.7 1044.6,373.6 1045.7,375.0 1046.8,383.4 1048.6,387.9 1050.0,386.2 1051.4,382.1 1052.9,389.3 1054.9,386.3 1057.1,383.6 1058.6,384.0 1060.0,385.0 1061.5,381.1 1062.9,381.4 1064.4,386.5 1065.7,388.6 1066.9,383.0 1068.6,377.9 1070.9,379.6 1072.9,382.1 1074.8,377.5 1077.1,375.7 1078.6,378.9 1080.0,386.4 1082.1,382.8 1083.6,376.4 1085.7,385.0 1087.9,400.7 1090.0,393.6 1092.3,393.7 1094.3,390.7 1095.7,394.3 1098.0,388.5 1100.0,383.6 1101.5,381.4 1102.9,379.3 1104.7,379.2 1105.7,376.4 1106.9,383.2 1108.6,386.4 1110.6,391.9 1112.1,395.0 1114.2,381.4 1115.7,368.6 1117.5,371.7 1118.6,371.4 1120.9,375.8 1122.9,377.9 1124.5,374.6 1125.7,372.1 1127.3,364.5 1128.6,360.7 1129.9,363.8 1131.4,367.1 1132.5,368.7 1134.3,371.4 1135.8,370.2 1137.1,367.9 1139.1,368.4 1141.4,365.0 1143.0,370.7 1144.3,377.9 1145.8,384.2 1147.1,390.0 1149.3,377.7 1151.4,366.4 1153.3,369.6 1154.3,371.4 1156.2,366.5 1157.9,359.3 1160.0,362.9 1161.4,370.7 1164.4,366.4 1167.1,360.0 1168.4,360.6 1170.0,362.1 1171.1,362.2 1172.9,365.0 1175.0,357.9 1176.3,356.8 1177.9,359.3 1180.2,368.6 1182.9,374.3 1185.8,365.4 1188.6,356.4 1190.4,363.2 1191.4,369.3 1193.3,367.0 1194.3,363.6 1197.4,360.3 1200.0,360.7 1202.9,361.1 1205.7,359.3 1206.8,366.2 1208.6,369.3 1210.4,360.9 1212.9,352.9 1214.0,358.2 1215.7,363.6 1217.2,359.1 1218.6,358.6 1220.4,361.4 1221.4,365.0 1222.9,362.6 1224.3,359.3 1225.6,364.1 1227.1,370.7 1228.7,367.4 1230.0,363.6 1232.1,370.0 1234.5,362.4 1237.1,352.9 1239.3,362.9 1240.9,362.9 1242.9,367.1 1245.5,358.3 1248.6,353.6 1249.7,357.2 1251.4,358.6 1253.1,363.5 1255.0,365.0 1257.1,372.1 1258.8,363.0 1260.0,357.9 1262.5,360.5 1264.3,359.3 1266.4,366.4 1269.3,370.0 1271.0,364.2 1272.9,358.6 1274.7,359.9 1275.7,363.6 1277.5,361.2 1279.3,355.0 1281.2,360.9 1282.9,367.1 1285.4,363.5 1287.1,357.1 1289.0,363.3 1290.7,372.9 1292.6,366.6 1294.3,360.7 1295.5,357.0 1297.1,357.1 1298.6,360.1 1300.0,366.4" fill="none" stroke="#0000ff" stroke-width="1.6" stroke-linejoin="round"/>
<line x1="512.6" y1="348.4" x2="512.6" y2="432.1" stroke="#000" stroke-width="1" stroke-dasharray="2.5,1.5"/>
<line x1="734.7" y1="348.4" x2="734.7" y2="432.1" stroke="#444" stroke-width="1.1" stroke-dasharray="4,2.5"/>
<line x1="872.9" y1="348.4" x2="872.9" y2="432.1" stroke="#444" stroke-width="1.1" stroke-dasharray="4,2.5"/>
<line x1="1128.5" y1="348.4" x2="1128.5" y2="432.1" stroke="#444" stroke-width="1.1" stroke-dasharray="4,2.5"/>
</g>
<rect x="101.8" y="348.4" width="1197.60" height="83.70" fill="none" stroke="#333" stroke-width="1.1"/>
<line x1="105.30" y1="432.1" x2="105.30" y2="435.6" stroke="#333" stroke-width="0.8"/>
<text x="105.30" y="447.00" font-family="Liberation Sans, sans-serif" font-size="10.18" fill="#222" text-anchor="middle" textLength="24.43" lengthAdjust="spacingAndGlyphs" >3500</text>
<line x1="164.24" y1="432.1" x2="164.24" y2="435.6" stroke="#333" stroke-width="0.8"/>
<text x="164.24" y="447.00" font-family="Liberation Sans, sans-serif" font-size="10.18" fill="#222" text-anchor="middle" textLength="24.43" lengthAdjust="spacingAndGlyphs" >3600</text>
<line x1="223.18" y1="432.1" x2="223.18" y2="435.6" stroke="#333" stroke-width="0.8"/>
<text x="223.18" y="447.00" font-family="Liberation Sans, sans-serif" font-size="10.18" fill="#222" text-anchor="middle" textLength="24.43" lengthAdjust="spacingAndGlyphs" >3700</text>
<line x1="282.12" y1="432.1" x2="282.12" y2="435.6" stroke="#333" stroke-width="0.8"/>
<text x="282.12" y="447.00" font-family="Liberation Sans, sans-serif" font-size="10.18" fill="#222" text-anchor="middle" textLength="24.43" lengthAdjust="spacingAndGlyphs" >3800</text>
<line x1="341.06" y1="432.1" x2="341.06" y2="435.6" stroke="#333" stroke-width="0.8"/>
<text x="341.06" y="447.00" font-family="Liberation Sans, sans-serif" font-size="10.18" fill="#222" text-anchor="middle" textLength="24.43" lengthAdjust="spacingAndGlyphs" >3900</text>
<line x1="400.00" y1="432.1" x2="400.00" y2="435.6" stroke="#333" stroke-width="0.8"/>
<text x="400.00" y="447.00" font-family="Liberation Sans, sans-serif" font-size="10.18" fill="#222" text-anchor="middle" textLength="24.43" lengthAdjust="spacingAndGlyphs" >4000</text>
<line x1="458.94" y1="432.1" x2="458.94" y2="435.6" stroke="#333" stroke-width="0.8"/>
<text x="458.94" y="447.00" font-family="Liberation Sans, sans-serif" font-size="10.18" fill="#222" text-anchor="middle" textLength="24.43" lengthAdjust="spacingAndGlyphs" >4100</text>
<line x1="517.88" y1="432.1" x2="517.88" y2="435.6" stroke="#333" stroke-width="0.8"/>
<text x="517.88" y="447.00" font-family="Liberation Sans, sans-serif" font-size="10.18" fill="#222" text-anchor="middle" textLength="24.43" lengthAdjust="spacingAndGlyphs" >4200</text>
<line x1="576.82" y1="432.1" x2="576.82" y2="435.6" stroke="#333" stroke-width="0.8"/>
<text x="576.82" y="447.00" font-family="Liberation Sans, sans-serif" font-size="10.18" fill="#222" text-anchor="middle" textLength="24.43" lengthAdjust="spacingAndGlyphs" >4300</text>
<line x1="635.76" y1="432.1" x2="635.76" y2="435.6" stroke="#333" stroke-width="0.8"/>
<text x="635.76" y="447.00" font-family="Liberation Sans, sans-serif" font-size="10.18" fill="#222" text-anchor="middle" textLength="24.43" lengthAdjust="spacingAndGlyphs" >4400</text>
<line x1="694.70" y1="432.1" x2="694.70" y2="435.6" stroke="#333" stroke-width="0.8"/>
<text x="694.70" y="447.00" font-family="Liberation Sans, sans-serif" font-size="10.18" fill="#222" text-anchor="middle" textLength="24.43" lengthAdjust="spacingAndGlyphs" >4500</text>
<line x1="753.64" y1="432.1" x2="753.64" y2="435.6" stroke="#333" stroke-width="0.8"/>
<text x="753.64" y="447.00" font-family="Liberation Sans, sans-serif" font-size="10.18" fill="#222" text-anchor="middle" textLength="24.43" lengthAdjust="spacingAndGlyphs" >4600</text>
<line x1="812.58" y1="432.1" x2="812.58" y2="435.6" stroke="#333" stroke-width="0.8"/>
<text x="812.58" y="447.00" font-family="Liberation Sans, sans-serif" font-size="10.18" fill="#222" text-anchor="middle" textLength="24.43" lengthAdjust="spacingAndGlyphs" >4700</text>
<line x1="871.52" y1="432.1" x2="871.52" y2="435.6" stroke="#333" stroke-width="0.8"/>
<text x="871.52" y="447.00" font-family="Liberation Sans, sans-serif" font-size="10.18" fill="#222" text-anchor="middle" textLength="24.43" lengthAdjust="spacingAndGlyphs" >4800</text>
<line x1="930.46" y1="432.1" x2="930.46" y2="435.6" stroke="#333" stroke-width="0.8"/>
<text x="930.46" y="447.00" font-family="Liberation Sans, sans-serif" font-size="10.18" fill="#222" text-anchor="middle" textLength="24.43" lengthAdjust="spacingAndGlyphs" >4900</text>
<line x1="989.40" y1="432.1" x2="989.40" y2="435.6" stroke="#333" stroke-width="0.8"/>
<text x="989.40" y="447.00" font-family="Liberation Sans, sans-serif" font-size="10.18" fill="#222" text-anchor="middle" textLength="24.43" lengthAdjust="spacingAndGlyphs" >5000</text>
<line x1="1048.34" y1="432.1" x2="1048.34" y2="435.6" stroke="#333" stroke-width="0.8"/>
<text x="1048.34" y="447.00" font-family="Liberation Sans, sans-serif" font-size="10.18" fill="#222" text-anchor="middle" textLength="24.43" lengthAdjust="spacingAndGlyphs" >5100</text>
<line x1="1107.28" y1="432.1" x2="1107.28" y2="435.6" stroke="#333" stroke-width="0.8"/>
<text x="1107.28" y="447.00" font-family="Liberation Sans, sans-serif" font-size="10.18" fill="#222" text-anchor="middle" textLength="24.43" lengthAdjust="spacingAndGlyphs" >5200</text>
<line x1="1166.22" y1="432.1" x2="1166.22" y2="435.6" stroke="#333" stroke-width="0.8"/>
<text x="1166.22" y="447.00" font-family="Liberation Sans, sans-serif" font-size="10.18" fill="#222" text-anchor="middle" textLength="24.43" lengthAdjust="spacingAndGlyphs" >5300</text>
<line x1="1225.16" y1="432.1" x2="1225.16" y2="435.6" stroke="#333" stroke-width="0.8"/>
<text x="1225.16" y="447.00" font-family="Liberation Sans, sans-serif" font-size="10.18" fill="#222" text-anchor="middle" textLength="24.43" lengthAdjust="spacingAndGlyphs" >5400</text>
<line x1="1284.10" y1="432.1" x2="1284.10" y2="435.6" stroke="#333" stroke-width="0.8"/>
<text x="1284.10" y="447.00" font-family="Liberation Sans, sans-serif" font-size="10.18" fill="#222" text-anchor="middle" textLength="24.43" lengthAdjust="spacingAndGlyphs" >5500</text>
<line x1="98.3" y1="421.10" x2="101.8" y2="421.10" stroke="#333" stroke-width="0.8"/>
<text x="94.50" y="424.70" font-family="Liberation Sans, sans-serif" font-size="10.18" fill="#222" text-anchor="end" textLength="6.11" lengthAdjust="spacingAndGlyphs" >0</text>
<line x1="98.3" y1="394.10" x2="101.8" y2="394.10" stroke="#333" stroke-width="0.8"/>
<text x="94.50" y="397.70" font-family="Liberation Sans, sans-serif" font-size="10.18" fill="#222" text-anchor="end" textLength="12.22" lengthAdjust="spacingAndGlyphs" >10</text>
<line x1="98.3" y1="367.10" x2="101.8" y2="367.10" stroke="#333" stroke-width="0.8"/>
<text x="94.50" y="370.70" font-family="Liberation Sans, sans-serif" font-size="10.18" fill="#222" text-anchor="end" textLength="12.22" lengthAdjust="spacingAndGlyphs" >20</text>
<text x="105.20" y="346.10" font-family="Liberation Sans, sans-serif" font-size="9.43" fill="#222" text-anchor="start" textLength="5.48" lengthAdjust="spacingAndGlyphs" >e</text>
<text x="110.90" y="341.65" font-family="Liberation Sans, sans-serif" font-size="6.60" fill="#222" text-anchor="start" textLength="13.15" lengthAdjust="spacingAndGlyphs" >−17</text>
<text x="125.16" y="346.10" font-family="Liberation Sans, sans-serif" font-size="9.43" fill="#222" text-anchor="start" textLength="10.93" lengthAdjust="spacingAndGlyphs" >x2</text>
<text x="136.09" y="346.10" font-family="Liberation Sans, sans-serif" font-size="9.43" fill="#222" text-anchor="start" textLength="6.09" lengthAdjust="spacingAndGlyphs" font-style="italic" >Å</text>
<rect x="507.9" y="450.2" width="17.2" height="6" fill="#ff0000"/>
<text x="531.40" y="456.00" font-family="Liberation Sans, sans-serif" font-size="8.48" fill="#333" text-anchor="start" textLength="14.46" lengthAdjust="spacingAndGlyphs" >Lyα</text>
<rect x="561.4" y="450.2" width="17.2" height="6" fill="#008000"/>
<text x="584.90" y="456.00" font-family="Liberation Sans, sans-serif" font-size="8.48" fill="#333" text-anchor="start" textLength="11.02" lengthAdjust="spacingAndGlyphs" >OII</text>
<rect x="613.9" y="450.2" width="17.2" height="6" fill="#8a2be2"/>
<text x="637.40" y="456.00" font-family="Liberation Sans, sans-serif" font-size="8.48" fill="#333" text-anchor="start" textLength="13.42" lengthAdjust="spacingAndGlyphs" >CIV</text>
<rect x="669.6" y="450.2" width="17.2" height="6" fill="#800080"/>
<text x="693.10" y="456.00" font-family="Liberation Sans, sans-serif" font-size="8.48" fill="#333" text-anchor="start" textLength="12.66" lengthAdjust="spacingAndGlyphs" >CIII</text>
<rect x="720.9" y="450.2" width="17.2" height="6" fill="#ffa500"/>
<text x="744.40" y="456.00" font-family="Liberation Sans, sans-serif" font-size="8.48" fill="#333" text-anchor="start" textLength="15.66" lengthAdjust="spacingAndGlyphs" >HeII</text>
<rect x="776.6" y="450.2" width="17.2" height="6" fill="#87ceeb"/>
<text x="800.10" y="456.00" font-family="Liberation Sans, sans-serif" font-size="8.48" fill="#333" text-anchor="start" textLength="26.70" lengthAdjust="spacingAndGlyphs" >(K)CaII</text>
<rect x="841.6" y="450.2" width="17.2" height="6" fill="#87ceeb"/>
<text x="865.10" y="456.00" font-family="Liberation Sans, sans-serif" font-size="8.48" fill="#333" text-anchor="start" textLength="27.46" lengthAdjust="spacingAndGlyphs" >(H)CaII</text>
<text transform="translate(143.50,278.40) rotate(90)" font-family="Liberation Sans, sans-serif" font-size="10.8" fill="#ffa500">SiIV</text>
<path d="M143.10,304.90 V303.10 H147.30 V300.90 M147.30,303.10 H151.50 V304.90" fill="none" stroke="#ffa500" stroke-width="1"/>
<text transform="translate(141.60,319.60) rotate(90)" font-family="Liberation Sans, sans-serif" font-size="10.8" fill="#ff0000">OVI</text>
<path d="M141.20,348.20 V346.40 H145.40 V344.20 M145.40,346.40 H149.60 V348.20" fill="none" stroke="#ff0000" stroke-width="1"/>
<text transform="translate(161.60,320.40) rotate(90)" font-family="Liberation Sans, sans-serif" font-size="10.8" fill="#9932cc">HeII</text>
<path d="M161.20,348.20 V346.40 H165.40 V344.20 M165.40,346.40 H169.60 V348.20" fill="none" stroke="#9932cc" stroke-width="1"/>
<text transform="translate(267.40,321.20) rotate(90)" font-family="Liberation Sans, sans-serif" font-size="10.8" fill="#8a2be2">SiIV</text>
<path d="M267.00,348.20 V346.40 H271.20 V344.20 M271.20,346.40 H275.40 V348.20" fill="none" stroke="#8a2be2" stroke-width="1"/>
<text transform="translate(359.60,323.00) rotate(90)" font-family="Liberation Sans, sans-serif" font-size="10.8" fill="#87ceeb">OII</text>
<path d="M359.20,348.20 V346.40 H363.40 V344.20 M363.40,346.40 H367.60 V348.20" fill="none" stroke="#87ceeb" stroke-width="1"/>
<text transform="translate(371.80,320.00) rotate(90)" font-family="Liberation Sans, sans-serif" font-size="10.8" fill="#ffa500">CIV</text>
<path d="M371.40,348.20 V346.40 H375.60 V344.20 M375.60,346.40 H379.80 V348.20" fill="none" stroke="#ffa500" stroke-width="1"/>
<text transform="translate(380.10,323.00) rotate(90)" font-family="Liberation Sans, sans-serif" font-size="10.8" fill="#87ceeb">OII</text>
<path d="M379.70,348.20 V346.40 H383.90 V344.20 M383.90,346.40 H388.10 V348.20" fill="none" stroke="#87ceeb" stroke-width="1"/>
<text transform="translate(559.90,319.50) rotate(90)" font-family="Liberation Sans, sans-serif" font-size="10.8" fill="#ff0000">NV</text>
<path d="M559.50,348.20 V346.40 H563.70 V344.20 M563.70,346.40 H567.90 V348.20" fill="none" stroke="#ff0000" stroke-width="1"/>
<text transform="translate(606.40,325.00) rotate(90)" font-family="Liberation Sans, sans-serif" font-size="10.8" fill="#ff0000">SiII</text>
<path d="M606.00,348.20 V346.40 H610.20 V344.20 M610.20,346.40 H614.40 V348.20" fill="none" stroke="#ff0000" stroke-width="1"/>
<text transform="translate(654.60,320.40) rotate(90)" font-family="Liberation Sans, sans-serif" font-size="10.8" fill="#8a2be2">HeII</text>
<path d="M654.20,348.20 V346.40 H658.40 V344.20 M658.40,346.40 H662.60 V348.20" fill="none" stroke="#8a2be2" stroke-width="1"/>
<text transform="translate(741.40,327.90) rotate(90)" font-family="Liberation Sans, sans-serif" font-size="10.8" fill="#87ceeb">Hγ</text>
<path d="M741.00,348.20 V346.40 H745.20 V344.20 M745.20,346.40 H749.40 V348.20" fill="none" stroke="#87ceeb" stroke-width="1"/>
<text transform="translate(763.60,327.90) rotate(90)" font-family="Liberation Sans, sans-serif" font-size="10.8" fill="#87ceeb">Hγ</text>
<path d="M763.20,348.20 V346.40 H767.40 V344.20 M767.40,346.40 H771.60 V348.20" fill="none" stroke="#87ceeb" stroke-width="1"/>
<text transform="translate(879.40,320.70) rotate(90)" font-family="Liberation Sans, sans-serif" font-size="10.8" fill="#ff0000">SiIV</text>
<path d="M879.00,348.20 V346.40 H883.20 V344.20 M883.20,346.40 H887.40 V348.20" fill="none" stroke="#ff0000" stroke-width="1"/>
<text transform="translate(913.40,282.10) rotate(90)" font-family="Liberation Sans, sans-serif" font-size="10.8" fill="#ffa500">CIII</text>
<path d="M913.00,308.60 V306.80 H917.20 V304.60 M917.20,306.80 H921.40 V308.60" fill="none" stroke="#ffa500" stroke-width="1"/>
<text transform="translate(914.80,327.90) rotate(90)" font-family="Liberation Sans, sans-serif" font-size="10.8" fill="#008000">Hγ</text>
<path d="M914.40,348.20 V346.40 H918.60 V344.20 M918.60,346.40 H922.80 V348.20" fill="none" stroke="#008000" stroke-width="1"/>
<text transform="translate(1046.90,324.00) rotate(90)" font-family="Liberation Sans, sans-serif" font-size="10.8" fill="#800080">CII</text>
<path d="M1046.50,348.20 V346.40 H1050.70 V344.20 M1050.70,346.40 H1054.90 V348.20" fill="none" stroke="#800080" stroke-width="1"/>
<text transform="translate(1065.20,327.00) rotate(90)" font-family="Liberation Sans, sans-serif" font-size="10.8" fill="#87ceeb">Hβ</text>
<path d="M1064.80,348.20 V346.40 H1069.00 V344.20 M1069.00,346.40 H1073.20 V348.20" fill="none" stroke="#87ceeb" stroke-width="1"/>
<text transform="translate(1082.20,323.60) rotate(90)" font-family="Liberation Sans, sans-serif" font-size="10.8" fill="#8a2be2">CIII</text>
<path d="M1081.80,348.20 V346.40 H1086.00 V344.20 M1086.00,346.40 H1090.20 V348.20" fill="none" stroke="#8a2be2" stroke-width="1"/>
<text transform="translate(1092.00,327.00) rotate(90)" font-family="Liberation Sans, sans-serif" font-size="10.8" fill="#87ceeb">Hβ</text>
<path d="M1091.60,348.20 V346.40 H1095.80 V344.20 M1095.80,346.40 H1100.00 V348.20" fill="none" stroke="#87ceeb" stroke-width="1"/>
<text transform="translate(1125.90,323.60) rotate(90)" font-family="Liberation Sans, sans-serif" font-size="10.8" fill="#87ceeb">OIII</text>
<path d="M1125.50,348.20 V346.40 H1129.70 V344.20 M1129.70,346.40 H1133.90 V348.20" fill="none" stroke="#87ceeb" stroke-width="1"/>
<text transform="translate(1153.60,323.60) rotate(90)" font-family="Liberation Sans, sans-serif" font-size="10.8" fill="#87ceeb">OIII</text>
<path d="M1153.20,348.20 V346.40 H1157.40 V344.20 M1157.40,346.40 H1161.60 V348.20" fill="none" stroke="#87ceeb" stroke-width="1"/>
<text transform="translate(1155.20,281.60) rotate(90)" font-family="Liberation Sans, sans-serif" font-size="10.8" fill="#87ceeb">OIII</text>
<path d="M1154.80,308.10 V306.30 H1159.00 V304.10 M1159.00,306.30 H1163.20 V308.10" fill="none" stroke="#87ceeb" stroke-width="1"/>
<text transform="translate(1183.10,281.60) rotate(90)" font-family="Liberation Sans, sans-serif" font-size="10.8" fill="#87ceeb">OIII</text>
<path d="M1182.70,308.10 V306.30 H1186.90 V304.10 M1186.90,306.30 H1191.10 V308.10" fill="none" stroke="#87ceeb" stroke-width="1"/>
<text transform="translate(1187.50,320.90) rotate(90)" font-family="Liberation Sans, sans-serif" font-size="10.8" fill="#ff0000">CIV</text>
<path d="M1187.10,348.20 V346.40 H1191.30 V344.20 M1191.30,346.40 H1195.50 V348.20" fill="none" stroke="#ff0000" stroke-width="1"/>
<text transform="translate(1260.70,327.00) rotate(90)" font-family="Liberation Sans, sans-serif" font-size="10.8" fill="#008000">Hβ</text>
<path d="M1260.30,348.20 V346.40 H1264.50 V344.20 M1264.50,346.40 H1268.70 V348.20" fill="none" stroke="#008000" stroke-width="1"/>
<defs>
<filter id="skyg" x="0" y="0" width="1" height="1" filterUnits="objectBoundingBox" color-interpolation-filters="sRGB"><feTurbulence type="fractalNoise" baseFrequency="0.38" numOctaves="1" seed="21"/><feColorMatrix type="matrix" values="0.22 0 0 0 0.73  0.22 0 0 0 0.73  0.22 0 0 0 0.73  0 0 0 0 1"/></filter>
<radialGradient id="blob1"><stop offset="0" stop-color="#000"/><stop offset="0.56" stop-color="#000"/><stop offset="0.78" stop-color="#000" stop-opacity="0.4"/><stop offset="1" stop-color="#000" stop-opacity="0"/></radialGradient>
<radialGradient id="blob2"><stop offset="0" stop-color="#000"/><stop offset="0.66" stop-color="#000"/><stop offset="0.83" stop-color="#000" stop-opacity="0.45"/><stop offset="1" stop-color="#000" stop-opacity="0"/></radialGradient>
<radialGradient id="corner" cx="1" cy="0" r="0.32"><stop offset="0" stop-color="#000" stop-opacity="0.3"/><stop offset="1" stop-color="#000" stop-opacity="0"/></radialGradient>
<filter id="lfblur" x="-0.1" y="-0.1" width="1.2" height="1.2"><feGaussianBlur stdDeviation="2.6"/></filter>
<filter id="vblur" x="-0.1" y="-0.1" width="1.2" height="1.2"><feGaussianBlur stdDeviation="2.2"/></filter>
</defs>
<rect x="70.3" y="532.8" width="148" height="148" fill="#ccc" filter="url(#skyg)"/>
<rect x="70.3" y="532.8" width="148" height="148" fill="url(#corner)"/>
<ellipse cx="138.3" cy="597.0" rx="28" ry="31" fill="url(#blob1)"/>
<circle cx="124.9" cy="555.9" r="12.2" fill="none" stroke="#5a5a5a" stroke-width="1.1"/>
<circle cx="148.3" cy="549.1" r="12.2" fill="none" stroke="#5a5a5a" stroke-width="1.1"/>
<circle cx="165.8" cy="566.4" r="12.2" fill="none" stroke="#5a5a5a" stroke-width="1.1"/>
<circle cx="142.3" cy="572.3" r="12.2" fill="none" stroke="#5a5a5a" stroke-width="1.1"/>
<circle cx="119.4" cy="579.8" r="12.2" fill="none" stroke="#5a5a5a" stroke-width="1.1"/>
<circle cx="95.5" cy="585.0" r="12.2" fill="none" stroke="#5a5a5a" stroke-width="1.1"/>
<circle cx="183.1" cy="583.3" r="12.2" fill="none" stroke="#5a5a5a" stroke-width="1.1"/>
<circle cx="199.7" cy="601.1" r="12.2" fill="none" stroke="#5a5a5a" stroke-width="1.1"/>
<circle cx="176.0" cy="606.8" r="12.2" fill="none" stroke="#5a5a5a" stroke-width="1.1"/>
<circle cx="113.2" cy="601.9" r="12.2" fill="none" stroke="#5a5a5a" stroke-width="1.1"/>
<circle cx="89.8" cy="609.2" r="12.2" fill="none" stroke="#5a5a5a" stroke-width="1.1"/>
<circle cx="106.5" cy="625.3" r="12.2" fill="none" stroke="#5a5a5a" stroke-width="1.1"/>
<circle cx="194.0" cy="623.7" r="12.2" fill="none" stroke="#5a5a5a" stroke-width="1.1"/>
<circle cx="170.6" cy="631.0" r="12.2" fill="none" stroke="#5a5a5a" stroke-width="1.1"/>
<circle cx="147.2" cy="636.7" r="12.2" fill="none" stroke="#5a5a5a" stroke-width="1.1"/>
<circle cx="124.6" cy="642.3" r="12.2" fill="none" stroke="#5a5a5a" stroke-width="1.1"/>
<circle cx="141.0" cy="660.6" r="12.2" fill="none" stroke="#5a5a5a" stroke-width="1.1"/>
<circle cx="165.0" cy="653.1" r="12.2" fill="none" stroke="#5a5a5a" stroke-width="1.1"/>
<rect x="94.8" y="557.8" width="98.8" height="97.8" fill="none" stroke="#f00" stroke-width="1.3"/>
<circle cx="135.9" cy="596.3" r="12.5" fill="none" stroke="#00dd00" stroke-width="1.5"/>
<circle cx="159.3" cy="590.6" r="12.5" fill="none" stroke="#ffa500" stroke-width="1.5"/>
<circle cx="154.1" cy="613.2" r="12.5" fill="none" stroke="#0000ff" stroke-width="1.5"/>
<circle cx="130.2" cy="619.7" r="12.5" fill="none" stroke="#ff0000" stroke-width="1.5"/>
<path d="M141.5,607.3 H147.5 M144.5,604.5 V610" stroke="#f00" stroke-width="1.2"/>
<text x="143.80" y="546.30" font-family="Liberation Sans, sans-serif" font-size="11.66" fill="#f00" text-anchor="middle" textLength="8.23" lengthAdjust="spacingAndGlyphs" >N</text>
<text x="79.80" y="610.50" font-family="Liberation Sans, sans-serif" font-size="11.66" fill="#f00" text-anchor="middle" textLength="6.95" lengthAdjust="spacingAndGlyphs" >E</text>
<rect x="70.30" y="532.80" width="148" height="148" fill="none" stroke="#222" stroke-width="1.1"/>
<line x1="78.92" y1="680.80" x2="78.92" y2="684.30" stroke="#222" stroke-width="0.8"/>
<text x="78.92" y="696.00" font-family="Liberation Sans, sans-serif" font-size="10.81" fill="#222" text-anchor="middle" textLength="15.04" lengthAdjust="spacingAndGlyphs" >−4</text>
<line x1="66.80" y1="672.68" x2="70.30" y2="672.68" stroke="#222" stroke-width="0.8"/>
<text x="64.80" y="676.68" font-family="Liberation Sans, sans-serif" font-size="10.81" fill="#222" text-anchor="end" textLength="15.04" lengthAdjust="spacingAndGlyphs" >−4</text>
<line x1="111.66" y1="680.80" x2="111.66" y2="684.30" stroke="#222" stroke-width="0.8"/>
<text x="111.66" y="696.00" font-family="Liberation Sans, sans-serif" font-size="10.81" fill="#222" text-anchor="middle" textLength="15.04" lengthAdjust="spacingAndGlyphs" >−2</text>
<line x1="66.80" y1="639.94" x2="70.30" y2="639.94" stroke="#222" stroke-width="0.8"/>
<text x="64.80" y="643.94" font-family="Liberation Sans, sans-serif" font-size="10.81" fill="#222" text-anchor="end" textLength="15.04" lengthAdjust="spacingAndGlyphs" >−2</text>
<line x1="144.40" y1="680.80" x2="144.40" y2="684.30" stroke="#222" stroke-width="0.8"/>
<text x="144.40" y="696.00" font-family="Liberation Sans, sans-serif" font-size="10.81" fill="#222" text-anchor="middle" textLength="6.49" lengthAdjust="spacingAndGlyphs" >0</text>
<line x1="66.80" y1="607.20" x2="70.30" y2="607.20" stroke="#222" stroke-width="0.8"/>
<text x="64.80" y="611.20" font-family="Liberation Sans, sans-serif" font-size="10.81" fill="#222" text-anchor="end" textLength="6.49" lengthAdjust="spacingAndGlyphs" >0</text>
<line x1="177.14" y1="680.80" x2="177.14" y2="684.30" stroke="#222" stroke-width="0.8"/>
<text x="177.14" y="696.00" font-family="Liberation Sans, sans-serif" font-size="10.81" fill="#222" text-anchor="middle" textLength="6.49" lengthAdjust="spacingAndGlyphs" >2</text>
<line x1="66.80" y1="574.46" x2="70.30" y2="574.46" stroke="#222" stroke-width="0.8"/>
<text x="64.80" y="578.46" font-family="Liberation Sans, sans-serif" font-size="10.81" fill="#222" text-anchor="end" textLength="6.49" lengthAdjust="spacingAndGlyphs" >2</text>
<line x1="209.88" y1="680.80" x2="209.88" y2="684.30" stroke="#222" stroke-width="0.8"/>
<text x="209.88" y="696.00" font-family="Liberation Sans, sans-serif" font-size="10.81" fill="#222" text-anchor="middle" textLength="6.49" lengthAdjust="spacingAndGlyphs" >4</text>
<line x1="66.80" y1="541.72" x2="70.30" y2="541.72" stroke="#222" stroke-width="0.8"/>
<text x="64.80" y="545.72" font-family="Liberation Sans, sans-serif" font-size="10.81" fill="#222" text-anchor="end" textLength="6.49" lengthAdjust="spacingAndGlyphs" >4</text>
<text x="143.90" y="525.00" font-family="Liberation Sans, sans-serif" font-size="13.57" fill="#111" text-anchor="middle" textLength="93.21" lengthAdjust="spacingAndGlyphs" >Fiber Positions</text>
<text x="144.40" y="706.40" font-family="Liberation Sans, sans-serif" font-size="11.40" fill="#222" text-anchor="middle" textLength="40.64" lengthAdjust="spacingAndGlyphs" >arcsecs</text>
<clipPath id="lfclip"><rect x="255.5" y="532.6" width="148" height="148"/></clipPath>
<g clip-path="url(#lfclip)">
<g filter="url(#lfblur)">
<rect x="249.5" y="526.6" width="15.8" height="15.8" fill="#26848d"/>
<rect x="264.8" y="526.6" width="9.8" height="15.8" fill="#355f8d"/>
<rect x="274.0" y="526.6" width="9.8" height="15.8" fill="#355f8d"/>
<rect x="283.2" y="526.6" width="9.8" height="15.8" fill="#375a8c"/>
<rect x="292.5" y="526.6" width="9.8" height="15.8" fill="#3b528a"/>
<rect x="301.8" y="526.6" width="9.8" height="15.8" fill="#3f4988"/>
<rect x="311.0" y="526.6" width="9.8" height="15.8" fill="#423e83"/>
<rect x="320.2" y="526.6" width="9.8" height="15.8" fill="#472a79"/>
<rect x="329.5" y="526.6" width="9.8" height="15.8" fill="#26848d"/>
<rect x="338.8" y="526.6" width="9.8" height="15.8" fill="#306c8e"/>
<rect x="348.0" y="526.6" width="9.8" height="15.8" fill="#355f8d"/>
<rect x="357.2" y="526.6" width="9.8" height="15.8" fill="#306c8e"/>
<rect x="366.5" y="526.6" width="9.8" height="15.8" fill="#355f8d"/>
<rect x="375.8" y="526.6" width="9.8" height="15.8" fill="#3b528a"/>
<rect x="385.0" y="526.6" width="9.8" height="15.8" fill="#461264"/>
<rect x="394.2" y="526.6" width="15.8" height="15.8" fill="#461264"/>
<rect x="249.5" y="541.9" width="15.8" height="9.8" fill="#2c738e"/>
<rect x="264.8" y="541.9" width="9.8" height="9.8" fill="#375a8c"/>
<rect x="274.0" y="541.9" width="9.8" height="9.8" fill="#3b528a"/>
<rect x="283.2" y="541.9" width="9.8" height="9.8" fill="#3f4988"/>
<rect x="292.5" y="541.9" width="9.8" height="9.8" fill="#414487"/>
<rect x="301.8" y="541.9" width="9.8" height="9.8" fill="#44347e"/>
<rect x="311.0" y="541.9" width="9.8" height="9.8" fill="#482475"/>
<rect x="320.2" y="541.9" width="9.8" height="9.8" fill="#461264"/>
<rect x="329.5" y="541.9" width="9.8" height="9.8" fill="#471d6e"/>
<rect x="338.8" y="541.9" width="9.8" height="9.8" fill="#471d6e"/>
<rect x="348.0" y="541.9" width="9.8" height="9.8" fill="#482475"/>
<rect x="357.2" y="541.9" width="9.8" height="9.8" fill="#306c8e"/>
<rect x="366.5" y="541.9" width="9.8" height="9.8" fill="#26848d"/>
<rect x="375.8" y="541.9" width="9.8" height="9.8" fill="#2a788e"/>
<rect x="385.0" y="541.9" width="9.8" height="9.8" fill="#461264"/>
<rect x="394.2" y="541.9" width="15.8" height="9.8" fill="#440154"/>
<rect x="249.5" y="551.1" width="15.8" height="9.8" fill="#414487"/>
<rect x="264.8" y="551.1" width="9.8" height="9.8" fill="#471d6e"/>
<rect x="274.0" y="551.1" width="9.8" height="9.8" fill="#461264"/>
<rect x="283.2" y="551.1" width="9.8" height="9.8" fill="#461264"/>
<rect x="292.5" y="551.1" width="9.8" height="9.8" fill="#461264"/>
<rect x="301.8" y="551.1" width="9.8" height="9.8" fill="#461264"/>
<rect x="311.0" y="551.1" width="9.8" height="9.8" fill="#461264"/>
<rect x="320.2" y="551.1" width="9.8" height="9.8" fill="#471d6e"/>
<rect x="329.5" y="551.1" width="9.8" height="9.8" fill="#306c8e"/>
<rect x="338.8" y="551.1" width="9.8" height="9.8" fill="#2a788e"/>
<rect x="348.0" y="551.1" width="9.8" height="9.8" fill="#26848d"/>
<rect x="357.2" y="551.1" width="9.8" height="9.8" fill="#21918c"/>
<rect x="366.5" y="551.1" width="9.8" height="9.8" fill="#229c88"/>
<rect x="375.8" y="551.1" width="9.8" height="9.8" fill="#355f8d"/>
<rect x="385.0" y="551.1" width="9.8" height="9.8" fill="#461264"/>
<rect x="394.2" y="551.1" width="15.8" height="9.8" fill="#461264"/>
<rect x="249.5" y="560.4" width="15.8" height="9.8" fill="#461264"/>
<rect x="264.8" y="560.4" width="9.8" height="9.8" fill="#450c5e"/>
<rect x="274.0" y="560.4" width="9.8" height="9.8" fill="#471d6e"/>
<rect x="283.2" y="560.4" width="9.8" height="9.8" fill="#461264"/>
<rect x="292.5" y="560.4" width="9.8" height="9.8" fill="#45085b"/>
<rect x="301.8" y="560.4" width="9.8" height="9.8" fill="#440154"/>
<rect x="311.0" y="560.4" width="9.8" height="9.8" fill="#461264"/>
<rect x="320.2" y="560.4" width="9.8" height="9.8" fill="#472a79"/>
<rect x="329.5" y="560.4" width="9.8" height="9.8" fill="#26848d"/>
<rect x="338.8" y="560.4" width="9.8" height="9.8" fill="#26848d"/>
<rect x="348.0" y="560.4" width="9.8" height="9.8" fill="#26848d"/>
<rect x="357.2" y="560.4" width="9.8" height="9.8" fill="#26848d"/>
<rect x="366.5" y="560.4" width="9.8" height="9.8" fill="#2a788e"/>
<rect x="375.8" y="560.4" width="9.8" height="9.8" fill="#355f8d"/>
<rect x="385.0" y="560.4" width="9.8" height="9.8" fill="#44347e"/>
<rect x="394.2" y="560.4" width="15.8" height="9.8" fill="#472a79"/>
<rect x="249.5" y="569.6" width="15.8" height="9.8" fill="#461264"/>
<rect x="264.8" y="569.6" width="9.8" height="9.8" fill="#482475"/>
<rect x="274.0" y="569.6" width="9.8" height="9.8" fill="#44347e"/>
<rect x="283.2" y="569.6" width="9.8" height="9.8" fill="#472a79"/>
<rect x="292.5" y="569.6" width="9.8" height="9.8" fill="#450c5e"/>
<rect x="301.8" y="569.6" width="9.8" height="9.8" fill="#440154"/>
<rect x="311.0" y="569.6" width="9.8" height="9.8" fill="#472a79"/>
<rect x="320.2" y="569.6" width="9.8" height="9.8" fill="#355f8d"/>
<rect x="329.5" y="569.6" width="9.8" height="9.8" fill="#229c88"/>
<rect x="338.8" y="569.6" width="9.8" height="9.8" fill="#21918c"/>
<rect x="348.0" y="569.6" width="9.8" height="9.8" fill="#26848d"/>
<rect x="357.2" y="569.6" width="9.8" height="9.8" fill="#482475"/>
<rect x="366.5" y="569.6" width="9.8" height="9.8" fill="#461264"/>
<rect x="375.8" y="569.6" width="9.8" height="9.8" fill="#2a788e"/>
<rect x="385.0" y="569.6" width="9.8" height="9.8" fill="#355f8d"/>
<rect x="394.2" y="569.6" width="15.8" height="9.8" fill="#3b528a"/>
<rect x="249.5" y="578.9" width="15.8" height="9.8" fill="#461264"/>
<rect x="264.8" y="578.9" width="9.8" height="9.8" fill="#472a79"/>
<rect x="274.0" y="578.9" width="9.8" height="9.8" fill="#44347e"/>
<rect x="283.2" y="578.9" width="9.8" height="9.8" fill="#472a79"/>
<rect x="292.5" y="578.9" width="9.8" height="9.8" fill="#461264"/>
<rect x="301.8" y="578.9" width="9.8" height="9.8" fill="#414487"/>
<rect x="311.0" y="578.9" width="9.8" height="9.8" fill="#22a884"/>
<rect x="320.2" y="578.9" width="9.8" height="9.8" fill="#9bd83c"/>
<rect x="329.5" y="578.9" width="9.8" height="9.8" fill="#9bd83c"/>
<rect x="338.8" y="578.9" width="9.8" height="9.8" fill="#22a884"/>
<rect x="348.0" y="578.9" width="9.8" height="9.8" fill="#306c8e"/>
<rect x="357.2" y="578.9" width="9.8" height="9.8" fill="#461264"/>
<rect x="366.5" y="578.9" width="9.8" height="9.8" fill="#461264"/>
<rect x="375.8" y="578.9" width="9.8" height="9.8" fill="#306c8e"/>
<rect x="385.0" y="578.9" width="9.8" height="9.8" fill="#355f8d"/>
<rect x="394.2" y="578.9" width="15.8" height="9.8" fill="#3b528a"/>
<rect x="249.5" y="588.1" width="15.8" height="9.8" fill="#461264"/>
<rect x="264.8" y="588.1" width="9.8" height="9.8" fill="#472a79"/>
<rect x="274.0" y="588.1" width="9.8" height="9.8" fill="#44347e"/>
<rect x="283.2" y="588.1" width="9.8" height="9.8" fill="#482475"/>
<rect x="292.5" y="588.1" width="9.8" height="9.8" fill="#461264"/>
<rect x="301.8" y="588.1" width="9.8" height="9.8" fill="#355f8d"/>
<rect x="311.0" y="588.1" width="9.8" height="9.8" fill="#9bd83c"/>
<rect x="320.2" y="588.1" width="9.8" height="9.8" fill="#fde725"/>
<rect x="329.5" y="588.1" width="9.8" height="9.8" fill="#fde725"/>
<rect x="338.8" y="588.1" width="9.8" height="9.8" fill="#5fc860"/>
<rect x="348.0" y="588.1" width="9.8" height="9.8" fill="#2a788e"/>
<rect x="357.2" y="588.1" width="9.8" height="9.8" fill="#461264"/>
<rect x="366.5" y="588.1" width="9.8" height="9.8" fill="#461264"/>
<rect x="375.8" y="588.1" width="9.8" height="9.8" fill="#306c8e"/>
<rect x="385.0" y="588.1" width="9.8" height="9.8" fill="#355f8d"/>
<rect x="394.2" y="588.1" width="15.8" height="9.8" fill="#3b528a"/>
<rect x="249.5" y="597.4" width="15.8" height="9.8" fill="#450c5e"/>
<rect x="264.8" y="597.4" width="9.8" height="9.8" fill="#461264"/>
<rect x="274.0" y="597.4" width="9.8" height="9.8" fill="#461264"/>
<rect x="283.2" y="597.4" width="9.8" height="9.8" fill="#450c5e"/>
<rect x="292.5" y="597.4" width="9.8" height="9.8" fill="#450c5e"/>
<rect x="301.8" y="597.4" width="9.8" height="9.8" fill="#306c8e"/>
<rect x="311.0" y="597.4" width="9.8" height="9.8" fill="#bddf26"/>
<rect x="320.2" y="597.4" width="9.8" height="9.8" fill="#fde725"/>
<rect x="329.5" y="597.4" width="9.8" height="9.8" fill="#fde725"/>
<rect x="338.8" y="597.4" width="9.8" height="9.8" fill="#5fc860"/>
<rect x="348.0" y="597.4" width="9.8" height="9.8" fill="#2a788e"/>
<rect x="357.2" y="597.4" width="9.8" height="9.8" fill="#482475"/>
<rect x="366.5" y="597.4" width="9.8" height="9.8" fill="#482475"/>
<rect x="375.8" y="597.4" width="9.8" height="9.8" fill="#306c8e"/>
<rect x="385.0" y="597.4" width="9.8" height="9.8" fill="#355f8d"/>
<rect x="394.2" y="597.4" width="15.8" height="9.8" fill="#414487"/>
<rect x="249.5" y="606.6" width="15.8" height="9.8" fill="#3b528a"/>
<rect x="264.8" y="606.6" width="9.8" height="9.8" fill="#414487"/>
<rect x="274.0" y="606.6" width="9.8" height="9.8" fill="#461264"/>
<rect x="283.2" y="606.6" width="9.8" height="9.8" fill="#461264"/>
<rect x="292.5" y="606.6" width="9.8" height="9.8" fill="#306c8e"/>
<rect x="301.8" y="606.6" width="9.8" height="9.8" fill="#21918c"/>
<rect x="311.0" y="606.6" width="9.8" height="9.8" fill="#9bd83c"/>
<rect x="320.2" y="606.6" width="9.8" height="9.8" fill="#bddf26"/>
<rect x="329.5" y="606.6" width="9.8" height="9.8" fill="#5fc860"/>
<rect x="338.8" y="606.6" width="9.8" height="9.8" fill="#229c88"/>
<rect x="348.0" y="606.6" width="9.8" height="9.8" fill="#21918c"/>
<rect x="357.2" y="606.6" width="9.8" height="9.8" fill="#26848d"/>
<rect x="366.5" y="606.6" width="9.8" height="9.8" fill="#26848d"/>
<rect x="375.8" y="606.6" width="9.8" height="9.8" fill="#2a788e"/>
<rect x="385.0" y="606.6" width="9.8" height="9.8" fill="#355f8d"/>
<rect x="394.2" y="606.6" width="15.8" height="9.8" fill="#3b528a"/>
<rect x="249.5" y="615.9" width="15.8" height="9.8" fill="#414487"/>
<rect x="264.8" y="615.9" width="9.8" height="9.8" fill="#461264"/>
<rect x="274.0" y="615.9" width="9.8" height="9.8" fill="#440154"/>
<rect x="283.2" y="615.9" width="9.8" height="9.8" fill="#461264"/>
<rect x="292.5" y="615.9" width="9.8" height="9.8" fill="#2a788e"/>
<rect x="301.8" y="615.9" width="9.8" height="9.8" fill="#22a884"/>
<rect x="311.0" y="615.9" width="9.8" height="9.8" fill="#7ad151"/>
<rect x="320.2" y="615.9" width="9.8" height="9.8" fill="#44bf70"/>
<rect x="329.5" y="615.9" width="9.8" height="9.8" fill="#22a884"/>
<rect x="338.8" y="615.9" width="9.8" height="9.8" fill="#229c88"/>
<rect x="348.0" y="615.9" width="9.8" height="9.8" fill="#22a884"/>
<rect x="357.2" y="615.9" width="9.8" height="9.8" fill="#44bf70"/>
<rect x="366.5" y="615.9" width="9.8" height="9.8" fill="#33b47a"/>
<rect x="375.8" y="615.9" width="9.8" height="9.8" fill="#26848d"/>
<rect x="385.0" y="615.9" width="9.8" height="9.8" fill="#306c8e"/>
<rect x="394.2" y="615.9" width="15.8" height="9.8" fill="#3b528a"/>
<rect x="249.5" y="625.1" width="15.8" height="9.8" fill="#461264"/>
<rect x="264.8" y="625.1" width="9.8" height="9.8" fill="#440154"/>
<rect x="274.0" y="625.1" width="9.8" height="9.8" fill="#440154"/>
<rect x="283.2" y="625.1" width="9.8" height="9.8" fill="#482475"/>
<rect x="292.5" y="625.1" width="9.8" height="9.8" fill="#306c8e"/>
<rect x="301.8" y="625.1" width="9.8" height="9.8" fill="#229c88"/>
<rect x="311.0" y="625.1" width="9.8" height="9.8" fill="#33b47a"/>
<rect x="320.2" y="625.1" width="9.8" height="9.8" fill="#22a884"/>
<rect x="329.5" y="625.1" width="9.8" height="9.8" fill="#229c88"/>
<rect x="338.8" y="625.1" width="9.8" height="9.8" fill="#21918c"/>
<rect x="348.0" y="625.1" width="9.8" height="9.8" fill="#229c88"/>
<rect x="357.2" y="625.1" width="9.8" height="9.8" fill="#229c88"/>
<rect x="366.5" y="625.1" width="9.8" height="9.8" fill="#26848d"/>
<rect x="375.8" y="625.1" width="9.8" height="9.8" fill="#306c8e"/>
<rect x="385.0" y="625.1" width="9.8" height="9.8" fill="#355f8d"/>
<rect x="394.2" y="625.1" width="15.8" height="9.8" fill="#3b528a"/>
<rect x="249.5" y="634.4" width="15.8" height="9.8" fill="#450c5e"/>
<rect x="264.8" y="634.4" width="9.8" height="9.8" fill="#440154"/>
<rect x="274.0" y="634.4" width="9.8" height="9.8" fill="#440154"/>
<rect x="283.2" y="634.4" width="9.8" height="9.8" fill="#482475"/>
<rect x="292.5" y="634.4" width="9.8" height="9.8" fill="#306c8e"/>
<rect x="301.8" y="634.4" width="9.8" height="9.8" fill="#21918c"/>
<rect x="311.0" y="634.4" width="9.8" height="9.8" fill="#229c88"/>
<rect x="320.2" y="634.4" width="9.8" height="9.8" fill="#21918c"/>
<rect x="329.5" y="634.4" width="9.8" height="9.8" fill="#21918c"/>
<rect x="338.8" y="634.4" width="9.8" height="9.8" fill="#26848d"/>
<rect x="348.0" y="634.4" width="9.8" height="9.8" fill="#2a788e"/>
<rect x="357.2" y="634.4" width="9.8" height="9.8" fill="#355f8d"/>
<rect x="366.5" y="634.4" width="9.8" height="9.8" fill="#461264"/>
<rect x="375.8" y="634.4" width="9.8" height="9.8" fill="#461264"/>
<rect x="385.0" y="634.4" width="9.8" height="9.8" fill="#482475"/>
<rect x="394.2" y="634.4" width="15.8" height="9.8" fill="#44347e"/>
<rect x="249.5" y="643.6" width="15.8" height="9.8" fill="#3b528a"/>
<rect x="264.8" y="643.6" width="9.8" height="9.8" fill="#414487"/>
<rect x="274.0" y="643.6" width="9.8" height="9.8" fill="#461264"/>
<rect x="283.2" y="643.6" width="9.8" height="9.8" fill="#461264"/>
<rect x="292.5" y="643.6" width="9.8" height="9.8" fill="#355f8d"/>
<rect x="301.8" y="643.6" width="9.8" height="9.8" fill="#26848d"/>
<rect x="311.0" y="643.6" width="9.8" height="9.8" fill="#26848d"/>
<rect x="320.2" y="643.6" width="9.8" height="9.8" fill="#26848d"/>
<rect x="329.5" y="643.6" width="9.8" height="9.8" fill="#26848d"/>
<rect x="338.8" y="643.6" width="9.8" height="9.8" fill="#2a788e"/>
<rect x="348.0" y="643.6" width="9.8" height="9.8" fill="#355f8d"/>
<rect x="357.2" y="643.6" width="9.8" height="9.8" fill="#461264"/>
<rect x="366.5" y="643.6" width="9.8" height="9.8" fill="#440154"/>
<rect x="375.8" y="643.6" width="9.8" height="9.8" fill="#440154"/>
<rect x="385.0" y="643.6" width="9.8" height="9.8" fill="#461264"/>
<rect x="394.2" y="643.6" width="15.8" height="9.8" fill="#461264"/>
<rect x="249.5" y="652.9" width="15.8" height="9.8" fill="#355f8d"/>
<rect x="264.8" y="652.9" width="9.8" height="9.8" fill="#355f8d"/>
<rect x="274.0" y="652.9" width="9.8" height="9.8" fill="#44347e"/>
<rect x="283.2" y="652.9" width="9.8" height="9.8" fill="#440154"/>
<rect x="292.5" y="652.9" width="9.8" height="9.8" fill="#461264"/>
<rect x="301.8" y="652.9" width="9.8" height="9.8" fill="#44347e"/>
<rect x="311.0" y="652.9" width="9.8" height="9.8" fill="#306c8e"/>
<rect x="320.2" y="652.9" width="9.8" height="9.8" fill="#2a788e"/>
<rect x="329.5" y="652.9" width="9.8" height="9.8" fill="#2a788e"/>
<rect x="338.8" y="652.9" width="9.8" height="9.8" fill="#2a788e"/>
<rect x="348.0" y="652.9" width="9.8" height="9.8" fill="#306c8e"/>
<rect x="357.2" y="652.9" width="9.8" height="9.8" fill="#482475"/>
<rect x="366.5" y="652.9" width="9.8" height="9.8" fill="#440154"/>
<rect x="375.8" y="652.9" width="9.8" height="9.8" fill="#440154"/>
<rect x="385.0" y="652.9" width="9.8" height="9.8" fill="#440154"/>
<rect x="394.2" y="652.9" width="15.8" height="9.8" fill="#440154"/>
<rect x="249.5" y="662.1" width="15.8" height="9.8" fill="#355f8d"/>
<rect x="264.8" y="662.1" width="9.8" height="9.8" fill="#355f8d"/>
<rect x="274.0" y="662.1" width="9.8" height="9.8" fill="#3b528a"/>
<rect x="283.2" y="662.1" width="9.8" height="9.8" fill="#461264"/>
<rect x="292.5" y="662.1" width="9.8" height="9.8" fill="#440154"/>
<rect x="301.8" y="662.1" width="9.8" height="9.8" fill="#440154"/>
<rect x="311.0" y="662.1" width="9.8" height="9.8" fill="#461264"/>
<rect x="320.2" y="662.1" width="9.8" height="9.8" fill="#414487"/>
<rect x="329.5" y="662.1" width="9.8" height="9.8" fill="#306c8e"/>
<rect x="338.8" y="662.1" width="9.8" height="9.8" fill="#306c8e"/>
<rect x="348.0" y="662.1" width="9.8" height="9.8" fill="#306c8e"/>
<rect x="357.2" y="662.1" width="9.8" height="9.8" fill="#355f8d"/>
<rect x="366.5" y="662.1" width="9.8" height="9.8" fill="#482475"/>
<rect x="375.8" y="662.1" width="9.8" height="9.8" fill="#440154"/>
<rect x="385.0" y="662.1" width="9.8" height="9.8" fill="#440154"/>
<rect x="394.2" y="662.1" width="15.8" height="9.8" fill="#440154"/>
<rect x="249.5" y="671.4" width="15.8" height="15.8" fill="#355f8d"/>
<rect x="264.8" y="671.4" width="9.8" height="15.8" fill="#306c8e"/>
<rect x="274.0" y="671.4" width="9.8" height="15.8" fill="#355f8d"/>
<rect x="283.2" y="671.4" width="9.8" height="15.8" fill="#482475"/>
<rect x="292.5" y="671.4" width="9.8" height="15.8" fill="#440154"/>
<rect x="301.8" y="671.4" width="9.8" height="15.8" fill="#440154"/>
<rect x="311.0" y="671.4" width="9.8" height="15.8" fill="#440154"/>
<rect x="320.2" y="671.4" width="9.8" height="15.8" fill="#461264"/>
<rect x="329.5" y="671.4" width="9.8" height="15.8" fill="#44347e"/>
<rect x="338.8" y="671.4" width="9.8" height="15.8" fill="#355f8d"/>
<rect x="348.0" y="671.4" width="9.8" height="15.8" fill="#306c8e"/>
<rect x="357.2" y="671.4" width="9.8" height="15.8" fill="#306c8e"/>
<rect x="366.5" y="671.4" width="9.8" height="15.8" fill="#414487"/>
<rect x="375.8" y="671.4" width="9.8" height="15.8" fill="#461264"/>
<rect x="385.0" y="671.4" width="9.8" height="15.8" fill="#440154"/>
<rect x="394.2" y="671.4" width="15.8" height="15.8" fill="#440154"/>
</g>
</g>
<rect x="280.2" y="557.7" width="98.6" height="98.2" fill="none" stroke="#f00" stroke-width="1.3"/>
<path d="M292,606.4 H322.2 M336.5,606.4 H366.7 M329.2,569.5 V599.7 M329.2,614 V644.2" stroke="#f00" stroke-width="1.3"/>
<text x="329.00" y="546.30" font-family="Liberation Sans, sans-serif" font-size="11.66" fill="#f00" text-anchor="middle" textLength="8.23" lengthAdjust="spacingAndGlyphs" >N</text>
<text x="265.00" y="610.50" font-family="Liberation Sans, sans-serif" font-size="11.66" fill="#f00" text-anchor="middle" textLength="6.95" lengthAdjust="spacingAndGlyphs" >E</text>
<rect x="255.50" y="532.60" width="148" height="148" fill="none" stroke="#222" stroke-width="1.1"/>
<line x1="263.72" y1="680.60" x2="263.72" y2="684.10" stroke="#222" stroke-width="0.8"/>
<text x="263.72" y="696.00" font-family="Liberation Sans, sans-serif" font-size="10.81" fill="#222" text-anchor="middle" textLength="15.04" lengthAdjust="spacingAndGlyphs" >−4</text>
<line x1="252.00" y1="672.38" x2="255.50" y2="672.38" stroke="#222" stroke-width="0.8"/>
<text x="250.00" y="676.38" font-family="Liberation Sans, sans-serif" font-size="10.81" fill="#222" text-anchor="end" textLength="15.04" lengthAdjust="spacingAndGlyphs" >−4</text>
<line x1="296.46" y1="680.60" x2="296.46" y2="684.10" stroke="#222" stroke-width="0.8"/>
<text x="296.46" y="696.00" font-family="Liberation Sans, sans-serif" font-size="10.81" fill="#222" text-anchor="middle" textLength="15.04" lengthAdjust="spacingAndGlyphs" >−2</text>
<line x1="252.00" y1="639.64" x2="255.50" y2="639.64" stroke="#222" stroke-width="0.8"/>
<text x="250.00" y="643.64" font-family="Liberation Sans, sans-serif" font-size="10.81" fill="#222" text-anchor="end" textLength="15.04" lengthAdjust="spacingAndGlyphs" >−2</text>
<line x1="329.20" y1="680.60" x2="329.20" y2="684.10" stroke="#222" stroke-width="0.8"/>
<text x="329.20" y="696.00" font-family="Liberation Sans, sans-serif" font-size="10.81" fill="#222" text-anchor="middle" textLength="6.49" lengthAdjust="spacingAndGlyphs" >0</text>
<line x1="252.00" y1="606.90" x2="255.50" y2="606.90" stroke="#222" stroke-width="0.8"/>
<text x="250.00" y="610.90" font-family="Liberation Sans, sans-serif" font-size="10.81" fill="#222" text-anchor="end" textLength="6.49" lengthAdjust="spacingAndGlyphs" >0</text>
<line x1="361.94" y1="680.60" x2="361.94" y2="684.10" stroke="#222" stroke-width="0.8"/>
<text x="361.94" y="696.00" font-family="Liberation Sans, sans-serif" font-size="10.81" fill="#222" text-anchor="middle" textLength="6.49" lengthAdjust="spacingAndGlyphs" >2</text>
<line x1="252.00" y1="574.16" x2="255.50" y2="574.16" stroke="#222" stroke-width="0.8"/>
<text x="250.00" y="578.16" font-family="Liberation Sans, sans-serif" font-size="10.81" fill="#222" text-anchor="end" textLength="6.49" lengthAdjust="spacingAndGlyphs" >2</text>
<line x1="394.68" y1="680.60" x2="394.68" y2="684.10" stroke="#222" stroke-width="0.8"/>
<text x="394.68" y="696.00" font-family="Liberation Sans, sans-serif" font-size="10.81" fill="#222" text-anchor="middle" textLength="6.49" lengthAdjust="spacingAndGlyphs" >4</text>
<line x1="252.00" y1="541.42" x2="255.50" y2="541.42" stroke="#222" stroke-width="0.8"/>
<text x="250.00" y="545.42" font-family="Liberation Sans, sans-serif" font-size="10.81" fill="#222" text-anchor="end" textLength="6.49" lengthAdjust="spacingAndGlyphs" >4</text>
<text x="329.20" y="525.00" font-family="Liberation Sans, sans-serif" font-size="13.57" fill="#111" text-anchor="middle" textLength="81.51" lengthAdjust="spacingAndGlyphs" >Lineflux Map</text>
<text x="329.20" y="706.40" font-family="Liberation Sans, sans-serif" font-size="11.40" fill="#222" text-anchor="middle" textLength="101.14" lengthAdjust="spacingAndGlyphs" >s/b: 2.67 +/- 0.093</text>
<rect x="440.5" y="532.6" width="148" height="148" fill="#ccc" filter="url(#skyg)"/>
<rect x="440.5" y="532.6" width="148" height="148" fill="url(#corner)"/>
<ellipse cx="508.5" cy="596.8" rx="24" ry="25" fill="url(#blob2)"/>
<rect x="465.3" y="557.8" width="98.4" height="98.0" fill="none" stroke="#f00" stroke-width="1.3"/>
<path d="M477.6,606.5 H507.5 M522.7,606.5 H551.7 M514.8,570.8 V590.9 M514.8,613.7 V643.6" stroke="#f00" stroke-width="1.3"/>
<ellipse cx="509.8" cy="597.0" rx="26.3" ry="27.0" fill="none" stroke="#f2c200" stroke-width="1.4"/>
<rect x="503.5" y="591.4" width="12.5" height="12.9" fill="none" stroke="#0000ff" stroke-width="1.3"/>
<text x="514.20" y="546.30" font-family="Liberation Sans, sans-serif" font-size="11.66" fill="#f00" text-anchor="middle" textLength="8.23" lengthAdjust="spacingAndGlyphs" >N</text>
<text x="450.50" y="610.50" font-family="Liberation Sans, sans-serif" font-size="11.66" fill="#f00" text-anchor="middle" textLength="6.95" lengthAdjust="spacingAndGlyphs" >E</text>
<rect x="440.50" y="532.60" width="148" height="148" fill="none" stroke="#222" stroke-width="1.1"/>
<line x1="449.12" y1="680.60" x2="449.12" y2="684.10" stroke="#222" stroke-width="0.8"/>
<text x="449.12" y="696.00" font-family="Liberation Sans, sans-serif" font-size="10.81" fill="#222" text-anchor="middle" textLength="15.04" lengthAdjust="spacingAndGlyphs" >−4</text>
<line x1="437.00" y1="671.68" x2="440.50" y2="671.68" stroke="#222" stroke-width="0.8"/>
<text x="435.00" y="675.68" font-family="Liberation Sans, sans-serif" font-size="10.81" fill="#222" text-anchor="end" textLength="15.04" lengthAdjust="spacingAndGlyphs" >−4</text>
<line x1="481.86" y1="680.60" x2="481.86" y2="684.10" stroke="#222" stroke-width="0.8"/>
<text x="481.86" y="696.00" font-family="Liberation Sans, sans-serif" font-size="10.81" fill="#222" text-anchor="middle" textLength="15.04" lengthAdjust="spacingAndGlyphs" >−2</text>
<line x1="437.00" y1="638.94" x2="440.50" y2="638.94" stroke="#222" stroke-width="0.8"/>
<text x="435.00" y="642.94" font-family="Liberation Sans, sans-serif" font-size="10.81" fill="#222" text-anchor="end" textLength="15.04" lengthAdjust="spacingAndGlyphs" >−2</text>
<line x1="514.60" y1="680.60" x2="514.60" y2="684.10" stroke="#222" stroke-width="0.8"/>
<text x="514.60" y="696.00" font-family="Liberation Sans, sans-serif" font-size="10.81" fill="#222" text-anchor="middle" textLength="6.49" lengthAdjust="spacingAndGlyphs" >0</text>
<line x1="437.00" y1="606.20" x2="440.50" y2="606.20" stroke="#222" stroke-width="0.8"/>
<text x="435.00" y="610.20" font-family="Liberation Sans, sans-serif" font-size="10.81" fill="#222" text-anchor="end" textLength="6.49" lengthAdjust="spacingAndGlyphs" >0</text>
<line x1="547.34" y1="680.60" x2="547.34" y2="684.10" stroke="#222" stroke-width="0.8"/>
<text x="547.34" y="696.00" font-family="Liberation Sans, sans-serif" font-size="10.81" fill="#222" text-anchor="middle" textLength="6.49" lengthAdjust="spacingAndGlyphs" >2</text>
<line x1="437.00" y1="573.46" x2="440.50" y2="573.46" stroke="#222" stroke-width="0.8"/>
<text x="435.00" y="577.46" font-family="Liberation Sans, sans-serif" font-size="10.81" fill="#222" text-anchor="end" textLength="6.49" lengthAdjust="spacingAndGlyphs" >2</text>
<line x1="580.08" y1="680.60" x2="580.08" y2="684.10" stroke="#222" stroke-width="0.8"/>
<text x="580.08" y="696.00" font-family="Liberation Sans, sans-serif" font-size="10.81" fill="#222" text-anchor="middle" textLength="6.49" lengthAdjust="spacingAndGlyphs" >4</text>
<line x1="437.00" y1="540.72" x2="440.50" y2="540.72" stroke="#222" stroke-width="0.8"/>
<text x="435.00" y="544.72" font-family="Liberation Sans, sans-serif" font-size="10.81" fill="#222" text-anchor="end" textLength="6.49" lengthAdjust="spacingAndGlyphs" >4</text>
<text x="514.60" y="525.00" font-family="Liberation Sans, sans-serif" font-size="13.57" fill="#111" text-anchor="middle" textLength="74.51" lengthAdjust="spacingAndGlyphs" >HSC(26.2) r</text>
<text x="514.60" y="706.80" font-family="Liberation Sans, sans-serif" font-size="11.40" fill="#222" text-anchor="middle" textLength="119.66" lengthAdjust="spacingAndGlyphs" >m:18.5  re:1.6"  s:0.7"</text>
<text x="514.60" y="718.30" font-family="Liberation Sans, sans-serif" font-size="11.40" fill="#222" text-anchor="middle" textLength="106.99" lengthAdjust="spacingAndGlyphs" >EWr: 0, PLAE: 0.045</text>
</svg></body></html>
